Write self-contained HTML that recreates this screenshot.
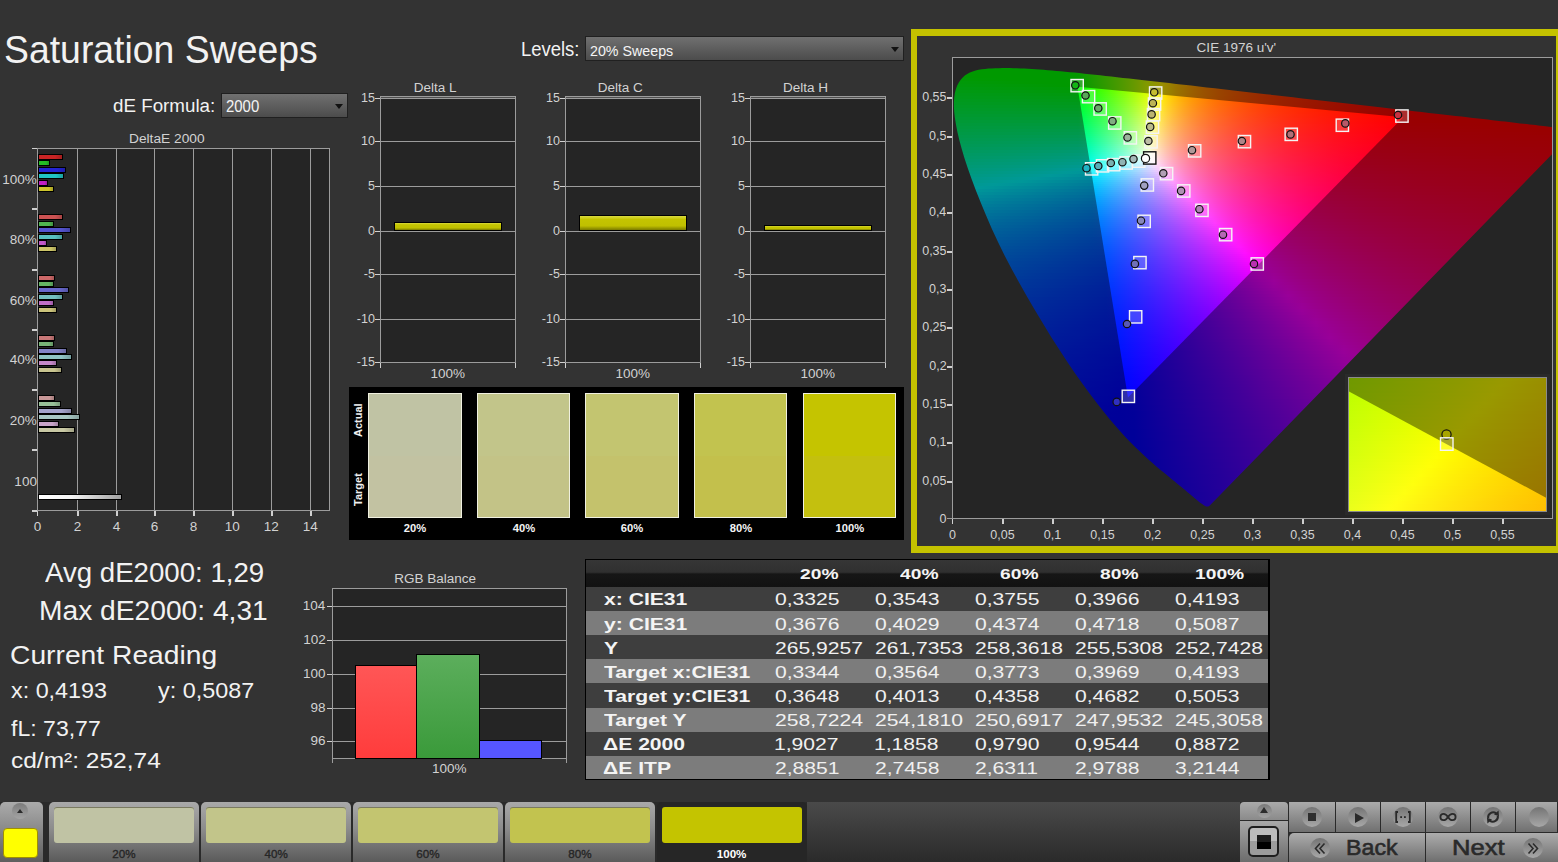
<!DOCTYPE html><html><head><meta charset="utf-8"><style>
*{margin:0;padding:0;box-sizing:border-box}
html,body{width:1558px;height:862px;overflow:hidden;background:#333333;font-family:"Liberation Sans",sans-serif;color:#e8e8e8}
.a{position:absolute}
.t{position:absolute;white-space:nowrap;line-height:1}
</style></head><body><div class="t" style="left:3.92px;top:29.78px;font-size:39.24px;color:#f2f2f2;transform:scaleX(0.9525);transform-origin:0 0;">Saturation Sweeps</div><div class="t" style="left:521.22px;top:39.51px;font-size:19.48px;color:#f2f2f2;transform:scaleX(0.9480);transform-origin:0 0;">Levels:</div><div class="a" style="left:585px;top:36px;width:319px;height:25px;background:#202020;"></div><div class="a" style="left:586px;top:37px;width:317px;height:23px;background:linear-gradient(#707070,#4c4c4c);"></div><div class="t" style="left:590.29px;top:43.73px;font-size:14.97px;color:#f4f4f4;transform:scaleX(0.9526);transform-origin:0 0;">20% Sweeps</div><div class="a" style="left:890.5px;top:47px;width:0;height:0;border-left:4.2px solid transparent;border-right:4.2px solid transparent;border-top:5.5px solid #111"></div><div class="t" style="left:113.25px;top:97.07px;font-size:18.46px;color:#f2f2f2;transform:scaleX(1.0182);transform-origin:0 0;">dE Formula:</div><div class="a" style="left:221px;top:93px;width:127px;height:25px;background:#202020;"></div><div class="a" style="left:222px;top:94px;width:125px;height:23px;background:linear-gradient(#707070,#4c4c4c);"></div><div class="t" style="left:226.05px;top:99.19px;font-size:15.84px;color:#f4f4f4;transform:scaleX(0.9438);transform-origin:0 0;">2000</div><div class="a" style="left:334.5px;top:103.8px;width:0;height:0;border-left:4.2px solid transparent;border-right:4.2px solid transparent;border-top:5.5px solid #111"></div><div class="t" style="left:129.20px;top:131.93px;font-size:13.08px;color:#d2d2d2;transform:scaleX(1.0495);transform-origin:0 0;">DeltaE 2000</div><div class="a" style="left:37px;top:148px;width:293px;height:362px;background:#252525;"></div><div class="a" style="left:77px;top:148px;width:1px;height:362px;background:#9c9c9c;"></div><div class="a" style="left:116px;top:148px;width:1px;height:362px;background:#9c9c9c;"></div><div class="a" style="left:154px;top:148px;width:1px;height:362px;background:#9c9c9c;"></div><div class="a" style="left:193px;top:148px;width:1px;height:362px;background:#9c9c9c;"></div><div class="a" style="left:232px;top:148px;width:1px;height:362px;background:#9c9c9c;"></div><div class="a" style="left:271px;top:148px;width:1px;height:362px;background:#9c9c9c;"></div><div class="a" style="left:310px;top:148px;width:1px;height:362px;background:#9c9c9c;"></div><div class="a" style="left:37px;top:148px;width:293px;height:1px;background:#9c9c9c;"></div><div class="a" style="left:329px;top:148px;width:1px;height:362px;background:#9c9c9c;"></div><div class="a" style="left:37px;top:148px;width:1px;height:368px;background:#9c9c9c;"></div><div class="a" style="left:37px;top:510px;width:293px;height:1px;background:#9c9c9c;"></div><div class="a" style="left:32px;top:148px;width:5px;height:1px;background:#d0d0d0;"></div><div class="a" style="left:32px;top:208px;width:5px;height:2px;background:#d0d0d0;"></div><div class="a" style="left:32px;top:269px;width:5px;height:2px;background:#d0d0d0;"></div><div class="a" style="left:32px;top:329px;width:5px;height:2px;background:#d0d0d0;"></div><div class="a" style="left:32px;top:389px;width:5px;height:2px;background:#d0d0d0;"></div><div class="a" style="left:32px;top:449px;width:5px;height:2px;background:#d0d0d0;"></div><div class="a" style="left:32px;top:510px;width:5px;height:2px;background:#d0d0d0;"></div><div class="a" style="left:37px;top:511px;width:1px;height:5px;background:#d0d0d0;"></div><div class="t" style="left:33.72px;top:520.06px;font-size:13.52px;color:#d2d2d2;">0</div><div class="a" style="left:77px;top:511px;width:2px;height:5px;background:#d0d0d0;"></div><div class="t" style="left:73.75px;top:520.06px;font-size:13.52px;color:#d2d2d2;">2</div><div class="a" style="left:116px;top:511px;width:2px;height:5px;background:#d0d0d0;"></div><div class="t" style="left:112.78px;top:520.06px;font-size:13.52px;color:#d2d2d2;">4</div><div class="a" style="left:154px;top:511px;width:2px;height:5px;background:#d0d0d0;"></div><div class="t" style="left:150.68px;top:520.06px;font-size:13.52px;color:#d2d2d2;">6</div><div class="a" style="left:193px;top:511px;width:2px;height:5px;background:#d0d0d0;"></div><div class="t" style="left:189.72px;top:520.06px;font-size:13.52px;color:#d2d2d2;">8</div><div class="a" style="left:232px;top:511px;width:2px;height:5px;background:#d0d0d0;"></div><div class="t" style="left:224.73px;top:520.06px;font-size:13.52px;color:#d2d2d2;">10</div><div class="a" style="left:271px;top:511px;width:2px;height:5px;background:#d0d0d0;"></div><div class="t" style="left:263.83px;top:520.06px;font-size:13.52px;color:#d2d2d2;">12</div><div class="a" style="left:310px;top:511px;width:2px;height:5px;background:#d0d0d0;"></div><div class="t" style="left:302.66px;top:520.06px;font-size:13.52px;color:#d2d2d2;">14</div><div class="t" style="left:2.27px;top:172.56px;font-size:13.52px;color:#d2d2d2;">100%</div><div class="t" style="left:9.84px;top:232.56px;font-size:13.52px;color:#d2d2d2;">80%</div><div class="t" style="left:9.84px;top:293.56px;font-size:13.52px;color:#d2d2d2;">60%</div><div class="t" style="left:9.84px;top:352.56px;font-size:13.52px;color:#d2d2d2;">40%</div><div class="t" style="left:9.84px;top:413.56px;font-size:13.52px;color:#d2d2d2;">20%</div><div class="t" style="left:14.37px;top:474.56px;font-size:13.52px;color:#d2d2d2;">100</div><div class="a" style="left:38px;top:154px;width:24.6px;height:6px;border:1px solid #000;background:linear-gradient(90deg,#c82424,#c82424 70%,#00000030),#c82424"></div><div class="a" style="left:38px;top:160px;width:11.5px;height:6px;border:1px solid #000;background:linear-gradient(90deg,#24bc24,#24bc24 70%,#00000030),#24bc24"></div><div class="a" style="left:38px;top:167px;width:28.4px;height:6px;border:1px solid #000;background:linear-gradient(90deg,#2424d4,#2424d4 70%,#00000030),#2424d4"></div><div class="a" style="left:38px;top:173px;width:25.6px;height:6px;border:1px solid #000;background:linear-gradient(90deg,#20c4c4,#20c4c4 70%,#00000030),#20c4c4"></div><div class="a" style="left:38px;top:180px;width:10.3px;height:6px;border:1px solid #000;background:linear-gradient(90deg,#c020c4,#c020c4 70%,#00000030),#c020c4"></div><div class="a" style="left:38px;top:186px;width:16.3px;height:6px;border:1px solid #000;background:linear-gradient(90deg,#ccc42c,#ccc42c 70%,#00000030),#ccc42c"></div><div class="a" style="left:38px;top:214px;width:25.3px;height:6px;border:1px solid #000;background:linear-gradient(90deg,#cc5252,#cc5252 70%,#00000030),#cc5252"></div><div class="a" style="left:38px;top:221px;width:16.3px;height:6px;border:1px solid #000;background:linear-gradient(90deg,#50b450,#50b450 70%,#00000030),#50b450"></div><div class="a" style="left:38px;top:227px;width:32.6px;height:6px;border:1px solid #000;background:linear-gradient(90deg,#5454d0,#5454d0 70%,#00000030),#5454d0"></div><div class="a" style="left:38px;top:234px;width:25.3px;height:6px;border:1px solid #000;background:linear-gradient(90deg,#58c0c0,#58c0c0 70%,#00000030),#58c0c0"></div><div class="a" style="left:38px;top:240px;width:9.0px;height:6px;border:1px solid #000;background:linear-gradient(90deg,#c058c8,#c058c8 70%,#00000030),#c058c8"></div><div class="a" style="left:38px;top:246px;width:18.6px;height:6px;border:1px solid #000;background:linear-gradient(90deg,#ccc468,#ccc468 70%,#00000030),#ccc468"></div><div class="a" style="left:38px;top:275px;width:16.6px;height:6px;border:1px solid #000;background:linear-gradient(90deg,#cc6868,#cc6868 70%,#00000030),#cc6868"></div><div class="a" style="left:38px;top:281px;width:15.5px;height:6px;border:1px solid #000;background:linear-gradient(90deg,#64b464,#64b464 70%,#00000030),#64b464"></div><div class="a" style="left:38px;top:287px;width:30.6px;height:6px;border:1px solid #000;background:linear-gradient(90deg,#6868cc,#6868cc 70%,#00000030),#6868cc"></div><div class="a" style="left:38px;top:294px;width:25.3px;height:6px;border:1px solid #000;background:linear-gradient(90deg,#74c0c0,#74c0c0 70%,#00000030),#74c0c0"></div><div class="a" style="left:38px;top:300px;width:15.5px;height:6px;border:1px solid #000;background:linear-gradient(90deg,#c070c8,#c070c8 70%,#00000030),#c070c8"></div><div class="a" style="left:38px;top:307px;width:18.6px;height:6px;border:1px solid #000;background:linear-gradient(90deg,#ccc47c,#ccc47c 70%,#00000030),#ccc47c"></div><div class="a" style="left:38px;top:335px;width:16.6px;height:6px;border:1px solid #000;background:linear-gradient(90deg,#c87878,#c87878 70%,#00000030),#c87878"></div><div class="a" style="left:38px;top:341px;width:15.5px;height:6px;border:1px solid #000;background:linear-gradient(90deg,#78b478,#78b478 70%,#00000030),#78b478"></div><div class="a" style="left:38px;top:348px;width:29.4px;height:6px;border:1px solid #000;background:linear-gradient(90deg,#8484c8,#8484c8 70%,#00000030),#8484c8"></div><div class="a" style="left:38px;top:354px;width:33.6px;height:6px;border:1px solid #000;background:linear-gradient(90deg,#90c4c4,#90c4c4 70%,#00000030),#90c4c4"></div><div class="a" style="left:38px;top:360px;width:18.6px;height:6px;border:1px solid #000;background:linear-gradient(90deg,#c488c8,#c488c8 70%,#00000030),#c488c8"></div><div class="a" style="left:38px;top:367px;width:23.5px;height:6px;border:1px solid #000;background:linear-gradient(90deg,#c8c490,#c8c490 70%,#00000030),#c8c490"></div><div class="a" style="left:38px;top:395px;width:16.6px;height:6px;border:1px solid #000;background:linear-gradient(90deg,#c89898,#c89898 70%,#00000030),#c89898"></div><div class="a" style="left:38px;top:401px;width:23.0px;height:6px;border:1px solid #000;background:linear-gradient(90deg,#98c098,#98c098 70%,#00000030),#98c098"></div><div class="a" style="left:38px;top:408px;width:34.4px;height:6px;border:1px solid #000;background:linear-gradient(90deg,#a4a4cc,#a4a4cc 70%,#00000030),#a4a4cc"></div><div class="a" style="left:38px;top:414px;width:42.4px;height:6px;border:1px solid #000;background:linear-gradient(90deg,#a8c8c4,#a8c8c4 70%,#00000030),#a8c8c4"></div><div class="a" style="left:38px;top:421px;width:21.3px;height:6px;border:1px solid #000;background:linear-gradient(90deg,#c8a4c8,#c8a4c8 70%,#00000030),#c8a4c8"></div><div class="a" style="left:38px;top:427px;width:37.4px;height:6px;border:1px solid #000;background:linear-gradient(90deg,#c8c8a4,#c8c8a4 70%,#00000030),#c8c8a4"></div><div class="a" style="left:38px;top:494px;width:84px;height:6px;border:1px solid #000;background:linear-gradient(90deg,#fff,#f4f4f4 40%,#a0a0a0)"></div><div class="t" style="left:413.77px;top:80.86px;font-size:13.52px;color:#d2d2d2;">Delta L</div><div class="a" style="left:380px;top:96px;width:135px;height:266px;background:#252525;"></div><div class="a" style="left:380px;top:96px;width:136px;height:1px;background:#9c9c9c;"></div><div class="a" style="left:381px;top:97px;width:134px;height:1px;background:#505050;"></div><div class="a" style="left:380px;top:98px;width:136px;height:1px;background:#9c9c9c;"></div><div class="a" style="left:375px;top:98px;width:5px;height:1px;background:#d0d0d0;"></div><div class="t" style="left:361.02px;top:91.72px;font-size:12.50px;color:#d2d2d2;">15</div><div class="a" style="left:380px;top:141px;width:136px;height:1px;background:#9c9c9c;"></div><div class="a" style="left:375px;top:141px;width:5px;height:1px;background:#d0d0d0;"></div><div class="t" style="left:360.96px;top:134.72px;font-size:12.50px;color:#d2d2d2;">10</div><div class="a" style="left:380px;top:186px;width:136px;height:1px;background:#9c9c9c;"></div><div class="a" style="left:375px;top:186px;width:5px;height:1px;background:#d0d0d0;"></div><div class="t" style="left:367.96px;top:179.72px;font-size:12.50px;color:#d2d2d2;">5</div><div class="a" style="left:380px;top:231px;width:136px;height:1px;background:#9c9c9c;"></div><div class="a" style="left:375px;top:231px;width:5px;height:1px;background:#d0d0d0;"></div><div class="t" style="left:367.90px;top:224.72px;font-size:12.50px;color:#d2d2d2;">0</div><div class="a" style="left:380px;top:274px;width:136px;height:1px;background:#9c9c9c;"></div><div class="a" style="left:375px;top:274px;width:5px;height:1px;background:#d0d0d0;"></div><div class="t" style="left:363.77px;top:267.72px;font-size:12.50px;color:#d2d2d2;">-5</div><div class="a" style="left:380px;top:319px;width:136px;height:1px;background:#9c9c9c;"></div><div class="a" style="left:375px;top:319px;width:5px;height:1px;background:#d0d0d0;"></div><div class="t" style="left:356.77px;top:312.72px;font-size:12.50px;color:#d2d2d2;">-10</div><div class="a" style="left:380px;top:362px;width:136px;height:1px;background:#9c9c9c;"></div><div class="a" style="left:375px;top:362px;width:5px;height:1px;background:#d0d0d0;"></div><div class="t" style="left:356.84px;top:355.72px;font-size:12.50px;color:#d2d2d2;">-15</div><div class="a" style="left:380px;top:96px;width:1px;height:266px;background:#9c9c9c;"></div><div class="a" style="left:515px;top:96px;width:1px;height:266px;background:#9c9c9c;"></div><div class="a" style="left:380px;top:363px;width:1px;height:5px;background:#d0d0d0;"></div><div class="a" style="left:515px;top:363px;width:1px;height:5px;background:#d0d0d0;"></div><div class="t" style="left:430.43px;top:366.56px;font-size:13.52px;color:#d2d2d2;">100%</div><div class="a" style="left:394px;top:222px;width:108px;height:9px;border:1px solid #000;background:linear-gradient(#dada40,#c4c400 25%,#c0c000 70%,#7a7a00)"></div><div class="t" style="left:597.69px;top:80.86px;font-size:13.52px;color:#d2d2d2;">Delta C</div><div class="a" style="left:565px;top:96px;width:135px;height:266px;background:#252525;"></div><div class="a" style="left:565px;top:96px;width:136px;height:1px;background:#9c9c9c;"></div><div class="a" style="left:566px;top:97px;width:134px;height:1px;background:#505050;"></div><div class="a" style="left:565px;top:98px;width:136px;height:1px;background:#9c9c9c;"></div><div class="a" style="left:560px;top:98px;width:5px;height:1px;background:#d0d0d0;"></div><div class="t" style="left:546.02px;top:91.72px;font-size:12.50px;color:#d2d2d2;">15</div><div class="a" style="left:565px;top:141px;width:136px;height:1px;background:#9c9c9c;"></div><div class="a" style="left:560px;top:141px;width:5px;height:1px;background:#d0d0d0;"></div><div class="t" style="left:545.96px;top:134.72px;font-size:12.50px;color:#d2d2d2;">10</div><div class="a" style="left:565px;top:186px;width:136px;height:1px;background:#9c9c9c;"></div><div class="a" style="left:560px;top:186px;width:5px;height:1px;background:#d0d0d0;"></div><div class="t" style="left:552.96px;top:179.72px;font-size:12.50px;color:#d2d2d2;">5</div><div class="a" style="left:565px;top:231px;width:136px;height:1px;background:#9c9c9c;"></div><div class="a" style="left:560px;top:231px;width:5px;height:1px;background:#d0d0d0;"></div><div class="t" style="left:552.90px;top:224.72px;font-size:12.50px;color:#d2d2d2;">0</div><div class="a" style="left:565px;top:274px;width:136px;height:1px;background:#9c9c9c;"></div><div class="a" style="left:560px;top:274px;width:5px;height:1px;background:#d0d0d0;"></div><div class="t" style="left:548.77px;top:267.72px;font-size:12.50px;color:#d2d2d2;">-5</div><div class="a" style="left:565px;top:319px;width:136px;height:1px;background:#9c9c9c;"></div><div class="a" style="left:560px;top:319px;width:5px;height:1px;background:#d0d0d0;"></div><div class="t" style="left:541.77px;top:312.72px;font-size:12.50px;color:#d2d2d2;">-10</div><div class="a" style="left:565px;top:362px;width:136px;height:1px;background:#9c9c9c;"></div><div class="a" style="left:560px;top:362px;width:5px;height:1px;background:#d0d0d0;"></div><div class="t" style="left:541.84px;top:355.72px;font-size:12.50px;color:#d2d2d2;">-15</div><div class="a" style="left:565px;top:96px;width:1px;height:266px;background:#9c9c9c;"></div><div class="a" style="left:700px;top:96px;width:1px;height:266px;background:#9c9c9c;"></div><div class="a" style="left:565px;top:363px;width:1px;height:5px;background:#d0d0d0;"></div><div class="a" style="left:700px;top:363px;width:1px;height:5px;background:#d0d0d0;"></div><div class="t" style="left:615.43px;top:366.56px;font-size:13.52px;color:#d2d2d2;">100%</div><div class="a" style="left:579px;top:215px;width:108px;height:16px;border:1px solid #000;background:linear-gradient(#dada40,#c4c400 25%,#c0c000 70%,#7a7a00)"></div><div class="t" style="left:782.99px;top:80.86px;font-size:13.52px;color:#d2d2d2;">Delta H</div><div class="a" style="left:750px;top:96px;width:135px;height:266px;background:#252525;"></div><div class="a" style="left:750px;top:96px;width:136px;height:1px;background:#9c9c9c;"></div><div class="a" style="left:751px;top:97px;width:134px;height:1px;background:#505050;"></div><div class="a" style="left:750px;top:98px;width:136px;height:1px;background:#9c9c9c;"></div><div class="a" style="left:745px;top:98px;width:5px;height:1px;background:#d0d0d0;"></div><div class="t" style="left:731.02px;top:91.72px;font-size:12.50px;color:#d2d2d2;">15</div><div class="a" style="left:750px;top:141px;width:136px;height:1px;background:#9c9c9c;"></div><div class="a" style="left:745px;top:141px;width:5px;height:1px;background:#d0d0d0;"></div><div class="t" style="left:730.96px;top:134.72px;font-size:12.50px;color:#d2d2d2;">10</div><div class="a" style="left:750px;top:186px;width:136px;height:1px;background:#9c9c9c;"></div><div class="a" style="left:745px;top:186px;width:5px;height:1px;background:#d0d0d0;"></div><div class="t" style="left:737.96px;top:179.72px;font-size:12.50px;color:#d2d2d2;">5</div><div class="a" style="left:750px;top:231px;width:136px;height:1px;background:#9c9c9c;"></div><div class="a" style="left:745px;top:231px;width:5px;height:1px;background:#d0d0d0;"></div><div class="t" style="left:737.90px;top:224.72px;font-size:12.50px;color:#d2d2d2;">0</div><div class="a" style="left:750px;top:274px;width:136px;height:1px;background:#9c9c9c;"></div><div class="a" style="left:745px;top:274px;width:5px;height:1px;background:#d0d0d0;"></div><div class="t" style="left:733.77px;top:267.72px;font-size:12.50px;color:#d2d2d2;">-5</div><div class="a" style="left:750px;top:319px;width:136px;height:1px;background:#9c9c9c;"></div><div class="a" style="left:745px;top:319px;width:5px;height:1px;background:#d0d0d0;"></div><div class="t" style="left:726.77px;top:312.72px;font-size:12.50px;color:#d2d2d2;">-10</div><div class="a" style="left:750px;top:362px;width:136px;height:1px;background:#9c9c9c;"></div><div class="a" style="left:745px;top:362px;width:5px;height:1px;background:#d0d0d0;"></div><div class="t" style="left:726.84px;top:355.72px;font-size:12.50px;color:#d2d2d2;">-15</div><div class="a" style="left:750px;top:96px;width:1px;height:266px;background:#9c9c9c;"></div><div class="a" style="left:885px;top:96px;width:1px;height:266px;background:#9c9c9c;"></div><div class="a" style="left:750px;top:363px;width:1px;height:5px;background:#d0d0d0;"></div><div class="a" style="left:885px;top:363px;width:1px;height:5px;background:#d0d0d0;"></div><div class="t" style="left:800.43px;top:366.56px;font-size:13.52px;color:#d2d2d2;">100%</div><div class="a" style="left:764px;top:225px;width:108px;height:6px;border:1px solid #000;background:linear-gradient(#dada40,#c4c400 25%,#c0c000 70%,#7a7a00)"></div><div class="a" style="left:349px;top:387px;width:555px;height:153px;background:#000;"></div><div class="a" style="left:368px;top:393px;width:94px;height:125px;border:1px solid #f0f0e0;background:linear-gradient(#c0c3a4 50%,#c2c2a2 50%)"></div><div class="t" style="left:403.75px;top:522.53px;font-size:11.19px;color:#f4f4f4;font-weight:bold;">20%</div><div class="a" style="left:477px;top:393px;width:93px;height:125px;border:1px solid #f0f0e0;background:linear-gradient(#c2c58a 50%,#c3c387 50%)"></div><div class="t" style="left:512.86px;top:522.53px;font-size:11.19px;color:#f4f4f4;font-weight:bold;">40%</div><div class="a" style="left:585px;top:393px;width:94px;height:125px;border:1px solid #f0f0e0;background:linear-gradient(#c3c570 50%,#c4c26c 50%)"></div><div class="t" style="left:620.75px;top:522.53px;font-size:11.19px;color:#f4f4f4;font-weight:bold;">60%</div><div class="a" style="left:694px;top:393px;width:93px;height:125px;border:1px solid #f0f0e0;background:linear-gradient(#c2c34f 50%,#c3c04c 50%)"></div><div class="t" style="left:729.78px;top:522.53px;font-size:11.19px;color:#f4f4f4;font-weight:bold;">80%</div><div class="a" style="left:803px;top:393px;width:93px;height:125px;border:1px solid #f0f0e0;background:linear-gradient(#c5c400 50%,#c4c00e 50%)"></div><div class="t" style="left:835.48px;top:522.53px;font-size:11.19px;color:#f4f4f4;font-weight:bold;">100%</div><div class="t" style="left:352.5px;top:437px;font-size:11px;font-weight:bold;color:#f0f0f0;transform:rotate(-90deg);transform-origin:0 0">Actual</div><div class="t" style="left:352.5px;top:506px;font-size:11px;font-weight:bold;color:#f0f0f0;transform:rotate(-90deg);transform-origin:0 0">Target</div><div class="t" style="left:394.21px;top:572.06px;font-size:13.52px;color:#d2d2d2;">RGB Balance</div><div class="a" style="left:332px;top:588px;width:234px;height:170px;background:#252525;"></div><div class="a" style="left:332px;top:588px;width:235px;height:1px;background:#9c9c9c;"></div><div class="a" style="left:566px;top:588px;width:1px;height:175px;background:#9c9c9c;"></div><div class="a" style="left:332px;top:588px;width:1px;height:175px;background:#9c9c9c;"></div><div class="a" style="left:332px;top:606px;width:234px;height:1px;background:#9c9c9c;"></div><div class="a" style="left:327px;top:606px;width:5px;height:1px;background:#d0d0d0;"></div><div class="t" style="left:302.83px;top:599.16px;font-size:13.52px;color:#d2d2d2;">104</div><div class="a" style="left:332px;top:640px;width:234px;height:1px;background:#9c9c9c;"></div><div class="a" style="left:327px;top:640px;width:5px;height:1px;background:#d0d0d0;"></div><div class="t" style="left:303.17px;top:633.16px;font-size:13.52px;color:#d2d2d2;">102</div><div class="a" style="left:332px;top:674px;width:234px;height:1px;background:#9c9c9c;"></div><div class="a" style="left:327px;top:674px;width:5px;height:1px;background:#d0d0d0;"></div><div class="t" style="left:302.97px;top:667.16px;font-size:13.52px;color:#d2d2d2;">100</div><div class="a" style="left:332px;top:708px;width:234px;height:1px;background:#9c9c9c;"></div><div class="a" style="left:327px;top:708px;width:5px;height:1px;background:#d0d0d0;"></div><div class="t" style="left:310.54px;top:701.16px;font-size:13.52px;color:#d2d2d2;">98</div><div class="a" style="left:332px;top:741px;width:234px;height:1px;background:#9c9c9c;"></div><div class="a" style="left:327px;top:741px;width:5px;height:1px;background:#d0d0d0;"></div><div class="t" style="left:310.54px;top:734.16px;font-size:13.52px;color:#d2d2d2;">96</div><div class="a" style="left:332px;top:758px;width:235px;height:1px;background:#9c9c9c;"></div><div class="a" style="left:355px;top:665px;width:62px;height:94px;border:1px solid #000;background:linear-gradient(#ff5656,#ff3c3c)"></div><div class="a" style="left:416px;top:654px;width:64px;height:105px;border:1px solid #000;background:linear-gradient(#5cae5c,#3a9a3a)"></div><div class="a" style="left:479px;top:740px;width:63px;height:19px;border:1px solid #000;background:#5656ff"></div><div class="t" style="left:432.03px;top:762.06px;font-size:13.52px;color:#d2d2d2;">100%</div><div class="t" style="left:45.00px;top:559.96px;font-size:26.74px;color:#f2f2f2;transform:scaleX(1.0338);transform-origin:0 0;">Avg dE2000: 1,29</div><div class="t" style="left:39.44px;top:597.76px;font-size:26.74px;color:#f2f2f2;transform:scaleX(1.0544);transform-origin:0 0;">Max dE2000: 4,31</div><div class="t" style="left:10.29px;top:643.10px;font-size:25.87px;color:#f2f2f2;transform:scaleX(1.0921);transform-origin:0 0;">Current Reading</div><div class="t" style="left:11.47px;top:679.54px;font-size:21.80px;color:#f2f2f2;transform:scaleX(1.0708);transform-origin:0 0;">x: 0,4193</div><div class="t" style="left:157.88px;top:679.54px;font-size:21.80px;color:#f2f2f2;transform:scaleX(1.0732);transform-origin:0 0;">y: 0,5087</div><div class="t" style="left:11.35px;top:716.81px;font-size:22.67px;color:#f2f2f2;transform:scaleX(1.0181);transform-origin:0 0;">fL: 73,77</div><div class="t" style="left:10.72px;top:748.81px;font-size:22.67px;color:#f2f2f2;transform:scaleX(1.0811);transform-origin:0 0;">cd/m²: 252,74</div><div class="a" style="left:585px;top:559px;width:685px;height:221px;background:#000;"></div><div class="a" style="left:586px;top:560px;width:682px;height:27px;background:linear-gradient(#363636,#303030 45%,#161616 52%,#121212);"></div><div class="t" style="left:800.18px;top:566.55px;font-size:14.83px;color:#f4f4f4;font-weight:bold;transform:scaleX(1.2970);transform-origin:0 0;">20%</div><div class="t" style="left:900.37px;top:566.55px;font-size:14.83px;color:#f4f4f4;font-weight:bold;transform:scaleX(1.2970);transform-origin:0 0;">40%</div><div class="t" style="left:1000.18px;top:566.55px;font-size:14.83px;color:#f4f4f4;font-weight:bold;transform:scaleX(1.2970);transform-origin:0 0;">60%</div><div class="t" style="left:1100.22px;top:566.55px;font-size:14.83px;color:#f4f4f4;font-weight:bold;transform:scaleX(1.2970);transform-origin:0 0;">80%</div><div class="t" style="left:1194.55px;top:566.55px;font-size:14.83px;color:#f4f4f4;font-weight:bold;transform:scaleX(1.2970);transform-origin:0 0;">100%</div><div class="a" style="left:586px;top:587.0px;width:682px;height:24.2px;background:#3e3e3e;"></div><div class="t" style="left:603.79px;top:592.47px;font-size:16.57px;color:#f4f4f4;font-weight:bold;transform:scaleX(1.2750);transform-origin:0 0;">x: CIE31</div><div class="t" style="left:774.75px;top:592.47px;font-size:16.57px;color:#f0f0f0;transform:scaleX(1.2750);transform-origin:0 0;">0,3325</div><div class="t" style="left:874.75px;top:592.47px;font-size:16.57px;color:#f0f0f0;transform:scaleX(1.2750);transform-origin:0 0;">0,3543</div><div class="t" style="left:974.75px;top:592.47px;font-size:16.57px;color:#f0f0f0;transform:scaleX(1.2750);transform-origin:0 0;">0,3755</div><div class="t" style="left:1074.75px;top:592.47px;font-size:16.57px;color:#f0f0f0;transform:scaleX(1.2750);transform-origin:0 0;">0,3966</div><div class="t" style="left:1174.75px;top:592.47px;font-size:16.57px;color:#f0f0f0;transform:scaleX(1.2750);transform-origin:0 0;">0,4193</div><div class="a" style="left:586px;top:611.1px;width:682px;height:24.2px;background:#7c7c7c;"></div><div class="t" style="left:603.79px;top:616.57px;font-size:16.57px;color:#f4f4f4;font-weight:bold;transform:scaleX(1.2750);transform-origin:0 0;">y: CIE31</div><div class="t" style="left:774.75px;top:616.57px;font-size:16.57px;color:#f0f0f0;transform:scaleX(1.2750);transform-origin:0 0;">0,3676</div><div class="t" style="left:874.75px;top:616.57px;font-size:16.57px;color:#f0f0f0;transform:scaleX(1.2750);transform-origin:0 0;">0,4029</div><div class="t" style="left:974.75px;top:616.57px;font-size:16.57px;color:#f0f0f0;transform:scaleX(1.2750);transform-origin:0 0;">0,4374</div><div class="t" style="left:1074.75px;top:616.57px;font-size:16.57px;color:#f0f0f0;transform:scaleX(1.2750);transform-origin:0 0;">0,4718</div><div class="t" style="left:1174.75px;top:616.57px;font-size:16.57px;color:#f0f0f0;transform:scaleX(1.2750);transform-origin:0 0;">0,5087</div><div class="a" style="left:586px;top:635.2px;width:682px;height:24.2px;background:#3e3e3e;"></div><div class="t" style="left:603.58px;top:640.67px;font-size:16.57px;color:#f4f4f4;font-weight:bold;transform:scaleX(1.2750);transform-origin:0 0;">Y</div><div class="t" style="left:774.54px;top:640.67px;font-size:16.57px;color:#f0f0f0;transform:scaleX(1.2750);transform-origin:0 0;">265,9257</div><div class="t" style="left:874.54px;top:640.67px;font-size:16.57px;color:#f0f0f0;transform:scaleX(1.2750);transform-origin:0 0;">261,7353</div><div class="t" style="left:974.54px;top:640.67px;font-size:16.57px;color:#f0f0f0;transform:scaleX(1.2750);transform-origin:0 0;">258,3618</div><div class="t" style="left:1074.54px;top:640.67px;font-size:16.57px;color:#f0f0f0;transform:scaleX(1.2750);transform-origin:0 0;">255,5308</div><div class="t" style="left:1174.54px;top:640.67px;font-size:16.57px;color:#f0f0f0;transform:scaleX(1.2750);transform-origin:0 0;">252,7428</div><div class="a" style="left:586px;top:659.3px;width:682px;height:24.2px;background:#7c7c7c;"></div><div class="t" style="left:603.79px;top:664.77px;font-size:16.57px;color:#f4f4f4;font-weight:bold;transform:scaleX(1.2750);transform-origin:0 0;">Target x:CIE31</div><div class="t" style="left:774.75px;top:664.77px;font-size:16.57px;color:#f0f0f0;transform:scaleX(1.2750);transform-origin:0 0;">0,3344</div><div class="t" style="left:874.75px;top:664.77px;font-size:16.57px;color:#f0f0f0;transform:scaleX(1.2750);transform-origin:0 0;">0,3564</div><div class="t" style="left:974.75px;top:664.77px;font-size:16.57px;color:#f0f0f0;transform:scaleX(1.2750);transform-origin:0 0;">0,3773</div><div class="t" style="left:1074.75px;top:664.77px;font-size:16.57px;color:#f0f0f0;transform:scaleX(1.2750);transform-origin:0 0;">0,3969</div><div class="t" style="left:1174.75px;top:664.77px;font-size:16.57px;color:#f0f0f0;transform:scaleX(1.2750);transform-origin:0 0;">0,4193</div><div class="a" style="left:586px;top:683.4px;width:682px;height:24.2px;background:#3e3e3e;"></div><div class="t" style="left:603.79px;top:688.87px;font-size:16.57px;color:#f4f4f4;font-weight:bold;transform:scaleX(1.2750);transform-origin:0 0;">Target y:CIE31</div><div class="t" style="left:774.75px;top:688.87px;font-size:16.57px;color:#f0f0f0;transform:scaleX(1.2750);transform-origin:0 0;">0,3648</div><div class="t" style="left:874.75px;top:688.87px;font-size:16.57px;color:#f0f0f0;transform:scaleX(1.2750);transform-origin:0 0;">0,4013</div><div class="t" style="left:974.75px;top:688.87px;font-size:16.57px;color:#f0f0f0;transform:scaleX(1.2750);transform-origin:0 0;">0,4358</div><div class="t" style="left:1074.75px;top:688.87px;font-size:16.57px;color:#f0f0f0;transform:scaleX(1.2750);transform-origin:0 0;">0,4682</div><div class="t" style="left:1174.75px;top:688.87px;font-size:16.57px;color:#f0f0f0;transform:scaleX(1.2750);transform-origin:0 0;">0,5053</div><div class="a" style="left:586px;top:707.5px;width:682px;height:24.2px;background:#7c7c7c;"></div><div class="t" style="left:603.79px;top:712.97px;font-size:16.57px;color:#f4f4f4;font-weight:bold;transform:scaleX(1.2750);transform-origin:0 0;">Target Y</div><div class="t" style="left:774.54px;top:712.97px;font-size:16.57px;color:#f0f0f0;transform:scaleX(1.2750);transform-origin:0 0;">258,7224</div><div class="t" style="left:874.54px;top:712.97px;font-size:16.57px;color:#f0f0f0;transform:scaleX(1.2750);transform-origin:0 0;">254,1810</div><div class="t" style="left:974.54px;top:712.97px;font-size:16.57px;color:#f0f0f0;transform:scaleX(1.2750);transform-origin:0 0;">250,6917</div><div class="t" style="left:1074.54px;top:712.97px;font-size:16.57px;color:#f0f0f0;transform:scaleX(1.2750);transform-origin:0 0;">247,9532</div><div class="t" style="left:1174.54px;top:712.97px;font-size:16.57px;color:#f0f0f0;transform:scaleX(1.2750);transform-origin:0 0;">245,3058</div><div class="a" style="left:586px;top:731.6px;width:682px;height:24.2px;background:#3e3e3e;"></div><div class="t" style="left:603.15px;top:737.07px;font-size:16.57px;color:#f4f4f4;font-weight:bold;transform:scaleX(1.2750);transform-origin:0 0;">ΔE 2000</div><div class="t" style="left:774.02px;top:737.07px;font-size:16.57px;color:#f0f0f0;transform:scaleX(1.2750);transform-origin:0 0;">1,9027</div><div class="t" style="left:874.02px;top:737.07px;font-size:16.57px;color:#f0f0f0;transform:scaleX(1.2750);transform-origin:0 0;">1,1858</div><div class="t" style="left:974.75px;top:737.07px;font-size:16.57px;color:#f0f0f0;transform:scaleX(1.2750);transform-origin:0 0;">0,9790</div><div class="t" style="left:1074.75px;top:737.07px;font-size:16.57px;color:#f0f0f0;transform:scaleX(1.2750);transform-origin:0 0;">0,9544</div><div class="t" style="left:1174.75px;top:737.07px;font-size:16.57px;color:#f0f0f0;transform:scaleX(1.2750);transform-origin:0 0;">0,8872</div><div class="a" style="left:586px;top:755.7px;width:682px;height:23.2px;background:#7c7c7c;"></div><div class="t" style="left:603.15px;top:761.17px;font-size:16.57px;color:#f4f4f4;font-weight:bold;transform:scaleX(1.2750);transform-origin:0 0;">ΔE ITP</div><div class="t" style="left:774.54px;top:761.17px;font-size:16.57px;color:#f0f0f0;transform:scaleX(1.2750);transform-origin:0 0;">2,8851</div><div class="t" style="left:874.54px;top:761.17px;font-size:16.57px;color:#f0f0f0;transform:scaleX(1.2750);transform-origin:0 0;">2,7458</div><div class="t" style="left:974.54px;top:761.17px;font-size:16.57px;color:#f0f0f0;transform:scaleX(1.2750);transform-origin:0 0;">2,6311</div><div class="t" style="left:1074.54px;top:761.17px;font-size:16.57px;color:#f0f0f0;transform:scaleX(1.2750);transform-origin:0 0;">2,9788</div><div class="t" style="left:1174.75px;top:761.17px;font-size:16.57px;color:#f0f0f0;transform:scaleX(1.2750);transform-origin:0 0;">3,2144</div><div class="a" style="left:0px;top:802px;width:1558px;height:60px;background:#2a2a2a;"></div><div class="a" style="left:0;top:802px;width:43px;height:60px;border-radius:5px 5px 0 0;background:linear-gradient(#ababab,#8a8a8a 45%,#5e5e5e)"></div><div class="a" style="left:12px;top:803px;width:16px;height:16px;border-radius:50%;background:linear-gradient(#7c7c7c,#a4a4a4)"></div><div class="a" style="left:16.5px;top:808.5px;width:0;height:0;border-left:3.7px solid transparent;border-right:3.7px solid transparent;border-bottom:4.8px solid #2a2a2a"></div><div class="a" style="left:3px;top:828px;width:35px;height:30px;border-radius:4px;background:#ffff00;border:1px solid #a09000"></div><div class="a" style="left:49px;top:802px;width:150px;height:60px;border-radius:5px 5px 0 0;background:linear-gradient(#a9a9a9,#8c8c8c 45%,#5a5a5a)"></div><div class="a" style="left:54px;top:807px;width:140px;height:36px;border-radius:3px;background:#c0c3a4;box-shadow:inset 0 1px 0 #7a7a60"></div><div class="t" style="left:112.28px;top:847.66px;font-size:11.63px;color:#262626;-webkit-text-stroke:0.35px #262626;">20%</div><div class="a" style="left:201px;top:802px;width:150px;height:60px;border-radius:5px 5px 0 0;background:linear-gradient(#a9a9a9,#8c8c8c 45%,#5a5a5a)"></div><div class="a" style="left:206px;top:807px;width:140px;height:36px;border-radius:3px;background:#c2c58a;box-shadow:inset 0 1px 0 #7a7a60"></div><div class="t" style="left:264.46px;top:847.66px;font-size:11.63px;color:#262626;-webkit-text-stroke:0.35px #262626;">40%</div><div class="a" style="left:353px;top:802px;width:150px;height:60px;border-radius:5px 5px 0 0;background:linear-gradient(#a9a9a9,#8c8c8c 45%,#5a5a5a)"></div><div class="a" style="left:358px;top:807px;width:140px;height:36px;border-radius:3px;background:#c3c570;box-shadow:inset 0 1px 0 #7a7a60"></div><div class="t" style="left:416.28px;top:847.66px;font-size:11.63px;color:#262626;-webkit-text-stroke:0.35px #262626;">60%</div><div class="a" style="left:505px;top:802px;width:150px;height:60px;border-radius:5px 5px 0 0;background:linear-gradient(#a9a9a9,#8c8c8c 45%,#5a5a5a)"></div><div class="a" style="left:510px;top:807px;width:140px;height:36px;border-radius:3px;background:#c2c34f;box-shadow:inset 0 1px 0 #7a7a60"></div><div class="t" style="left:568.31px;top:847.66px;font-size:11.63px;color:#262626;-webkit-text-stroke:0.35px #262626;">80%</div><div class="a" style="left:657px;top:802px;width:150px;height:60px;border-radius:5px 5px 0 0;background:#262626"></div><div class="a" style="left:662px;top:807px;width:140px;height:36px;border-radius:3px;background:#c4c400"></div><div class="t" style="left:716.71px;top:847.66px;font-size:11.63px;color:#ffffff;font-weight:bold;">100%</div><div class="a" style="left:807px;top:802px;width:433px;height:60px;background:linear-gradient(#4a4a4a,#2a2a2a)"></div><div class="a" style="left:1240px;top:802px;width:48px;height:18px;border-radius:4px 4px 0 0;background:linear-gradient(#aaaaaa,#8a8a8a)"></div><div class="a" style="left:1257px;top:804px;width:15px;height:14px;border-radius:50%;background:linear-gradient(#7a7a7a,#a2a2a2)"></div><div class="a" style="left:1260px;top:807px;width:0;height:0;border-left:4.5px solid transparent;border-right:4.5px solid transparent;border-bottom:6px solid #2c2c2c"></div><div class="a" style="left:1240px;top:821px;width:48px;height:41px;background:linear-gradient(#a8a8a8,#6c6c6c)"></div><div class="a" style="left:1248px;top:826px;width:31px;height:31px;border-radius:5px;border:2px solid #1e1e1e;background:linear-gradient(#bcbcbc 50%,#9c9c9c 50%)"></div><div class="a" style="left:1257px;top:835px;width:14px;height:14px;background:linear-gradient(#1c1c1c 50%,#000 50%)"></div><div class="a" style="left:1289px;top:802px;width:46px;height:30px;background:linear-gradient(#ababab,#707070)"></div><div class="a" style="left:1302px;top:807px;width:20px;height:20px;border-radius:50%;background:linear-gradient(#747474,#a8a8a8)"></div><div class="a" style="left:1336px;top:802px;width:44px;height:30px;background:linear-gradient(#ababab,#707070)"></div><div class="a" style="left:1348px;top:807px;width:20px;height:20px;border-radius:50%;background:linear-gradient(#747474,#a8a8a8)"></div><div class="a" style="left:1381px;top:802px;width:44px;height:30px;background:linear-gradient(#ababab,#707070)"></div><div class="a" style="left:1393px;top:807px;width:20px;height:20px;border-radius:50%;background:linear-gradient(#747474,#a8a8a8)"></div><div class="a" style="left:1426px;top:802px;width:44px;height:30px;background:linear-gradient(#ababab,#707070)"></div><div class="a" style="left:1438px;top:807px;width:20px;height:20px;border-radius:50%;background:linear-gradient(#747474,#a8a8a8)"></div><div class="a" style="left:1471px;top:802px;width:44px;height:30px;background:linear-gradient(#ababab,#707070)"></div><div class="a" style="left:1483px;top:807px;width:20px;height:20px;border-radius:50%;background:linear-gradient(#747474,#a8a8a8)"></div><div class="a" style="left:1516px;top:802px;width:41px;height:30px;background:linear-gradient(#ababab,#707070)"></div><div class="a" style="left:1529px;top:807px;width:20px;height:20px;border-radius:50%;background:linear-gradient(#747474,#a8a8a8)"></div><div class="a" style="left:1308px;top:813px;width:8px;height:8px;background:#2e2e2e"></div><div class="a" style="left:1355px;top:813px;width:0;height:0;border-top:5px solid transparent;border-bottom:5px solid transparent;border-left:9px solid #2a2a2a"></div><svg class="a" style="left:1393px;top:807px" width="20" height="20" viewBox="0 0 20 20"><path d="M5 5H3.2V15H5M15 5H16.8V15H15" stroke="#2a2a2a" stroke-width="1.8" fill="none"/><rect x="7.2" y="9.2" width="1.8" height="1.8" fill="#2a2a2a"/><rect x="11" y="9.2" width="1.8" height="1.8" fill="#2a2a2a"/></svg><svg class="a" style="left:1438px;top:807px" width="20" height="20" viewBox="0 0 20 20"><path d="M10 10C8.5 7.5 7 6.8 5.5 6.8C3.6 6.8 2.4 8.2 2.4 10C2.4 11.8 3.6 13.2 5.5 13.2C7 13.2 8.5 12.5 10 10C11.5 7.5 13 6.8 14.5 6.8C16.4 6.8 17.6 8.2 17.6 10C17.6 11.8 16.4 13.2 14.5 13.2C13 13.2 11.5 12.5 10 10Z" stroke="#2a2a2a" stroke-width="1.8" fill="none"/></svg><svg class="a" style="left:1484px;top:808px" width="18" height="18" viewBox="0 0 18 18"><path d="M4.2 10.2A5 5 0 0 1 12.2 5.4" stroke="#2a2a2a" stroke-width="2" fill="none"/><path d="M13.8 7.8A5 5 0 0 1 5.8 12.6" stroke="#2a2a2a" stroke-width="2" fill="none"/><path d="M14.6 2.6L15 8.2L10 6.6Z" fill="#2a2a2a"/><path d="M3.4 15.4L3 9.8L8 11.4Z" fill="#2a2a2a"/></svg><div class="a" style="left:1289px;top:833px;width:136px;height:29px;border-radius:5px 0 0 0;background:linear-gradient(#adadad,#6e6e6e)"></div><div class="a" style="left:1426px;top:833px;width:132px;height:29px;background:linear-gradient(#adadad,#6e6e6e)"></div><div class="a" style="left:1310px;top:838px;width:20px;height:20px;border-radius:50%;background:linear-gradient(#747474,#a8a8a8)"></div><div class="a" style="left:1523px;top:838px;width:20px;height:20px;border-radius:50%;background:linear-gradient(#747474,#a8a8a8)"></div><svg class="a" style="left:1310px;top:838px" width="20" height="20" viewBox="0 0 20 20"><path d="M10 5.5L5.5 10.5L10 15.5M14.5 5.5L10 10.5L14.5 15.5" stroke="#2a2a2a" stroke-width="1.6" fill="none"/></svg><svg class="a" style="left:1523px;top:838px" width="20" height="20" viewBox="0 0 20 20"><path d="M5.5 5.5L10 10.5L5.5 15.5M10 5.5L14.5 10.5L10 15.5" stroke="#2a2a2a" stroke-width="1.6" fill="none"/></svg><div class="t" style="left:1345.74px;top:836.80px;font-size:22.09px;color:#2a2a2a;transform:scaleX(1.0509);transform-origin:0 0;-webkit-text-stroke:0.6px #2a2a2a;">Back</div><div class="t" style="left:1452.15px;top:837.05px;font-size:22.38px;color:#2a2a2a;transform:scaleX(1.1430);transform-origin:0 0;-webkit-text-stroke:0.6px #2a2a2a;">Next</div><div class="a" style="left:911px;top:29px;width:651px;height:524px;border:6px solid #c4c200;border-top-width:7px;border-bottom-width:7px"></div><div class="t" style="left:1196.62px;top:41.06px;font-size:13.52px;color:#d2d2d2;">CIE 1976 u&#x27;v&#x27;</div><div class="a" style="left:952px;top:57px;width:601px;height:462px;background:#252525;"></div><div class="a" style="left:952px;top:57px;width:601px;height:462px;overflow:hidden;clip-path:polygon(257.3px 449.0px,257.3px 449.0px,257.2px 449.0px,257.2px 449.0px,257.1px 449.0px,257.1px 449.1px,257.0px 449.1px,257.0px 449.2px,256.9px 449.3px,256.8px 449.3px,256.8px 449.3px,256.7px 449.2px,256.6px 449.3px,256.5px 449.3px,256.4px 449.4px,256.3px 449.5px,256.2px 449.5px,256.1px 449.5px,256.0px 449.5px,255.8px 449.5px,255.7px 449.5px,255.5px 449.5px,255.4px 449.5px,255.2px 449.5px,255.0px 449.5px,254.9px 449.5px,254.7px 449.6px,254.5px 449.6px,254.2px 449.5px,253.9px 449.4px,253.6px 449.3px,253.2px 449.1px,252.7px 448.8px,252.2px 448.4px,251.5px 448.0px,250.9px 447.6px,250.1px 447.1px,249.3px 446.5px,248.5px 445.9px,247.6px 445.2px,246.6px 444.4px,245.5px 443.5px,244.3px 442.5px,243.0px 441.4px,241.6px 440.3px,240.1px 439.1px,238.6px 437.7px,236.9px 436.3px,235.2px 434.9px,233.4px 433.3px,231.4px 431.7px,229.4px 430.0px,227.1px 428.2px,224.7px 426.2px,222.1px 424.1px,219.4px 421.9px,216.6px 419.6px,213.6px 417.1px,210.5px 414.6px,207.3px 411.9px,203.8px 408.9px,200.2px 405.8px,196.4px 402.4px,192.4px 398.8px,188.2px 394.8px,183.9px 390.7px,179.4px 386.3px,174.7px 381.4px,169.5px 375.8px,163.8px 369.3px,157.7px 362.2px,151.3px 354.3px,144.6px 345.8px,137.6px 336.6px,130.3px 326.6px,122.8px 316.0px,115.2px 304.8px,107.4px 292.8px,99.3px 280.2px,91.3px 267.0px,83.3px 253.8px,75.4px 240.2px,67.5px 226.3px,59.8px 212.3px,52.6px 198.6px,46.0px 185.0px,39.7px 171.4px,34.0px 158.2px,28.7px 145.6px,23.9px 133.6px,19.6px 122.0px,15.7px 111.1px,12.4px 100.9px,9.6px 91.6px,7.3px 83.0px,5.4px 75.0px,4.0px 67.7px,2.9px 61.1px,2.2px 55.1px,1.9px 49.6px,1.9px 44.6px,2.3px 40.0px,2.9px 35.8px,3.9px 32.1px,5.1px 28.7px,6.7px 25.7px,8.5px 23.0px,10.5px 20.7px,12.8px 18.6px,15.2px 16.9px,17.9px 15.6px,20.7px 14.4px,23.6px 13.5px,26.7px 12.8px,29.9px 12.3px,33.2px 11.9px,36.5px 11.6px,39.9px 11.4px,43.4px 11.2px,47.0px 11.2px,50.6px 11.1px,54.1px 11.1px,57.6px 11.1px,61.2px 11.2px,64.8px 11.3px,68.5px 11.4px,72.2px 11.6px,75.9px 11.8px,79.7px 12.0px,83.6px 12.2px,87.6px 12.5px,91.6px 12.8px,95.8px 13.2px,100.0px 13.5px,104.3px 13.9px,108.7px 14.3px,113.2px 14.7px,117.8px 15.2px,122.5px 15.6px,127.4px 16.1px,132.4px 16.7px,137.5px 17.2px,142.7px 17.7px,148.1px 18.3px,153.6px 18.9px,159.3px 19.6px,165.0px 20.2px,171.0px 20.9px,177.1px 21.5px,183.4px 22.2px,189.8px 23.0px,196.4px 23.7px,203.1px 24.5px,210.0px 25.3px,217.1px 26.1px,224.3px 26.9px,231.7px 27.7px,239.2px 28.6px,246.9px 29.5px,254.8px 30.4px,262.8px 31.3px,271.0px 32.3px,279.4px 33.2px,287.9px 34.2px,296.5px 35.2px,305.2px 36.2px,314.1px 37.2px,323.0px 38.2px,332.0px 39.3px,341.1px 40.3px,350.3px 41.4px,359.5px 42.4px,368.6px 43.5px,377.5px 44.5px,386.4px 45.5px,395.2px 46.5px,404.0px 47.5px,412.7px 48.5px,421.5px 49.5px,430.1px 50.5px,438.4px 51.5px,446.6px 52.4px,454.5px 53.3px,462.2px 54.2px,469.7px 55.0px,476.9px 55.9px,484.0px 56.7px,490.7px 57.5px,497.3px 58.2px,503.5px 58.9px,509.5px 59.6px,515.3px 60.3px,520.8px 60.9px,526.0px 61.5px,531.0px 62.1px,535.8px 62.6px,540.4px 63.2px,544.8px 63.7px,549.0px 64.2px,553.1px 64.6px,557.0px 65.1px,560.8px 65.5px,564.5px 65.9px,568.0px 66.4px,571.4px 66.7px,574.6px 67.1px,577.7px 67.5px,580.7px 67.8px,583.5px 68.1px,586.2px 68.4px,588.7px 68.7px,591.1px 69.0px,593.4px 69.2px,595.4px 69.5px,597.1px 69.7px,598.9px 69.9px,601.0px 70.1px,603.4px 70.4px,606.1px 70.7px,608.8px 71.0px,611.4px 71.3px,613.9px 71.6px,616.3px 71.9px,618.6px 72.2px,620.4px 72.4px,621.7px 72.5px,622.7px 72.6px,623.4px 72.7px,623.9px 72.8px)"><div style="height:3px;background:linear-gradient(90deg,#009900 0px,#009900 14px,#009900 28px,#009900 42px,#009900 56px,#009900 70px,#009900 84px,#009900 98px,#009900 112px,#089900 126px,#1e9900 140px,#349900 154px,#4c9900 168px,#659900 182px,#809900 196px,#999400 210px,#997b00 224px,#996800 238px,#995900 252px,#994d00 266px,#994200 280px,#993a00 294px,#993200 308px,#992c00 322px,#992600 336px,#992100 350px,#991d00 364px,#991900 378px,#991500 392px,#991200 406px,#990f00 420px,#990c00 434px,#990a00 448px,#990700 462px,#990500 476px,#990300 490px,#990100 504px,#990000 518px,#990000 532px,#990000 546px,#990000 560px,#990000 574px,#990000 588px,#990000 601px)"></div><div style="height:3px;background:linear-gradient(90deg,#009900 0px,#009900 14px,#009900 28px,#009900 42px,#009900 56px,#009900 70px,#009900 84px,#009900 98px,#009900 112px,#089900 126px,#1d9900 140px,#349900 154px,#4c9900 168px,#659900 182px,#819900 196px,#999400 210px,#997b00 224px,#996800 238px,#995800 252px,#994c00 266px,#994200 280px,#993900 294px,#993200 308px,#992b00 322px,#992600 336px,#992100 350px,#991c00 364px,#991800 378px,#991500 392px,#991100 406px,#990e00 420px,#990c00 434px,#990900 448px,#990700 462px,#990400 476px,#990200 490px,#990000 504px,#990000 518px,#990000 532px,#990000 546px,#990000 560px,#990000 574px,#990000 588px,#990000 601px)"></div><div style="height:3px;background:linear-gradient(90deg,#009900 0px,#009900 14px,#009900 28px,#009900 42px,#009900 56px,#009900 70px,#009900 84px,#009900 98px,#009900 112px,#079900 126px,#1d9900 140px,#349900 154px,#4c9900 168px,#659900 182px,#819900 196px,#999300 210px,#997a00 224px,#996700 238px,#995800 252px,#994b00 266px,#994100 280px,#993800 294px,#993100 308px,#992b00 322px,#992500 336px,#992000 350px,#991c00 364px,#991800 378px,#991400 392px,#991100 406px,#990e00 420px,#990b00 434px,#990900 448px,#990600 462px,#990400 476px,#990200 490px,#990000 504px,#990000 518px,#990000 532px,#990000 546px,#990000 560px,#990000 574px,#990000 588px,#990000 601px)"></div><div style="height:3px;background:linear-gradient(90deg,#009900 0px,#009900 14px,#009900 28px,#009900 42px,#009900 56px,#009900 70px,#009900 84px,#009900 98px,#009900 112px,#069900 126px,#1c9900 140px,#339900 154px,#4c9900 168px,#669900 182px,#829900 196px,#999200 210px,#997900 224px,#996600 238px,#995700 252px,#994b00 266px,#994000 280px,#993800 294px,#993100 308px,#992a00 322px,#992500 336px,#992000 350px,#991b00 364px,#991700 378px,#991400 392px,#991000 406px,#990e00 420px,#990b00 434px,#990800 448px,#990600 462px,#990400 476px,#990200 490px,#990000 504px,#990000 518px,#990000 532px,#990000 546px,#990000 560px,#990000 574px,#990000 588px,#990000 601px)"></div><div style="height:3px;background:linear-gradient(90deg,#009900 0px,#009900 14px,#009900 28px,#009900 42px,#009900 56px,#009900 70px,#009900 84px,#009900 98px,#009900 112px,#059900 126px,#1c9900 140px,#339900 154px,#4b9900 168px,#669900 182px,#829900 196px,#999200 210px,#997900 224px,#996600 238px,#995600 252px,#994a00 266px,#994000 280px,#993700 294px,#993000 308px,#992a00 322px,#992400 336px,#991f00 350px,#991b00 364px,#991700 378px,#991300 392px,#991000 406px,#990d00 420px,#990a00 434px,#990800 448px,#990500 462px,#990300 476px,#990100 490px,#990000 504px,#990000 518px,#990000 532px,#990000 546px,#990000 560px,#990000 574px,#990000 588px,#990000 601px)"></div><div style="height:3px;background:linear-gradient(90deg,#009900 0px,#009900 14px,#009900 28px,#009900 42px,#009900 56px,#009900 70px,#009900 84px,#009900 98px,#009900 112px,#059900 126px,#1b9900 140px,#339900 154px,#4b9900 168px,#669900 182px,#829900 196px,#999100 210px,#997800 224px,#996500 238px,#995600 252px,#994900 266px,#993f00 280px,#993700 294px,#992f00 308px,#992900 322px,#992300 336px,#991f00 350px,#991a00 364px,#991600 378px,#991300 392px,#991000 406px,#990d00 420px,#990a00 434px,#990700 448px,#990500 462px,#990300 476px,#990100 490px,#990000 504px,#990000 518px,#990000 532px,#990000 546px,#990000 560px,#990000 574px,#990000 588px,#990000 601px)"></div><div style="height:3px;background:linear-gradient(90deg,#009902 0px,#009900 14px,#009900 28px,#009900 42px,#009900 56px,#009900 70px,#009900 84px,#009900 98px,#009900 112px,#049900 126px,#1b9900 140px,#329900 154px,#4b9900 168px,#669900 182px,#839900 196px,#999100 210px,#997700 224px,#996400 238px,#995500 252px,#994900 266px,#993f00 280px,#993600 294px,#992f00 308px,#992800 322px,#992300 336px,#991e00 350px,#991a00 364px,#991600 378px,#991200 392px,#990f00 406px,#990c00 420px,#990900 434px,#990700 448px,#990500 462px,#990200 476px,#990000 490px,#990000 504px,#990000 518px,#990000 532px,#990000 546px,#990000 560px,#990000 574px,#990000 588px,#990000 601px)"></div><div style="height:3px;background:linear-gradient(90deg,#009905 0px,#009904 14px,#009902 28px,#009901 42px,#009900 56px,#009900 70px,#009900 84px,#009900 98px,#009900 112px,#039900 126px,#1a9900 140px,#329900 154px,#4b9900 168px,#669900 182px,#839900 196px,#999000 210px,#997700 224px,#996300 238px,#995400 252px,#994800 266px,#993e00 280px,#993500 294px,#992e00 308px,#992800 322px,#992200 336px,#991e00 350px,#991900 364px,#991500 378px,#991200 392px,#990f00 406px,#990c00 420px,#990900 434px,#990600 448px,#990400 462px,#990200 476px,#990000 490px,#990000 504px,#990000 518px,#990000 532px,#990000 546px,#990000 560px,#990000 574px,#990000 588px,#990000 601px)"></div><div style="height:3px;background:linear-gradient(90deg,#009909 0px,#009908 14px,#009906 28px,#009905 42px,#009903 56px,#009901 70px,#009900 84px,#009900 98px,#009900 112px,#029900 126px,#1a9900 140px,#329900 154px,#4b9900 168px,#669900 182px,#849900 196px,#998f00 210px,#997600 224px,#996300 238px,#995400 252px,#994700 266px,#993d00 280px,#993500 294px,#992e00 308px,#992700 322px,#992200 336px,#991d00 350px,#991900 364px,#991500 378px,#991100 392px,#990e00 406px,#990b00 420px,#990900 434px,#990600 448px,#990400 462px,#990200 476px,#990000 490px,#990000 504px,#990000 518px,#990000 532px,#990000 546px,#990000 560px,#990000 574px,#990000 588px,#990000 601px)"></div><div style="height:3px;background:linear-gradient(90deg,#00990c 0px,#00990b 14px,#00990a 28px,#009909 42px,#009907 56px,#009906 70px,#009904 84px,#009902 98px,#009900 112px,#019900 126px,#199900 140px,#319900 154px,#4b9900 168px,#669900 182px,#849900 196px,#998e00 210px,#997500 224px,#996200 238px,#995300 252px,#994700 266px,#993d00 280px,#993400 294px,#992d00 308px,#992700 322px,#992100 336px,#991c00 350px,#991800 364px,#991400 378px,#991100 392px,#990e00 406px,#990b00 420px,#990800 434px,#990600 448px,#990300 462px,#990100 476px,#990000 490px,#990000 504px,#990000 518px,#990000 532px,#990000 546px,#990000 560px,#990000 574px,#990000 588px,#990000 601px)"></div><div style="height:3px;background:linear-gradient(90deg,#009910 0px,#00990f 14px,#00990e 28px,#00990c 42px,#00990b 56px,#00990a 70px,#009908 84px,#009907 98px,#009905 112px,#009903 126px,#189901 140px,#319900 154px,#4b9900 168px,#669900 182px,#849900 196px,#998e00 210px,#997400 224px,#996100 238px,#995200 252px,#994600 266px,#993c00 280px,#993400 294px,#992c00 308px,#992600 322px,#992100 336px,#991c00 350px,#991800 364px,#991400 378px,#991000 392px,#990d00 406px,#990a00 420px,#990800 434px,#990500 448px,#990300 462px,#990100 476px,#990000 490px,#990000 504px,#990000 518px,#990000 532px,#990000 546px,#990000 560px,#990000 574px,#990000 588px,#990000 601px)"></div><div style="height:3px;background:linear-gradient(90deg,#009913 0px,#009912 14px,#009911 28px,#009910 42px,#00990f 56px,#00990e 70px,#00990c 84px,#00990b 98px,#009909 112px,#009908 126px,#189906 140px,#309904 154px,#4b9902 168px,#669900 182px,#859900 196px,#998d00 210px,#997400 224px,#996100 238px,#995100 252px,#994500 266px,#993b00 280px,#993300 294px,#992c00 308px,#992600 322px,#992000 336px,#991b00 350px,#991700 364px,#991300 378px,#991000 392px,#990d00 406px,#990a00 420px,#990700 434px,#990500 448px,#990200 462px,#990000 476px,#990000 490px,#990000 504px,#990000 518px,#990000 532px,#990000 546px,#990000 560px,#990000 574px,#990000 588px,#990000 601px)"></div><div style="height:3px;background:linear-gradient(90deg,#009916 0px,#009916 14px,#009915 28px,#009914 42px,#009913 56px,#009912 70px,#009911 84px,#00990f 98px,#00990e 112px,#00990d 126px,#17990b 140px,#309909 154px,#4a9907 168px,#679905 182px,#859903 196px,#998c00 210px,#997300 224px,#996000 238px,#995100 252px,#994500 266px,#993b00 280px,#993200 294px,#992b00 308px,#992500 322px,#992000 336px,#991b00 350px,#991700 364px,#991300 378px,#990f00 392px,#990c00 406px,#990900 420px,#990700 434px,#990400 448px,#990200 462px,#990000 476px,#990000 490px,#990000 504px,#990000 518px,#990000 532px,#990000 546px,#990000 560px,#990000 574px,#990000 588px,#990000 601px)"></div><div style="height:3px;background:linear-gradient(90deg,#00991a 0px,#009919 14px,#009918 28px,#009918 42px,#009917 56px,#009916 70px,#009915 84px,#009914 98px,#009913 112px,#009911 126px,#179910 140px,#30990e 154px,#4a990d 168px,#67990b 182px,#869909 196px,#998c06 210px,#997203 224px,#995f00 238px,#995000 252px,#994400 266px,#993a00 280px,#993200 294px,#992a00 308px,#992400 322px,#991f00 336px,#991a00 350px,#991600 364px,#991200 378px,#990f00 392px,#990c00 406px,#990900 420px,#990600 434px,#990400 448px,#990100 462px,#990000 476px,#990000 490px,#990000 504px,#990000 518px,#990000 532px,#990000 546px,#990000 560px,#990000 574px,#990000 588px,#990000 601px)"></div><div style="height:3px;background:linear-gradient(90deg,#00991d 0px,#00991d 14px,#00991c 28px,#00991b 42px,#00991b 56px,#00991a 70px,#009919 84px,#009918 98px,#009917 112px,#009916 126px,#169915 140px,#2f9913 154px,#4a9912 168px,#679910 182px,#86990f 196px,#998b0c 210px,#997108 224px,#995e05 238px,#994f03 252px,#994301 266px,#993900 280px,#993100 294px,#992a00 308px,#992400 322px,#991e00 336px,#991a00 350px,#991500 364px,#991200 378px,#990e00 392px,#990b00 406px,#990800 420px,#990600 434px,#990300 448px,#990100 462px,#990000 476px,#990000 490px,#990000 504px,#990000 518px,#990000 532px,#990000 546px,#990000 560px,#990000 574px,#990000 588px,#990000 601px)"></div><div style="height:3px;background:linear-gradient(90deg,#009921 0px,#009920 14px,#009920 28px,#00991f 42px,#00991f 56px,#00991e 70px,#00991d 84px,#00991c 98px,#00991c 112px,#00991b 126px,#15991a 140px,#2f9919 154px,#4a9918 168px,#679916 182px,#879915 196px,#998a11 210px,#99710d 224px,#995e09 238px,#994f07 252px,#994305 266px,#993903 280px,#993001 294px,#992900 308px,#992300 322px,#991e00 336px,#991900 350px,#991500 364px,#991100 378px,#990e00 392px,#990b00 406px,#990800 420px,#990500 434px,#990300 448px,#990000 462px,#990000 476px,#990000 490px,#990000 504px,#990000 518px,#990000 532px,#990000 546px,#990000 560px,#990000 574px,#990000 588px,#990000 601px)"></div><div style="height:3px;background:linear-gradient(90deg,#009924 0px,#009924 14px,#009924 28px,#009923 42px,#009923 56px,#009922 70px,#009922 84px,#009921 98px,#009920 112px,#009920 126px,#15991f 140px,#2e991e 154px,#4a991d 168px,#67991c 182px,#87991b 196px,#998917 210px,#997012 224px,#995d0e 238px,#994e0b 252px,#994208 266px,#993806 280px,#993004 294px,#992903 308px,#992301 322px,#991d00 336px,#991900 350px,#991400 364px,#991100 378px,#990d00 392px,#990a00 406px,#990700 420px,#990500 434px,#990200 448px,#990000 462px,#990000 476px,#990000 490px,#990000 504px,#990000 518px,#990000 532px,#990000 546px,#990000 560px,#990000 574px,#990000 588px,#990000 601px)"></div><div style="height:3px;background:linear-gradient(90deg,#009928 0px,#009928 14px,#009927 28px,#009927 42px,#009927 56px,#009926 70px,#009926 84px,#009925 98px,#009925 112px,#009924 126px,#149924 140px,#2e9923 154px,#4a9923 168px,#679922 182px,#889921 196px,#99891d 210px,#996f17 224px,#995c12 238px,#994d0e 252px,#99410c 266px,#993709 280px,#992f07 294px,#992805 308px,#992204 322px,#991d03 336px,#991801 350px,#991400 364px,#991000 378px,#990d00 392px,#990a00 406px,#990700 420px,#990400 434px,#990200 448px,#990000 462px,#990000 476px,#990000 490px,#990000 504px,#990000 518px,#990000 532px,#990000 546px,#990000 560px,#990000 574px,#990000 588px,#990000 601px)"></div><div style="height:3px;background:linear-gradient(90deg,#00992b 0px,#00992b 14px,#00992b 28px,#00992b 42px,#00992b 56px,#00992a 70px,#00992a 84px,#00992a 98px,#00992a 112px,#009929 126px,#139929 140px,#2e9929 154px,#499928 168px,#679928 182px,#889927 196px,#998822 210px,#996e1b 224px,#995b16 238px,#994c12 252px,#99400f 266px,#99370c 280px,#992e0a 294px,#992708 308px,#992106 322px,#991c05 336px,#991704 350px,#991303 364px,#991002 378px,#990c01 392px,#990900 406px,#990600 420px,#990400 434px,#990100 448px,#990000 462px,#990000 476px,#990000 490px,#990000 504px,#990000 518px,#990000 532px,#990000 546px,#990000 560px,#990000 574px,#990000 588px,#990000 601px)"></div><div style="height:3px;background:linear-gradient(90deg,#00992f 0px,#00992f 14px,#00992f 28px,#00992f 42px,#00992f 56px,#00992f 70px,#00992f 84px,#00992e 98px,#00992e 112px,#00992e 126px,#13992e 140px,#2d992e 154px,#49992e 168px,#68992e 182px,#89992d 196px,#998728 210px,#996e20 224px,#995a1a 238px,#994c16 252px,#994012 266px,#99360f 280px,#992e0d 294px,#99270b 308px,#992109 322px,#991b07 336px,#991706 350px,#991305 364px,#990f04 378px,#990c03 392px,#990902 406px,#990601 420px,#990300 434px,#990100 448px,#990000 462px,#990000 476px,#990000 490px,#990000 504px,#990000 518px,#990000 532px,#990000 546px,#990000 560px,#990000 574px,#990000 588px,#990000 601px)"></div><div style="height:3px;background:linear-gradient(90deg,#009933 0px,#009933 14px,#009933 28px,#009933 42px,#009933 56px,#009933 70px,#009933 84px,#009933 98px,#009933 112px,#009933 126px,#129933 140px,#2d9933 154px,#499934 168px,#689934 182px,#899934 196px,#99862e 210px,#996d25 224px,#995a1f 238px,#994b1a 252px,#993f16 266px,#993512 280px,#992d10 294px,#99260d 308px,#99200b 322px,#991b0a 336px,#991608 350px,#991207 364px,#990f06 378px,#990b05 392px,#990804 406px,#990503 420px,#990302 434px,#990001 448px,#990000 462px,#990000 476px,#990000 490px,#990000 504px,#990000 518px,#990000 532px,#990000 546px,#990000 560px,#990000 574px,#990000 588px,#990000 601px)"></div><div style="height:3px;background:linear-gradient(90deg,#009936 0px,#009936 14px,#009937 28px,#009937 42px,#009937 56px,#009937 70px,#009937 84px,#009938 98px,#009938 112px,#009938 126px,#119939 140px,#2c9939 154px,#499939 168px,#68993a 182px,#8a993a 196px,#998633 210px,#996c2a 224px,#995923 238px,#994a1e 252px,#993e19 266px,#993416 280px,#992c13 294px,#992510 308px,#991f0e 322px,#991a0c 336px,#99160a 350px,#991209 364px,#990e08 378px,#990b06 392px,#990805 406px,#990504 420px,#990203 434px,#990003 448px,#990002 462px,#990001 476px,#990000 490px,#990000 504px,#990000 518px,#990000 532px,#990000 546px,#990000 560px,#990000 574px,#990000 588px,#990000 601px)"></div><div style="height:3px;background:linear-gradient(90deg,#00993a 0px,#00993a 14px,#00993b 28px,#00993b 42px,#00993b 56px,#00993c 70px,#00993c 84px,#00993c 98px,#00993d 112px,#00993d 126px,#10993e 140px,#2c993f 154px,#49993f 168px,#689940 182px,#8a9941 196px,#998539 210px,#996b2f 224px,#995827 238px,#994921 252px,#993d1d 266px,#993419 280px,#992c15 294px,#992513 308px,#991f10 322px,#991a0e 336px,#99150d 350px,#99110b 364px,#990d09 378px,#990a08 392px,#990707 406px,#990406 420px,#990205 434px,#990004 448px,#990003 462px,#990003 476px,#990002 490px,#990001 504px,#990001 518px,#990000 532px,#990000 546px,#990000 560px,#990000 574px,#990000 588px,#990000 601px)"></div><div style="height:3px;background:linear-gradient(90deg,#00993e 0px,#00993e 14px,#00993f 28px,#00993f 42px,#009940 56px,#009940 70px,#009941 84px,#009941 98px,#009942 112px,#009943 126px,#109944 140px,#2b9944 154px,#489945 168px,#689947 182px,#8b9948 196px,#99843f 210px,#996a34 224px,#99572c 238px,#994825 252px,#993d20 266px,#99331c 280px,#992b18 294px,#992415 308px,#991e13 322px,#991911 336px,#99150f 350px,#99110d 364px,#990d0b 378px,#990a0a 392px,#990709 406px,#990408 420px,#990107 434px,#990006 448px,#990005 462px,#990004 476px,#990003 490px,#990003 504px,#990002 518px,#990001 532px,#990001 546px,#990000 560px,#990000 574px,#990000 588px,#990000 601px)"></div><div style="height:3px;background:linear-gradient(90deg,#009941 0px,#009942 14px,#009943 28px,#009943 42px,#009944 56px,#009945 70px,#009945 84px,#009946 98px,#009947 112px,#009948 126px,#0f9949 140px,#2b994a 154px,#48994c 168px,#68994d 182px,#8b994f 196px,#998345 210px,#996939 224px,#995630 238px,#994829 252px,#993c23 266px,#99321f 280px,#992a1b 294px,#992318 308px,#991e15 322px,#991813 336px,#991411 350px,#99100f 364px,#990c0d 378px,#99090c 392px,#99060b 406px,#990309 420px,#990108 434px,#990007 448px,#990006 462px,#990005 476px,#990005 490px,#990004 504px,#990003 518px,#990003 532px,#990002 546px,#990001 560px,#990001 574px,#990000 588px,#990000 601px)"></div><div style="height:3px;background:linear-gradient(90deg,#009945 0px,#009946 14px,#009947 28px,#009947 42px,#009948 56px,#009949 70px,#00994a 84px,#00994b 98px,#00994c 112px,#00994d 126px,#0e994f 140px,#2a9950 154px,#489952 168px,#689954 182px,#8c9956 196px,#99824b 210px,#99693e 224px,#995634 238px,#99472d 252px,#993b27 266px,#993222 280px,#992a1e 294px,#99231b 308px,#991d18 322px,#991815 336px,#991313 350px,#990f11 364px,#990c0f 378px,#99090e 392px,#99060c 406px,#99030b 420px,#99000a 434px,#990009 448px,#990008 462px,#990007 476px,#990006 490px,#990005 504px,#990005 518px,#990004 532px,#990003 546px,#990003 560px,#990002 574px,#990001 588px,#990001 601px)"></div><div style="height:3px;background:linear-gradient(90deg,#009949 0px,#00994a 14px,#00994b 28px,#00994c 42px,#00994d 56px,#00994e 70px,#00994f 84px,#009950 98px,#009951 112px,#009953 126px,#0d9954 140px,#2a9956 154px,#489958 168px,#69995a 182px,#8d995d 196px,#998251 210px,#996843 224px,#995539 238px,#994631 252px,#993a2a 266px,#993125 280px,#992921 294px,#99221d 308px,#991c1a 322px,#991717 336px,#991315 350px,#990f13 364px,#990b11 378px,#99080f 392px,#99050e 406px,#99020d 420px,#99000b 434px,#99000a 448px,#990009 462px,#990008 476px,#990007 490px,#990007 504px,#990006 518px,#990005 532px,#990004 546px,#990004 560px,#990003 574px,#990003 588px,#990002 601px)"></div><div style="height:3px;background:linear-gradient(90deg,#00994d 0px,#00994e 14px,#00994f 28px,#009950 42px,#009951 56px,#009952 70px,#009954 84px,#009955 98px,#009957 112px,#009958 126px,#0c995a 140px,#29995c 154px,#48995f 168px,#699961 182px,#8d9964 196px,#998157 210px,#996748 224px,#99543d 238px,#994534 252px,#993a2e 266px,#993028 280px,#992824 294px,#992120 308px,#991c1d 322px,#99171a 336px,#991217 350px,#990e15 364px,#990b13 378px,#990711 392px,#990510 406px,#99020e 420px,#99000d 434px,#99000c 448px,#99000b 462px,#99000a 476px,#990009 490px,#990008 504px,#990007 518px,#990006 532px,#990006 546px,#990005 560px,#990004 574px,#990004 588px,#990003 601px)"></div><div style="height:3px;background:linear-gradient(90deg,#009951 0px,#009952 14px,#009953 28px,#009954 42px,#009956 56px,#009957 70px,#009959 84px,#00995a 98px,#00995c 112px,#00995e 126px,#0c9960 140px,#299963 154px,#479965 168px,#699968 182px,#8e996b 196px,#99805d 210px,#99664d 224px,#995341 238px,#994438 252px,#993931 266px,#992f2b 280px,#992726 294px,#992122 308px,#991b1f 322px,#99161c 336px,#991219 350px,#990e17 364px,#990a15 378px,#990713 392px,#990411 406px,#990110 420px,#99000f 434px,#99000d 448px,#99000c 462px,#99000b 476px,#99000a 490px,#990009 504px,#990008 518px,#990007 532px,#990007 546px,#990006 560px,#990005 574px,#990005 588px,#990004 601px)"></div><div style="height:3px;background:linear-gradient(90deg,#009955 0px,#009956 14px,#009957 28px,#009959 42px,#00995a 56px,#00995c 70px,#00995e 84px,#009960 98px,#009962 112px,#009964 126px,#0b9966 140px,#289969 154px,#47996c 168px,#69996f 182px,#8f9973 196px,#997f63 210px,#996552 224px,#995246 238px,#99443c 252px,#993835 266px,#992f2e 280px,#992729 294px,#992025 308px,#991a21 322px,#99151e 336px,#99111b 350px,#990d19 364px,#990a17 378px,#990615 392px,#990313 406px,#990112 420px,#990010 434px,#99000f 448px,#99000e 462px,#99000c 476px,#99000b 490px,#99000a 504px,#99000a 518px,#990009 532px,#990008 546px,#990007 560px,#990006 574px,#990006 588px,#990005 601px)"></div><div style="height:3px;background:linear-gradient(90deg,#009959 0px,#00995a 14px,#00995c 28px,#00995d 42px,#00995f 56px,#009961 70px,#009963 84px,#009965 98px,#009967 112px,#00996a 126px,#0a996c 140px,#27996f 154px,#479973 168px,#699977 182px,#8f997b 196px,#997e69 210px,#996457 224px,#99514a 238px,#994340 252px,#993738 266px,#992e32 280px,#99262c 294px,#991f28 308px,#991a24 322px,#991520 336px,#99101e 350px,#990c1b 364px,#990919 378px,#990617 392px,#990315 406px,#990013 420px,#990012 434px,#990010 448px,#99000f 462px,#99000e 476px,#99000d 490px,#99000c 504px,#99000b 518px,#99000a 532px,#990009 546px,#990008 560px,#990008 574px,#990007 588px,#990006 601px)"></div><div style="height:3px;background:linear-gradient(90deg,#00995d 0px,#00995e 14px,#009960 28px,#009962 42px,#009964 56px,#009966 70px,#009968 84px,#00996a 98px,#00996d 112px,#009970 126px,#099973 140px,#279976 154px,#47997a 168px,#6a997e 182px,#909983 196px,#997d6f 210px,#99635c 224px,#99504f 238px,#994244 252px,#99363c 266px,#992d35 280px,#99252f 294px,#991f2a 308px,#991926 322px,#991423 336px,#991020 350px,#990c1d 364px,#99081b 378px,#990518 392px,#990217 406px,#990015 420px,#990013 434px,#990012 448px,#990010 462px,#99000f 476px,#99000e 490px,#99000d 504px,#99000c 518px,#99000b 532px,#99000a 546px,#990009 560px,#990009 574px,#990008 588px,#990007 601px)"></div><div style="height:3px;background:linear-gradient(90deg,#009961 0px,#009963 14px,#009965 28px,#009966 42px,#009968 56px,#00996b 70px,#00996d 84px,#009970 98px,#009973 112px,#009976 126px,#089979 140px,#26997d 154px,#479981 168px,#6a9986 182px,#91998b 196px,#997c76 210px,#996262 224px,#995053 238px,#994148 252px,#99363f 266px,#992c38 280px,#992432 294px,#991e2d 308px,#991829 322px,#991325 336px,#990f22 350px,#990b1f 364px,#99081d 378px,#99051a 392px,#990218 406px,#990016 420px,#990015 434px,#990013 448px,#990012 462px,#990011 476px,#99000f 490px,#99000e 504px,#99000d 518px,#99000c 532px,#99000b 546px,#99000b 560px,#99000a 574px,#990009 588px,#990008 601px)"></div><div style="height:3px;background:linear-gradient(90deg,#009965 0px,#009967 14px,#009969 28px,#00996b 42px,#00996d 56px,#009970 70px,#009972 84px,#009975 98px,#009978 112px,#00997c 126px,#079980 140px,#269984 154px,#469988 168px,#6a998e 182px,#919993 196px,#997b7c 210px,#996167 224px,#994f58 238px,#99404c 252px,#993543 266px,#992b3b 280px,#992435 294px,#991d30 308px,#99182b 322px,#991327 336px,#990e24 350px,#990b21 364px,#99071e 378px,#99041c 392px,#99011a 406px,#990018 420px,#990016 434px,#990015 448px,#990013 462px,#990012 476px,#990011 490px,#990010 504px,#99000e 518px,#99000d 532px,#99000d 546px,#99000c 560px,#99000b 574px,#99000a 588px,#990009 601px)"></div><div style="height:3px;background:linear-gradient(90deg,#009969 0px,#00996b 14px,#00996e 28px,#009970 42px,#009972 56px,#009975 70px,#009978 84px,#00997b 98px,#00997e 112px,#009982 126px,#069986 140px,#25998b 154px,#469990 168px,#6a9996 182px,#8f9699 196px,#997a83 210px,#99616c 224px,#994e5c 238px,#993f50 252px,#993446 266px,#992b3e 280px,#992338 294px,#991c32 308px,#99172e 322px,#99122a 336px,#990e26 350px,#990a23 364px,#990720 378px,#99041e 392px,#99011c 406px,#99001a 420px,#990018 434px,#990016 448px,#990015 462px,#990013 476px,#990012 490px,#990011 504px,#990010 518px,#99000f 532px,#99000e 546px,#99000d 560px,#99000c 574px,#99000b 588px,#99000a 601px)"></div><div style="height:3px;background:linear-gradient(90deg,#00996e 0px,#009970 14px,#009972 28px,#009975 42px,#009977 56px,#00997a 70px,#00997d 84px,#009981 98px,#009984 112px,#009988 126px,#05998d 140px,#249992 154px,#469997 168px,#679499 182px,#898e99 196px,#997989 210px,#996072 224px,#994d61 238px,#993e54 252px,#99334a 266px,#992a41 280px,#99223b 294px,#991c35 308px,#991630 322px,#99112c 336px,#990d28 350px,#990925 364px,#990622 378px,#990320 392px,#99001d 406px,#99001b 420px,#990019 434px,#990018 448px,#990016 462px,#990015 476px,#990013 490px,#990012 504px,#990011 518px,#990010 532px,#99000f 546px,#99000e 560px,#99000d 574px,#99000c 588px,#99000b 601px)"></div><div style="height:3px;background:linear-gradient(90deg,#009972 0px,#009974 14px,#009977 28px,#009979 42px,#00997c 56px,#00997f 70px,#009983 84px,#009986 98px,#00998a 112px,#00998f 126px,#049994 140px,#249999 154px,#439399 168px,#628d99 182px,#828799 196px,#997890 210px,#995f77 224px,#994c65 238px,#993e58 252px,#99324d 266px,#992945 280px,#99213e 294px,#991b38 308px,#991633 322px,#99112e 336px,#990d2a 350px,#990927 364px,#990524 378px,#990221 392px,#99001f 406px,#99001d 420px,#99001b 434px,#990019 448px,#990018 462px,#990016 476px,#990015 490px,#990013 504px,#990012 518px,#990011 532px,#990010 546px,#99000f 560px,#99000e 574px,#99000d 588px,#99000c 601px)"></div><div style="height:3px;background:linear-gradient(90deg,#009976 0px,#009979 14px,#00997c 28px,#00997e 42px,#009981 56px,#009985 70px,#009988 84px,#00998c 98px,#009991 112px,#009996 126px,#039799 140px,#219299 154px,#3f8c99 168px,#5e8699 182px,#7c8099 196px,#997796 210px,#995e7d 224px,#994b6a 238px,#993d5c 252px,#993151 266px,#992848 280px,#992141 294px,#991a3a 308px,#991535 322px,#991031 336px,#990c2d 350px,#990829 364px,#990526 378px,#990223 392px,#990021 406px,#99001f 420px,#99001c 434px,#99001b 448px,#990019 462px,#990017 476px,#990016 490px,#990015 504px,#990013 518px,#990012 532px,#990011 546px,#990010 560px,#99000f 574px,#99000e 588px,#99000d 601px)"></div><div style="height:3px;background:linear-gradient(90deg,#00997b 0px,#00997d 14px,#009980 28px,#009983 42px,#009987 56px,#00998a 70px,#00998e 84px,#009992 98px,#009997 112px,#009699 126px,#019199 140px,#1f8b99 154px,#3c8599 168px,#598099 182px,#777a99 196px,#957399 210px,#995d82 224px,#994a6f 238px,#993c60 252px,#993154 266px,#99274b 280px,#992043 294px,#991a3d 308px,#991438 322px,#990f33 336px,#990b2f 350px,#99082b 364px,#990428 378px,#990125 392px,#990022 406px,#990020 420px,#99001e 434px,#99001c 448px,#99001a 462px,#990019 476px,#990017 490px,#990016 504px,#990015 518px,#990013 532px,#990012 546px,#990011 560px,#990010 574px,#99000f 588px,#99000e 601px)"></div><div style="height:3px;background:linear-gradient(90deg,#00997f 0px,#009982 14px,#009985 28px,#009988 42px,#00998c 56px,#009990 70px,#009994 84px,#009999 98px,#009599 112px,#009099 126px,#008a99 140px,#1d8599 154px,#397f99 168px,#557a99 182px,#727499 196px,#8f6e99 210px,#995c88 224px,#994973 238px,#993b64 252px,#993058 266px,#99274e 280px,#991f46 294px,#991940 308px,#99133a 322px,#990f35 336px,#990b31 350px,#99072d 364px,#99042a 378px,#990027 392px,#990024 406px,#990022 420px,#990020 434px,#99001e 448px,#99001c 462px,#99001a 476px,#990019 490px,#990017 504px,#990016 518px,#990015 532px,#990013 546px,#990012 560px,#990011 574px,#990010 588px,#99000f 601px)"></div><div style="height:3px;background:linear-gradient(90deg,#009984 0px,#009987 14px,#00998a 28px,#00998e 42px,#009991 56px,#009995 70px,#009899 84px,#009399 98px,#008f99 112px,#008a99 126px,#008499 140px,#1b7f99 154px,#367a99 168px,#527499 182px,#6d6e99 196px,#896899 210px,#995b8d 224px,#994878 238px,#993a68 252px,#992f5c 266px,#992652 280px,#991e49 294px,#991842 308px,#99133d 322px,#990e37 336px,#990a33 350px,#99062f 364px,#99032c 378px,#990029 392px,#990026 406px,#990023 420px,#990021 434px,#99001f 448px,#99001d 462px,#99001b 476px,#99001a 490px,#990018 504px,#990017 518px,#990016 532px,#990015 546px,#990013 560px,#990012 574px,#990011 588px,#990010 601px)"></div><div style="height:3px;background:linear-gradient(90deg,#009988 0px,#00998c 14px,#00998f 28px,#009993 42px,#009997 56px,#009799 70px,#009299 84px,#008e99 98px,#008999 112px,#008499 126px,#007f99 140px,#1a7a99 154px,#347499 168px,#4e6f99 182px,#696999 196px,#846399 210px,#995a93 224px,#99477d 238px,#99396c 252px,#992e5f 266px,#992555 280px,#991e4c 294px,#991745 308px,#99123f 322px,#990d3a 336px,#990935 350px,#990631 364px,#99022e 378px,#99002a 392px,#990028 406px,#990025 420px,#990023 434px,#990021 448px,#99001f 462px,#99001d 476px,#99001b 490px,#99001a 504px,#990018 518px,#990017 532px,#990016 546px,#990014 560px,#990013 574px,#990012 588px,#990011 601px)"></div><div style="height:3px;background:linear-gradient(90deg,#00998d 0px,#009991 14px,#009994 28px,#009998 42px,#009699 56px,#009199 70px,#008d99 84px,#008899 98px,#008499 112px,#007f99 126px,#007a99 140px,#187599 154px,#316f99 168px,#4b6a99 182px,#656499 196px,#7f5f99 210px,#995999 224px,#994682 238px,#993871 252px,#992d63 266px,#992458 280px,#991d4f 294px,#991748 308px,#991142 322px,#990d3c 336px,#990937 350px,#990533 364px,#990230 378px,#99002c 392px,#990029 406px,#990027 420px,#990024 434px,#990022 448px,#990020 462px,#99001e 476px,#99001c 490px,#99001b 504px,#990019 518px,#990018 532px,#990017 546px,#990016 560px,#990014 574px,#990013 588px,#990013 601px)"></div><div style="height:3px;background:linear-gradient(90deg,#009992 0px,#009995 14px,#009999 28px,#009599 42px,#009099 56px,#008c99 70px,#008899 84px,#008399 98px,#007f99 112px,#007a99 126px,#007599 140px,#167099 154px,#2f6b99 168px,#486599 182px,#616099 196px,#7a5a99 210px,#945499 224px,#994587 238px,#993775 252px,#992c67 266px,#99235c 280px,#991c52 294px,#99164b 308px,#991144 322px,#990c3e 336px,#99083a 350px,#990435 364px,#990131 378px,#99002e 392px,#99002b 406px,#990028 420px,#990026 434px,#990024 448px,#990021 462px,#990020 476px,#99001e 490px,#99001c 504px,#99001b 518px,#990019 532px,#990018 546px,#990017 560px,#990016 574px,#990014 588px,#990014 601px)"></div><div style="height:3px;background:linear-gradient(90deg,#009997 0px,#009899 14px,#009499 28px,#009099 42px,#008b99 56px,#008799 70px,#008399 84px,#007e99 98px,#007a99 112px,#007599 126px,#007099 140px,#156b99 154px,#2d6699 168px,#456199 182px,#5d5c99 196px,#755699 210px,#8e5099 224px,#99448c 238px,#993679 252px,#992b6b 266px,#99225f 280px,#991b55 294px,#99154d 308px,#991047 322px,#990b41 336px,#99073c 350px,#990437 364px,#990033 378px,#990030 392px,#99002d 406px,#99002a 420px,#990027 434px,#990025 448px,#990023 462px,#990021 476px,#99001f 490px,#99001d 504px,#99001c 518px,#99001a 532px,#990019 546px,#990018 560px,#990017 574px,#990015 588px,#990015 601px)"></div><div style="height:3px;background:linear-gradient(90deg,#009699 0px,#009399 14px,#008f99 28px,#008b99 42px,#008799 56px,#008399 70px,#007e99 84px,#007a99 98px,#007599 112px,#007199 126px,#006c99 140px,#146799 154px,#2b6299 168px,#425d99 182px,#5a5899 196px,#715299 210px,#894d99 224px,#994391 238px,#99357d 252px,#992a6e 266px,#992262 280px,#991a58 294px,#991450 308px,#990f49 322px,#990b43 336px,#99073e 350px,#990339 364px,#990035 378px,#990032 392px,#99002e 406px,#99002c 420px,#990029 434px,#990027 448px,#990024 462px,#990022 476px,#990020 490px,#99001f 504px,#99001d 518px,#99001c 532px,#99001a 546px,#990019 560px,#990018 574px,#990017 588px,#990016 601px)"></div><div style="height:3px;background:linear-gradient(90deg,#009299 0px,#008e99 14px,#008a99 28px,#008699 42px,#008299 56px,#007e99 70px,#007a99 84px,#007699 98px,#007199 112px,#006d99 126px,#006899 140px,#126399 154px,#295e99 168px,#405999 182px,#565499 196px,#6d4f99 210px,#854999 224px,#994296 238px,#993482 252px,#992972 266px,#992166 280px,#991a5b 294px,#991453 308px,#990e4c 322px,#990a46 336px,#990640 350px,#99023b 364px,#990037 378px,#990034 392px,#990030 406px,#99002d 420px,#99002a 434px,#990028 448px,#990026 462px,#990024 476px,#990022 490px,#990020 504px,#99001e 518px,#99001d 532px,#99001b 546px,#99001a 560px,#990019 574px,#990018 588px,#990017 601px)"></div><div style="height:3px;background:linear-gradient(90deg,#008d99 0px,#008a99 14px,#008699 28px,#008299 42px,#007e99 56px,#007a99 70px,#007699 84px,#007299 98px,#006d99 112px,#006999 126px,#006499 140px,#115f99 154px,#275b99 168px,#3d5699 182px,#535099 196px,#6a4b99 210px,#804699 224px,#974099 238px,#993386 252px,#992876 266px,#992069 280px,#99195f 294px,#991356 308px,#990e4e 322px,#990948 336px,#990542 350px,#99023d 364px,#990039 378px,#990035 392px,#990032 406px,#99002f 420px,#99002c 434px,#99002a 448px,#990027 462px,#990025 476px,#990023 490px,#990021 504px,#990020 518px,#99001e 532px,#99001c 546px,#99001b 560px,#99001a 574px,#990019 588px,#990018 601px)"></div><div style="height:3px;background:linear-gradient(90deg,#008999 0px,#008699 14px,#008299 28px,#007e99 42px,#007a99 56px,#007699 70px,#007299 84px,#006e99 98px,#006999 112px,#006599 126px,#006099 140px,#105c99 154px,#255799 168px,#3b5299 182px,#504d99 196px,#664899 210px,#7c4399 224px,#923d99 238px,#99328a 252px,#99287a 266px,#991f6c 280px,#991862 294px,#991259 308px,#990d51 322px,#99084a 336px,#990545 350px,#990140 364px,#99003b 378px,#990037 392px,#990034 406px,#990031 420px,#99002e 434px,#99002b 448px,#990029 462px,#990026 476px,#990024 490px,#990022 504px,#990021 518px,#99001f 532px,#99001e 546px,#99001c 560px,#99001b 574px,#99001a 588px,#990019 601px)"></div><div style="height:3px;background:linear-gradient(90deg,#008599 0px,#008299 14px,#007e99 28px,#007a99 42px,#007699 56px,#007299 70px,#006e99 84px,#006a99 98px,#006699 112px,#006199 126px,#005d99 140px,#0f5899 154px,#245499 168px,#394f99 182px,#4e4a99 196px,#634599 210px,#784099 224px,#8e3a99 238px,#99318f 252px,#99277e 266px,#991e70 280px,#991765 294px,#99115b 308px,#990c53 322px,#99084d 336px,#990447 350px,#990042 364px,#99003d 378px,#990039 392px,#990035 406px,#990032 420px,#99002f 434px,#99002d 448px,#99002a 462px,#990028 476px,#990026 490px,#990024 504px,#990022 518px,#990020 532px,#99001f 546px,#99001d 560px,#99001c 574px,#99001b 588px,#99001a 601px)"></div><div style="height:3px;background:linear-gradient(90deg,#008199 0px,#007e99 14px,#007a99 28px,#007699 42px,#007399 56px,#006f99 70px,#006b99 84px,#006799 98px,#006299 112px,#005e99 126px,#005a99 140px,#0e5599 154px,#225099 168px,#374c99 182px,#4b4799 196px,#604299 210px,#743d99 224px,#8a3799 238px,#993093 252px,#992681 266px,#991d73 280px,#991668 294px,#99105e 308px,#990b56 322px,#99074f 336px,#990349 350px,#990044 364px,#99003f 378px,#99003b 392px,#990037 406px,#990034 420px,#990031 434px,#99002e 448px,#99002b 462px,#990029 476px,#990027 490px,#990025 504px,#990023 518px,#990021 532px,#990020 546px,#99001e 560px,#99001d 574px,#99001c 588px,#99001b 601px)"></div><div style="height:3px;background:linear-gradient(90deg,#007e99 0px,#007a99 14px,#007799 28px,#007399 42px,#006f99 56px,#006b99 70px,#006799 84px,#006399 98px,#005f99 112px,#005b99 126px,#005699 140px,#0d5299 154px,#214d99 168px,#354999 182px,#494499 196px,#5d3f99 210px,#713a99 224px,#853599 238px,#992f98 252px,#992585 266px,#991c77 280px,#99156b 294px,#991061 308px,#990b59 322px,#990651 336px,#99024b 350px,#990046 364px,#990041 378px,#99003d 392px,#990039 406px,#990035 420px,#990032 434px,#990030 448px,#99002d 462px,#99002b 476px,#990028 490px,#990026 504px,#990024 518px,#990023 532px,#990021 546px,#990020 560px,#99001e 574px,#99001d 588px,#99001c 601px)"></div><div style="height:3px;background:linear-gradient(90deg,#007a99 0px,#007799 14px,#007399 28px,#006f99 42px,#006c99 56px,#006899 70px,#006499 84px,#006099 98px,#005c99 112px,#005899 126px,#005399 140px,#0c4f99 154px,#1f4b99 168px,#334699 182px,#464199 196px,#5a3c99 210px,#6e3799 224px,#823299 238px,#962d99 252px,#992489 266px,#991b7a 280px,#99146e 294px,#990f64 308px,#990a5b 322px,#990554 336px,#99024d 350px,#990048 364px,#990043 378px,#99003f 392px,#99003b 406px,#990037 420px,#990034 434px,#990031 448px,#99002e 462px,#99002c 476px,#99002a 490px,#990028 504px,#990026 518px,#990024 532px,#990022 546px,#990021 560px,#99001f 574px,#99001e 588px,#99001d 601px)"></div><div style="height:3px;background:linear-gradient(90deg,#007799 0px,#007399 14px,#007099 28px,#006c99 42px,#006899 56px,#006599 70px,#006199 84px,#005d99 98px,#005999 112px,#005599 126px,#005199 140px,#0b4c99 154px,#1e4899 168px,#314399 182px,#443f99 196px,#573a99 210px,#6a3599 224px,#7e3099 238px,#922b99 252px,#99238d 266px,#991a7e 280px,#991471 294px,#990e67 308px,#99095e 322px,#990556 336px,#990150 350px,#99004a 364px,#990045 378px,#990040 392px,#99003c 406px,#990039 420px,#990036 434px,#990033 448px,#990030 462px,#99002d 476px,#99002b 490px,#990029 504px,#990027 518px,#990025 532px,#990023 546px,#990022 560px,#990020 574px,#99001f 588px,#99001e 601px)"></div><div style="height:3px;background:linear-gradient(90deg,#007499 0px,#007099 14px,#006d99 28px,#006999 42px,#006599 56px,#006299 70px,#005e99 84px,#005a99 98px,#005699 112px,#005299 126px,#004e99 140px,#0a4999 154px,#1d4599 168px,#2f4199 182px,#423c99 196px,#543799 210px,#673399 224px,#7a2e99 238px,#8e2999 252px,#992291 266px,#991981 280px,#991374 294px,#990d6a 308px,#990861 322px,#990459 336px,#990052 350px,#99004c 364px,#990047 378px,#990042 392px,#99003e 406px,#99003a 420px,#990037 434px,#990034 448px,#990031 462px,#99002f 476px,#99002c 490px,#99002a 504px,#990028 518px,#990026 532px,#990024 546px,#990023 560px,#990021 574px,#990020 588px,#99001f 601px)"></div><div style="height:3px;background:linear-gradient(90deg,#007099 0px,#006d99 14px,#006a99 28px,#006699 42px,#006299 56px,#005f99 70px,#005b99 84px,#005799 98px,#005399 112px,#004f99 126px,#004b99 140px,#094799 154px,#1b4399 168px,#2e3e99 182px,#403a99 196px,#523599 210px,#643099 224px,#772c99 238px,#8a2799 252px,#992195 266px,#991985 280px,#991278 294px,#990c6c 308px,#990763 322px,#99035b 336px,#990054 350px,#99004e 364px,#990049 378px,#990044 392px,#990040 406px,#99003c 420px,#990039 434px,#990036 448px,#990033 462px,#990030 476px,#99002e 490px,#99002b 504px,#990029 518px,#990027 532px,#990026 546px,#990024 560px,#990022 574px,#990021 588px,#990020 601px)"></div><div style="height:3px;background:linear-gradient(90deg,#006d99 0px,#006a99 14px,#006799 28px,#006399 42px,#006099 56px,#005c99 70px,#005899 84px,#005499 98px,#005199 112px,#004d99 126px,#004999 140px,#084499 154px,#1a4099 168px,#2c3c99 182px,#3e3799 196px,#503399 210px,#622e99 224px,#742a99 238px,#862599 252px,#992099 266px,#991888 280px,#99117b 294px,#990b6f 308px,#990766 322px,#99025e 336px,#990057 350px,#990050 364px,#99004b 378px,#990046 392px,#990042 406px,#99003e 420px,#99003a 434px,#990037 448px,#990034 462px,#990031 476px,#99002f 490px,#99002d 504px,#99002b 518px,#990029 532px,#990027 546px,#990025 560px,#990023 574px,#990022 588px,#990021 601px)"></div><div style="height:3px;background:linear-gradient(90deg,#006a99 0px,#006799 14px,#006499 28px,#006099 42px,#005d99 56px,#005999 70px,#005699 84px,#005299 98px,#004e99 112px,#004a99 126px,#004699 140px,#074299 154px,#193e99 168px,#2b3a99 182px,#3c3599 196px,#4d3199 210px,#5f2c99 224px,#712899 238px,#832399 252px,#951e99 266px,#99178c 280px,#99107e 294px,#990b72 308px,#990668 322px,#990160 336px,#990059 350px,#990052 364px,#99004d 378px,#990048 392px,#990043 406px,#99003f 420px,#99003c 434px,#990039 448px,#990036 462px,#990033 476px,#990030 490px,#99002e 504px,#99002c 518px,#99002a 532px,#990028 546px,#990026 560px,#990024 574px,#990023 588px,#990022 601px)"></div><div style="height:3px;background:linear-gradient(90deg,#006899 0px,#006499 14px,#006199 28px,#005e99 42px,#005a99 56px,#005799 70px,#005399 84px,#004f99 98px,#004c99 112px,#004899 126px,#004499 140px,#074099 154px,#183c99 168px,#293799 182px,#3a3399 196px,#4b2f99 210px,#5c2a99 224px,#6e2699 238px,#7f2199 252px,#911c99 266px,#991690 280px,#990f81 294px,#990a75 308px,#99056b 322px,#990163 336px,#99005b 350px,#990055 364px,#99004f 378px,#99004a 392px,#990045 406px,#990041 420px,#99003d 434px,#99003a 448px,#990037 462px,#990034 476px,#990032 490px,#99002f 504px,#99002d 518px,#99002b 532px,#990029 546px,#990027 560px,#990026 574px,#990024 588px,#990023 601px)"></div><div style="height:3px;background:linear-gradient(90deg,#006599 0px,#006299 14px,#005e99 28px,#005b99 42px,#005899 56px,#005499 70px,#005199 84px,#004d99 98px,#004999 112px,#004599 126px,#004299 140px,#063e99 154px,#173a99 168px,#283599 182px,#383199 196px,#492d99 210px,#5a2899 224px,#6b2499 238px,#7c1f99 252px,#8d1a99 266px,#991593 280px,#990e84 294px,#990978 308px,#99046e 322px,#990065 336px,#99005d 350px,#990057 364px,#990051 378px,#99004c 392px,#990047 406px,#990043 420px,#99003f 434px,#99003c 448px,#990038 462px,#990036 476px,#990033 490px,#990031 504px,#99002e 518px,#99002c 532px,#99002a 546px,#990028 560px,#990027 574px,#990025 588px,#990024 601px)"></div><div style="height:3px;background:linear-gradient(90deg,#006299 0px,#005f99 14px,#005c99 28px,#005999 42px,#005599 56px,#005299 70px,#004e99 84px,#004b99 98px,#004799 112px,#004399 126px,#003f99 140px,#053b99 154px,#163799 168px,#263399 182px,#372f99 196px,#472b99 210px,#582799 224px,#682299 238px,#791e99 252px,#8a1999 266px,#991497 280px,#990d88 294px,#99087b 308px,#990371 322px,#990067 336px,#990060 350px,#990059 364px,#990053 378px,#99004e 392px,#990049 406px,#990045 420px,#990041 434px,#99003d 448px,#99003a 462px,#990037 476px,#990034 490px,#990032 504px,#99002f 518px,#99002d 532px,#99002b 546px,#990029 560px,#990028 574px,#990026 588px,#990025 601px)"></div><div style="height:3px;background:linear-gradient(90deg,#006099 0px,#005d99 14px,#005999 28px,#005699 42px,#005399 56px,#004f99 70px,#004c99 84px,#004899 98px,#004599 112px,#004199 126px,#003d99 140px,#043999 154px,#153599 168px,#253199 182px,#352d99 196px,#452999 210px,#552599 224px,#662099 238px,#761c99 252px,#871799 266px,#971399 280px,#990c8b 294px,#99077e 308px,#990273 322px,#99006a 336px,#990062 350px,#99005b 364px,#990055 378px,#99004f 392px,#99004b 406px,#990046 420px,#990042 434px,#99003f 448px,#99003b 462px,#990038 476px,#990036 490px,#990033 504px,#990031 518px,#99002f 532px,#99002c 546px,#99002b 560px,#990029 574px,#990027 588px,#990026 601px)"></div><div style="height:3px;background:linear-gradient(90deg,#005e99 0px,#005a99 14px,#005799 28px,#005499 42px,#005199 56px,#004d99 70px,#004a99 84px,#004699 98px,#004399 112px,#003f99 126px,#003b99 140px,#043799 154px,#143499 168px,#243099 182px,#342c99 196px,#432799 210px,#532399 224px,#631f99 238px,#731a99 252px,#831699 266px,#941199 280px,#990b8e 294px,#990681 308px,#990176 322px,#99006c 336px,#990064 350px,#99005d 364px,#990057 378px,#990051 392px,#99004c 406px,#990048 420px,#990044 434px,#990040 448px,#99003d 462px,#99003a 476px,#990037 490px,#990034 504px,#990032 518px,#990030 532px,#99002e 546px,#99002c 560px,#99002a 574px,#990028 588px,#990027 601px)"></div><div style="height:3px;background:linear-gradient(90deg,#005b99 0px,#005899 14px,#005599 28px,#005299 42px,#004e99 56px,#004b99 70px,#004899 84px,#004499 98px,#004199 112px,#003d99 126px,#003999 140px,#033699 154px,#133299 168px,#232e99 182px,#322a99 196px,#422699 210px,#512299 224px,#611d99 238px,#701999 252px,#801499 266px,#901099 280px,#990a92 294px,#990584 308px,#990079 322px,#99006f 336px,#990067 350px,#99005f 364px,#990059 378px,#990053 392px,#99004e 406px,#99004a 420px,#990045 434px,#990042 448px,#99003e 462px,#99003b 476px,#990038 490px,#990036 504px,#990033 518px,#990031 532px,#99002f 546px,#99002d 560px,#99002b 574px,#990029 588px,#990028 601px)"></div><div style="height:3px;background:linear-gradient(90deg,#005999 0px,#005699 14px,#005399 28px,#004f99 42px,#004c99 56px,#004999 70px,#004699 84px,#004299 98px,#003f99 112px,#003b99 126px,#003799 140px,#023499 154px,#123099 168px,#222c99 182px,#312899 196px,#402499 210px,#4f2099 224px,#5e1c99 238px,#6e1799 252px,#7d1399 266px,#8d0e99 280px,#990995 294px,#990487 308px,#99007b 322px,#990072 336px,#990069 350px,#990062 364px,#99005b 378px,#990055 392px,#990050 406px,#99004b 420px,#990047 434px,#990043 448px,#990040 462px,#99003d 476px,#99003a 490px,#990037 504px,#990034 518px,#990032 532px,#990030 546px,#99002e 560px,#99002c 574px,#99002a 588px,#990029 601px)"></div><div style="height:3px;background:linear-gradient(90deg,#005799 0px,#005499 14px,#005199 28px,#004d99 42px,#004a99 56px,#004799 70px,#004499 84px,#004099 98px,#003d99 112px,#003999 126px,#003699 140px,#023299 154px,#112e99 168px,#202a99 182px,#2f2799 196px,#3e2399 210px,#4d1f99 224px,#5c1a99 238px,#6b1699 252px,#7b1299 266px,#8a0d99 280px,#990898 294px,#99038a 308px,#99007e 322px,#990074 336px,#99006b 350px,#990064 364px,#99005d 378px,#990057 392px,#990052 406px,#99004d 420px,#990049 434px,#990045 448px,#990041 462px,#99003e 476px,#99003b 490px,#990038 504px,#990036 518px,#990033 532px,#990031 546px,#99002f 560px,#99002d 574px,#99002b 588px,#99002a 601px)"></div><div style="height:3px;background:linear-gradient(90deg,#005599 0px,#005299 14px,#004f99 28px,#004b99 42px,#004899 56px,#004599 70px,#004299 84px,#003e99 98px,#003b99 112px,#003799 126px,#003499 140px,#013099 154px,#112d99 168px,#1f2999 182px,#2e2599 196px,#3d2199 210px,#4b1d99 224px,#5a1999 238px,#691599 252px,#781099 266px,#870c99 280px,#960799 294px,#99028d 308px,#990081 322px,#990077 336px,#99006e 350px,#990066 364px,#99005f 378px,#990059 392px,#990054 406px,#99004f 420px,#99004a 434px,#990046 448px,#990043 462px,#99003f 476px,#99003c 490px,#99003a 504px,#990037 518px,#990034 532px,#990032 546px,#990030 560px,#99002e 574px,#99002c 588px,#99002b 601px)"></div><div style="height:3px;background:linear-gradient(90deg,#005399 0px,#005099 14px,#004d99 28px,#004999 42px,#004699 56px,#004399 70px,#004099 84px,#003d99 98px,#003999 112px,#003699 126px,#003299 140px,#012f99 154px,#102b99 168px,#1e2799 182px,#2d2499 196px,#3b2099 210px,#491c99 224px,#581899 238px,#671499 252px,#750f99 266px,#840b99 280px,#930699 294px,#990190 308px,#990084 322px,#990079 336px,#990070 350px,#990068 364px,#990061 378px,#99005b 392px,#990055 406px,#990050 420px,#99004c 434px,#990048 448px,#990044 462px,#990041 476px,#99003e 490px,#99003b 504px,#990038 518px,#990036 532px,#990033 546px,#990031 560px,#99002f 574px,#99002d 588px,#99002c 601px)"></div><div style="height:3px;background:linear-gradient(90deg,#005199 0px,#004e99 14px,#004b99 28px,#004899 42px,#004499 56px,#004199 70px,#003e99 84px,#003b99 98px,#003799 112px,#003499 126px,#003199 140px,#002d99 154px,#0f2999 168px,#1d2699 182px,#2b2299 196px,#3a1e99 210px,#481a99 224px,#561699 238px,#641299 252px,#730e99 266px,#810a99 280px,#900599 294px,#990093 308px,#990087 322px,#99007c 336px,#990072 350px,#99006a 364px,#990063 378px,#99005d 392px,#990057 406px,#990052 420px,#99004e 434px,#990049 448px,#990046 462px,#990042 476px,#99003f 490px,#99003c 504px,#990039 518px,#990037 532px,#990035 546px,#990032 560px,#990030 574px,#99002e 588px,#99002d 601px)"></div><div style="height:3px;background:linear-gradient(90deg,#004f99 0px,#004c99 14px,#004999 28px,#004699 42px,#004399 56px,#004099 70px,#003c99 84px,#003999 98px,#003699 112px,#003299 126px,#002f99 140px,#002c99 154px,#0e2899 168px,#1c2499 182px,#2a2199 196px,#381d99 210px,#461999 224px,#541599 238px,#621199 252px,#700d99 266px,#7f0999 280px,#8d0499 294px,#990096 308px,#990089 322px,#99007e 336px,#990075 350px,#99006d 364px,#990065 378px,#99005f 392px,#990059 406px,#990054 420px,#99004f 434px,#99004b 448px,#990047 462px,#990044 476px,#990040 490px,#99003d 504px,#99003b 518px,#990038 532px,#990036 546px,#990033 560px,#990031 574px,#99002f 588px,#99002e 601px)"></div><div style="height:3px;background:linear-gradient(90deg,#004d99 0px,#004a99 14px,#004799 28px,#004499 42px,#004199 56px,#003e99 70px,#003b99 84px,#003799 98px,#003499 112px,#003199 126px,#002d99 140px,#002a99 154px,#0e2799 168px,#1b2399 182px,#291f99 196px,#371c99 210px,#441899 224px,#521499 238px,#601099 252px,#6e0c99 266px,#7c0899 280px,#8a0399 294px,#980099 308px,#99008c 322px,#990081 336px,#990077 350px,#99006f 364px,#990067 378px,#990061 392px,#99005b 406px,#990056 420px,#990051 434px,#99004d 448px,#990049 462px,#990045 476px,#990042 490px,#99003f 504px,#99003c 518px,#990039 532px,#990037 546px,#990035 560px,#990032 574px,#990030 588px,#99002f 601px)"></div><div style="height:3px;background:linear-gradient(90deg,#004b99 0px,#004899 14px,#004599 28px,#004299 42px,#003f99 56px,#003c99 70px,#003999 84px,#003699 98px,#003399 112px,#002f99 126px,#002c99 140px,#002999 154px,#0d2599 168px,#1b2299 182px,#281e99 196px,#351a99 210px,#431799 224px,#501399 238px,#5e0f99 252px,#6c0b99 266px,#790699 280px,#870299 294px,#950099 308px,#99008f 322px,#990084 336px,#99007a 350px,#990071 364px,#990069 378px,#990063 392px,#99005d 406px,#990057 420px,#990053 434px,#99004e 448px,#99004a 462px,#990046 476px,#990043 490px,#990040 504px,#99003d 518px,#99003b 532px,#990038 546px,#990036 560px,#990034 574px,#990032 588px,#990030 601px)"></div><div style="height:3px;background:linear-gradient(90deg,#004999 0px,#004699 14px,#004399 28px,#004199 42px,#003e99 56px,#003b99 70px,#003799 84px,#003499 98px,#003199 112px,#002e99 126px,#002b99 140px,#002799 154px,#0c2499 168px,#1a2099 182px,#271d99 196px,#341999 210px,#411599 224px,#4f1299 238px,#5c0e99 252px,#690a99 266px,#770599 280px,#850199 294px,#920099 308px,#990092 322px,#990086 336px,#99007c 350px,#990073 364px,#99006b 378px,#990065 392px,#99005f 406px,#990059 420px,#990054 434px,#990050 448px,#99004c 462px,#990048 476px,#990044 490px,#990041 504px,#99003e 518px,#99003c 532px,#990039 546px,#990037 560px,#990035 574px,#990033 588px,#990031 601px)"></div><div style="height:3px;background:linear-gradient(90deg,#004799 0px,#004599 14px,#004299 28px,#003f99 42px,#003c99 56px,#003999 70px,#003699 84px,#003399 98px,#003099 112px,#002c99 126px,#002999 140px,#002699 154px,#0c2299 168px,#191f99 182px,#261c99 196px,#331899 210px,#401499 224px,#4d1099 238px,#5a0d99 252px,#670999 266px,#750499 280px,#820099 294px,#900099 308px,#990095 322px,#990089 336px,#99007e 350px,#990075 364px,#99006e 378px,#990067 392px,#990060 406px,#99005b 420px,#990056 434px,#990051 448px,#99004d 462px,#990049 476px,#990046 490px,#990043 504px,#990040 518px,#99003d 532px,#99003a 546px,#990038 560px,#990036 574px,#990034 588px,#990032 601px)"></div><div style="height:3px;background:linear-gradient(90deg,#004699 0px,#004399 14px,#004099 28px,#003d99 42px,#003a99 56px,#003799 70px,#003499 84px,#003199 98px,#002e99 112px,#002b99 126px,#002899 140px,#002599 154px,#0b2199 168px,#181e99 182px,#251a99 196px,#321799 210px,#3e1399 224px,#4b0f99 238px,#580c99 252px,#650899 266px,#720399 280px,#800099 294px,#8d0099 308px,#990098 322px,#99008b 336px,#990081 350px,#990078 364px,#990070 378px,#990069 392px,#990062 406px,#99005d 420px,#990057 434px,#990053 448px,#99004f 462px,#99004b 476px,#990047 490px,#990044 504px,#990041 518px,#99003e 532px,#99003c 546px,#990039 560px,#990037 574px,#990035 588px,#990033 601px)"></div><div style="height:3px;background:linear-gradient(90deg,#004499 0px,#004199 14px,#003f99 28px,#003c99 42px,#003999 56px,#003699 70px,#003399 84px,#003099 98px,#002d99 112px,#002a99 126px,#002799 140px,#002399 154px,#0a2099 168px,#171d99 182px,#241999 196px,#311699 210px,#3d1299 224px,#4a0e99 238px,#560b99 252px,#630799 266px,#700399 280px,#7d0099 294px,#8a0099 308px,#970099 322px,#99008e 336px,#990083 350px,#99007a 364px,#990072 378px,#99006b 392px,#990064 406px,#99005e 420px,#990059 434px,#990054 448px,#990050 462px,#99004c 476px,#990049 490px,#990045 504px,#990042 518px,#99003f 532px,#99003d 546px,#99003a 560px,#990038 574px,#990036 588px,#990034 601px)"></div><div style="height:3px;background:linear-gradient(90deg,#004399 0px,#004099 14px,#003d99 28px,#003a99 42px,#003799 56px,#003599 70px,#003299 84px,#002f99 98px,#002c99 112px,#002899 126px,#002599 140px,#002299 154px,#0a1f99 168px,#161b99 182px,#231899 196px,#2f1599 210px,#3c1199 224px,#480d99 238px,#550a99 252px,#610699 266px,#6e0299 280px,#7b0099 294px,#880099 308px,#950099 322px,#990091 336px,#990086 350px,#99007c 364px,#990074 378px,#99006d 392px,#990066 406px,#990060 420px,#99005b 434px,#990056 448px,#990052 462px,#99004e 476px,#99004a 490px,#990047 504px,#990043 518px,#990041 532px,#99003e 546px,#99003b 560px,#990039 574px,#990037 588px,#990035 601px)"></div><div style="height:3px;background:linear-gradient(90deg,#004199 0px,#003e99 14px,#003c99 28px,#003999 42px,#003699 56px,#003399 70px,#003099 84px,#002d99 98px,#002a99 112px,#002799 126px,#002499 140px,#002199 154px,#091e99 168px,#161a99 182px,#221799 196px,#2e1399 210px,#3a1099 224px,#470c99 238px,#530999 252px,#5f0599 266px,#6c0199 280px,#780099 294px,#850099 308px,#920099 322px,#990093 336px,#990088 350px,#99007e 364px,#990076 378px,#99006f 392px,#990068 406px,#990062 420px,#99005c 434px,#990058 448px,#990053 462px,#99004f 476px,#99004b 490px,#990048 504px,#990045 518px,#990042 532px,#99003f 546px,#99003c 560px,#99003a 574px,#990038 588px,#990036 601px)"></div><div style="height:3px;background:linear-gradient(90deg,#004099 0px,#003d99 14px,#003a99 28px,#003799 42px,#003599 56px,#003299 70px,#002f99 84px,#002c99 98px,#002999 112px,#002699 126px,#002399 140px,#002099 154px,#091c99 168px,#151999 182px,#211699 196px,#2d1299 210px,#390f99 224px,#450b99 238px,#510899 252px,#5e0499 266px,#6a0099 280px,#760099 294px,#830099 308px,#8f0099 322px,#990096 336px,#99008b 350px,#990081 364px,#990078 378px,#990070 392px,#99006a 406px,#990064 420px,#99005e 434px,#990059 448px,#990055 462px,#990051 476px,#99004d 490px,#990049 504px,#990046 518px,#990043 532px,#990040 546px,#99003e 560px,#99003b 574px,#990039 588px,#990037 601px)"></div><div style="height:3px;background:linear-gradient(90deg,#003e99 0px,#003b99 14px,#003999 28px,#003699 42px,#003399 56px,#003099 70px,#002e99 84px,#002b99 98px,#002899 112px,#002599 126px,#002299 140px,#001f99 154px,#081b99 168px,#141899 182px,#201599 196px,#2c1199 210px,#380e99 224px,#440a99 238px,#500799 252px,#5c0399 266px,#680099 280px,#740099 294px,#800099 308px,#8d0099 322px,#990099 336px,#99008d 350px,#990083 364px,#99007a 378px,#990072 392px,#99006c 406px,#990065 420px,#990060 434px,#99005b 448px,#990056 462px,#990052 476px,#99004e 490px,#99004b 504px,#990047 518px,#990044 532px,#990041 546px,#99003f 560px,#99003c 574px,#99003a 588px,#990038 601px)"></div><div style="height:3px;background:linear-gradient(90deg,#003d99 0px,#003a99 14px,#003799 28px,#003599 42px,#003299 56px,#002f99 70px,#002c99 84px,#002999 98px,#002799 112px,#002499 126px,#002199 140px,#001d99 154px,#081a99 168px,#141799 182px,#1f1499 196px,#2b1099 210px,#370d99 224px,#430a99 238px,#4e0699 252px,#5a0299 266px,#660099 280px,#720099 294px,#7e0099 308px,#8a0099 322px,#970099 336px,#990090 350px,#990085 364px,#99007c 378px,#990075 392px,#99006d 406px,#990067 420px,#990061 434px,#99005c 448px,#990058 462px,#990053 476px,#99004f 490px,#99004c 504px,#990049 518px,#990045 532px,#990043 546px,#990040 560px,#99003d 574px,#99003b 588px,#990039 601px)"></div><div style="height:3px;background:linear-gradient(90deg,#003b99 0px,#003999 14px,#003699 28px,#003399 42px,#003199 56px,#002e99 70px,#002b99 84px,#002899 98px,#002599 112px,#002299 126px,#001f99 140px,#001c99 154px,#071999 168px,#131699 182px,#1f1399 196px,#2a1099 210px,#360c99 224px,#410999 238px,#4d0599 252px,#580199 266px,#640099 280px,#700099 294px,#7c0099 308px,#880099 322px,#940099 336px,#990092 350px,#990088 364px,#99007f 378px,#990077 392px,#99006f 406px,#990069 420px,#990063 434px,#99005e 448px,#990059 462px,#990055 476px,#990051 490px,#99004d 504px,#99004a 518px,#990047 532px,#990044 546px,#990041 560px,#99003e 574px,#99003c 588px,#99003a 601px)"></div><div style="height:3px;background:linear-gradient(90deg,#003a99 0px,#003799 14px,#003599 28px,#003299 42px,#002f99 56px,#002d99 70px,#002a99 84px,#002799 98px,#002499 112px,#002199 126px,#001e99 140px,#001b99 154px,#061899 168px,#121599 182px,#1e1299 196px,#290f99 210px,#350b99 224px,#400899 238px,#4b0499 252px,#570099 266px,#620099 280px,#6e0099 294px,#7a0099 308px,#860099 322px,#910099 336px,#990095 350px,#99008a 364px,#990081 378px,#990079 392px,#990071 406px,#99006b 420px,#990065 434px,#990060 448px,#99005b 462px,#990056 476px,#990052 490px,#99004f 504px,#99004b 518px,#990048 532px,#990045 546px,#990042 560px,#990040 574px,#99003d 588px,#99003b 601px)"></div><div style="height:3px;background:linear-gradient(90deg,#003999 0px,#003699 14px,#003499 28px,#003199 42px,#002e99 56px,#002c99 70px,#002999 84px,#002699 98px,#002399 112px,#002099 126px,#001d99 140px,#001a99 154px,#061799 168px,#121499 182px,#1d1199 196px,#280e99 210px,#330a99 224px,#3f0799 238px,#4a0399 252px,#550099 266px,#610099 280px,#6c0099 294px,#780099 308px,#830099 322px,#8f0099 336px,#990097 350px,#99008c 364px,#990083 378px,#99007b 392px,#990073 406px,#99006d 420px,#990067 434px,#990061 448px,#99005c 462px,#990058 476px,#990054 490px,#990050 504px,#99004c 518px,#990049 532px,#990046 546px,#990043 560px,#990041 574px,#99003e 588px,#99003c 601px)"></div><div style="height:3px;background:linear-gradient(90deg,#003799 0px,#003599 14px,#003299 28px,#003099 42px,#002d99 56px,#002a99 70px,#002899 84px,#002599 98px,#002299 112px,#001f99 126px,#001c99 140px,#001999 154px,#051699 168px,#111399 182px,#1c1099 196px,#270d99 210px,#320a99 224px,#3d0699 238px,#490399 252px,#540099 266px,#5f0099 280px,#6a0099 294px,#760099 308px,#810099 322px,#8d0099 336px,#980099 350px,#99008f 364px,#990085 378px,#99007d 392px,#990075 406px,#99006e 420px,#990068 434px,#990063 448px,#99005e 462px,#990059 476px,#990055 490px,#990051 504px,#99004e 518px,#99004a 532px,#990047 546px,#990044 560px,#990042 574px,#99003f 588px,#99003d 601px)"></div><div style="height:3px;background:linear-gradient(90deg,#003699 0px,#003499 14px,#003199 28px,#002f99 42px,#002c99 56px,#002999 70px,#002799 84px,#002499 98px,#002199 112px,#001e99 126px,#001b99 140px,#001899 154px,#051599 168px,#101299 182px,#1b0f99 196px,#260c99 210px,#310999 224px,#3c0599 238px,#470299 252px,#520099 266px,#5d0099 280px,#680099 294px,#740099 308px,#7f0099 322px,#8a0099 336px,#960099 350px,#990091 364px,#990087 378px,#99007f 392px,#990077 406px,#990070 420px,#99006a 434px,#990064 448px,#99005f 462px,#99005b 476px,#990056 490px,#990053 504px,#99004f 518px,#99004c 532px,#990049 546px,#990046 560px,#990043 574px,#990040 588px,#99003e 601px)"></div><div style="height:3px;background:linear-gradient(90deg,#003599 0px,#003299 14px,#003099 28px,#002d99 42px,#002b99 56px,#002899 70px,#002599 84px,#002399 98px,#002099 112px,#001d99 126px,#001a99 140px,#001799 154px,#051499 168px,#101199 182px,#1b0e99 196px,#260b99 210px,#300899 224px,#3b0599 238px,#460199 252px,#510099 266px,#5c0099 280px,#670099 294px,#720099 308px,#7d0099 322px,#880099 336px,#930099 350px,#990093 364px,#990089 378px,#990081 392px,#990079 406px,#990072 420px,#99006c 434px,#990066 448px,#990061 462px,#99005c 476px,#990058 490px,#990054 504px,#990050 518px,#99004d 532px,#99004a 546px,#990047 560px,#990044 574px,#990041 588px,#99003f 601px)"></div><div style="height:3px;background:linear-gradient(90deg,#003499 0px,#003199 14px,#002f99 28px,#002c99 42px,#002a99 56px,#002799 70px,#002499 84px,#002299 98px,#001f99 112px,#001c99 126px,#001999 140px,#001699 154px,#041399 168px,#0f1199 182px,#1a0d99 196px,#250a99 210px,#2f0799 224px,#3a0499 238px,#450099 252px,#4f0099 266px,#5a0099 280px,#650099 294px,#700099 308px,#7b0099 322px,#860099 336px,#910099 350px,#990096 364px,#99008c 378px,#990083 392px,#99007b 406px,#990074 420px,#99006d 434px,#990068 448px,#990062 462px,#99005e 476px,#990059 490px,#990055 504px,#990052 518px,#99004e 532px,#99004b 546px,#990048 560px,#990045 574px,#990043 588px,#990040 601px)"></div><div style="height:3px;background:linear-gradient(90deg,#003399 0px,#003099 14px,#002e99 28px,#002b99 42px,#002999 56px,#002699 70px,#002399 84px,#002199 98px,#001e99 112px,#001b99 126px,#001899 140px,#001699 154px,#041399 168px,#0f1099 182px,#190d99 196px,#240a99 210px,#2e0699 224px,#390399 238px,#430099 252px,#4e0099 266px,#590099 280px,#630099 294px,#6e0099 308px,#790099 322px,#840099 336px,#8f0099 350px,#990098 364px,#99008e 378px,#990085 392px,#99007d 406px,#990076 420px,#99006f 434px,#990069 448px,#990064 462px,#99005f 476px,#99005b 490px,#990057 504px,#990053 518px,#99004f 532px,#99004c 546px,#990049 560px,#990046 574px,#990044 588px,#990041 601px)"></div><div style="height:3px;background:linear-gradient(90deg,#003199 0px,#002f99 14px,#002d99 28px,#002a99 42px,#002899 56px,#002599 70px,#002299 84px,#002099 98px,#001d99 112px,#001a99 126px,#001799 140px,#001599 154px,#031299 168px,#0e0f99 182px,#190c99 196px,#230999 210px,#2e0699 224px,#380299 238px,#420099 252px,#4d0099 266px,#570099 280px,#620099 294px,#6c0099 308px,#770099 322px,#820099 336px,#8d0099 350px,#970099 364px,#990090 378px,#990087 392px,#99007f 406px,#990077 420px,#990071 434px,#99006b 448px,#990066 462px,#990061 476px,#99005c 490px,#990058 504px,#990054 518px,#990051 532px,#99004d 546px,#99004a 560px,#990047 574px,#990045 588px,#990042 601px)"></div><div style="height:3px;background:linear-gradient(90deg,#003099 0px,#002e99 14px,#002b99 28px,#002999 42px,#002699 56px,#002499 70px,#002199 84px,#001f99 98px,#001c99 112px,#001999 126px,#001799 140px,#001499 154px,#031199 168px,#0e0e99 182px,#180b99 196px,#220899 210px,#2d0599 224px,#370199 238px,#410099 252px,#4b0099 266px,#560099 280px,#600099 294px,#6b0099 308px,#750099 322px,#800099 336px,#8a0099 350px,#950099 364px,#990092 378px,#990089 392px,#990081 406px,#990079 420px,#990073 434px,#99006d 448px,#990067 462px,#990062 476px,#99005d 490px,#990059 504px,#990055 518px,#990052 532px,#99004e 546px,#99004b 560px,#990048 574px,#990046 588px,#990043 601px)"></div><div style="height:3px;background:linear-gradient(90deg,#002f99 0px,#002d99 14px,#002a99 28px,#002899 42px,#002599 56px,#002399 70px,#002099 84px,#001e99 98px,#001b99 112px,#001899 126px,#001699 140px,#001399 154px,#021099 168px,#0d0d99 182px,#170a99 196px,#220799 210px,#2c0499 224px,#360199 238px,#400099 252px,#4a0099 266px,#540099 280px,#5f0099 294px,#690099 308px,#730099 322px,#7e0099 336px,#880099 350px,#930099 364px,#990095 378px,#99008b 392px,#990083 406px,#99007b 420px,#990074 434px,#99006e 448px,#990069 462px,#990064 476px,#99005f 490px,#99005b 504px,#990057 518px,#990053 532px,#990050 546px,#99004d 560px,#99004a 574px,#990047 588px,#990044 601px)"></div><div style="height:3px;background:linear-gradient(90deg,#002e99 0px,#002c99 14px,#002999 28px,#002799 42px,#002599 56px,#002299 70px,#001f99 84px,#001d99 98px,#001a99 112px,#001899 126px,#001599 140px,#001299 154px,#020f99 168px,#0d0c99 182px,#170999 196px,#210699 210px,#2b0399 224px,#350099 238px,#3f0099 252px,#490099 266px,#530099 280px,#5d0099 294px,#670099 308px,#720099 322px,#7c0099 336px,#860099 350px,#910099 364px,#990097 378px,#99008d 392px,#990085 406px,#99007d 420px,#990076 434px,#990070 448px,#99006a 462px,#990065 476px,#990060 490px,#99005c 504px,#990058 518px,#990054 532px,#990051 546px,#99004e 560px,#99004b 574px,#990048 588px,#990045 601px)"></div><div style="height:3px;background:linear-gradient(90deg,#002d99 0px,#002b99 14px,#002899 28px,#002699 42px,#002499 56px,#002199 70px,#001f99 84px,#001c99 98px,#001999 112px,#001799 126px,#001499 140px,#001199 154px,#020f99 168px,#0c0c99 182px,#160999 196px,#200699 210px,#2a0399 224px,#340099 238px,#3e0099 252px,#480099 266px,#520099 280px,#5c0099 294px,#660099 308px,#700099 322px,#7a0099 336px,#840099 350px,#8f0099 364px,#990099 378px,#99008f 392px,#990087 406px,#99007f 420px,#990078 434px,#990071 448px,#99006c 462px,#990067 476px,#990062 490px,#99005d 504px,#990059 518px,#990056 532px,#990052 546px,#99004f 560px,#99004c 574px,#990049 588px,#990047 601px)"></div><div style="height:3px;background:linear-gradient(90deg,#002c99 0px,#002a99 14px,#002799 28px,#002599 42px,#002399 56px,#002099 70px,#001e99 84px,#001b99 98px,#001999 112px,#001699 126px,#001399 140px,#001199 154px,#010e99 168px,#0c0b99 182px,#160899 196px,#1f0599 210px,#290299 224px,#330099 238px,#3d0099 252px,#470099 266px,#500099 280px,#5a0099 294px,#640099 308px,#6e0099 322px,#780099 336px,#820099 350px,#8c0099 364px,#970099 378px,#990091 392px,#990088 406px,#990081 420px,#99007a 434px,#990073 448px,#99006d 462px,#990068 476px,#990063 490px,#99005f 504px,#99005b 518px,#990057 532px,#990053 546px,#990050 560px,#99004d 574px,#99004a 588px,#990048 601px)"></div><div style="height:3px;background:linear-gradient(90deg,#002b99 0px,#002999 14px,#002699 28px,#002499 42px,#002299 56px,#001f99 70px,#001d99 84px,#001a99 98px,#001899 112px,#001599 126px,#001299 140px,#001099 154px,#010d99 168px,#0b0a99 182px,#150799 196px,#1f0499 210px,#280199 224px,#320099 238px,#3c0099 252px,#450099 266px,#4f0099 280px,#590099 294px,#630099 308px,#6d0099 322px,#760099 336px,#800099 350px,#8a0099 364px,#950099 378px,#990093 392px,#99008a 406px,#990082 420px,#99007b 434px,#990075 448px,#99006f 462px,#99006a 476px,#990065 490px,#990060 504px,#99005c 518px,#990058 532px,#990055 546px,#990051 560px,#99004e 574px,#99004b 588px,#990049 601px)"></div><div style="height:3px;background:linear-gradient(90deg,#002a99 0px,#002899 14px,#002699 28px,#002399 42px,#002199 56px,#001e99 70px,#001c99 84px,#001999 98px,#001799 112px,#001499 126px,#001299 140px,#000f99 154px,#000c99 168px,#0b0999 182px,#140799 196px,#1e0499 210px,#280199 224px,#310099 238px,#3b0099 252px,#440099 266px,#4e0099 280px,#570099 294px,#610099 308px,#6b0099 322px,#750099 336px,#7f0099 350px,#880099 364px,#920099 378px,#990096 392px,#99008c 406px,#990084 420px,#99007d 434px,#990076 448px,#990070 462px,#99006b 476px,#990066 490px,#990061 504px,#99005d 518px,#990059 532px,#990056 546px,#990052 560px,#99004f 574px,#99004c 588px,#99004a 601px)"></div><div style="height:3px;background:linear-gradient(90deg,#002999 0px,#002799 14px,#002599 28px,#002299 42px,#002099 56px,#001d99 70px,#001b99 84px,#001999 98px,#001699 112px,#001399 126px,#001199 140px,#000e99 154px,#000c99 168px,#0a0999 182px,#140699 196px,#1d0399 210px,#270099 224px,#300099 238px,#3a0099 252px,#430099 266px,#4d0099 280px,#560099 294px,#600099 308px,#690099 322px,#730099 336px,#7d0099 350px,#870099 364px,#900099 378px,#990098 392px,#99008e 406px,#990086 420px,#99007f 434px,#990078 448px,#990072 462px,#99006d 476px,#990067 490px,#990063 504px,#99005f 518px,#99005b 532px,#990057 546px,#990054 560px,#990050 574px,#99004d 588px,#99004b 601px)"></div><div style="height:3px;background:linear-gradient(90deg,#002899 0px,#002699 14px,#002499 28px,#002199 42px,#001f99 56px,#001d99 70px,#001a99 84px,#001899 98px,#001599 112px,#001399 126px,#001099 140px,#000e99 154px,#000b99 168px,#0a0899 182px,#130599 196px,#1d0299 210px,#260099 224px,#2f0099 238px,#390099 252px,#420099 266px,#4b0099 280px,#550099 294px,#5e0099 308px,#680099 322px,#710099 336px,#7b0099 350px,#850099 364px,#8e0099 378px,#980099 392px,#990090 406px,#990088 420px,#990081 434px,#99007a 448px,#990074 462px,#99006e 476px,#990069 490px,#990064 504px,#990060 518px,#99005c 532px,#990058 546px,#990055 560px,#990051 574px,#99004e 588px,#99004c 601px)"></div><div style="height:3px;background:linear-gradient(90deg,#002799 0px,#002599 14px,#002399 28px,#002199 42px,#001e99 56px,#001c99 70px,#001999 84px,#001799 98px,#001499 112px,#001299 126px,#000f99 140px,#000d99 154px,#000a99 168px,#090799 182px,#130599 196px,#1c0299 210px,#250099 224px,#2f0099 238px,#380099 252px,#410099 266px,#4a0099 280px,#540099 294px,#5d0099 308px,#660099 322px,#700099 336px,#790099 350px,#830099 364px,#8c0099 378px,#960099 392px,#990092 406px,#99008a 420px,#990082 434px,#99007b 448px,#990075 462px,#990070 476px,#99006a 490px,#990066 504px,#990061 518px,#99005d 532px,#990059 546px,#990056 560px,#990053 574px,#990050 588px,#99004d 601px)"></div><div style="height:3px;background:linear-gradient(90deg,#002699 0px,#002499 14px,#002299 28px,#002099 42px,#001d99 56px,#001b99 70px,#001999 84px,#001699 98px,#001499 112px,#001199 126px,#000f99 140px,#000c99 154px,#000999 168px,#090799 182px,#120499 196px,#1b0199 210px,#250099 224px,#2e0099 238px,#370099 252px,#400099 266px,#490099 280px,#520099 294px,#5c0099 308px,#650099 322px,#6e0099 336px,#780099 350px,#810099 364px,#8b0099 378px,#940099 392px,#990094 406px,#99008c 420px,#990084 434px,#99007d 448px,#990077 462px,#990071 476px,#99006c 490px,#990067 504px,#990063 518px,#99005e 532px,#99005b 546px,#990057 560px,#990054 574px,#990051 588px,#99004e 601px)"></div><div style="height:3px;background:linear-gradient(90deg,#002699 0px,#002399 14px,#002199 28px,#001f99 42px,#001d99 56px,#001a99 70px,#001899 84px,#001599 98px,#001399 112px,#001199 126px,#000e99 140px,#000b99 154px,#000999 168px,#080699 182px,#120399 196px,#1b0099 210px,#240099 224px,#2d0099 238px,#360099 252px,#3f0099 266px,#480099 280px,#510099 294px,#5a0099 308px,#630099 322px,#6d0099 336px,#760099 350px,#7f0099 364px,#890099 378px,#920099 392px,#990096 406px,#99008e 420px,#990086 434px,#99007f 448px,#990078 462px,#990073 476px,#99006d 490px,#990068 504px,#990064 518px,#990060 532px,#99005c 546px,#990058 560px,#990055 574px,#990052 588px,#99004f 601px)"></div><div style="height:3px;background:linear-gradient(90deg,#002599 0px,#002399 14px,#002099 28px,#001e99 42px,#001c99 56px,#001999 70px,#001799 84px,#001599 98px,#001299 112px,#001099 126px,#000d99 140px,#000b99 154px,#000899 168px,#080599 182px,#110399 196px,#1a0099 210px,#230099 224px,#2c0099 238px,#350099 252px,#3e0099 266px,#470099 280px,#500099 294px,#590099 308px,#620099 322px,#6b0099 336px,#740099 350px,#7e0099 364px,#870099 378px,#900099 392px,#990098 406px,#990090 420px,#990088 434px,#990081 448px,#99007a 462px,#990074 476px,#99006f 490px,#99006a 504px,#990065 518px,#990061 532px,#99005d 546px,#990059 560px,#990056 574px,#990053 588px,#990050 601px)"></div><div style="height:3px;background:linear-gradient(90deg,#002499 0px,#002299 14px,#001f99 28px,#001d99 42px,#001b99 56px,#001999 70px,#001699 84px,#001499 98px,#001299 112px,#000f99 126px,#000d99 140px,#000a99 154px,#000799 168px,#080599 182px,#110299 196px,#1a0099 210px,#230099 224px,#2b0099 238px,#340099 252px,#3d0099 266px,#460099 280px,#4f0099 294px,#580099 308px,#610099 322px,#6a0099 336px,#730099 350px,#7c0099 364px,#850099 378px,#8e0099 392px,#980099 406px,#990092 420px,#990089 434px,#990082 448px,#99007c 462px,#990076 476px,#990070 490px,#99006b 504px,#990067 518px,#990062 532px,#99005e 546px,#99005b 560px,#990057 574px,#990054 588px,#990051 601px)"></div><div style="height:3px;background:linear-gradient(90deg,#002399 0px,#002199 14px,#001f99 28px,#001c99 42px,#001a99 56px,#001899 70px,#001699 84px,#001399 98px,#001199 112px,#000e99 126px,#000c99 140px,#000999 154px,#000799 168px,#070499 182px,#100199 196px,#190099 210px,#220099 224px,#2b0099 238px,#330099 252px,#3c0099 266px,#450099 280px,#4e0099 294px,#560099 308px,#5f0099 322px,#680099 336px,#710099 350px,#7a0099 364px,#830099 378px,#8c0099 392px,#960099 406px,#990093 420px,#99008b 434px,#990084 448px,#99007d 462px,#990077 476px,#990072 490px,#99006d 504px,#990068 518px,#990064 532px,#99005f 546px,#99005c 560px,#990058 574px,#990055 588px,#990052 601px)"></div><div style="height:3px;background:linear-gradient(90deg,#002299 0px,#002099 14px,#001e99 28px,#001c99 42px,#001999 56px,#001799 70px,#001599 84px,#001399 98px,#001099 112px,#000e99 126px,#000b99 140px,#000999 154px,#000699 168px,#070499 182px,#100199 196px,#190099 210px,#210099 224px,#2a0099 238px,#330099 252px,#3b0099 266px,#440099 280px,#4d0099 294px,#550099 308px,#5e0099 322px,#670099 336px,#700099 350px,#790099 364px,#820099 378px,#8b0099 392px,#940099 406px,#990095 420px,#99008d 434px,#990086 448px,#99007f 462px,#990079 476px,#990073 490px,#99006e 504px,#990069 518px,#990065 532px,#990061 546px,#99005d 560px,#990059 574px,#990056 588px,#990053 601px)"></div><div style="height:3px;background:linear-gradient(90deg,#002199 0px,#001f99 14px,#001d99 28px,#001b99 42px,#001999 56px,#001699 70px,#001499 84px,#001299 98px,#001099 112px,#000d99 126px,#000b99 140px,#000899 154px,#000699 168px,#060399 182px,#0f0099 196px,#180099 210px,#210099 224px,#290099 238px,#320099 252px,#3a0099 266px,#430099 280px,#4b0099 294px,#540099 308px,#5d0099 322px,#650099 336px,#6e0099 350px,#770099 364px,#800099 378px,#890099 392px,#920099 406px,#990097 420px,#99008f 434px,#990087 448px,#990080 462px,#99007a 476px,#990075 490px,#99006f 504px,#99006b 518px,#990066 532px,#990062 546px,#99005e 560px,#99005b 574px,#990057 588px,#990054 601px)"></div><div style="height:3px;background:linear-gradient(90deg,#002199 0px,#001f99 14px,#001c99 28px,#001a99 42px,#001899 56px,#001699 70px,#001399 84px,#001199 98px,#000f99 112px,#000c99 126px,#000a99 140px,#000899 154px,#000599 168px,#060299 182px,#0f0099 196px,#180099 210px,#200099 224px,#290099 238px,#310099 252px,#390099 266px,#420099 280px,#4a0099 294px,#530099 308px,#5c0099 322px,#640099 336px,#6d0099 350px,#750099 364px,#7e0099 378px,#870099 392px,#900099 406px,#990099 420px,#990091 434px,#990089 448px,#990082 462px,#99007c 476px,#990076 490px,#990071 504px,#99006c 518px,#990067 532px,#990063 546px,#99005f 560px,#99005c 574px,#990058 588px,#990055 601px)"></div><div style="height:3px;background:linear-gradient(90deg,#002099 0px,#001e99 14px,#001c99 28px,#001999 42px,#001799 56px,#001599 70px,#001399 84px,#001199 98px,#000e99 112px,#000c99 126px,#000999 140px,#000799 154px,#000499 168px,#060299 182px,#0e0099 196px,#170099 210px,#1f0099 224px,#280099 238px,#300099 252px,#390099 266px,#410099 280px,#490099 294px,#520099 308px,#5a0099 322px,#630099 336px,#6b0099 350px,#740099 364px,#7d0099 378px,#850099 392px,#8e0099 406px,#970099 420px,#990093 434px,#99008b 448px,#990084 462px,#99007d 476px,#990078 490px,#990072 504px,#99006d 518px,#990069 532px,#990064 546px,#990061 560px,#99005d 574px,#990059 588px,#990056 601px)"></div><div style="height:3px;background:linear-gradient(90deg,#001f99 0px,#001d99 14px,#001b99 28px,#001999 42px,#001799 56px,#001499 70px,#001299 84px,#001099 98px,#000e99 112px,#000b99 126px,#000999 140px,#000699 154px,#000499 168px,#050199 182px,#0e0099 196px,#160099 210px,#1f0099 224px,#270099 238px,#2f0099 252px,#380099 266px,#400099 280px,#480099 294px,#510099 308px,#590099 322px,#620099 336px,#6a0099 350px,#720099 364px,#7b0099 378px,#840099 392px,#8c0099 406px,#950099 420px,#990094 434px,#99008c 448px,#990085 462px,#99007f 476px,#990079 490px,#990074 504px,#99006f 518px,#99006a 532px,#990066 546px,#990062 560px,#99005e 574px,#99005b 588px,#990058 601px)"></div><div style="height:3px;background:linear-gradient(90deg,#001e99 0px,#001c99 14px,#001a99 28px,#001899 42px,#001699 56px,#001499 70px,#001199 84px,#000f99 98px,#000d99 112px,#000b99 126px,#000899 140px,#000699 154px,#000399 168px,#050199 182px,#0e0099 196px,#160099 210px,#1e0099 224px,#260099 238px,#2f0099 252px,#370099 266px,#3f0099 280px,#470099 294px,#500099 308px,#580099 322px,#600099 336px,#690099 350px,#710099 364px,#7a0099 378px,#820099 392px,#8b0099 406px,#930099 420px,#990096 434px,#99008e 448px,#990087 462px,#990080 476px,#99007a 490px,#990075 504px,#990070 518px,#99006b 532px,#990067 546px,#990063 560px,#99005f 574px,#99005c 588px,#990059 601px)"></div><div style="height:3px;background:linear-gradient(90deg,#001e99 0px,#001c99 14px,#001999 28px,#001799 42px,#001599 56px,#001399 70px,#001199 84px,#000f99 98px,#000c99 112px,#000a99 126px,#000899 140px,#000599 154px,#000399 168px,#050099 182px,#0d0099 196px,#150099 210px,#1e0099 224px,#260099 238px,#2e0099 252px,#360099 266px,#3e0099 280px,#460099 294px,#4f0099 308px,#570099 322px,#5f0099 336px,#670099 350px,#700099 364px,#780099 378px,#800099 392px,#890099 406px,#910099 420px,#990098 434px,#990090 448px,#990089 462px,#990082 476px,#99007c 490px,#990076 504px,#990071 518px,#99006d 532px,#990068 546px,#990064 560px,#990060 574px,#99005d 588px,#99005a 601px)"></div><div style="height:3px;background:linear-gradient(90deg,#001d99 0px,#001b99 14px,#001999 28px,#001799 42px,#001599 56px,#001299 70px,#001099 84px,#000e99 98px,#000c99 112px,#000999 126px,#000799 140px,#000599 154px,#000299 168px,#040099 182px,#0d0099 196px,#150099 210px,#1d0099 224px,#250099 238px,#2d0099 252px,#350099 266px,#3d0099 280px,#450099 294px,#4e0099 308px,#560099 322px,#5e0099 336px,#660099 350px,#6e0099 364px,#770099 378px,#7f0099 392px,#870099 406px,#900099 420px,#980099 434px,#990092 448px,#99008a 462px,#990084 476px,#99007d 490px,#990078 504px,#990073 518px,#99006e 532px,#990069 546px,#990065 560px,#990061 574px,#99005e 588px,#99005b 601px)"></div><div style="height:3px;background:linear-gradient(90deg,#001c99 0px,#001a99 14px,#001899 28px,#001699 42px,#001499 56px,#001299 70px,#001099 84px,#000d99 98px,#000b99 112px,#000999 126px,#000699 140px,#000499 154px,#000299 168px,#040099 182px,#0c0099 196px,#150099 210px,#1d0099 224px,#250099 238px,#2d0099 252px,#350099 266px,#3d0099 280px,#440099 294px,#4d0099 308px,#550099 322px,#5d0099 336px,#650099 350px,#6d0099 364px,#750099 378px,#7d0099 392px,#860099 406px,#8e0099 420px,#960099 434px,#990093 448px,#99008c 462px,#990085 476px,#99007f 490px,#990079 504px,#990074 518px,#99006f 532px,#99006b 546px,#990066 560px,#990063 574px,#99005f 588px,#99005c 601px)"></div><div style="height:3px;background:linear-gradient(90deg,#001c99 0px,#001a99 14px,#001799 28px,#001599 42px,#001399 56px,#001199 70px,#000f99 84px,#000d99 98px,#000b99 112px,#000899 126px,#000699 140px,#000499 154px,#000199 168px,#040099 182px,#0c0099 196px,#140099 210px,#1c0099 224px,#240099 238px,#2c0099 252px,#340099 266px,#3c0099 280px,#440099 294px,#4c0099 308px,#530099 322px,#5b0099 336px,#630099 350px,#6c0099 364px,#740099 378px,#7c0099 392px,#840099 406px,#8c0099 420px,#950099 434px,#990095 448px,#99008e 462px,#990087 476px,#990080 490px,#99007b 504px,#990075 518px,#990070 532px,#99006c 546px,#990068 560px,#990064 574px,#990060 588px,#99005d 601px)"></div><div style="height:3px;background:linear-gradient(90deg,#001b99 0px,#001999 14px,#001799 28px,#001599 42px,#001399 56px,#001199 70px,#000e99 84px,#000c99 98px,#000a99 112px,#000899 126px,#000599 140px,#000399 154px,#000099 168px,#030099 182px,#0c0099 196px,#140099 210px,#1b0099 224px,#230099 238px,#2b0099 252px,#330099 266px,#3b0099 280px,#430099 294px,#4b0099 308px,#520099 322px,#5a0099 336px,#620099 350px,#6a0099 364px,#720099 378px,#7a0099 392px,#820099 406px,#8b0099 420px,#930099 434px,#990097 448px,#99008f 462px,#990088 476px,#990082 490px,#99007c 504px,#990077 518px,#990072 532px,#99006d 546px,#990069 560px,#990065 574px,#990061 588px,#99005e 601px)"></div><div style="height:3px;background:linear-gradient(90deg,#001a99 0px,#001899 14px,#001699 28px,#001499 42px,#001299 56px,#001099 70px,#000e99 84px,#000c99 98px,#000999 112px,#000799 126px,#000599 140px,#000299 154px,#000099 168px,#030099 182px,#0b0099 196px,#130099 210px,#1b0099 224px,#230099 238px,#2b0099 252px,#320099 266px,#3a0099 280px,#420099 294px,#4a0099 308px,#510099 322px,#590099 336px,#610099 350px,#690099 364px,#710099 378px,#790099 392px,#810099 406px,#890099 420px,#910099 434px,#990099 448px,#990091 462px,#99008a 476px,#990083 490px,#99007e 504px,#990078 518px,#990073 532px,#99006e 546px,#99006a 560px,#990066 574px,#990062 588px,#99005f 601px)"></div><div style="height:3px;background:linear-gradient(90deg,#001a99 0px,#001899 14px,#001699 28px,#001399 42px,#001199 56px,#000f99 70px,#000d99 84px,#000b99 98px,#000999 112px,#000799 126px,#000499 140px,#000299 154px,#000099 168px,#030099 182px,#0b0099 196px,#130099 210px,#1a0099 224px,#220099 238px,#2a0099 252px,#320099 266px,#390099 280px,#410099 294px,#490099 308px,#500099 322px,#580099 336px,#600099 350px,#680099 364px,#700099 378px,#770099 392px,#7f0099 406px,#870099 420px,#8f0099 434px,#980099 448px,#990093 462px,#99008b 476px,#990085 490px,#99007f 504px,#990079 518px,#990074 532px,#990070 546px,#99006b 560px,#990067 574px,#990063 588px,#990060 601px)"></div><div style="height:3px;background:linear-gradient(90deg,#001999 0px,#001799 14px,#001599 28px,#001399 42px,#001199 56px,#000f99 70px,#000d99 84px,#000a99 98px,#000899 112px,#000699 126px,#000499 140px,#000199 154px,#000099 168px,#020099 182px,#0a0099 196px,#120099 210px,#1a0099 224px,#220099 238px,#290099 252px,#310099 266px,#380099 280px,#400099 294px,#480099 308px,#4f0099 322px,#570099 336px,#5f0099 350px,#660099 364px,#6e0099 378px,#760099 392px,#7e0099 406px,#860099 420px,#8e0099 434px,#960099 448px,#990094 462px,#99008d 476px,#990086 490px,#990080 504px,#99007b 518px,#990076 532px,#990071 546px,#99006d 560px,#990068 574px,#990065 588px,#990061 601px)"></div><div style="height:3px;background:linear-gradient(90deg,#001899 0px,#001699 14px,#001499 28px,#001299 42px,#001099 56px,#000e99 70px,#000c99 84px,#000a99 98px,#000899 112px,#000699 126px,#000399 140px,#000199 154px,#000099 168px,#020099 182px,#0a0099 196px,#120099 210px,#190099 224px,#210099 238px,#290099 252px,#300099 266px,#380099 280px,#3f0099 294px,#470099 308px,#4e0099 322px,#560099 336px,#5e0099 350px,#650099 364px,#6d0099 378px,#750099 392px,#7d0099 406px,#840099 420px,#8c0099 434px,#940099 448px,#990096 462px,#99008f 476px,#990088 490px,#990082 504px,#99007c 518px,#990077 532px,#990072 546px,#99006e 560px,#99006a 574px,#990066 588px,#990062 601px)"></div><div style="height:3px;background:linear-gradient(90deg,#001899 0px,#001699 14px,#001499 28px,#001299 42px,#001099 56px,#000e99 70px,#000c99 84px,#000999 98px,#000799 112px,#000599 126px,#000399 140px,#000099 154px,#000099 168px,#020099 182px,#0a0099 196px,#110099 210px,#190099 224px,#200099 238px,#280099 252px,#2f0099 266px,#370099 280px,#3e0099 294px,#460099 308px,#4d0099 322px,#550099 336px,#5d0099 350px,#640099 364px,#6c0099 378px,#730099 392px,#7b0099 406px,#830099 420px,#8b0099 434px,#920099 448px,#990098 462px,#990090 476px,#990089 490px,#990083 504px,#99007e 518px,#990078 532px,#990074 546px,#99006f 560px,#99006b 574px,#990067 588px,#990063 601px)"></div><div style="height:3px;background:linear-gradient(90deg,#001799 0px,#001599 14px,#001399 28px,#001199 42px,#000f99 56px,#000d99 70px,#000b99 84px,#000999 98px,#000799 112px,#000499 126px,#000299 140px,#000099 154px,#000099 168px,#010099 182px,#090099 196px,#110099 210px,#190099 224px,#200099 238px,#270099 252px,#2f0099 266px,#360099 280px,#3e0099 294px,#450099 308px,#4c0099 322px,#540099 336px,#5b0099 350px,#630099 364px,#6b0099 378px,#720099 392px,#7a0099 406px,#810099 420px,#890099 434px,#910099 448px,#990099 462px,#990092 476px,#99008b 490px,#990085 504px,#99007f 518px,#99007a 532px,#990075 546px,#990070 560px,#99006c 574px,#990068 588px,#990065 601px)"></div><div style="height:3px;background:linear-gradient(90deg,#001699 0px,#001499 14px,#001399 28px,#001199 42px,#000f99 56px,#000d99 70px,#000a99 84px,#000899 98px,#000699 112px,#000499 126px,#000299 140px,#000099 154px,#000099 168px,#010099 182px,#090099 196px,#110099 210px,#180099 224px,#1f0099 238px,#270099 252px,#2e0099 266px,#350099 280px,#3d0099 294px,#440099 308px,#4c0099 322px,#530099 336px,#5a0099 350px,#620099 364px,#690099 378px,#710099 392px,#780099 406px,#800099 420px,#880099 434px,#8f0099 448px,#970099 462px,#990093 476px,#99008d 490px,#990086 504px,#990080 518px,#99007b 532px,#990076 546px,#990071 560px,#99006d 574px,#990069 588px,#990066 601px)"></div><div style="height:3px;background:linear-gradient(90deg,#001699 0px,#001499 14px,#001299 28px,#001099 42px,#000e99 56px,#000c99 70px,#000a99 84px,#000899 98px,#000699 112px,#000399 126px,#000199 140px,#000099 154px,#000099 168px,#010099 182px,#090099 196px,#100099 210px,#180099 224px,#1f0099 238px,#260099 252px,#2d0099 266px,#350099 280px,#3c0099 294px,#430099 308px,#4b0099 322px,#520099 336px,#590099 350px,#610099 364px,#680099 378px,#700099 392px,#770099 406px,#7f0099 420px,#860099 434px,#8e0099 448px,#950099 462px,#990095 476px,#99008e 490px,#990088 504px,#990082 518px,#99007c 532px,#990077 546px,#990073 560px,#99006e 574px,#99006a 588px,#990067 601px)"></div><div style="height:3px;background:linear-gradient(90deg,#001599 0px,#001399 14px,#001199 28px,#000f99 42px,#000d99 56px,#000b99 70px,#000999 84px,#000799 98px,#000599 112px,#000399 126px,#000199 140px,#000099 154px,#000099 168px,#000099 182px,#080099 196px,#100099 210px,#170099 224px,#1e0099 238px,#260099 252px,#2d0099 266px,#340099 280px,#3b0099 294px,#420099 308px,#4a0099 322px,#510099 336px,#580099 350px,#600099 364px,#670099 378px,#6e0099 392px,#760099 406px,#7d0099 420px,#850099 434px,#8c0099 448px,#940099 462px,#990097 476px,#990090 490px,#990089 504px,#990083 518px,#99007e 532px,#990079 546px,#990074 560px,#990070 574px,#99006b 588px,#990068 601px)"></div><div style="height:3px;background:linear-gradient(90deg,#001599 0px,#001399 14px,#001199 28px,#000f99 42px,#000d99 56px,#000b99 70px,#000999 84px,#000799 98px,#000599 112px,#000299 126px,#000099 140px,#000099 154px,#000099 168px,#000099 182px,#080099 196px,#0f0099 210px,#170099 224px,#1e0099 238px,#250099 252px,#2c0099 266px,#330099 280px,#3b0099 294px,#420099 308px,#490099 322px,#500099 336px,#570099 350px,#5f0099 364px,#660099 378px,#6d0099 392px,#740099 406px,#7c0099 420px,#830099 434px,#8b0099 448px,#920099 462px,#990098 476px,#990091 490px,#99008b 504px,#990085 518px,#99007f 532px,#99007a 546px,#990075 560px,#990071 574px,#99006d 588px,#990069 601px)"></div><div style="height:3px;background:linear-gradient(90deg,#001499 0px,#001299 14px,#001099 28px,#000e99 42px,#000c99 56px,#000a99 70px,#000899 84px,#000699 98px,#000499 112px,#000299 126px,#000099 140px,#000099 154px,#000099 168px,#000099 182px,#080099 196px,#0f0099 210px,#160099 224px,#1d0099 238px,#250099 252px,#2c0099 266px,#330099 280px,#3a0099 294px,#410099 308px,#480099 322px,#4f0099 336px,#560099 350px,#5d0099 364px,#650099 378px,#6c0099 392px,#730099 406px,#7a0099 420px,#820099 434px,#890099 448px,#910099 462px,#980099 476px,#990093 490px,#99008c 504px,#990086 518px,#990080 532px,#99007b 546px,#990076 560px,#990072 574px,#99006e 588px,#99006a 601px)"></div><div style="height:3px;background:linear-gradient(90deg,#001399 0px,#001299 14px,#001099 28px,#000e99 42px,#000c99 56px,#000a99 70px,#000899 84px,#000699 98px,#000499 112px,#000199 126px,#000099 140px,#000099 154px,#000099 168px,#000099 182px,#070099 196px,#0f0099 210px,#160099 224px,#1d0099 238px,#240099 252px,#2b0099 266px,#320099 280px,#390099 294px,#400099 308px,#470099 322px,#4e0099 336px,#550099 350px,#5c0099 364px,#640099 378px,#6b0099 392px,#720099 406px,#790099 420px,#800099 434px,#880099 448px,#8f0099 462px,#960099 476px,#990094 490px,#99008e 504px,#990087 518px,#990082 532px,#99007c 546px,#990078 560px,#990073 574px,#99006f 588px,#99006b 601px)"></div><div style="height:3px;background:linear-gradient(90deg,#001399 0px,#001199 14px,#000f99 28px,#000d99 42px,#000b99 56px,#000999 70px,#000799 84px,#000599 98px,#000399 112px,#000199 126px,#000099 140px,#000099 154px,#000099 168px,#000099 182px,#070099 196px,#0e0099 210px,#150099 224px,#1c0099 238px,#230099 252px,#2a0099 266px,#310099 280px,#380099 294px,#3f0099 308px,#460099 322px,#4d0099 336px,#540099 350px,#5b0099 364px,#620099 378px,#6a0099 392px,#710099 406px,#780099 420px,#7f0099 434px,#860099 448px,#8e0099 462px,#950099 476px,#990096 490px,#99008f 504px,#990089 518px,#990083 532px,#99007e 546px,#990079 560px,#990074 574px,#990070 588px,#99006c 601px)"></div><div style="height:3px;background:linear-gradient(90deg,#001299 0px,#001199 14px,#000f99 28px,#000d99 42px,#000b99 56px,#000999 70px,#000799 84px,#000599 98px,#000399 112px,#000099 126px,#000099 140px,#000099 154px,#000099 168px,#000099 182px,#070099 196px,#0e0099 210px,#150099 224px,#1c0099 238px,#230099 252px,#2a0099 266px,#310099 280px,#380099 294px,#3f0099 308px,#450099 322px,#4c0099 336px,#530099 350px,#5a0099 364px,#610099 378px,#680099 392px,#700099 406px,#770099 420px,#7e0099 434px,#850099 448px,#8c0099 462px,#930099 476px,#990097 490px,#990090 504px,#99008a 518px,#990084 532px,#99007f 546px,#99007a 560px,#990075 574px,#990071 588px,#99006d 601px)"></div><div style="height:3px;background:linear-gradient(90deg,#001299 0px,#001099 14px,#000e99 28px,#000c99 42px,#000a99 56px,#000899 70px,#000699 84px,#000499 98px,#000299 112px,#000099 126px,#000099 140px,#000099 154px,#000099 168px,#000099 182px,#060099 196px,#0e0099 210px,#150099 224px,#1b0099 238px,#220099 252px,#290099 266px,#300099 280px,#370099 294px,#3e0099 308px,#450099 322px,#4c0099 336px,#520099 350px,#590099 364px,#600099 378px,#670099 392px,#6e0099 406px,#750099 420px,#7c0099 434px,#840099 448px,#8b0099 462px,#920099 476px,#990099 490px,#990092 504px,#99008c 518px,#990086 532px,#990080 546px,#99007b 560px,#990077 574px,#990072 588px,#99006f 601px)"></div><div style="height:3px;background:linear-gradient(90deg,#001199 0px,#000f99 14px,#000e99 28px,#000c99 42px,#000a99 56px,#000899 70px,#000699 84px,#000499 98px,#000299 112px,#000099 126px,#000099 140px,#000099 154px,#000099 168px,#000099 182px,#060099 196px,#0d0099 210px,#140099 224px,#1b0099 238px,#220099 252px,#290099 266px,#2f0099 280px,#360099 294px,#3d0099 308px,#440099 322px,#4b0099 336px,#520099 350px,#580099 364px,#5f0099 378px,#660099 392px,#6d0099 406px,#740099 420px,#7b0099 434px,#820099 448px,#890099 462px,#900099 476px,#980099 490px,#990093 504px,#99008d 518px,#990087 532px,#990082 546px,#99007d 560px,#990078 574px,#990073 588px,#990070 601px)"></div><div style="height:3px;background:linear-gradient(90deg,#001199 0px,#000f99 14px,#000d99 28px,#000b99 42px,#000999 56px,#000799 70px,#000599 84px,#000399 98px,#000199 112px,#000099 126px,#000099 140px,#000099 154px,#000099 168px,#000099 182px,#060099 196px,#0d0099 210px,#140099 224px,#1b0099 238px,#210099 252px,#280099 266px,#2f0099 280px,#360099 294px,#3c0099 308px,#430099 322px,#4a0099 336px,#510099 350px,#570099 364px,#5e0099 378px,#650099 392px,#6c0099 406px,#730099 420px,#7a0099 434px,#810099 448px,#880099 462px,#8f0099 476px,#960099 490px,#990095 504px,#99008e 518px,#990088 532px,#990083 546px,#99007e 560px,#990079 574px,#990075 588px,#990071 601px)"></div><div style="height:3px;background:linear-gradient(90deg,#001099 0px,#000e99 14px,#000d99 28px,#000b99 42px,#000999 56px,#000799 70px,#000599 84px,#000399 98px,#000199 112px,#000099 126px,#000099 140px,#000099 154px,#000099 168px,#000099 182px,#060099 196px,#0d0099 210px,#130099 224px,#1a0099 238px,#210099 252px,#280099 266px,#2e0099 280px,#350099 294px,#3c0099 308px,#420099 322px,#490099 336px,#500099 350px,#570099 364px,#5d0099 378px,#640099 392px,#6b0099 406px,#720099 420px,#790099 434px,#800099 448px,#870099 462px,#8e0099 476px,#950099 490px,#990096 504px,#990090 518px,#99008a 532px,#990084 546px,#99007f 560px,#99007a 574px,#990076 588px,#990072 601px)"></div><div style="height:3px;background:linear-gradient(90deg,#001099 0px,#000e99 14px,#000c99 28px,#000a99 42px,#000899 56px,#000699 70px,#000599 84px,#000399 98px,#000099 112px,#000099 126px,#000099 140px,#000099 154px,#000099 168px,#000099 182px,#050099 196px,#0c0099 210px,#130099 224px,#1a0099 238px,#200099 252px,#270099 266px,#2e0099 280px,#340099 294px,#3b0099 308px,#420099 322px,#480099 336px,#4f0099 350px,#560099 364px,#5c0099 378px,#630099 392px,#6a0099 406px,#710099 420px,#770099 434px,#7e0099 448px,#850099 462px,#8c0099 476px,#930099 490px,#990098 504px,#990091 518px,#99008b 532px,#990086 546px,#990080 560px,#99007b 574px,#990077 588px,#990073 601px)"></div><div style="height:3px;background:linear-gradient(90deg,#000f99 0px,#000d99 14px,#000c99 28px,#000a99 42px,#000899 56px,#000699 70px,#000499 84px,#000299 98px,#000099 112px,#000099 126px,#000099 140px,#000099 154px,#000099 168px,#000099 182px,#050099 196px,#0c0099 210px,#130099 224px,#190099 238px,#200099 252px,#260099 266px,#2d0099 280px,#340099 294px,#3a0099 308px,#410099 322px,#470099 336px,#4e0099 350px,#550099 364px,#5b0099 378px,#620099 392px,#690099 406px,#6f0099 420px,#760099 434px,#7d0099 448px,#840099 462px,#8b0099 476px,#920099 490px,#990099 504px,#990093 518px,#99008d 532px,#990087 546px,#990082 560px,#99007d 574px,#990078 588px,#990074 601px)"></div><div style="height:3px;background:linear-gradient(90deg,#000f99 0px,#000d99 14px,#000b99 28px,#000999 42px,#000799 56px,#000699 70px,#000499 84px,#000299 98px,#000099 112px,#000099 126px,#000099 140px,#000099 154px,#000099 168px,#000099 182px,#050099 196px,#0c0099 210px,#120099 224px,#190099 238px,#1f0099 252px,#260099 266px,#2d0099 280px,#330099 294px,#3a0099 308px,#400099 322px,#470099 336px,#4d0099 350px,#540099 364px,#5a0099 378px,#610099 392px,#680099 406px,#6e0099 420px,#750099 434px,#7c0099 448px,#830099 462px,#890099 476px,#900099 490px,#970099 504px,#990094 518px,#99008e 532px,#990088 546px,#990083 560px,#99007e 574px,#990079 588px,#990075 601px)"></div><div style="height:3px;background:linear-gradient(90deg,#000e99 0px,#000d99 14px,#000b99 28px,#000999 42px,#000799 56px,#000599 70px,#000399 84px,#000199 98px,#000099 112px,#000099 126px,#000099 140px,#000099 154px,#000099 168px,#000099 182px,#040099 196px,#0b0099 210px,#120099 224px,#180099 238px,#1f0099 252px,#250099 266px,#2c0099 280px,#320099 294px,#390099 308px,#3f0099 322px,#460099 336px,#4c0099 350px,#530099 364px,#590099 378px,#600099 392px,#670099 406px,#6d0099 420px,#740099 434px,#7b0099 448px,#810099 462px,#880099 476px,#8f0099 490px,#960099 504px,#990096 518px,#99008f 532px,#99008a 546px,#990084 560px,#99007f 574px,#99007a 588px,#990076 601px)"></div><div style="height:3px;background:linear-gradient(90deg,#000e99 0px,#000c99 14px,#000a99 28px,#000899 42px,#000799 56px,#000599 70px,#000399 84px,#000199 98px,#000099 112px,#000099 126px,#000099 140px,#000099 154px,#000099 168px,#000099 182px,#040099 196px,#0b0099 210px,#120099 224px,#180099 238px,#1f0099 252px,#250099 266px,#2b0099 280px,#320099 294px,#380099 308px,#3f0099 322px,#450099 336px,#4c0099 350px,#520099 364px,#590099 378px,#5f0099 392px,#660099 406px,#6c0099 420px,#730099 434px,#790099 448px,#800099 462px,#870099 476px,#8d0099 490px,#940099 504px,#990097 518px,#990091 532px,#99008b 546px,#990085 560px,#990080 574px,#99007c 588px,#990077 601px)"></div><div style="height:3px;background:linear-gradient(90deg,#000d99 0px,#000c99 14px,#000a99 28px,#000899 42px,#000699 56px,#000499 70px,#000299 84px,#000099 98px,#000099 112px,#000099 126px,#000099 140px,#000099 154px,#000099 168px,#000099 182px,#040099 196px,#0b0099 210px,#110099 224px,#180099 238px,#1e0099 252px,#240099 266px,#2b0099 280px,#310099 294px,#380099 308px,#3e0099 322px,#440099 336px,#4b0099 350px,#510099 364px,#580099 378px,#5e0099 392px,#650099 406px,#6b0099 420px,#720099 434px,#780099 448px,#7f0099 462px,#850099 476px,#8c0099 490px,#930099 504px,#990099 518px,#990092 532px,#99008c 546px,#990087 560px,#990082 574px,#99007d 588px,#990079 601px)"></div><div style="height:3px;background:linear-gradient(90deg,#000d99 0px,#000b99 14px,#000999 28px,#000899 42px,#000699 56px,#000499 70px,#000299 84px,#000099 98px,#000099 112px,#000099 126px,#000099 140px,#000099 154px,#000099 168px,#000099 182px,#040099 196px,#0a0099 210px,#110099 224px,#170099 238px,#1e0099 252px,#240099 266px,#2a0099 280px,#310099 294px,#370099 308px,#3d0099 322px,#440099 336px,#4a0099 350px,#500099 364px,#570099 378px,#5d0099 392px,#640099 406px,#6a0099 420px,#710099 434px,#770099 448px,#7e0099 462px,#840099 476px,#8b0099 490px,#910099 504px,#980099 518px,#990093 532px,#99008d 546px,#990088 560px,#990083 574px,#99007e 588px,#99007a 601px)"></div><div style="height:3px;background:linear-gradient(90deg,#000c99 0px,#000b99 14px,#000999 28px,#000799 42px,#000599 56px,#000399 70px,#000199 84px,#000099 98px,#000099 112px,#000099 126px,#000099 140px,#000099 154px,#000099 168px,#000099 182px,#030099 196px,#0a0099 210px,#100099 224px,#170099 238px,#1d0099 252px,#230099 266px,#2a0099 280px,#300099 294px,#360099 308px,#3d0099 322px,#430099 336px,#490099 350px,#500099 364px,#560099 378px,#5c0099 392px,#630099 406px,#690099 420px,#6f0099 434px,#760099 448px,#7c0099 462px,#830099 476px,#890099 490px,#900099 504px,#970099 518px,#990095 532px,#99008f 546px,#990089 560px,#990084 574px,#99007f 588px,#99007b 601px)"></div><div style="height:3px;background:linear-gradient(90deg,#000c99 0px,#000a99 14px,#000899 28px,#000799 42px,#000599 56px,#000399 70px,#000199 84px,#000099 98px,#000099 112px,#000099 126px,#000099 140px,#000099 154px,#000099 168px,#000099 182px,#030099 196px,#0a0099 210px,#100099 224px,#160099 238px,#1d0099 252px,#230099 266px,#290099 280px,#2f0099 294px,#360099 308px,#3c0099 322px,#420099 336px,#480099 350px,#4f0099 364px,#550099 378px,#5b0099 392px,#620099 406px,#680099 420px,#6e0099 434px,#750099 448px,#7b0099 462px,#820099 476px,#880099 490px,#8f0099 504px,#950099 518px,#990096 532px,#990090 546px,#99008a 560px,#990085 574px,#990080 588px,#99007c 601px)"></div><div style="height:3px;background:linear-gradient(90deg,#000c99 0px,#000a99 14px,#000899 28px,#000699 42px,#000499 56px,#000399 70px,#000199 84px,#000099 98px,#000099 112px,#000099 126px,#000099 140px,#000099 154px,#000099 168px,#000099 182px,#030099 196px,#090099 210px,#100099 224px,#160099 238px,#1c0099 252px,#230099 266px,#290099 280px,#2f0099 294px,#350099 308px,#3b0099 322px,#410099 336px,#480099 350px,#4e0099 364px,#540099 378px,#5a0099 392px,#610099 406px,#670099 420px,#6d0099 434px,#740099 448px,#7a0099 462px,#800099 476px,#870099 490px,#8d0099 504px,#940099 518px,#990098 532px,#990091 546px,#99008c 560px,#990086 574px,#990081 588px,#99007d 601px)"></div><div style="height:3px;background:linear-gradient(90deg,#000b99 0px,#000999 14px,#000899 28px,#000699 42px,#000499 56px,#000299 70px,#000099 84px,#000099 98px,#000099 112px,#000099 126px,#000099 140px,#000099 154px,#000099 168px,#000099 182px,#030099 196px,#090099 210px,#0f0099 224px,#160099 238px,#1c0099 252px,#220099 266px,#280099 280px,#2e0099 294px,#340099 308px,#3b0099 322px,#410099 336px,#470099 350px,#4d0099 364px,#530099 378px,#5a0099 392px,#600099 406px,#660099 420px,#6c0099 434px,#730099 448px,#790099 462px,#7f0099 476px,#860099 490px,#8c0099 504px,#920099 518px,#990099 532px,#990093 546px,#99008d 560px,#990088 574px,#990083 588px,#99007e 601px)"></div><div style="height:3px;background:linear-gradient(90deg,#000b99 0px,#000999 14px,#000799 28px,#000599 42px,#000499 56px,#000299 70px,#000099 84px,#000099 98px,#000099 112px,#000099 126px,#000099 140px,#000099 154px,#000099 168px,#000099 182px,#020099 196px,#090099 210px,#0f0099 224px,#150099 238px,#1b0099 252px,#220099 266px,#280099 280px,#2e0099 294px,#340099 308px,#3a0099 322px,#400099 336px,#460099 350px,#4c0099 364px,#520099 378px,#590099 392px,#5f0099 406px,#650099 420px,#6b0099 434px,#720099 448px,#780099 462px,#7e0099 476px,#840099 490px,#8b0099 504px,#910099 518px,#980099 532px,#990094 546px,#99008e 560px,#990089 574px,#990084 588px,#99007f 601px)"></div><div style="height:3px;background:linear-gradient(90deg,#000a99 0px,#000899 14px,#000799 28px,#000599 42px,#000399 56px,#000199 70px,#000099 84px,#000099 98px,#000099 112px,#000099 126px,#000099 140px,#000099 154px,#000099 168px,#000099 182px,#020099 196px,#090099 210px,#0f0099 224px,#150099 238px,#1b0099 252px,#210099 266px,#270099 280px,#2d0099 294px,#330099 308px,#390099 322px,#3f0099 336px,#460099 350px,#4c0099 364px,#520099 378px,#580099 392px,#5e0099 406px,#640099 420px,#6a0099 434px,#700099 448px,#770099 462px,#7d0099 476px,#830099 490px,#8a0099 504px,#900099 518px,#960099 532px,#990095 546px,#990090 560px,#99008a 574px,#990085 588px,#990081 601px)"></div><div style="height:3px;background:linear-gradient(90deg,#000a99 0px,#000899 14px,#000699 28px,#000599 42px,#000399 56px,#000199 70px,#000099 84px,#000099 98px,#000099 112px,#000099 126px,#000099 140px,#000099 154px,#000099 168px,#000099 182px,#020099 196px,#080099 210px,#0e0099 224px,#150099 238px,#1b0099 252px,#210099 266px,#270099 280px,#2d0099 294px,#330099 308px,#390099 322px,#3f0099 336px,#450099 350px,#4b0099 364px,#510099 378px,#570099 392px,#5d0099 406px,#630099 420px,#690099 434px,#6f0099 448px,#760099 462px,#7c0099 476px,#820099 490px,#880099 504px,#8f0099 518px,#950099 532px,#990097 546px,#990091 560px,#99008b 574px,#990086 588px,#990082 601px)"></div><div style="height:3px;background:linear-gradient(90deg,#000999 0px,#000899 14px,#000699 28px,#000499 42px,#000299 56px,#000099 70px,#000099 84px,#000099 98px,#000099 112px,#000099 126px,#000099 140px,#000099 154px,#000099 168px,#000099 182px,#020099 196px,#080099 210px,#0e0099 224px,#140099 238px,#1a0099 252px,#200099 266px,#260099 280px,#2c0099 294px,#320099 308px,#380099 322px,#3e0099 336px,#440099 350px,#4a0099 364px,#500099 378px,#560099 392px,#5c0099 406px,#620099 420px,#680099 434px,#6e0099 448px,#750099 462px,#7b0099 476px,#810099 490px,#870099 504px,#8d0099 518px,#940099 532px,#990098 546px,#990092 560px,#99008d 574px,#990087 588px,#990083 601px)"></div><div style="height:3px;background:linear-gradient(90deg,#000999 0px,#000799 14px,#000699 28px,#000499 42px,#000299 56px,#000099 70px,#000099 84px,#000099 98px,#000099 112px,#000099 126px,#000099 140px,#000099 154px,#000099 168px,#000099 182px,#010099 196px,#080099 210px,#0e0099 224px,#140099 238px,#1a0099 252px,#200099 266px,#260099 280px,#2c0099 294px,#320099 308px,#380099 322px,#3d0099 336px,#430099 350px,#490099 364px,#4f0099 378px,#550099 392px,#5b0099 406px,#610099 420px,#670099 434px,#6d0099 448px,#730099 462px,#7a0099 476px,#800099 490px,#860099 504px,#8c0099 518px,#920099 532px,#980099 546px,#990093 560px,#99008e 574px,#990089 588px,#990084 601px)"></div><div style="height:3px;background:linear-gradient(90deg,#000999 0px,#000799 14px,#000599 28px,#000399 42px,#000299 56px,#000099 70px,#000099 84px,#000099 98px,#000099 112px,#000099 126px,#000099 140px,#000099 154px,#000099 168px,#000099 182px,#010099 196px,#070099 210px,#0e0099 224px,#140099 238px,#1a0099 252px,#1f0099 266px,#250099 280px,#2b0099 294px,#310099 308px,#370099 322px,#3d0099 336px,#430099 350px,#490099 364px,#4f0099 378px,#540099 392px,#5a0099 406px,#600099 420px,#660099 434px,#6c0099 448px,#720099 462px,#780099 476px,#7f0099 490px,#850099 504px,#8b0099 518px,#910099 532px,#970099 546px,#990095 560px,#99008f 574px,#99008a 588px,#990085 601px)"></div><div style="height:3px;background:linear-gradient(90deg,#000899 0px,#000699 14px,#000599 28px,#000399 42px,#000199 56px,#000099 70px,#000099 84px,#000099 98px,#000099 112px,#000099 126px,#000099 140px,#000099 154px,#000099 168px,#000099 182px,#010099 196px,#070099 210px,#0d0099 224px,#130099 238px,#190099 252px,#1f0099 266px,#250099 280px,#2b0099 294px,#310099 308px,#360099 322px,#3c0099 336px,#420099 350px,#480099 364px,#4e0099 378px,#540099 392px,#5a0099 406px,#600099 420px,#650099 434px,#6b0099 448px,#710099 462px,#770099 476px,#7d0099 490px,#830099 504px,#8a0099 518px,#900099 532px,#960099 546px,#990096 560px,#990090 574px,#99008b 588px,#990086 601px)"></div><div style="height:3px;background:linear-gradient(90deg,#000899 0px,#000699 14px,#000499 28px,#000399 42px,#000199 56px,#000099 70px,#000099 84px,#000099 98px,#000099 112px,#000099 126px,#000099 140px,#000099 154px,#000099 168px,#000099 182px,#010099 196px,#070099 210px,#0d0099 224px,#130099 238px,#190099 252px,#1f0099 266px,#240099 280px,#2a0099 294px,#300099 308px,#360099 322px,#3c0099 336px,#410099 350px,#470099 364px,#4d0099 378px,#530099 392px,#590099 406px,#5f0099 420px,#650099 434px,#6a0099 448px,#700099 462px,#760099 476px,#7c0099 490px,#820099 504px,#880099 518px,#8e0099 532px,#950099 546px,#990097 560px,#990092 574px,#99008c 588px,#990088 601px)"></div><div style="height:3px;background:linear-gradient(90deg,#000799 0px,#000699 14px,#000499 28px,#000299 42px,#000099 56px,#000099 70px,#000099 84px,#000099 98px,#000099 112px,#000099 126px,#000099 140px,#000099 154px,#000099 168px,#000099 182px,#000099 196px,#070099 210px,#0d0099 224px,#130099 238px,#180099 252px,#1e0099 266px,#240099 280px,#2a0099 294px,#2f0099 308px,#350099 322px,#3b0099 336px,#410099 350px,#470099 364px,#4c0099 378px,#520099 392px,#580099 406px,#5e0099 420px,#640099 434px,#690099 448px,#6f0099 462px,#750099 476px,#7b0099 490px,#810099 504px,#870099 518px,#8d0099 532px,#930099 546px,#990099 560px,#990093 574px,#99008d 588px,#990089 601px)"></div></div><div class="a" style="left:1077px;top:86px;width:328px;height:313px;overflow:hidden;clip-path:polygon(0.50px 0.75px,326.20px 31.17px,50.94px 311.49px)"><div style="height:2px;background:linear-gradient(90deg,#00ff01 0px,#10ff00 6px,#21ff00 12px,#32ff00 18px,#43ff00 24px,#55ff00 30px,#67ff00 36px,#79ff00 42px,#8dff00 48px,#a0ff00 54px,#b5ff00 60px,#caff00 66px,#e0ff00 72px,#f7ff00 78px,#fff000 84px,#ffdc00 90px,#ffcb00 96px,#ffbb00 102px,#ffad00 108px,#ffa100 114px,#ff9500 120px,#ff8b00 126px,#ff8200 132px,#ff7900 138px,#ff7100 144px,#ff6a00 150px,#ff6300 156px,#ff5d00 162px,#ff5700 168px,#ff5200 174px,#ff4d00 180px,#ff4800 186px,#ff4400 192px,#ff3f00 198px,#ff3b00 204px,#ff3800 210px,#ff3400 216px,#ff3100 222px,#ff2d00 228px,#ff2a00 234px,#ff2700 240px,#ff2500 246px,#ff2200 252px,#ff1f00 258px,#ff1d00 264px,#ff1a00 270px,#ff1800 276px,#ff1600 282px,#ff1400 288px,#ff1200 294px,#ff1000 300px,#ff0e00 306px,#ff0c00 312px,#ff0a00 318px,#ff0900 324px,#ff0700 330px)"></div><div style="height:2px;background:linear-gradient(90deg,#00ff06 0px,#0fff05 6px,#20ff04 12px,#31ff02 18px,#43ff00 24px,#54ff00 30px,#66ff00 36px,#79ff00 42px,#8dff00 48px,#a0ff00 54px,#b5ff00 60px,#caff00 66px,#e0ff00 72px,#f7ff00 78px,#fff000 84px,#ffdc00 90px,#ffca00 96px,#ffba00 102px,#ffac00 108px,#ffa000 114px,#ff9500 120px,#ff8a00 126px,#ff8100 132px,#ff7900 138px,#ff7100 144px,#ff6900 150px,#ff6300 156px,#ff5c00 162px,#ff5700 168px,#ff5100 174px,#ff4c00 180px,#ff4700 186px,#ff4300 192px,#ff3f00 198px,#ff3b00 204px,#ff3700 210px,#ff3300 216px,#ff3000 222px,#ff2d00 228px,#ff2a00 234px,#ff2700 240px,#ff2400 246px,#ff2100 252px,#ff1f00 258px,#ff1c00 264px,#ff1a00 270px,#ff1800 276px,#ff1500 282px,#ff1300 288px,#ff1100 294px,#ff0f00 300px,#ff0e00 306px,#ff0c00 312px,#ff0a00 318px,#ff0800 324px,#ff0700 330px)"></div><div style="height:2px;background:linear-gradient(90deg,#00ff0c 0px,#0eff0b 6px,#1fff09 12px,#31ff08 18px,#42ff06 24px,#54ff05 30px,#66ff03 36px,#79ff01 42px,#8cff00 48px,#a1ff00 54px,#b5ff00 60px,#cbff00 66px,#e1ff00 72px,#f8ff00 78px,#ffef00 84px,#ffdb00 90px,#ffc900 96px,#ffba00 102px,#ffac00 108px,#ff9f00 114px,#ff9400 120px,#ff8a00 126px,#ff8000 132px,#ff7800 138px,#ff7000 144px,#ff6900 150px,#ff6200 156px,#ff5c00 162px,#ff5600 168px,#ff5100 174px,#ff4b00 180px,#ff4700 186px,#ff4200 192px,#ff3e00 198px,#ff3a00 204px,#ff3600 210px,#ff3300 216px,#ff2f00 222px,#ff2c00 228px,#ff2900 234px,#ff2600 240px,#ff2300 246px,#ff2100 252px,#ff1e00 258px,#ff1c00 264px,#ff1900 270px,#ff1700 276px,#ff1500 282px,#ff1300 288px,#ff1100 294px,#ff0f00 300px,#ff0d00 306px,#ff0b00 312px,#ff0900 318px,#ff0800 324px,#ff0600 330px)"></div><div style="height:2px;background:linear-gradient(90deg,#00ff11 0px,#0dff10 6px,#1fff0f 12px,#30ff0d 18px,#41ff0c 24px,#53ff0b 30px,#66ff09 36px,#79ff08 42px,#8cff06 48px,#a1ff04 54px,#b5ff03 60px,#cbff01 66px,#e2ff00 72px,#f9ff00 78px,#ffee00 84px,#ffda00 90px,#ffc800 96px,#ffb900 102px,#ffab00 108px,#ff9e00 114px,#ff9300 120px,#ff8900 126px,#ff7f00 132px,#ff7700 138px,#ff6f00 144px,#ff6800 150px,#ff6100 156px,#ff5b00 162px,#ff5500 168px,#ff5000 174px,#ff4b00 180px,#ff4600 186px,#ff4200 192px,#ff3d00 198px,#ff3900 204px,#ff3600 210px,#ff3200 216px,#ff2f00 222px,#ff2c00 228px,#ff2800 234px,#ff2600 240px,#ff2300 246px,#ff2000 252px,#ff1e00 258px,#ff1b00 264px,#ff1900 270px,#ff1700 276px,#ff1400 282px,#ff1200 288px,#ff1000 294px,#ff0e00 300px,#ff0c00 306px,#ff0b00 312px,#ff0900 318px,#ff0700 324px,#ff0500 330px)"></div><div style="height:2px;background:linear-gradient(90deg,#00ff16 0px,#0dff15 6px,#1eff14 12px,#2fff13 18px,#41ff12 24px,#53ff10 30px,#66ff0f 36px,#79ff0e 42px,#8cff0c 48px,#a1ff0b 54px,#b6ff09 60px,#cbff08 66px,#e2ff06 72px,#faff04 78px,#ffed02 84px,#ffd900 90px,#ffc800 96px,#ffb800 102px,#ffaa00 108px,#ff9d00 114px,#ff9200 120px,#ff8800 126px,#ff7f00 132px,#ff7600 138px,#ff6e00 144px,#ff6700 150px,#ff6000 156px,#ff5a00 162px,#ff5500 168px,#ff4f00 174px,#ff4a00 180px,#ff4500 186px,#ff4100 192px,#ff3d00 198px,#ff3900 204px,#ff3500 210px,#ff3100 216px,#ff2e00 222px,#ff2b00 228px,#ff2800 234px,#ff2500 240px,#ff2200 246px,#ff2000 252px,#ff1d00 258px,#ff1b00 264px,#ff1800 270px,#ff1600 276px,#ff1400 282px,#ff1200 288px,#ff1000 294px,#ff0e00 300px,#ff0c00 306px,#ff0a00 312px,#ff0800 318px,#ff0700 324px,#ff0500 330px)"></div><div style="height:2px;background:linear-gradient(90deg,#00ff1c 0px,#0cff1b 6px,#1dff1a 12px,#2fff18 18px,#40ff17 24px,#53ff16 30px,#65ff15 36px,#78ff14 42px,#8cff12 48px,#a1ff11 54px,#b6ff10 60px,#ccff0e 66px,#e3ff0d 72px,#faff0b 78px,#ffed09 84px,#ffd806 90px,#ffc704 96px,#ffb702 102px,#ffa901 108px,#ff9d00 114px,#ff9100 120px,#ff8700 126px,#ff7e00 132px,#ff7500 138px,#ff6e00 144px,#ff6600 150px,#ff6000 156px,#ff5a00 162px,#ff5400 168px,#ff4e00 174px,#ff4900 180px,#ff4500 186px,#ff4000 192px,#ff3c00 198px,#ff3800 204px,#ff3400 210px,#ff3100 216px,#ff2d00 222px,#ff2a00 228px,#ff2700 234px,#ff2400 240px,#ff2200 246px,#ff1f00 252px,#ff1c00 258px,#ff1a00 264px,#ff1800 270px,#ff1500 276px,#ff1300 282px,#ff1100 288px,#ff0f00 294px,#ff0d00 300px,#ff0b00 306px,#ff0a00 312px,#ff0800 318px,#ff0600 324px,#ff0400 330px)"></div><div style="height:2px;background:linear-gradient(90deg,#00ff21 0px,#0bff20 6px,#1cff1f 12px,#2eff1e 18px,#40ff1d 24px,#52ff1c 30px,#65ff1b 36px,#78ff1a 42px,#8cff19 48px,#a1ff17 54px,#b6ff16 60px,#ccff15 66px,#e3ff13 72px,#fbff12 78px,#ffec0f 84px,#ffd80c 90px,#ffc60a 96px,#ffb608 102px,#ffa806 108px,#ff9c04 114px,#ff9103 120px,#ff8601 126px,#ff7d00 132px,#ff7500 138px,#ff6d00 144px,#ff6600 150px,#ff5f00 156px,#ff5900 162px,#ff5300 168px,#ff4e00 174px,#ff4900 180px,#ff4400 186px,#ff4000 192px,#ff3b00 198px,#ff3700 204px,#ff3400 210px,#ff3000 216px,#ff2d00 222px,#ff2a00 228px,#ff2700 234px,#ff2400 240px,#ff2100 246px,#ff1e00 252px,#ff1c00 258px,#ff1900 264px,#ff1700 270px,#ff1500 276px,#ff1300 282px,#ff1100 288px,#ff0f00 294px,#ff0d00 300px,#ff0b00 306px,#ff0900 312px,#ff0700 318px,#ff0600 324px,#ff0400 330px)"></div><div style="height:2px;background:linear-gradient(90deg,#00ff26 0px,#0aff25 6px,#1cff24 12px,#2dff24 18px,#3fff23 24px,#52ff22 30px,#65ff21 36px,#78ff20 42px,#8cff1f 48px,#a1ff1e 54px,#b6ff1c 60px,#cdff1b 66px,#e4ff1a 72px,#fcff19 78px,#ffeb16 84px,#ffd712 90px,#ffc510 96px,#ffb50d 102px,#ffa70b 108px,#ff9b09 114px,#ff9008 120px,#ff8606 126px,#ff7c04 132px,#ff7403 138px,#ff6c02 144px,#ff6501 150px,#ff5e00 156px,#ff5800 162px,#ff5200 168px,#ff4d00 174px,#ff4800 180px,#ff4300 186px,#ff3f00 192px,#ff3b00 198px,#ff3700 204px,#ff3300 210px,#ff3000 216px,#ff2c00 222px,#ff2900 228px,#ff2600 234px,#ff2300 240px,#ff2000 246px,#ff1e00 252px,#ff1b00 258px,#ff1900 264px,#ff1700 270px,#ff1400 276px,#ff1200 282px,#ff1000 288px,#ff0e00 294px,#ff0c00 300px,#ff0a00 306px,#ff0900 312px,#ff0700 318px,#ff0500 324px,#ff0300 330px)"></div><div style="height:2px;background:linear-gradient(90deg,#00ff2b 0px,#09ff2b 6px,#1bff2a 12px,#2dff29 18px,#3fff28 24px,#51ff28 30px,#64ff27 36px,#78ff26 42px,#8cff25 48px,#a1ff24 54px,#b7ff23 60px,#cdff22 66px,#e4ff21 72px,#fcff20 78px,#ffea1c 84px,#ffd618 90px,#ffc415 96px,#ffb513 102px,#ffa710 108px,#ff9a0e 114px,#ff8f0c 120px,#ff850a 126px,#ff7b09 132px,#ff7307 138px,#ff6b06 144px,#ff6405 150px,#ff5d03 156px,#ff5702 162px,#ff5201 168px,#ff4c00 174px,#ff4700 180px,#ff4300 186px,#ff3e00 192px,#ff3a00 198px,#ff3600 204px,#ff3200 210px,#ff2f00 216px,#ff2c00 222px,#ff2800 228px,#ff2500 234px,#ff2300 240px,#ff2000 246px,#ff1d00 252px,#ff1b00 258px,#ff1800 264px,#ff1600 270px,#ff1400 276px,#ff1200 282px,#ff1000 288px,#ff0e00 294px,#ff0c00 300px,#ff0a00 306px,#ff0800 312px,#ff0600 318px,#ff0500 324px,#ff0300 330px)"></div><div style="height:2px;background:linear-gradient(90deg,#00ff31 0px,#08ff30 6px,#1aff2f 12px,#2cff2f 18px,#3eff2e 24px,#51ff2d 30px,#64ff2d 36px,#78ff2c 42px,#8cff2b 48px,#a1ff2a 54px,#b7ff29 60px,#cdff28 66px,#e5ff28 72px,#fdff27 78px,#ffe922 84px,#ffd51e 90px,#ffc31b 96px,#ffb418 102px,#ffa615 108px,#ff9913 114px,#ff8e11 120px,#ff840f 126px,#ff7b0d 132px,#ff720b 138px,#ff6a0a 144px,#ff6308 150px,#ff5d07 156px,#ff5706 162px,#ff5105 168px,#ff4c04 174px,#ff4703 180px,#ff4202 186px,#ff3e01 192px,#ff3900 198px,#ff3500 204px,#ff3200 210px,#ff2e00 216px,#ff2b00 222px,#ff2800 228px,#ff2500 234px,#ff2200 240px,#ff1f00 246px,#ff1d00 252px,#ff1a00 258px,#ff1800 264px,#ff1500 270px,#ff1300 276px,#ff1100 282px,#ff0f00 288px,#ff0d00 294px,#ff0b00 300px,#ff0900 306px,#ff0800 312px,#ff0600 318px,#ff0400 324px,#ff0200 330px)"></div><div style="height:2px;background:linear-gradient(90deg,#00ff36 0px,#07ff35 6px,#19ff35 12px,#2bff34 18px,#3eff34 24px,#50ff33 30px,#64ff33 36px,#77ff32 42px,#8cff31 48px,#a1ff31 54px,#b7ff30 60px,#ceff2f 66px,#e5ff2e 72px,#feff2d 78px,#ffe929 84px,#ffd424 90px,#ffc221 96px,#ffb31d 102px,#ffa51a 108px,#ff9818 114px,#ff8d15 120px,#ff8313 126px,#ff7a11 132px,#ff710f 138px,#ff6a0e 144px,#ff630c 150px,#ff5c0b 156px,#ff5609 162px,#ff5008 168px,#ff4b07 174px,#ff4606 180px,#ff4105 186px,#ff3d04 192px,#ff3903 198px,#ff3502 204px,#ff3101 210px,#ff2e00 216px,#ff2a00 222px,#ff2700 228px,#ff2400 234px,#ff2100 240px,#ff1f00 246px,#ff1c00 252px,#ff1a00 258px,#ff1700 264px,#ff1500 270px,#ff1300 276px,#ff1100 282px,#ff0f00 288px,#ff0d00 294px,#ff0b00 300px,#ff0900 306px,#ff0700 312px,#ff0500 318px,#ff0400 324px,#ff0200 330px)"></div><div style="height:2px;background:linear-gradient(90deg,#00ff3b 0px,#06ff3b 6px,#18ff3b 12px,#2bff3a 18px,#3dff3a 24px,#50ff39 30px,#63ff39 36px,#77ff38 42px,#8cff38 48px,#a1ff37 54px,#b7ff36 60px,#ceff36 66px,#e6ff35 72px,#ffff34 78px,#ffe82f 84px,#ffd32a 90px,#ffc226 96px,#ffb222 102px,#ffa41f 108px,#ff981c 114px,#ff8c1a 120px,#ff8217 126px,#ff7915 132px,#ff7113 138px,#ff6911 144px,#ff6210 150px,#ff5b0e 156px,#ff550d 162px,#ff4f0b 168px,#ff4a0a 174px,#ff4509 180px,#ff4008 186px,#ff3c07 192px,#ff3806 198px,#ff3405 204px,#ff3004 210px,#ff2d03 216px,#ff2a02 222px,#ff2701 228px,#ff2401 234px,#ff2100 240px,#ff1e00 246px,#ff1b00 252px,#ff1900 258px,#ff1700 264px,#ff1400 270px,#ff1200 276px,#ff1000 282px,#ff0e00 288px,#ff0c00 294px,#ff0a00 300px,#ff0800 306px,#ff0600 312px,#ff0500 318px,#ff0300 324px,#ff0100 330px)"></div><div style="height:2px;background:linear-gradient(90deg,#00ff41 0px,#05ff40 6px,#18ff40 12px,#2aff40 18px,#3cff3f 24px,#4fff3f 30px,#63ff3f 36px,#77ff3e 42px,#8cff3e 48px,#a1ff3d 54px,#b7ff3d 60px,#cfff3d 66px,#e7ff3c 72px,#fffe3b 78px,#ffe735 84px,#ffd230 90px,#ffc12c 96px,#ffb128 102px,#ffa324 108px,#ff9721 114px,#ff8c1e 120px,#ff811c 126px,#ff7819 132px,#ff7017 138px,#ff6815 144px,#ff6113 150px,#ff5a12 156px,#ff5410 162px,#ff4f0f 168px,#ff490d 174px,#ff440c 180px,#ff400b 186px,#ff3b0a 192px,#ff3709 198px,#ff3308 204px,#ff3007 210px,#ff2c06 216px,#ff2905 222px,#ff2604 228px,#ff2303 234px,#ff2002 240px,#ff1d02 246px,#ff1b01 252px,#ff1800 258px,#ff1600 264px,#ff1400 270px,#ff1200 276px,#ff0f00 282px,#ff0d00 288px,#ff0b00 294px,#ff0a00 300px,#ff0800 306px,#ff0600 312px,#ff0400 318px,#ff0200 324px,#ff0100 330px)"></div><div style="height:2px;background:linear-gradient(90deg,#00ff46 0px,#04ff46 6px,#17ff46 12px,#29ff46 18px,#3cff45 24px,#4fff45 30px,#63ff45 36px,#77ff45 42px,#8cff44 48px,#a1ff44 54px,#b8ff44 60px,#cfff43 66px,#e7ff43 72px,#fffe42 78px,#ffe63c 84px,#ffd236 90px,#ffc031 96px,#ffb02d 102px,#ffa229 108px,#ff9626 114px,#ff8b23 120px,#ff8120 126px,#ff771d 132px,#ff6f1b 138px,#ff6719 144px,#ff6017 150px,#ff5a15 156px,#ff5413 162px,#ff4e12 168px,#ff4910 174px,#ff440f 180px,#ff3f0e 186px,#ff3b0c 192px,#ff370b 198px,#ff330a 204px,#ff2f09 210px,#ff2c08 216px,#ff2807 222px,#ff2506 228px,#ff2206 234px,#ff2005 240px,#ff1d04 246px,#ff1a03 252px,#ff1803 258px,#ff1502 264px,#ff1301 270px,#ff1101 276px,#ff0f00 282px,#ff0d00 288px,#ff0b00 294px,#ff0900 300px,#ff0700 306px,#ff0500 312px,#ff0400 318px,#ff0200 324px,#ff0000 330px)"></div><div style="height:2px;background:linear-gradient(90deg,#00ff4c 0px,#03ff4c 6px,#16ff4b 12px,#29ff4b 18px,#3bff4b 24px,#4fff4b 30px,#62ff4b 36px,#77ff4b 42px,#8cff4b 48px,#a1ff4b 54px,#b8ff4a 60px,#cfff4a 66px,#e8ff4a 72px,#fffd49 78px,#ffe542 84px,#ffd13c 90px,#ffbf37 96px,#ffaf32 102px,#ffa12e 108px,#ff952a 114px,#ff8a27 120px,#ff8024 126px,#ff7721 132px,#ff6e1f 138px,#ff661d 144px,#ff5f1a 150px,#ff5918 156px,#ff5317 162px,#ff4d15 168px,#ff4813 174px,#ff4312 180px,#ff3e11 186px,#ff3a0f 192px,#ff360e 198px,#ff320d 204px,#ff2f0c 210px,#ff2b0b 216px,#ff280a 222px,#ff2509 228px,#ff2208 234px,#ff1f07 240px,#ff1c06 246px,#ff1a06 252px,#ff1705 258px,#ff1504 264px,#ff1303 270px,#ff1003 276px,#ff0e02 282px,#ff0c02 288px,#ff0a01 294px,#ff0800 300px,#ff0700 306px,#ff0500 312px,#ff0300 318px,#ff0100 324px,#ff0000 330px)"></div><div style="height:2px;background:linear-gradient(90deg,#00ff51 0px,#02ff51 6px,#15ff51 12px,#28ff51 18px,#3bff51 24px,#4eff51 30px,#62ff51 36px,#76ff51 42px,#8cff51 48px,#a1ff51 54px,#b8ff51 60px,#d0ff51 66px,#e8ff51 72px,#fffc50 78px,#ffe449 84px,#ffd042 90px,#ffbe3c 96px,#ffae37 102px,#ffa133 108px,#ff942f 114px,#ff892b 120px,#ff7f28 126px,#ff7625 132px,#ff6d23 138px,#ff6620 144px,#ff5f1e 150px,#ff581c 156px,#ff521a 162px,#ff4c18 168px,#ff4717 174px,#ff4215 180px,#ff3e13 186px,#ff3912 192px,#ff3511 198px,#ff3110 204px,#ff2e0e 210px,#ff2a0d 216px,#ff270c 222px,#ff240b 228px,#ff210a 234px,#ff1e0a 240px,#ff1c09 246px,#ff1908 252px,#ff1707 258px,#ff1406 264px,#ff1206 270px,#ff1005 276px,#ff0e04 282px,#ff0c04 288px,#ff0a03 294px,#ff0802 300px,#ff0602 306px,#ff0401 312px,#ff0301 318px,#ff0100 324px,#ff0000 330px)"></div><div style="height:2px;background:linear-gradient(90deg,#00ff57 0px,#01ff57 6px,#14ff57 12px,#27ff57 18px,#3aff57 24px,#4eff57 30px,#62ff57 36px,#76ff58 42px,#8bff58 48px,#a2ff58 54px,#b8ff58 60px,#d0ff58 66px,#e9ff58 72px,#fffb57 78px,#ffe34f 84px,#ffcf48 90px,#ffbd42 96px,#ffae3d 102px,#ffa038 108px,#ff9334 114px,#ff8830 120px,#ff7e2c 126px,#ff7529 132px,#ff6d27 138px,#ff6524 144px,#ff5e22 150px,#ff571f 156px,#ff511d 162px,#ff4c1b 168px,#ff461a 174px,#ff4218 180px,#ff3d16 186px,#ff3915 192px,#ff3514 198px,#ff3112 204px,#ff2d11 210px,#ff2a10 216px,#ff270f 222px,#ff230e 228px,#ff210d 234px,#ff1e0c 240px,#ff1b0b 246px,#ff190a 252px,#ff1609 258px,#ff1408 264px,#ff1108 270px,#ff0f07 276px,#ff0d06 282px,#ff0b06 288px,#ff0905 294px,#ff0704 300px,#ff0604 306px,#ff0403 312px,#ff0203 318px,#ff0002 324px,#ff0001 330px)"></div><div style="height:2px;background:linear-gradient(90deg,#00ff5c 0px,#00ff5d 6px,#13ff5d 12px,#26ff5d 18px,#39ff5d 24px,#4dff5e 30px,#61ff5e 36px,#76ff5e 42px,#8bff5e 48px,#a2ff5f 54px,#b9ff5f 60px,#d1ff5f 66px,#eaff60 72px,#fffa5e 78px,#ffe355 84px,#ffce4e 90px,#ffbc48 96px,#ffad42 102px,#ff9f3d 108px,#ff9238 114px,#ff8734 120px,#ff7d31 126px,#ff742d 132px,#ff6c2a 138px,#ff6428 144px,#ff5d25 150px,#ff5623 156px,#ff5021 162px,#ff4b1f 168px,#ff461d 174px,#ff411b 180px,#ff3c19 186px,#ff3818 192px,#ff3416 198px,#ff3015 204px,#ff2d14 210px,#ff2912 216px,#ff2611 222px,#ff2310 228px,#ff200f 234px,#ff1d0e 240px,#ff1a0d 246px,#ff180c 252px,#ff150b 258px,#ff130b 264px,#ff110a 270px,#ff0f09 276px,#ff0d08 282px,#ff0b08 288px,#ff0907 294px,#ff0706 300px,#ff0506 306px,#ff0305 312px,#ff0104 318px,#ff0004 324px,#ff0003 330px)"></div><div style="height:2px;background:linear-gradient(90deg,#00ff62 0px,#00ff62 6px,#12ff63 12px,#26ff63 18px,#39ff63 24px,#4dff64 30px,#61ff64 36px,#76ff65 42px,#8bff65 48px,#a2ff65 54px,#b9ff66 60px,#d1ff66 66px,#eaff67 72px,#fff965 78px,#ffe25c 84px,#ffcd54 90px,#ffbb4d 96px,#ffac47 102px,#ff9e42 108px,#ff913d 114px,#ff8639 120px,#ff7c35 126px,#ff7331 132px,#ff6b2e 138px,#ff632b 144px,#ff5c29 150px,#ff5626 156px,#ff5024 162px,#ff4a22 168px,#ff4520 174px,#ff401e 180px,#ff3c1c 186px,#ff371b 192px,#ff3319 198px,#ff2f18 204px,#ff2c16 210px,#ff2815 216px,#ff2514 222px,#ff2212 228px,#ff1f11 234px,#ff1c10 240px,#ff1a0f 246px,#ff170e 252px,#ff150d 258px,#ff130d 264px,#ff100c 270px,#ff0e0b 276px,#ff0c0a 282px,#ff0a09 288px,#ff0809 294px,#ff0608 300px,#ff0407 306px,#ff0307 312px,#ff0106 318px,#ff0006 324px,#ff0005 330px)"></div><div style="height:2px;background:linear-gradient(90deg,#00ff68 0px,#00ff68 6px,#12ff69 12px,#25ff69 18px,#38ff6a 24px,#4cff6a 30px,#60ff6b 36px,#75ff6b 42px,#8bff6c 48px,#a2ff6c 54px,#b9ff6d 60px,#d2ff6e 66px,#ebff6e 72px,#fff96c 78px,#ffe162 84px,#ffcc5a 90px,#ffba53 96px,#ffab4c 102px,#ff9d47 108px,#ff9142 114px,#ff853d 120px,#ff7b39 126px,#ff7236 132px,#ff6a32 138px,#ff622f 144px,#ff5b2c 150px,#ff552a 156px,#ff4f27 162px,#ff4925 168px,#ff4423 174px,#ff3f21 180px,#ff3b1f 186px,#ff371d 192px,#ff331c 198px,#ff2f1a 204px,#ff2b19 210px,#ff2817 216px,#ff2516 222px,#ff2215 228px,#ff1f14 234px,#ff1c13 240px,#ff1912 246px,#ff1711 252px,#ff1410 258px,#ff120f 264px,#ff100e 270px,#ff0e0d 276px,#ff0c0c 282px,#ff0a0b 288px,#ff080b 294px,#ff060a 300px,#ff0409 306px,#ff0209 312px,#ff0008 318px,#ff0007 324px,#ff0007 330px)"></div><div style="height:2px;background:linear-gradient(90deg,#00ff6e 0px,#00ff6e 6px,#11ff6f 12px,#24ff6f 18px,#38ff70 24px,#4cff71 30px,#60ff71 36px,#75ff72 42px,#8bff73 48px,#a2ff73 54px,#baff74 60px,#d2ff75 66px,#ecff76 72px,#fff873 78px,#ffe069 84px,#ffcb60 90px,#ffba59 96px,#ffaa52 102px,#ff9c4c 108px,#ff9047 114px,#ff8542 120px,#ff7b3d 126px,#ff713a 132px,#ff6936 138px,#ff6233 144px,#ff5b30 150px,#ff542d 156px,#ff4e2a 162px,#ff4928 168px,#ff4326 174px,#ff3f24 180px,#ff3a22 186px,#ff3620 192px,#ff321e 198px,#ff2e1d 204px,#ff2a1b 210px,#ff271a 216px,#ff2418 222px,#ff2117 228px,#ff1e16 234px,#ff1b15 240px,#ff1914 246px,#ff1613 252px,#ff1412 258px,#ff1111 264px,#ff0f10 270px,#ff0d0f 276px,#ff0b0e 282px,#ff090d 288px,#ff070c 294px,#ff050c 300px,#ff030b 306px,#ff010a 312px,#ff000a 318px,#ff0009 324px,#ff0008 330px)"></div><div style="height:2px;background:linear-gradient(90deg,#00ff73 0px,#00ff74 6px,#10ff75 12px,#23ff76 18px,#37ff76 24px,#4bff77 30px,#60ff78 36px,#75ff79 42px,#8bff7a 48px,#a2ff7a 54px,#baff7b 60px,#d3ff7c 66px,#ecff7d 72px,#fff77a 78px,#ffdf70 84px,#ffca66 90px,#ffb95e 96px,#ffa957 102px,#ff9b51 108px,#ff8f4b 114px,#ff8446 120px,#ff7a42 126px,#ff713e 132px,#ff683a 138px,#ff6136 144px,#ff5a33 150px,#ff5330 156px,#ff4d2e 162px,#ff482b 168px,#ff4329 174px,#ff3e27 180px,#ff3925 186px,#ff3523 192px,#ff3121 198px,#ff2d1f 204px,#ff2a1e 210px,#ff261c 216px,#ff231b 222px,#ff201a 228px,#ff1d18 234px,#ff1b17 240px,#ff1816 246px,#ff1515 252px,#ff1314 258px,#ff1113 264px,#ff0f12 270px,#ff0c11 276px,#ff0a10 282px,#ff080f 288px,#ff060e 294px,#ff050e 300px,#ff030d 306px,#ff010c 312px,#ff000b 318px,#ff000b 324px,#ff000a 330px)"></div><div style="height:2px;background:linear-gradient(90deg,#00ff79 0px,#00ff7a 6px,#0fff7b 12px,#22ff7c 18px,#36ff7d 24px,#4aff7e 30px,#5fff7f 36px,#75ff7f 42px,#8bff81 48px,#a2ff82 54px,#baff83 60px,#d3ff84 66px,#edff85 72px,#fff682 78px,#ffde76 84px,#ffca6c 90px,#ffb864 96px,#ffa85c 102px,#ff9a56 108px,#ff8e50 114px,#ff834b 120px,#ff7946 126px,#ff7042 132px,#ff673e 138px,#ff603a 144px,#ff5937 150px,#ff5234 156px,#ff4d31 162px,#ff472e 168px,#ff422c 174px,#ff3d2a 180px,#ff3928 186px,#ff3426 192px,#ff3024 198px,#ff2d22 204px,#ff2920 210px,#ff261f 216px,#ff231d 222px,#ff201c 228px,#ff1d1b 234px,#ff1a19 240px,#ff1718 246px,#ff1517 252px,#ff1216 258px,#ff1015 264px,#ff0e14 270px,#ff0c13 276px,#ff0a12 282px,#ff0811 288px,#ff0610 294px,#ff040f 300px,#ff020f 306px,#ff000e 312px,#ff000d 318px,#ff000c 324px,#ff000c 330px)"></div><div style="height:2px;background:linear-gradient(90deg,#00ff7f 0px,#00ff80 6px,#0eff81 12px,#22ff82 18px,#36ff83 24px,#4aff84 30px,#5fff85 36px,#75ff86 42px,#8bff88 48px,#a2ff89 54px,#baff8a 60px,#d4ff8c 66px,#eeff8d 72px,#fff589 78px,#ffdd7d 84px,#ffc973 90px,#ffb76a 96px,#ffa762 102px,#ff995b 108px,#ff8d55 114px,#ff824f 120px,#ff784a 126px,#ff6f46 132px,#ff6742 138px,#ff5f3e 144px,#ff583a 150px,#ff5237 156px,#ff4c34 162px,#ff4632 168px,#ff412f 174px,#ff3c2d 180px,#ff382a 186px,#ff3428 192px,#ff3026 198px,#ff2c25 204px,#ff2823 210px,#ff2521 216px,#ff2220 222px,#ff1f1e 228px,#ff1c1d 234px,#ff191c 240px,#ff171a 246px,#ff1419 252px,#ff1218 258px,#ff1017 264px,#ff0d16 270px,#ff0b15 276px,#ff0914 282px,#ff0713 288px,#ff0512 294px,#ff0311 300px,#ff0210 306px,#ff0010 312px,#ff000f 318px,#ff000e 324px,#ff000d 330px)"></div><div style="height:2px;background:linear-gradient(90deg,#00ff85 0px,#00ff86 6px,#0dff87 12px,#21ff89 18px,#35ff8a 24px,#49ff8b 30px,#5eff8c 36px,#74ff8d 42px,#8bff8f 48px,#a2ff90 54px,#bbff92 60px,#d4ff93 66px,#efff95 72px,#fff490 78px,#ffdc84 84px,#ffc879 90px,#ffb66f 96px,#ffa667 102px,#ff9860 108px,#ff8c5a 114px,#ff8154 120px,#ff774f 126px,#ff6e4a 132px,#ff6646 138px,#ff5e42 144px,#ff573e 150px,#ff513b 156px,#ff4b38 162px,#ff4535 168px,#ff4032 174px,#ff3c30 180px,#ff372d 186px,#ff332b 192px,#ff2f29 198px,#ff2b27 204px,#ff2825 210px,#ff2424 216px,#ff2122 222px,#ff1e21 228px,#ff1b1f 234px,#ff191e 240px,#ff161c 246px,#ff141b 252px,#ff111a 258px,#ff0f19 264px,#ff0d18 270px,#ff0b17 276px,#ff0916 282px,#ff0715 288px,#ff0514 294px,#ff0313 300px,#ff0112 306px,#ff0011 312px,#ff0010 318px,#ff0010 324px,#ff000f 330px)"></div><div style="height:2px;background:linear-gradient(90deg,#00ff8b 0px,#00ff8d 6px,#0cff8e 12px,#20ff8f 18px,#34ff90 24px,#49ff92 30px,#5eff93 36px,#74ff94 42px,#8bff96 48px,#a2ff98 54px,#bbff99 60px,#d4ff9b 66px,#efff9d 72px,#fff398 78px,#ffdb8a 84px,#ffc77f 90px,#ffb575 96px,#ffa56d 102px,#ff9765 108px,#ff8b5e 114px,#ff8058 120px,#ff7653 126px,#ff6d4e 132px,#ff6549 138px,#ff5d45 144px,#ff5642 150px,#ff503e 156px,#ff4a3b 162px,#ff4538 168px,#ff4035 174px,#ff3b33 180px,#ff3630 186px,#ff322e 192px,#ff2e2c 198px,#ff2b2a 204px,#ff2728 210px,#ff2426 216px,#ff2125 222px,#ff1e23 228px,#ff1b21 234px,#ff1820 240px,#ff151f 246px,#ff131d 252px,#ff111c 258px,#ff0e1b 264px,#ff0c1a 270px,#ff0a19 276px,#ff0818 282px,#ff0617 288px,#ff0416 294px,#ff0215 300px,#ff0014 306px,#ff0013 312px,#ff0012 318px,#ff0011 324px,#ff0011 330px)"></div><div style="height:2px;background:linear-gradient(90deg,#00ff92 0px,#00ff93 6px,#0bff94 12px,#1fff96 18px,#33ff97 24px,#48ff98 30px,#5eff9a 36px,#74ff9c 42px,#8bff9d 48px,#a2ff9f 54px,#bbffa1 60px,#d5ffa3 66px,#f0ffa5 72px,#fff29f 78px,#ffda91 84px,#ffc685 90px,#ffb47b 96px,#ffa472 102px,#ff966a 108px,#ff8a63 114px,#ff7f5d 120px,#ff7557 126px,#ff6c52 132px,#ff644d 138px,#ff5c49 144px,#ff5645 150px,#ff4f42 156px,#ff493e 162px,#ff443b 168px,#ff3f38 174px,#ff3a36 180px,#ff3633 186px,#ff3131 192px,#ff2e2f 198px,#ff2a2c 204px,#ff262a 210px,#ff2329 216px,#ff2027 222px,#ff1d25 228px,#ff1a24 234px,#ff1722 240px,#ff1521 246px,#ff121f 252px,#ff101e 258px,#ff0e1d 264px,#ff0c1c 270px,#ff091b 276px,#ff071a 282px,#ff0518 288px,#ff0417 294px,#ff0217 300px,#ff0016 306px,#ff0015 312px,#ff0014 318px,#ff0013 324px,#ff0012 330px)"></div><div style="height:2px;background:linear-gradient(90deg,#00ff98 0px,#00ff99 6px,#0aff9b 12px,#1eff9c 18px,#33ff9e 24px,#48ff9f 30px,#5dffa1 36px,#73ffa3 42px,#8bffa5 48px,#a3ffa7 54px,#bbffa9 60px,#d6ffab 66px,#f1ffad 72px,#fff2a6 78px,#ffd998 84px,#ffc58c 90px,#ffb381 96px,#ffa378 102px,#ff956f 108px,#ff8968 114px,#ff7e61 120px,#ff745b 126px,#ff6b56 132px,#ff6351 138px,#ff5c4d 144px,#ff5549 150px,#ff4e45 156px,#ff4942 162px,#ff433e 168px,#ff3e3b 174px,#ff3939 180px,#ff3536 186px,#ff3133 192px,#ff2d31 198px,#ff292f 204px,#ff262d 210px,#ff222b 216px,#ff1f29 222px,#ff1c28 228px,#ff1926 234px,#ff1724 240px,#ff1423 246px,#ff1222 252px,#ff0f20 258px,#ff0d1f 264px,#ff0b1e 270px,#ff091d 276px,#ff071b 282px,#ff051a 288px,#ff0319 294px,#ff0118 300px,#ff0017 306px,#ff0016 312px,#ff0016 318px,#ff0015 324px,#ff0014 330px)"></div><div style="height:2px;background:linear-gradient(90deg,#00ff9e 0px,#00ffa0 6px,#09ffa1 12px,#1dffa3 18px,#32ffa5 24px,#47ffa6 30px,#5dffa8 36px,#73ffaa 42px,#8affac 48px,#a3ffaf 54px,#bcffb1 60px,#d6ffb3 66px,#f1ffb6 72px,#fff1ae 78px,#ffd89f 84px,#ffc492 90px,#ffb287 96px,#ffa27d 102px,#ff9474 108px,#ff886d 114px,#ff7d66 120px,#ff7360 126px,#ff6a5a 132px,#ff6255 138px,#ff5b51 144px,#ff544c 150px,#ff4e48 156px,#ff4845 162px,#ff4241 168px,#ff3d3e 174px,#ff393b 180px,#ff3439 186px,#ff3036 192px,#ff2c34 198px,#ff2832 204px,#ff2530 210px,#ff222e 216px,#ff1f2c 222px,#ff1c2a 228px,#ff1928 234px,#ff1627 240px,#ff1425 246px,#ff1124 252px,#ff0f22 258px,#ff0d21 264px,#ff0a20 270px,#ff081e 276px,#ff061d 282px,#ff041c 288px,#ff021b 294px,#ff001a 300px,#ff0019 306px,#ff0018 312px,#ff0017 318px,#ff0016 324px,#ff0016 330px)"></div><div style="height:2px;background:linear-gradient(90deg,#00ffa4 0px,#00ffa6 6px,#08ffa8 12px,#1cffaa 18px,#31ffac 24px,#46ffae 30px,#5cffb0 36px,#73ffb2 42px,#8affb4 48px,#a3ffb6 54px,#bcffb9 60px,#d7ffbb 66px,#f2ffbe 72px,#fff0b5 78px,#ffd7a6 84px,#ffc398 90px,#ffb18d 96px,#ffa183 102px,#ff937a 108px,#ff8772 114px,#ff7c6b 120px,#ff7264 126px,#ff695e 132px,#ff6159 138px,#ff5a54 144px,#ff5350 150px,#ff4d4c 156px,#ff4748 162px,#ff4145 168px,#ff3c41 174px,#ff383e 180px,#ff333c 186px,#ff2f39 192px,#ff2b37 198px,#ff2834 204px,#ff2432 210px,#ff2130 216px,#ff1e2e 222px,#ff1b2c 228px,#ff182b 234px,#ff1529 240px,#ff1327 246px,#ff1026 252px,#ff0e24 258px,#ff0c23 264px,#ff0a22 270px,#ff0820 276px,#ff061f 282px,#ff041e 288px,#ff021d 294px,#ff001c 300px,#ff001b 306px,#ff001a 312px,#ff0019 318px,#ff0018 324px,#ff0017 330px)"></div><div style="height:2px;background:linear-gradient(90deg,#00ffab 0px,#00ffad 6px,#06ffaf 12px,#1bffb1 18px,#30ffb3 24px,#46ffb5 30px,#5cffb7 36px,#73ffb9 42px,#8affbc 48px,#a3ffbe 54px,#bcffc1 60px,#d7ffc4 66px,#f3ffc7 72px,#ffefbd 78px,#ffd6ad 84px,#ffc29f 90px,#ffb093 96px,#ffa088 102px,#ff927f 108px,#ff8677 114px,#ff7b6f 120px,#ff7169 126px,#ff6963 132px,#ff605d 138px,#ff5958 144px,#ff5254 150px,#ff4c4f 156px,#ff464b 162px,#ff4148 168px,#ff3c45 174px,#ff3741 180px,#ff333f 186px,#ff2e3c 192px,#ff2b39 198px,#ff2737 204px,#ff2435 210px,#ff2033 216px,#ff1d30 222px,#ff1a2f 228px,#ff172d 234px,#ff152b 240px,#ff1229 246px,#ff1028 252px,#ff0e26 258px,#ff0b25 264px,#ff0924 270px,#ff0722 276px,#ff0521 282px,#ff0320 288px,#ff011f 294px,#ff001e 300px,#ff001d 306px,#ff001c 312px,#ff001b 318px,#ff001a 324px,#ff0019 330px)"></div><div style="height:2px;background:linear-gradient(90deg,#00ffb1 0px,#00ffb3 6px,#05ffb5 12px,#1bffb7 18px,#30ffba 24px,#45ffbc 30px,#5bffbe 36px,#72ffc1 42px,#8affc4 48px,#a3ffc6 54px,#bdffc9 60px,#d8ffcc 66px,#f4ffd0 72px,#ffeec5 78px,#ffd6b4 84px,#ffc1a5 90px,#ffaf99 96px,#ff9f8e 102px,#ff9284 108px,#ff857b 114px,#ff7a74 120px,#ff716d 126px,#ff6867 132px,#ff5f61 138px,#ff585c 144px,#ff5157 150px,#ff4b53 156px,#ff454f 162px,#ff404b 168px,#ff3b48 174px,#ff3644 180px,#ff3241 186px,#ff2e3f 192px,#ff2a3c 198px,#ff263a 204px,#ff2337 210px,#ff2035 216px,#ff1d33 222px,#ff1a31 228px,#ff172f 234px,#ff142d 240px,#ff122c 246px,#ff0f2a 252px,#ff0d28 258px,#ff0b27 264px,#ff0826 270px,#ff0624 276px,#ff0423 282px,#ff0222 288px,#ff0021 294px,#ff001f 300px,#ff001e 306px,#ff001d 312px,#ff001c 318px,#ff001b 324px,#ff001a 330px)"></div><div style="height:2px;background:linear-gradient(90deg,#00ffb8 0px,#00ffba 6px,#04ffbc 12px,#1affbf 18px,#2fffc1 24px,#45ffc3 30px,#5bffc6 36px,#72ffc9 42px,#8affcc 48px,#a3ffcf 54px,#bdffd2 60px,#d8ffd5 66px,#f5ffd9 72px,#ffedcc 78px,#ffd5bb 84px,#ffc0ac 90px,#ffae9f 96px,#ff9e93 102px,#ff9189 108px,#ff8480 114px,#ff7978 120px,#ff7071 126px,#ff676b 132px,#ff5f65 138px,#ff5760 144px,#ff505b 150px,#ff4a56 156px,#ff4452 162px,#ff3f4e 168px,#ff3a4b 174px,#ff3547 180px,#ff3144 186px,#ff2d41 192px,#ff293f 198px,#ff263c 204px,#ff223a 210px,#ff1f37 216px,#ff1c35 222px,#ff1933 228px,#ff1631 234px,#ff142f 240px,#ff112e 246px,#ff0f2c 252px,#ff0c2b 258px,#ff0a29 264px,#ff0828 270px,#ff0626 276px,#ff0425 282px,#ff0224 288px,#ff0022 294px,#ff0021 300px,#ff0020 306px,#ff001f 312px,#ff001e 318px,#ff001d 324px,#ff001c 330px)"></div><div style="height:2px;background:linear-gradient(90deg,#00ffbf 0px,#00ffc1 6px,#03ffc3 12px,#19ffc6 18px,#2effc8 24px,#44ffcb 30px,#5bffce 36px,#72ffd1 42px,#8affd4 48px,#a3ffd7 54px,#bdffda 60px,#d9ffde 66px,#f6ffe2 72px,#ffecd4 78px,#ffd4c2 84px,#ffbfb2 90px,#ffada5 96px,#ff9d99 102px,#ff908e 108px,#ff8385 114px,#ff787d 120px,#ff6f76 126px,#ff666f 132px,#ff5e69 138px,#ff5663 144px,#ff505e 150px,#ff495a 156px,#ff4455 162px,#ff3e52 168px,#ff394e 174px,#ff354a 180px,#ff3047 186px,#ff2c44 192px,#ff2841 198px,#ff253f 204px,#ff213c 210px,#ff1e3a 216px,#ff1b38 222px,#ff1836 228px,#ff1534 234px,#ff1332 240px,#ff1030 246px,#ff0e2e 252px,#ff0c2d 258px,#ff092b 264px,#ff072a 270px,#ff0528 276px,#ff0327 282px,#ff0125 288px,#ff0024 294px,#ff0023 300px,#ff0022 306px,#ff0021 312px,#ff0020 318px,#ff001f 324px,#ff001e 330px)"></div><div style="height:2px;background:linear-gradient(90deg,#00ffc5 0px,#00ffc8 6px,#02ffca 12px,#18ffcd 18px,#2dffd0 24px,#43ffd2 30px,#5affd5 36px,#72ffd9 42px,#8affdc 48px,#a3ffdf 54px,#beffe3 60px,#d9ffe7 66px,#f6ffeb 72px,#ffebdc 78px,#ffd2c9 84px,#ffbeb9 90px,#ffacab 96px,#ff9c9e 102px,#ff8f94 108px,#ff828a 114px,#ff7782 120px,#ff6e7a 126px,#ff6573 132px,#ff5d6d 138px,#ff5567 144px,#ff4f62 150px,#ff485d 156px,#ff4359 162px,#ff3d55 168px,#ff3851 174px,#ff344d 180px,#ff304a 186px,#ff2b47 192px,#ff2844 198px,#ff2441 204px,#ff213f 210px,#ff1d3c 216px,#ff1a3a 222px,#ff1838 228px,#ff1536 234px,#ff1234 240px,#ff1032 246px,#ff0d30 252px,#ff0b2f 258px,#ff092d 264px,#ff072c 270px,#ff052a 276px,#ff0229 282px,#ff0027 288px,#ff0026 294px,#ff0025 300px,#ff0024 306px,#ff0022 312px,#ff0021 318px,#ff0020 324px,#ff001f 330px)"></div><div style="height:2px;background:linear-gradient(90deg,#00ffcc 0px,#00ffcf 6px,#00ffd1 12px,#17ffd4 18px,#2dffd7 24px,#43ffda 30px,#5affdd 36px,#71ffe1 42px,#8affe4 48px,#a3ffe8 54px,#beffec 60px,#dafff0 66px,#f7fff4 72px,#ffeae4 78px,#ffd1d0 84px,#ffbdbf 90px,#ffabb1 96px,#ff9ba4 102px,#ff8d99 108px,#ff818f 114px,#ff7686 120px,#ff6d7f 126px,#ff6477 132px,#ff5c71 138px,#ff556b 144px,#ff4e66 150px,#ff4861 156px,#ff425c 162px,#ff3d58 168px,#ff3854 174px,#ff3350 180px,#ff2f4d 186px,#ff2b4a 192px,#ff2747 198px,#ff2344 204px,#ff2041 210px,#ff1d3f 216px,#ff1a3d 222px,#ff173a 228px,#ff1438 234px,#ff1236 240px,#ff0f34 246px,#ff0d32 252px,#ff0a31 258px,#ff082f 264px,#ff062d 270px,#ff042c 276px,#ff022b 282px,#ff0029 288px,#ff0028 294px,#ff0027 300px,#ff0025 306px,#ff0024 312px,#ff0023 318px,#ff0022 324px,#ff0021 330px)"></div><div style="height:2px;background:linear-gradient(90deg,#00ffd3 0px,#00ffd6 6px,#00ffd9 12px,#16ffdc 18px,#2cffdf 24px,#42ffe2 30px,#59ffe5 36px,#71ffe9 42px,#8affed 48px,#a3fff0 54px,#befff5 60px,#dbfff9 66px,#f8fffe 72px,#ffe9ec 78px,#ffd0d7 84px,#ffbcc6 90px,#ffaab7 96px,#ff9aaa 102px,#ff8c9e 108px,#ff8094 114px,#ff758b 120px,#ff6c83 126px,#ff637c 132px,#ff5b75 138px,#ff546f 144px,#ff4d69 150px,#ff4764 156px,#ff4160 162px,#ff3c5b 168px,#ff3757 174px,#ff3253 180px,#ff2e50 186px,#ff2a4d 192px,#ff264a 198px,#ff2347 204px,#ff1f44 210px,#ff1c41 216px,#ff193f 222px,#ff163d 228px,#ff133a 234px,#ff1138 240px,#ff0e36 246px,#ff0c35 252px,#ff0a33 258px,#ff0731 264px,#ff052f 270px,#ff032e 276px,#ff012c 282px,#ff002b 288px,#ff002a 294px,#ff0028 300px,#ff0027 306px,#ff0026 312px,#ff0025 318px,#ff0024 324px,#ff0022 330px)"></div><div style="height:2px;background:linear-gradient(90deg,#00ffda 0px,#00ffdd 6px,#00ffe0 12px,#15ffe3 18px,#2bffe6 24px,#41ffea 30px,#59ffed 36px,#71fff1 42px,#8afff5 48px,#a4fff9 54px,#bffffe 60px,#d8fcff 66px,#f1f7ff 72px,#ffe8f4 78px,#ffcfdf 84px,#ffbbcd 90px,#ffa9bd 96px,#ff99b0 102px,#ff8ba4 108px,#ff7f99 114px,#ff7490 120px,#ff6b87 126px,#ff6280 132px,#ff5a79 138px,#ff5373 144px,#ff4c6d 150px,#ff4668 156px,#ff4063 162px,#ff3b5e 168px,#ff365a 174px,#ff3156 180px,#ff2d53 186px,#ff294f 192px,#ff254c 198px,#ff2249 204px,#ff1f46 210px,#ff1b44 216px,#ff1841 222px,#ff153f 228px,#ff133d 234px,#ff103b 240px,#ff0e39 246px,#ff0b37 252px,#ff0935 258px,#ff0733 264px,#ff0531 270px,#ff0330 276px,#ff002e 282px,#ff002d 288px,#ff002b 294px,#ff002a 300px,#ff0029 306px,#ff0028 312px,#ff0026 318px,#ff0025 324px,#ff0024 330px)"></div><div style="height:2px;background:linear-gradient(90deg,#00ffe1 0px,#00ffe4 6px,#00ffe7 12px,#14ffeb 18px,#2affee 24px,#41fff2 30px,#58fff6 36px,#70fffa 42px,#89fffe 48px,#a2fcff 54px,#b9f7ff 60px,#d1f3ff 66px,#e9eeff 72px,#ffe7fc 78px,#ffcee6 84px,#ffbad3 90px,#ffa8c3 96px,#ff98b5 102px,#ff8aa9 108px,#ff7e9e 114px,#ff7395 120px,#ff6a8c 126px,#ff6184 132px,#ff597d 138px,#ff5277 144px,#ff4b71 150px,#ff456b 156px,#ff3f66 162px,#ff3a62 168px,#ff355d 174px,#ff3159 180px,#ff2c56 186px,#ff2852 192px,#ff254f 198px,#ff214c 204px,#ff1e49 210px,#ff1b46 216px,#ff1844 222px,#ff1541 228px,#ff123f 234px,#ff0f3d 240px,#ff0d3b 246px,#ff0b39 252px,#ff0837 258px,#ff0635 264px,#ff0433 270px,#ff0232 276px,#ff0030 282px,#ff002f 288px,#ff002d 294px,#ff002c 300px,#ff002b 306px,#ff0029 312px,#ff0028 318px,#ff0027 324px,#ff0026 330px)"></div><div style="height:2px;background:linear-gradient(90deg,#00ffe8 0px,#00ffeb 6px,#00ffef 12px,#13fff2 18px,#29fff6 24px,#40fffa 30px,#58fffe 36px,#6ffcff 42px,#85f8ff 48px,#9cf3ff 54px,#b3efff 60px,#cbeaff 66px,#e2e6ff 72px,#fae1ff 78px,#ffcdee 84px,#ffb8da 90px,#ffa7ca 96px,#ff97bb 102px,#ff89af 108px,#ff7da3 114px,#ff7299 120px,#ff6990 126px,#ff6088 132px,#ff5881 138px,#ff517b 144px,#ff4a74 150px,#ff446f 156px,#ff3e6a 162px,#ff3965 168px,#ff3461 174px,#ff305c 180px,#ff2c59 186px,#ff2855 192px,#ff2452 198px,#ff204f 204px,#ff1d4c 210px,#ff1a49 216px,#ff1746 222px,#ff1444 228px,#ff1141 234px,#ff0f3f 240px,#ff0c3d 246px,#ff0a3b 252px,#ff0839 258px,#ff0637 264px,#ff0335 270px,#ff0134 276px,#ff0032 282px,#ff0031 288px,#ff002f 294px,#ff002e 300px,#ff002c 306px,#ff002b 312px,#ff002a 318px,#ff0028 324px,#ff0027 330px)"></div><div style="height:2px;background:linear-gradient(90deg,#00ffef 0px,#00fff3 6px,#00fff6 12px,#12fffa 18px,#28fffe 24px,#3ffcff 30px,#55f8ff 36px,#6bf4ff 42px,#81efff 48px,#97ebff 54px,#aee7ff 60px,#c4e2ff 66px,#dbdeff 72px,#f2d9ff 78px,#ffccf5 84px,#ffb7e1 90px,#ffa5d0 96px,#ff96c1 102px,#ff88b4 108px,#ff7ca8 114px,#ff719e 120px,#ff6895 126px,#ff5f8d 132px,#ff5785 138px,#ff507e 144px,#ff4978 150px,#ff4372 156px,#ff3e6d 162px,#ff3868 168px,#ff3464 174px,#ff2f5f 180px,#ff2b5c 186px,#ff2758 192px,#ff2354 198px,#ff2051 204px,#ff1c4e 210px,#ff194b 216px,#ff1649 222px,#ff1346 228px,#ff1144 234px,#ff0e41 240px,#ff0c3f 246px,#ff093d 252px,#ff073b 258px,#ff0539 264px,#ff0337 270px,#ff0136 276px,#ff0034 282px,#ff0032 288px,#ff0031 294px,#ff002f 300px,#ff002e 306px,#ff002d 312px,#ff002b 318px,#ff002a 324px,#ff0029 330px)"></div><div style="height:2px;background:linear-gradient(90deg,#00fff7 0px,#00fffa 6px,#00fffe 12px,#10fcff 18px,#26f8ff 24px,#3cf4ff 30px,#51f0ff 36px,#67ecff 42px,#7de8ff 48px,#92e3ff 54px,#a8dfff 60px,#bedbff 66px,#d4d6ff 72px,#ebd2ff 78px,#ffcbfc 84px,#ffb6e8 90px,#ffa4d6 96px,#ff95c7 102px,#ff87b9 108px,#ff7bae 114px,#ff70a3 120px,#ff679a 126px,#ff5e91 132px,#ff5689 138px,#ff4f82 144px,#ff487c 150px,#ff4276 156px,#ff3d71 162px,#ff386c 168px,#ff3367 174px,#ff2e63 180px,#ff2a5e 186px,#ff265b 192px,#ff2257 198px,#ff1f54 204px,#ff1c51 210px,#ff184e 216px,#ff154b 222px,#ff1348 228px,#ff1046 234px,#ff0d44 240px,#ff0b41 246px,#ff093f 252px,#ff063d 258px,#ff043b 264px,#ff0239 270px,#ff0038 276px,#ff0036 282px,#ff0034 288px,#ff0033 294px,#ff0031 300px,#ff0030 306px,#ff002e 312px,#ff002d 318px,#ff002c 324px,#ff002b 330px)"></div><div style="height:2px;background:linear-gradient(90deg,#00fffe 0px,#00fcff 6px,#00f8ff 12px,#0ff4ff 18px,#24f1ff 24px,#39edff 30px,#4ee9ff 36px,#63e4ff 42px,#79e0ff 48px,#8edcff 54px,#a3d8ff 60px,#b9d4ff 66px,#cecfff 72px,#e4cbff 78px,#fac6ff 84px,#ffb5ef 90px,#ffa3dd 96px,#ff94cd 102px,#ff86bf 108px,#ff7ab3 114px,#ff6fa8 120px,#ff669e 126px,#ff5d95 132px,#ff558d 138px,#ff4e86 144px,#ff4780 150px,#ff417a 156px,#ff3c74 162px,#ff376f 168px,#ff326a 174px,#ff2d66 180px,#ff2961 186px,#ff255e 192px,#ff225a 198px,#ff1e57 204px,#ff1b53 210px,#ff1850 216px,#ff154d 222px,#ff124b 228px,#ff0f48 234px,#ff0d46 240px,#ff0a43 246px,#ff0841 252px,#ff063f 258px,#ff033d 264px,#ff013b 270px,#ff0039 276px,#ff0038 282px,#ff0036 288px,#ff0034 294px,#ff0033 300px,#ff0031 306px,#ff0030 312px,#ff002f 318px,#ff002d 324px,#ff002c 330px)"></div><div style="height:2px;background:linear-gradient(90deg,#00f9ff 0px,#00f5ff 6px,#00f1ff 12px,#0dedff 18px,#22e9ff 24px,#37e5ff 30px,#4ce1ff 36px,#60ddff 42px,#75d9ff 48px,#89d5ff 54px,#9ed1ff 60px,#b3cdff 66px,#c8c8ff 72px,#ddc4ff 78px,#f3bfff 84px,#ffb4f6 90px,#ffa2e3 96px,#ff93d3 102px,#ff85c4 108px,#ff79b8 114px,#ff6ead 120px,#ff65a3 126px,#ff5c9a 132px,#ff5492 138px,#ff4d8a 144px,#ff4783 150px,#ff417d 156px,#ff3b77 162px,#ff3672 168px,#ff316d 174px,#ff2d69 180px,#ff2864 186px,#ff2460 192px,#ff215d 198px,#ff1d59 204px,#ff1a56 210px,#ff1753 216px,#ff1450 222px,#ff114d 228px,#ff0f4a 234px,#ff0c48 240px,#ff0a46 246px,#ff0743 252px,#ff0541 258px,#ff033f 264px,#ff013d 270px,#ff003b 276px,#ff003a 282px,#ff0038 288px,#ff0036 294px,#ff0035 300px,#ff0033 306px,#ff0032 312px,#ff0030 318px,#ff002f 324px,#ff002e 330px)"></div><div style="height:2px;background:linear-gradient(90deg,#00f1ff 0px,#00eeff 6px,#00eaff 12px,#0ce6ff 18px,#20e2ff 24px,#35dfff 30px,#49dbff 36px,#5dd7ff 42px,#71d3ff 48px,#85ceff 54px,#99caff 60px,#aec6ff 66px,#c2c2ff 72px,#d7bdff 78px,#ecb9ff 84px,#ffb3fd 90px,#ffa1e9 96px,#ff92d9 102px,#ff84ca 108px,#ff78bd 114px,#ff6db2 120px,#ff64a7 126px,#ff5b9e 132px,#ff5396 138px,#ff4c8e 144px,#ff4687 150px,#ff4081 156px,#ff3a7b 162px,#ff3575 168px,#ff3070 174px,#ff2c6c 180px,#ff2867 186px,#ff2463 192px,#ff205f 198px,#ff1d5c 204px,#ff1958 210px,#ff1655 216px,#ff1352 222px,#ff114f 228px,#ff0e4d 234px,#ff0b4a 240px,#ff0948 246px,#ff0746 252px,#ff0443 258px,#ff0241 264px,#ff003f 270px,#ff003d 276px,#ff003c 282px,#ff003a 288px,#ff0038 294px,#ff0037 300px,#ff0035 306px,#ff0033 312px,#ff0032 318px,#ff0031 324px,#ff002f 330px)"></div><div style="height:2px;background:linear-gradient(90deg,#00ebff 0px,#00e7ff 6px,#00e3ff 12px,#0ae0ff 18px,#1fdcff 24px,#33d8ff 30px,#46d4ff 36px,#5ad0ff 42px,#6dccff 48px,#81c8ff 54px,#95c4ff 60px,#a9c0ff 66px,#bdbcff 72px,#d1b7ff 78px,#e6b3ff 84px,#faaeff 90px,#ffa0f0 96px,#ff90df 102px,#ff83d0 108px,#ff77c2 114px,#ff6cb7 120px,#ff63ac 126px,#ff5aa2 132px,#ff529a 138px,#ff4b92 144px,#ff458b 150px,#ff3f84 156px,#ff397e 162px,#ff3479 168px,#ff2f74 174px,#ff2b6f 180px,#ff276a 186px,#ff2366 192px,#ff1f62 198px,#ff1c5f 204px,#ff195b 210px,#ff1658 216px,#ff1355 222px,#ff1052 228px,#ff0d4f 234px,#ff0b4c 240px,#ff084a 246px,#ff0648 252px,#ff0445 258px,#ff0143 264px,#ff0041 270px,#ff003f 276px,#ff003d 282px,#ff003c 288px,#ff003a 294px,#ff0038 300px,#ff0037 306px,#ff0035 312px,#ff0034 318px,#ff0032 324px,#ff0031 330px)"></div><div style="height:2px;background:linear-gradient(90deg,#00e4ff 0px,#00e1ff 6px,#00ddff 12px,#09d9ff 18px,#1dd6ff 24px,#30d2ff 30px,#44ceff 36px,#57caff 42px,#6ac6ff 48px,#7dc2ff 54px,#91beff 60px,#a4baff 66px,#b8b6ff 72px,#ccb1ff 78px,#dfadff 84px,#f4a9ff 90px,#ff9ff7 96px,#ff8fe5 102px,#ff82d5 108px,#ff76c8 114px,#ff6bbb 120px,#ff62b1 126px,#ff59a7 132px,#ff519e 138px,#ff4a96 144px,#ff448f 150px,#ff3e88 156px,#ff3882 162px,#ff337c 168px,#ff2e77 174px,#ff2a72 180px,#ff266d 186px,#ff2269 192px,#ff1e65 198px,#ff1b61 204px,#ff185e 210px,#ff155a 216px,#ff1257 222px,#ff0f54 228px,#ff0c51 234px,#ff0a4f 240px,#ff084c 246px,#ff054a 252px,#ff0347 258px,#ff0145 264px,#ff0043 270px,#ff0041 276px,#ff003f 282px,#ff003d 288px,#ff003c 294px,#ff003a 300px,#ff0038 306px,#ff0037 312px,#ff0035 318px,#ff0034 324px,#ff0033 330px)"></div><div style="height:2px;background:linear-gradient(90deg,#00deff 0px,#00dbff 6px,#00d7ff 12px,#08d3ff 18px,#1bd0ff 24px,#2eccff 30px,#41c8ff 36px,#54c4ff 42px,#67c0ff 48px,#7abcff 54px,#8db8ff 60px,#a0b4ff 66px,#b3b0ff 72px,#c6acff 78px,#daa8ff 84px,#eda3ff 90px,#ff9efd 96px,#ff8eeb 102px,#ff81db 108px,#ff75cd 114px,#ff6ac0 120px,#ff61b5 126px,#ff58ab 132px,#ff50a2 138px,#ff499a 144px,#ff4392 150px,#ff3d8c 156px,#ff3785 162px,#ff327f 168px,#ff2e7a 174px,#ff2975 180px,#ff2570 186px,#ff216c 192px,#ff1e68 198px,#ff1a64 204px,#ff1760 210px,#ff145d 216px,#ff115a 222px,#ff0e57 228px,#ff0c54 234px,#ff0951 240px,#ff074e 246px,#ff044c 252px,#ff024a 258px,#ff0047 264px,#ff0045 270px,#ff0043 276px,#ff0041 282px,#ff003f 288px,#ff003e 294px,#ff003c 300px,#ff003a 306px,#ff0039 312px,#ff0037 318px,#ff0036 324px,#ff0034 330px)"></div><div style="height:2px;background:linear-gradient(90deg,#00d8ff 0px,#00d5ff 6px,#00d1ff 12px,#07cdff 18px,#1acaff 24px,#2cc6ff 30px,#3fc2ff 36px,#51beff 42px,#64bbff 48px,#76b7ff 54px,#89b3ff 60px,#9bafff 66px,#aeabff 72px,#c1a6ff 78px,#d4a2ff 84px,#e79eff 90px,#fa9aff 96px,#ff8df1 102px,#ff80e1 108px,#ff74d2 114px,#ff69c5 120px,#ff60ba 126px,#ff57b0 132px,#ff4fa6 138px,#ff489e 144px,#ff4296 150px,#ff3c8f 156px,#ff3789 162px,#ff3183 168px,#ff2d7d 174px,#ff2878 180px,#ff2473 186px,#ff206f 192px,#ff1d6b 198px,#ff1967 204px,#ff1663 210px,#ff135f 216px,#ff105c 222px,#ff0e59 228px,#ff0b56 234px,#ff0953 240px,#ff0651 246px,#ff044e 252px,#ff014c 258px,#ff0049 264px,#ff0047 270px,#ff0045 276px,#ff0043 282px,#ff0041 288px,#ff003f 294px,#ff003e 300px,#ff003c 306px,#ff003a 312px,#ff0039 318px,#ff0037 324px,#ff0036 330px)"></div><div style="height:2px;background:linear-gradient(90deg,#00d3ff 0px,#00cfff 6px,#00cbff 12px,#05c8ff 18px,#18c4ff 24px,#2bc1ff 30px,#3dbdff 36px,#4fb9ff 42px,#61b5ff 48px,#73b1ff 54px,#85adff 60px,#97a9ff 66px,#a9a5ff 72px,#bca1ff 78px,#cf9dff 84px,#e199ff 90px,#f495ff 96px,#ff8cf7 102px,#ff7ee6 108px,#ff73d8 114px,#ff68ca 120px,#ff5fbf 126px,#ff56b4 132px,#ff4eab 138px,#ff47a2 144px,#ff419a 150px,#ff3b93 156px,#ff368c 162px,#ff3186 168px,#ff2c80 174px,#ff287b 180px,#ff2376 186px,#ff2072 192px,#ff1c6d 198px,#ff1969 204px,#ff1665 210px,#ff1262 216px,#ff105f 222px,#ff0d5b 228px,#ff0a58 234px,#ff0855 240px,#ff0553 246px,#ff0350 252px,#ff014e 258px,#ff004b 264px,#ff0049 270px,#ff0047 276px,#ff0045 282px,#ff0043 288px,#ff0041 294px,#ff003f 300px,#ff003e 306px,#ff003c 312px,#ff003a 318px,#ff0039 324px,#ff0037 330px)"></div><div style="height:2px;background:linear-gradient(90deg,#00cdff 0px,#00caff 6px,#00c6ff 12px,#04c3ff 18px,#17bfff 24px,#29bbff 30px,#3bb8ff 36px,#4cb4ff 42px,#5eb0ff 48px,#70acff 54px,#81a8ff 60px,#93a4ff 66px,#a5a0ff 72px,#b79cff 78px,#c998ff 84px,#dc94ff 90px,#ee90ff 96px,#ff8bfd 102px,#ff7dec 108px,#ff71dd 114px,#ff67cf 120px,#ff5ec3 126px,#ff55b9 132px,#ff4daf 138px,#ff46a6 144px,#ff409e 150px,#ff3a97 156px,#ff3590 162px,#ff3089 168px,#ff2b84 174px,#ff277e 180px,#ff2379 186px,#ff1f74 192px,#ff1b70 198px,#ff186c 204px,#ff1568 210px,#ff1264 216px,#ff0f61 222px,#ff0c5e 228px,#ff0a5b 234px,#ff0758 240px,#ff0555 246px,#ff0252 252px,#ff0050 258px,#ff004d 264px,#ff004b 270px,#ff0049 276px,#ff0047 282px,#ff0045 288px,#ff0043 294px,#ff0041 300px,#ff003f 306px,#ff003e 312px,#ff003c 318px,#ff003b 324px,#ff0039 330px)"></div><div style="height:2px;background:linear-gradient(90deg,#00c8ff 0px,#00c4ff 6px,#00c1ff 12px,#03bdff 18px,#15baff 24px,#27b6ff 30px,#39b3ff 36px,#4aafff 42px,#5babff 48px,#6da7ff 54px,#7ea3ff 60px,#8fa0ff 66px,#a19cff 72px,#b398ff 78px,#c494ff 84px,#d690ff 90px,#e88bff 96px,#fb87ff 102px,#ff7cf2 108px,#ff70e2 114px,#ff66d5 120px,#ff5cc8 126px,#ff54bd 132px,#ff4cb3 138px,#ff45aa 144px,#ff3fa2 150px,#ff399a 156px,#ff3493 162px,#ff2f8d 168px,#ff2a87 174px,#ff2681 180px,#ff227c 186px,#ff1e77 192px,#ff1a73 198px,#ff176f 204px,#ff146b 210px,#ff1167 216px,#ff0e63 222px,#ff0b60 228px,#ff095d 234px,#ff065a 240px,#ff0457 246px,#ff0254 252px,#ff0052 258px,#ff0050 264px,#ff004d 270px,#ff004b 276px,#ff0049 282px,#ff0047 288px,#ff0045 294px,#ff0043 300px,#ff0041 306px,#ff003f 312px,#ff003e 318px,#ff003c 324px,#ff003b 330px)"></div><div style="height:2px;background:linear-gradient(90deg,#00c3ff 0px,#00bfff 6px,#00bcff 12px,#02b8ff 18px,#14b5ff 24px,#25b1ff 30px,#37aeff 36px,#48aaff 42px,#59a6ff 48px,#6aa3ff 54px,#7b9fff 60px,#8c9bff 66px,#9d97ff 72px,#ae93ff 78px,#c08fff 84px,#d18bff 90px,#e387ff 96px,#f583ff 102px,#ff7bf8 108px,#ff6fe8 114px,#ff65da 120px,#ff5bcd 126px,#ff53c2 132px,#ff4bb7 138px,#ff44ae 144px,#ff3ea6 150px,#ff389e 156px,#ff3397 162px,#ff2e90 168px,#ff298a 174px,#ff2584 180px,#ff217f 186px,#ff1d7a 192px,#ff1a76 198px,#ff1671 204px,#ff136d 210px,#ff106a 216px,#ff0d66 222px,#ff0b63 228px,#ff085f 234px,#ff065c 240px,#ff0359 246px,#ff0157 252px,#ff0054 258px,#ff0052 264px,#ff004f 270px,#ff004d 276px,#ff004b 282px,#ff0049 288px,#ff0047 294px,#ff0045 300px,#ff0043 306px,#ff0041 312px,#ff003f 318px,#ff003e 324px,#ff003c 330px)"></div><div style="height:2px;background:linear-gradient(90deg,#00beff 0px,#00baff 6px,#00b7ff 12px,#01b4ff 18px,#13b0ff 24px,#24adff 30px,#35a9ff 36px,#45a5ff 42px,#56a2ff 48px,#679eff 54px,#779aff 60px,#8897ff 66px,#9993ff 72px,#aa8fff 78px,#bb8bff 84px,#cc87ff 90px,#de83ff 96px,#ef7fff 102px,#ff7afe 108px,#ff6eed 114px,#ff64df 120px,#ff5ad2 126px,#ff52c6 132px,#ff4abc 138px,#ff43b2 144px,#ff3daa 150px,#ff37a2 156px,#ff329a 162px,#ff2d94 168px,#ff288d 174px,#ff2488 180px,#ff2082 186px,#ff1c7d 192px,#ff1978 198px,#ff1674 204px,#ff1270 210px,#ff0f6c 216px,#ff0d68 222px,#ff0a65 228px,#ff0762 234px,#ff055f 240px,#ff025c 246px,#ff0059 252px,#ff0056 258px,#ff0054 264px,#ff0051 270px,#ff004f 276px,#ff004d 282px,#ff004b 288px,#ff0049 294px,#ff0047 300px,#ff0045 306px,#ff0043 312px,#ff0041 318px,#ff0040 324px,#ff003e 330px)"></div><div style="height:2px;background:linear-gradient(90deg,#00b9ff 0px,#00b6ff 6px,#00b2ff 12px,#00afff 18px,#12acff 24px,#22a8ff 30px,#33a5ff 36px,#43a1ff 42px,#549dff 48px,#649aff 54px,#7496ff 60px,#8592ff 66px,#958eff 72px,#a68bff 78px,#b787ff 84px,#c783ff 90px,#d87fff 96px,#e97bff 102px,#fb77ff 108px,#ff6df3 114px,#ff63e4 120px,#ff59d7 126px,#ff51cb 132px,#ff49c0 138px,#ff42b6 144px,#ff3cad 150px,#ff36a5 156px,#ff319e 162px,#ff2c97 168px,#ff2791 174px,#ff238b 180px,#ff1f85 186px,#ff1c80 192px,#ff187b 198px,#ff1577 204px,#ff1273 210px,#ff0f6f 216px,#ff0c6b 222px,#ff0967 228px,#ff0764 234px,#ff0461 240px,#ff025e 246px,#ff005b 252px,#ff0058 258px,#ff0056 264px,#ff0053 270px,#ff0051 276px,#ff004f 282px,#ff004c 288px,#ff004a 294px,#ff0048 300px,#ff0046 306px,#ff0045 312px,#ff0043 318px,#ff0041 324px,#ff0040 330px)"></div><div style="height:2px;background:linear-gradient(90deg,#00b5ff 0px,#00b1ff 6px,#00aeff 12px,#00abff 18px,#10a7ff 24px,#21a4ff 30px,#31a0ff 36px,#419dff 42px,#5199ff 48px,#6195ff 54px,#7192ff 60px,#828eff 66px,#928aff 72px,#a287ff 78px,#b283ff 84px,#c37fff 90px,#d47bff 96px,#e477ff 102px,#f573ff 108px,#ff6cf8 114px,#ff61e9 120px,#ff58db 126px,#ff50cf 132px,#ff48c4 138px,#ff41ba 144px,#ff3bb1 150px,#ff35a9 156px,#ff30a1 162px,#ff2b9a 168px,#ff2794 174px,#ff228e 180px,#ff1e88 186px,#ff1b83 192px,#ff177e 198px,#ff147a 204px,#ff1175 210px,#ff0e71 216px,#ff0b6d 222px,#ff086a 228px,#ff0666 234px,#ff0363 240px,#ff0160 246px,#ff005d 252px,#ff005a 258px,#ff0058 264px,#ff0055 270px,#ff0053 276px,#ff0050 282px,#ff004e 288px,#ff004c 294px,#ff004a 300px,#ff0048 306px,#ff0046 312px,#ff0045 318px,#ff0043 324px,#ff0041 330px)"></div><div style="height:2px;background:linear-gradient(90deg,#00b0ff 0px,#00adff 6px,#00aaff 12px,#00a6ff 18px,#0fa3ff 24px,#1f9fff 30px,#2f9cff 36px,#3f99ff 42px,#4f95ff 48px,#5f91ff 54px,#6f8eff 60px,#7e8aff 66px,#8e86ff 72px,#9e83ff 78px,#ae7fff 84px,#bf7bff 90px,#cf77ff 96px,#df73ff 102px,#f06fff 108px,#ff6bfe 114px,#ff60ee 120px,#ff57e0 126px,#ff4fd4 132px,#ff47c9 138px,#ff40bf 144px,#ff3ab5 150px,#ff34ad 156px,#ff2fa5 162px,#ff2a9e 168px,#ff2697 174px,#ff2191 180px,#ff1e8b 186px,#ff1a86 192px,#ff1681 198px,#ff137c 204px,#ff1078 210px,#ff0d74 216px,#ff0a70 222px,#ff086c 228px,#ff0569 234px,#ff0365 240px,#ff0062 246px,#ff005f 252px,#ff005c 258px,#ff005a 264px,#ff0057 270px,#ff0055 276px,#ff0052 282px,#ff0050 288px,#ff004e 294px,#ff004c 300px,#ff004a 306px,#ff0048 312px,#ff0046 318px,#ff0044 324px,#ff0043 330px)"></div><div style="height:2px;background:linear-gradient(90deg,#00acff 0px,#00a9ff 6px,#00a5ff 12px,#00a2ff 18px,#0e9fff 24px,#1e9bff 30px,#2e98ff 36px,#3d95ff 42px,#4d91ff 48px,#5c8dff 54px,#6c8aff 60px,#7b86ff 66px,#8b83ff 72px,#9b7fff 78px,#aa7bff 84px,#ba77ff 90px,#ca74ff 96px,#da70ff 102px,#ea6cff 108px,#fb68ff 114px,#ff5ff3 120px,#ff56e5 126px,#ff4ed9 132px,#ff46cd 138px,#ff3fc3 144px,#ff39b9 150px,#ff33b1 156px,#ff2ea9 162px,#ff29a1 168px,#ff259a 174px,#ff2194 180px,#ff1d8e 186px,#ff1989 192px,#ff1684 198px,#ff127f 204px,#ff0f7b 210px,#ff0c76 216px,#ff0972 222px,#ff076f 228px,#ff046b 234px,#ff0268 240px,#ff0064 246px,#ff0061 252px,#ff005f 258px,#ff005c 264px,#ff0059 270px,#ff0057 276px,#ff0054 282px,#ff0052 288px,#ff0050 294px,#ff004e 300px,#ff004c 306px,#ff004a 312px,#ff0048 318px,#ff0046 324px,#ff0044 330px)"></div><div style="height:2px;background:linear-gradient(90deg,#00a8ff 0px,#00a5ff 6px,#00a1ff 12px,#009eff 18px,#0d9bff 24px,#1d97ff 30px,#2c94ff 36px,#3b91ff 42px,#4b8dff 48px,#5a8aff 54px,#6986ff 60px,#7883ff 66px,#887fff 72px,#977bff 78px,#a778ff 84px,#b674ff 90px,#c670ff 96px,#d66cff 102px,#e568ff 108px,#f564ff 114px,#ff5ef9 120px,#ff55ea 126px,#ff4ddd 132px,#ff45d1 138px,#ff3ec7 144px,#ff38bd 150px,#ff32b4 156px,#ff2dac 162px,#ff28a5 168px,#ff249e 174px,#ff2097 180px,#ff1c91 186px,#ff188c 192px,#ff1587 198px,#ff1182 204px,#ff0e7d 210px,#ff0b79 216px,#ff0975 222px,#ff0671 228px,#ff036d 234px,#ff016a 240px,#ff0067 246px,#ff0064 252px,#ff0061 258px,#ff005e 264px,#ff005b 270px,#ff0059 276px,#ff0056 282px,#ff0054 288px,#ff0052 294px,#ff0050 300px,#ff004d 306px,#ff004c 312px,#ff004a 318px,#ff0048 324px,#ff0046 330px)"></div><div style="height:2px;background:linear-gradient(90deg,#00a4ff 0px,#00a1ff 6px,#009dff 12px,#009aff 18px,#0c97ff 24px,#1b94ff 30px,#2b90ff 36px,#3a8dff 42px,#498aff 48px,#5886ff 54px,#6783ff 60px,#767fff 66px,#857bff 72px,#9478ff 78px,#a374ff 84px,#b270ff 90px,#c26dff 96px,#d169ff 102px,#e165ff 108px,#f061ff 114px,#ff5dfe 120px,#ff54ef 126px,#ff4be2 132px,#ff44d6 138px,#ff3dcb 144px,#ff37c1 150px,#ff31b8 156px,#ff2cb0 162px,#ff27a8 168px,#ff23a1 174px,#ff1f9b 180px,#ff1b94 186px,#ff178f 192px,#ff1489 198px,#ff1185 204px,#ff0e80 210px,#ff0b7b 216px,#ff0877 222px,#ff0573 228px,#ff0370 234px,#ff006c 240px,#ff0069 246px,#ff0066 252px,#ff0063 258px,#ff0060 264px,#ff005d 270px,#ff005b 276px,#ff0058 282px,#ff0056 288px,#ff0054 294px,#ff0051 300px,#ff004f 306px,#ff004d 312px,#ff004b 318px,#ff0049 324px,#ff0048 330px)"></div><div style="height:2px;background:linear-gradient(90deg,#00a0ff 0px,#009dff 6px,#009aff 12px,#0096ff 18px,#0b93ff 24px,#1a90ff 30px,#298dff 36px,#3889ff 42px,#4786ff 48px,#5583ff 54px,#647fff 60px,#737cff 66px,#8278ff 72px,#9174ff 78px,#9f71ff 84px,#ae6dff 90px,#be69ff 96px,#cd66ff 102px,#dc62ff 108px,#eb5eff 114px,#fb5aff 120px,#ff53f4 126px,#ff4ae6 132px,#ff43da 138px,#ff3ccf 144px,#ff36c5 150px,#ff30bc 156px,#ff2bb3 162px,#ff26ac 168px,#ff22a4 174px,#ff1e9e 180px,#ff1a98 186px,#ff1692 192px,#ff138c 198px,#ff1087 204px,#ff0d83 210px,#ff0a7e 216px,#ff077a 222px,#ff0476 228px,#ff0272 234px,#ff006f 240px,#ff006b 246px,#ff0068 252px,#ff0065 258px,#ff0062 264px,#ff005f 270px,#ff005d 276px,#ff005a 282px,#ff0058 288px,#ff0055 294px,#ff0053 300px,#ff0051 306px,#ff004f 312px,#ff004d 318px,#ff004b 324px,#ff0049 330px)"></div><div style="height:2px;background:linear-gradient(90deg,#009cff 0px,#0099ff 6px,#0096ff 12px,#0093ff 18px,#0a90ff 24px,#198cff 30px,#2889ff 36px,#3686ff 42px,#4582ff 48px,#537fff 54px,#627cff 60px,#7078ff 66px,#7f75ff 72px,#8d71ff 78px,#9c6eff 84px,#ab6aff 90px,#ba66ff 96px,#c963ff 102px,#d85fff 108px,#e75bff 114px,#f657ff 120px,#ff51f9 126px,#ff49eb 132px,#ff42df 138px,#ff3bd3 144px,#ff35c9 150px,#ff2fc0 156px,#ff2ab7 162px,#ff26af 168px,#ff21a8 174px,#ff1da1 180px,#ff199b 186px,#ff1695 192px,#ff128f 198px,#ff0f8a 204px,#ff0c85 210px,#ff0981 216px,#ff067c 222px,#ff0478 228px,#ff0174 234px,#ff0071 240px,#ff006d 246px,#ff006a 252px,#ff0067 258px,#ff0064 264px,#ff0061 270px,#ff005f 276px,#ff005c 282px,#ff005a 288px,#ff0057 294px,#ff0055 300px,#ff0053 306px,#ff0051 312px,#ff004f 318px,#ff004d 324px,#ff004b 330px)"></div><div style="height:2px;background:linear-gradient(90deg,#0099ff 0px,#0096ff 6px,#0092ff 12px,#008fff 18px,#098cff 24px,#1889ff 30px,#2686ff 36px,#3582ff 42px,#437fff 48px,#517cff 54px,#5f78ff 60px,#6e75ff 66px,#7c72ff 72px,#8a6eff 78px,#996aff 84px,#a767ff 90px,#b663ff 96px,#c460ff 102px,#d35cff 108px,#e258ff 114px,#f154ff 120px,#ff50fe 126px,#ff48f0 132px,#ff41e3 138px,#ff3ad8 144px,#ff34cd 150px,#ff2ec4 156px,#ff29bb 162px,#ff25b3 168px,#ff20ab 174px,#ff1ca4 180px,#ff189e 186px,#ff1598 192px,#ff1192 198px,#ff0e8d 204px,#ff0b88 210px,#ff0883 216px,#ff057f 222px,#ff037b 228px,#ff0077 234px,#ff0073 240px,#ff0070 246px,#ff006c 252px,#ff0069 258px,#ff0066 264px,#ff0063 270px,#ff0061 276px,#ff005e 282px,#ff005b 288px,#ff0059 294px,#ff0057 300px,#ff0055 306px,#ff0052 312px,#ff0050 318px,#ff004e 324px,#ff004d 330px)"></div><div style="height:2px;background:linear-gradient(90deg,#0095ff 0px,#0092ff 6px,#008fff 12px,#008cff 18px,#0889ff 24px,#1786ff 30px,#2582ff 36px,#337fff 42px,#417cff 48px,#4f79ff 54px,#5d75ff 60px,#6b72ff 66px,#796eff 72px,#876bff 78px,#9667ff 84px,#a464ff 90px,#b260ff 96px,#c15dff 102px,#cf59ff 108px,#de55ff 114px,#ec52ff 120px,#fb4eff 126px,#ff47f5 132px,#ff40e8 138px,#ff39dc 144px,#ff33d1 150px,#ff2dc7 156px,#ff28be 162px,#ff24b6 168px,#ff1fae 174px,#ff1ba7 180px,#ff17a1 186px,#ff149b 192px,#ff1095 198px,#ff0d90 204px,#ff0a8b 210px,#ff0786 216px,#ff0581 222px,#ff027d 228px,#ff0079 234px,#ff0075 240px,#ff0072 246px,#ff006f 252px,#ff006b 258px,#ff0068 264px,#ff0065 270px,#ff0063 276px,#ff0060 282px,#ff005d 288px,#ff005b 294px,#ff0059 300px,#ff0056 306px,#ff0054 312px,#ff0052 318px,#ff0050 324px,#ff004e 330px)"></div><div style="height:2px;background:linear-gradient(90deg,#0092ff 0px,#008fff 6px,#008cff 12px,#0089ff 18px,#0786ff 24px,#1682ff 30px,#247fff 36px,#327cff 42px,#3f79ff 48px,#4d75ff 54px,#5b72ff 60px,#696fff 66px,#776bff 72px,#8568ff 78px,#9365ff 84px,#a161ff 90px,#af5eff 96px,#bd5aff 102px,#cb56ff 108px,#d953ff 114px,#e84fff 120px,#f64bff 126px,#ff46f9 132px,#ff3fec 138px,#ff38e0 144px,#ff32d5 150px,#ff2ccb 156px,#ff27c2 162px,#ff23ba 168px,#ff1eb2 174px,#ff1aab 180px,#ff16a4 186px,#ff139e 192px,#ff1098 198px,#ff0c92 204px,#ff098d 210px,#ff0788 216px,#ff0484 222px,#ff0180 228px,#ff007c 234px,#ff0078 240px,#ff0074 246px,#ff0071 252px,#ff006d 258px,#ff006a 264px,#ff0067 270px,#ff0065 276px,#ff0062 282px,#ff005f 288px,#ff005d 294px,#ff005a 300px,#ff0058 306px,#ff0056 312px,#ff0054 318px,#ff0052 324px,#ff0050 330px)"></div><div style="height:2px;background:linear-gradient(90deg,#008eff 0px,#008cff 6px,#0088ff 12px,#0085ff 18px,#0682ff 24px,#147fff 30px,#227cff 36px,#3079ff 42px,#3e76ff 48px,#4b72ff 54px,#596fff 60px,#676cff 66px,#7469ff 72px,#8265ff 78px,#9062ff 84px,#9d5eff 90px,#ab5bff 96px,#b957ff 102px,#c754ff 108px,#d550ff 114px,#e34cff 120px,#f149ff 126px,#ff45fe 132px,#ff3df1 138px,#ff37e4 144px,#ff31d9 150px,#ff2bcf 156px,#ff26c6 162px,#ff22bd 168px,#ff1db5 174px,#ff19ae 180px,#ff16a7 186px,#ff12a1 192px,#ff0f9b 198px,#ff0c95 204px,#ff0990 210px,#ff068b 216px,#ff0386 222px,#ff0082 228px,#ff007e 234px,#ff007a 240px,#ff0076 246px,#ff0073 252px,#ff0070 258px,#ff006c 264px,#ff0069 270px,#ff0067 276px,#ff0064 282px,#ff0061 288px,#ff005f 294px,#ff005c 300px,#ff005a 306px,#ff0058 312px,#ff0055 318px,#ff0053 324px,#ff0051 330px)"></div><div style="height:2px;background:linear-gradient(90deg,#008bff 0px,#0088ff 6px,#0085ff 12px,#0082ff 18px,#057fff 24px,#137cff 30px,#2179ff 36px,#2f76ff 42px,#3c73ff 48px,#4970ff 54px,#576cff 60px,#6469ff 66px,#7266ff 72px,#7f62ff 78px,#8d5fff 84px,#9a5cff 90px,#a858ff 96px,#b555ff 102px,#c351ff 108px,#d14eff 114px,#df4aff 120px,#ed46ff 126px,#fb43ff 132px,#ff3cf5 138px,#ff36e9 144px,#ff30dd 150px,#ff2ad3 156px,#ff25c9 162px,#ff21c1 168px,#ff1cb9 174px,#ff18b1 180px,#ff15aa 186px,#ff11a4 192px,#ff0e9e 198px,#ff0b98 204px,#ff0893 210px,#ff058e 216px,#ff0289 222px,#ff0085 228px,#ff0080 234px,#ff007c 240px,#ff0079 246px,#ff0075 252px,#ff0072 258px,#ff006f 264px,#ff006b 270px,#ff0068 276px,#ff0066 282px,#ff0063 288px,#ff0060 294px,#ff005e 300px,#ff005c 306px,#ff0059 312px,#ff0057 318px,#ff0055 324px,#ff0053 330px)"></div><div style="height:2px;background:linear-gradient(90deg,#0088ff 0px,#0085ff 6px,#0082ff 12px,#007fff 18px,#047cff 24px,#1279ff 30px,#2076ff 36px,#2d73ff 42px,#3b70ff 48px,#486dff 54px,#556aff 60px,#6266ff 66px,#6f63ff 72px,#7d60ff 78px,#8a5cff 84px,#9759ff 90px,#a556ff 96px,#b252ff 102px,#c04fff 108px,#cd4bff 114px,#db47ff 120px,#e944ff 126px,#f640ff 132px,#ff3bfa 138px,#ff35ed 144px,#ff2fe1 150px,#ff29d7 156px,#ff24cd 162px,#ff20c4 168px,#ff1bbc 174px,#ff17b4 180px,#ff14ad 186px,#ff10a7 192px,#ff0da1 198px,#ff0a9b 204px,#ff0795 210px,#ff0490 216px,#ff018c 222px,#ff0087 228px,#ff0083 234px,#ff007f 240px,#ff007b 246px,#ff0077 252px,#ff0074 258px,#ff0071 264px,#ff006d 270px,#ff006a 276px,#ff0068 282px,#ff0065 288px,#ff0062 294px,#ff0060 300px,#ff005d 306px,#ff005b 312px,#ff0059 318px,#ff0057 324px,#ff0055 330px)"></div><div style="height:2px;background:linear-gradient(90deg,#0085ff 0px,#0082ff 6px,#007fff 12px,#007cff 18px,#0479ff 24px,#1176ff 30px,#1f73ff 36px,#2c70ff 42px,#396dff 48px,#466aff 54px,#5367ff 60px,#6064ff 66px,#6d60ff 72px,#7a5dff 78px,#875aff 84px,#9456ff 90px,#a153ff 96px,#af50ff 102px,#bc4cff 108px,#c949ff 114px,#d745ff 120px,#e442ff 126px,#f23eff 132px,#ff3afe 138px,#ff34f1 144px,#ff2ee6 150px,#ff28db 156px,#ff23d1 162px,#ff1fc8 168px,#ff1abf 174px,#ff16b8 180px,#ff13b0 186px,#ff0faa 192px,#ff0ca3 198px,#ff099e 204px,#ff0698 210px,#ff0393 216px,#ff008e 222px,#ff008a 228px,#ff0085 234px,#ff0081 240px,#ff007d 246px,#ff007a 252px,#ff0076 258px,#ff0073 264px,#ff0070 270px,#ff006c 276px,#ff006a 282px,#ff0067 288px,#ff0064 294px,#ff0062 300px,#ff005f 306px,#ff005d 312px,#ff005b 318px,#ff0058 324px,#ff0056 330px)"></div><div style="height:2px;background:linear-gradient(90deg,#0082ff 0px,#007fff 6px,#007cff 12px,#007aff 18px,#0377ff 24px,#1074ff 30px,#1e71ff 36px,#2b6dff 42px,#376aff 48px,#4467ff 54px,#5164ff 60px,#5e61ff 66px,#6b5eff 72px,#785bff 78px,#8457ff 84px,#9154ff 90px,#9e51ff 96px,#ab4dff 102px,#b94aff 108px,#c646ff 114px,#d343ff 120px,#e03fff 126px,#ee3cff 132px,#fb38ff 138px,#ff33f6 144px,#ff2dea 150px,#ff27df 156px,#ff22d5 162px,#ff1ecb 168px,#ff1ac3 174px,#ff16bb 180px,#ff12b4 186px,#ff0ead 192px,#ff0ba6 198px,#ff08a0 204px,#ff059b 210px,#ff0296 216px,#ff0091 222px,#ff008c 228px,#ff0088 234px,#ff0083 240px,#ff007f 246px,#ff007c 252px,#ff0078 258px,#ff0075 264px,#ff0072 270px,#ff006e 276px,#ff006c 282px,#ff0069 288px,#ff0066 294px,#ff0063 300px,#ff0061 306px,#ff005f 312px,#ff005c 318px,#ff005a 324px,#ff0058 330px)"></div><div style="height:2px;background:linear-gradient(90deg,#007fff 0px,#007dff 6px,#007aff 12px,#0077ff 18px,#0274ff 24px,#1071ff 30px,#1d6eff 36px,#296bff 42px,#3668ff 48px,#4365ff 54px,#4f62ff 60px,#5c5eff 66px,#695bff 72px,#7558ff 78px,#8255ff 84px,#8f52ff 90px,#9b4eff 96px,#a84bff 102px,#b548ff 108px,#c244ff 114px,#cf41ff 120px,#dc3dff 126px,#e93aff 132px,#f736ff 138px,#ff31fa 144px,#ff2cee 150px,#ff26e3 156px,#ff21d8 162px,#ff1dcf 168px,#ff19c6 174px,#ff15be 180px,#ff11b7 186px,#ff0db0 192px,#ff0aa9 198px,#ff07a3 204px,#ff049e 210px,#ff0198 216px,#ff0093 222px,#ff008f 228px,#ff008a 234px,#ff0086 240px,#ff0082 246px,#ff007e 252px,#ff007a 258px,#ff0077 264px,#ff0074 270px,#ff0070 276px,#ff006d 282px,#ff006b 288px,#ff0068 294px,#ff0065 300px,#ff0063 306px,#ff0060 312px,#ff005e 318px,#ff005c 324px,#ff005a 330px)"></div><div style="height:2px;background:linear-gradient(90deg,#007dff 0px,#007aff 6px,#0077ff 12px,#0074ff 18px,#0171ff 24px,#0f6eff 30px,#1b6bff 36px,#2868ff 42px,#3565ff 48px,#4162ff 54px,#4e5fff 60px,#5a5cff 66px,#6659ff 72px,#7356ff 78px,#7f52ff 84px,#8c4fff 90px,#994cff 96px,#a549ff 102px,#b245ff 108px,#bf42ff 114px,#cc3fff 120px,#d83bff 126px,#e538ff 132px,#f234ff 138px,#ff30fe 144px,#ff2af2 150px,#ff25e7 156px,#ff20dc 162px,#ff1cd3 168px,#ff18ca 174px,#ff14c2 180px,#ff10ba 186px,#ff0db3 192px,#ff09ac 198px,#ff06a6 204px,#ff03a0 210px,#ff009b 216px,#ff0096 222px,#ff0091 228px,#ff008c 234px,#ff0088 240px,#ff0084 246px,#ff0080 252px,#ff007d 258px,#ff0079 264px,#ff0076 270px,#ff0072 276px,#ff006f 282px,#ff006d 288px,#ff006a 294px,#ff0067 300px,#ff0065 306px,#ff0062 312px,#ff0060 318px,#ff005d 324px,#ff005b 330px)"></div><div style="height:2px;background:linear-gradient(90deg,#007aff 0px,#0077ff 6px,#0074ff 12px,#0071ff 18px,#006fff 24px,#0e6cff 30px,#1a69ff 36px,#2766ff 42px,#3363ff 48px,#4060ff 54px,#4c5dff 60px,#585aff 66px,#6456ff 72px,#7153ff 78px,#7d50ff 84px,#894dff 90px,#964aff 96px,#a246ff 102px,#af43ff 108px,#bb40ff 114px,#c83cff 120px,#d539ff 126px,#e136ff 132px,#ee32ff 138px,#fb2eff 144px,#ff29f6 150px,#ff24eb 156px,#ff1fe0 162px,#ff1bd6 168px,#ff17cd 174px,#ff13c5 180px,#ff0fbd 186px,#ff0cb6 192px,#ff08af 198px,#ff05a9 204px,#ff02a3 210px,#ff009e 216px,#ff0098 222px,#ff0093 228px,#ff008f 234px,#ff008a 240px,#ff0086 246px,#ff0082 252px,#ff007f 258px,#ff007b 264px,#ff0078 270px,#ff0074 276px,#ff0071 282px,#ff006e 288px,#ff006c 294px,#ff0069 300px,#ff0066 306px,#ff0064 312px,#ff0061 318px,#ff005f 324px,#ff005d 330px)"></div><div style="height:2px;background:linear-gradient(90deg,#0077ff 0px,#0075ff 6px,#0072ff 12px,#006fff 18px,#006cff 24px,#0d69ff 30px,#1966ff 36px,#2663ff 42px,#3260ff 48px,#3e5dff 54px,#4a5aff 60px,#5657ff 66px,#6254ff 72px,#6f51ff 78px,#7b4eff 84px,#874bff 90px,#9348ff 96px,#9f44ff 102px,#ac41ff 108px,#b83eff 114px,#c53aff 120px,#d137ff 126px,#de34ff 132px,#ea30ff 138px,#f72dff 144px,#ff28fa 150px,#ff23ef 156px,#ff1ee4 162px,#ff1ada 168px,#ff16d1 174px,#ff12c8 180px,#ff0ec0 186px,#ff0bb9 192px,#ff07b2 198px,#ff04ac 204px,#ff01a6 210px,#ff00a0 216px,#ff009b 222px,#ff0096 228px,#ff0091 234px,#ff008d 240px,#ff0089 246px,#ff0085 252px,#ff0081 258px,#ff007d 264px,#ff007a 270px,#ff0077 276px,#ff0073 282px,#ff0070 288px,#ff006e 294px,#ff006b 300px,#ff0068 306px,#ff0066 312px,#ff0063 318px,#ff0061 324px,#ff005f 330px)"></div><div style="height:2px;background:linear-gradient(90deg,#0075ff 0px,#0072ff 6px,#006fff 12px,#006cff 18px,#006aff 24px,#0c67ff 30px,#1864ff 36px,#2561ff 42px,#315eff 48px,#3d5bff 54px,#4958ff 60px,#5455ff 66px,#6052ff 72px,#6c4fff 78px,#784cff 84px,#8449ff 90px,#9045ff 96px,#9d42ff 102px,#a93fff 108px,#b53cff 114px,#c138ff 120px,#cd35ff 126px,#da32ff 132px,#e62eff 138px,#f32bff 144px,#ff27ff 150px,#ff22f3 156px,#ff1de8 162px,#ff19dd 168px,#ff15d4 174px,#ff11cc 180px,#ff0dc4 186px,#ff0abc 192px,#ff06b5 198px,#ff03af 204px,#ff00a9 210px,#ff00a3 216px,#ff009e 222px,#ff0099 228px,#ff0094 234px,#ff008f 240px,#ff008b 246px,#ff0087 252px,#ff0083 258px,#ff007f 264px,#ff007c 270px,#ff0079 276px,#ff0075 282px,#ff0072 288px,#ff006f 294px,#ff006d 300px,#ff006a 306px,#ff0067 312px,#ff0065 318px,#ff0063 324px,#ff0060 330px)"></div><div style="height:2px;background:linear-gradient(90deg,#0072ff 0px,#006fff 6px,#006dff 12px,#006aff 18px,#0067ff 24px,#0b64ff 30px,#1761ff 36px,#235fff 42px,#2f5cff 48px,#3b59ff 54px,#4756ff 60px,#5353ff 66px,#5f50ff 72px,#6a4dff 78px,#764aff 84px,#8247ff 90px,#8e43ff 96px,#9a40ff 102px,#a63dff 108px,#b23aff 114px,#be37ff 120px,#ca33ff 126px,#d630ff 132px,#e32cff 138px,#ef29ff 144px,#fb26ff 150px,#ff21f7 156px,#ff1ceb 162px,#ff18e1 168px,#ff14d8 174px,#ff10cf 180px,#ff0cc7 186px,#ff09bf 192px,#ff06b8 198px,#ff02b2 204px,#ff00ab 210px,#ff00a6 216px,#ff00a0 222px,#ff009b 228px,#ff0096 234px,#ff0092 240px,#ff008d 246px,#ff0089 252px,#ff0085 258px,#ff0081 264px,#ff007e 270px,#ff007b 276px,#ff0077 282px,#ff0074 288px,#ff0071 294px,#ff006e 300px,#ff006c 306px,#ff0069 312px,#ff0067 318px,#ff0064 324px,#ff0062 330px)"></div><div style="height:2px;background:linear-gradient(90deg,#0070ff 0px,#006dff 6px,#006aff 12px,#0068ff 18px,#0065ff 24px,#0a62ff 30px,#165fff 36px,#225cff 42px,#2e59ff 48px,#3a57ff 54px,#4554ff 60px,#5151ff 66px,#5d4eff 72px,#684bff 78px,#7448ff 84px,#8045ff 90px,#8b41ff 96px,#973eff 102px,#a33bff 108px,#af38ff 114px,#bb35ff 120px,#c731ff 126px,#d32eff 132px,#df2bff 138px,#eb27ff 144px,#f724ff 150px,#ff20fb 156px,#ff1bef 162px,#ff17e5 168px,#ff13db 174px,#ff0fd2 180px,#ff0bca 186px,#ff08c2 192px,#ff05bb 198px,#ff01b4 204px,#ff00ae 210px,#ff00a8 216px,#ff00a3 222px,#ff009e 228px,#ff0099 234px,#ff0094 240px,#ff0090 246px,#ff008b 252px,#ff0087 258px,#ff0084 264px,#ff0080 270px,#ff007d 276px,#ff0079 282px,#ff0076 288px,#ff0073 294px,#ff0070 300px,#ff006e 306px,#ff006b 312px,#ff0068 318px,#ff0066 324px,#ff0064 330px)"></div><div style="height:2px;background:linear-gradient(90deg,#006dff 0px,#006bff 6px,#0068ff 12px,#0065ff 18px,#0063ff 24px,#0a60ff 30px,#165dff 36px,#215aff 42px,#2d57ff 48px,#3854ff 54px,#4452ff 60px,#4f4fff 66px,#5b4cff 72px,#6649ff 78px,#7246ff 84px,#7d43ff 90px,#893fff 96px,#953cff 102px,#a039ff 108px,#ac36ff 114px,#b833ff 120px,#c330ff 126px,#cf2cff 132px,#db29ff 138px,#e726ff 144px,#f322ff 150px,#ff1fff 156px,#ff1af3 162px,#ff16e8 168px,#ff11df 174px,#ff0ed6 180px,#ff0acd 186px,#ff07c5 192px,#ff04be 198px,#ff00b7 204px,#ff00b1 210px,#ff00ab 216px,#ff00a5 222px,#ff00a0 228px,#ff009b 234px,#ff0096 240px,#ff0092 246px,#ff008e 252px,#ff008a 258px,#ff0086 264px,#ff0082 270px,#ff007f 276px,#ff007b 282px,#ff0078 288px,#ff0075 294px,#ff0072 300px,#ff006f 306px,#ff006d 312px,#ff006a 318px,#ff0068 324px,#ff0065 330px)"></div><div style="height:2px;background:linear-gradient(90deg,#006bff 0px,#0068ff 6px,#0066ff 12px,#0063ff 18px,#0060ff 24px,#095eff 30px,#155bff 36px,#2058ff 42px,#2c55ff 48px,#3752ff 54px,#424fff 60px,#4e4dff 66px,#594aff 72px,#6447ff 78px,#7044ff 84px,#7b41ff 90px,#873eff 96px,#923aff 102px,#9e37ff 108px,#a934ff 114px,#b531ff 120px,#c02eff 126px,#cc2bff 132px,#d827ff 138px,#e424ff 144px,#ef21ff 150px,#fb1dff 156px,#ff19f7 162px,#ff15ec 168px,#ff10e2 174px,#ff0dd9 180px,#ff09d0 186px,#ff06c9 192px,#ff03c1 198px,#ff00ba 204px,#ff00b4 210px,#ff00ae 216px,#ff00a8 222px,#ff00a3 228px,#ff009e 234px,#ff0099 240px,#ff0094 246px,#ff0090 252px,#ff008c 258px,#ff0088 264px,#ff0084 270px,#ff0081 276px,#ff007d 282px,#ff007a 288px,#ff0077 294px,#ff0074 300px,#ff0071 306px,#ff006e 312px,#ff006c 318px,#ff0069 324px,#ff0067 330px)"></div><div style="height:2px;background:linear-gradient(90deg,#0069ff 0px,#0066ff 6px,#0064ff 12px,#0061ff 18px,#005eff 24px,#085bff 30px,#1459ff 36px,#1f56ff 42px,#2b53ff 48px,#3650ff 54px,#414dff 60px,#4c4bff 66px,#5748ff 72px,#6345ff 78px,#6e42ff 84px,#793fff 90px,#843cff 96px,#9039ff 102px,#9b36ff 108px,#a632ff 114px,#b22fff 120px,#bd2cff 126px,#c929ff 132px,#d426ff 138px,#e022ff 144px,#ec1fff 150px,#f71cff 156px,#ff18fb 162px,#ff13f0 168px,#ff0fe6 174px,#ff0cdc 180px,#ff08d4 186px,#ff05cc 192px,#ff02c4 198px,#ff00bd 204px,#ff00b7 210px,#ff00b0 216px,#ff00ab 222px,#ff00a5 228px,#ff00a0 234px,#ff009b 240px,#ff0096 246px,#ff0092 252px,#ff008e 258px,#ff008a 264px,#ff0086 270px,#ff0083 276px,#ff007f 282px,#ff007c 288px,#ff0079 294px,#ff0076 300px,#ff0073 306px,#ff0070 312px,#ff006e 318px,#ff006b 324px,#ff0069 330px)"></div><div style="height:2px;background:linear-gradient(90deg,#0067ff 0px,#0064ff 6px,#0061ff 12px,#005fff 18px,#005cff 24px,#0759ff 30px,#1357ff 36px,#1e54ff 42px,#2951ff 48px,#354eff 54px,#404bff 60px,#4b49ff 66px,#5646ff 72px,#6143ff 78px,#6c40ff 84px,#773dff 90px,#823aff 96px,#8d37ff 102px,#9834ff 108px,#a431ff 114px,#af2eff 120px,#ba2aff 126px,#c627ff 132px,#d124ff 138px,#dc21ff 144px,#e81dff 150px,#f41aff 156px,#ff17ff 162px,#ff12f4 168px,#ff0ee9 174px,#ff0be0 180px,#ff07d7 186px,#ff04cf 192px,#ff00c7 198px,#ff00c0 204px,#ff00b9 210px,#ff00b3 216px,#ff00ad 222px,#ff00a8 228px,#ff00a2 234px,#ff009e 240px,#ff0099 246px,#ff0094 252px,#ff0090 258px,#ff008c 264px,#ff0088 270px,#ff0085 276px,#ff0081 282px,#ff007e 288px,#ff007b 294px,#ff0078 300px,#ff0075 306px,#ff0072 312px,#ff006f 318px,#ff006d 324px,#ff006a 330px)"></div><div style="height:2px;background:linear-gradient(90deg,#0064ff 0px,#0062ff 6px,#005fff 12px,#005dff 18px,#005aff 24px,#0757ff 30px,#1255ff 36px,#1d52ff 42px,#284fff 48px,#334cff 54px,#3e4aff 60px,#4947ff 66px,#5444ff 72px,#5f41ff 78px,#6a3eff 84px,#753bff 90px,#8038ff 96px,#8b35ff 102px,#9632ff 108px,#a12fff 114px,#ac2cff 120px,#b729ff 126px,#c326ff 132px,#ce23ff 138px,#d91fff 144px,#e41cff 150px,#f019ff 156px,#fb15ff 162px,#ff11f7 168px,#ff0ded 174px,#ff0ae3 180px,#ff06da 186px,#ff03d2 192px,#ff00ca 198px,#ff00c3 204px,#ff00bc 210px,#ff00b6 216px,#ff00b0 222px,#ff00aa 228px,#ff00a5 234px,#ff00a0 240px,#ff009b 246px,#ff0097 252px,#ff0092 258px,#ff008e 264px,#ff008a 270px,#ff0087 276px,#ff0083 282px,#ff0080 288px,#ff007d 294px,#ff007a 300px,#ff0077 306px,#ff0074 312px,#ff0071 318px,#ff006e 324px,#ff006c 330px)"></div><div style="height:2px;background:linear-gradient(90deg,#0062ff 0px,#0060ff 6px,#005dff 12px,#005bff 18px,#0058ff 24px,#0655ff 30px,#1153ff 36px,#1c50ff 42px,#274dff 48px,#324aff 54px,#3d48ff 60px,#4845ff 66px,#5342ff 72px,#5d3fff 78px,#683cff 84px,#7339ff 90px,#7e36ff 96px,#8933ff 102px,#9430ff 108px,#9e2dff 114px,#a92aff 120px,#b427ff 126px,#c024ff 132px,#cb21ff 138px,#d61eff 144px,#e11bff 150px,#ec17ff 156px,#f814ff 162px,#ff10fb 168px,#ff0cf0 174px,#ff09e7 180px,#ff05de 186px,#ff02d5 192px,#ff00cd 198px,#ff00c6 204px,#ff00bf 210px,#ff00b9 216px,#ff00b3 222px,#ff00ad 228px,#ff00a7 234px,#ff00a2 240px,#ff009d 246px,#ff0099 252px,#ff0095 258px,#ff0090 264px,#ff008d 270px,#ff0089 276px,#ff0085 282px,#ff0082 288px,#ff007f 294px,#ff007b 300px,#ff0078 306px,#ff0076 312px,#ff0073 318px,#ff0070 324px,#ff006e 330px)"></div><div style="height:2px;background:linear-gradient(90deg,#0060ff 0px,#005eff 6px,#005bff 12px,#0059ff 18px,#0056ff 24px,#0553ff 30px,#1051ff 36px,#1b4eff 42px,#264bff 48px,#3149ff 54px,#3c46ff 60px,#4643ff 66px,#5140ff 72px,#5c3dff 78px,#663bff 84px,#7138ff 90px,#7c35ff 96px,#8632ff 102px,#912fff 108px,#9c2cff 114px,#a729ff 120px,#b226ff 126px,#bd23ff 132px,#c820ff 138px,#d31cff 144px,#de19ff 150px,#e916ff 156px,#f413ff 162px,#ff0fff 168px,#ff0bf4 174px,#ff07ea 180px,#ff04e1 186px,#ff01d8 192px,#ff00d0 198px,#ff00c9 204px,#ff00c2 210px,#ff00bb 216px,#ff00b5 222px,#ff00af 228px,#ff00aa 234px,#ff00a5 240px,#ff00a0 246px,#ff009b 252px,#ff0097 258px,#ff0093 264px,#ff008f 270px,#ff008b 276px,#ff0087 282px,#ff0084 288px,#ff0080 294px,#ff007d 300px,#ff007a 306px,#ff0077 312px,#ff0075 318px,#ff0072 324px,#ff006f 330px)"></div><div style="height:2px;background:linear-gradient(90deg,#005eff 0px,#005cff 6px,#0059ff 12px,#0057ff 18px,#0054ff 24px,#0451ff 30px,#104fff 36px,#1b4cff 42px,#2549ff 48px,#3047ff 54px,#3a44ff 60px,#4541ff 66px,#503fff 72px,#5a3cff 78px,#6539ff 84px,#6f36ff 90px,#7a33ff 96px,#8430ff 102px,#8f2dff 108px,#9a2aff 114px,#a427ff 120px,#af24ff 126px,#ba21ff 132px,#c51eff 138px,#cf1bff 144px,#da18ff 150px,#e514ff 156px,#f011ff 162px,#fb0eff 168px,#ff0af8 174px,#ff06ee 180px,#ff03e4 186px,#ff00db 192px,#ff00d3 198px,#ff00cc 204px,#ff00c5 210px,#ff00be 216px,#ff00b8 222px,#ff00b2 228px,#ff00ac 234px,#ff00a7 240px,#ff00a2 246px,#ff009d 252px,#ff0099 258px,#ff0095 264px,#ff0091 270px,#ff008d 276px,#ff0089 282px,#ff0086 288px,#ff0082 294px,#ff007f 300px,#ff007c 306px,#ff0079 312px,#ff0076 318px,#ff0074 324px,#ff0071 330px)"></div><div style="height:2px;background:linear-gradient(90deg,#005cff 0px,#005aff 6px,#0057ff 12px,#0055ff 18px,#0052ff 24px,#0450ff 30px,#0f4dff 36px,#1a4aff 42px,#2448ff 48px,#2f45ff 54px,#3942ff 60px,#4440ff 66px,#4e3dff 72px,#583aff 78px,#6337ff 84px,#6d34ff 90px,#7832ff 96px,#822fff 102px,#8d2cff 108px,#9729ff 114px,#a226ff 120px,#ac23ff 126px,#b720ff 132px,#c21dff 138px,#cc1aff 144px,#d716ff 150px,#e213ff 156px,#ed10ff 162px,#f80dff 168px,#ff09fb 174px,#ff05f1 180px,#ff02e8 186px,#ff00df 192px,#ff00d6 198px,#ff00cf 204px,#ff00c8 210px,#ff00c1 216px,#ff00ba 222px,#ff00b5 228px,#ff00af 234px,#ff00aa 240px,#ff00a5 246px,#ff00a0 252px,#ff009b 258px,#ff0097 264px,#ff0093 270px,#ff008f 276px,#ff008b 282px,#ff0088 288px,#ff0084 294px,#ff0081 300px,#ff007e 306px,#ff007b 312px,#ff0078 318px,#ff0075 324px,#ff0073 330px)"></div><div style="height:2px;background:linear-gradient(90deg,#005aff 0px,#0058ff 6px,#0055ff 12px,#0053ff 18px,#0050ff 24px,#034eff 30px,#0e4bff 36px,#1949ff 42px,#2346ff 48px,#2e43ff 54px,#3841ff 60px,#423eff 66px,#4d3bff 72px,#5738ff 78px,#6136ff 84px,#6b33ff 90px,#7630ff 96px,#802dff 102px,#8a2aff 108px,#9527ff 114px,#9f24ff 120px,#aa21ff 126px,#b41eff 132px,#bf1bff 138px,#c918ff 144px,#d415ff 150px,#df12ff 156px,#e90fff 162px,#f40bff 168px,#ff08ff 174px,#ff04f5 180px,#ff01eb 186px,#ff00e2 192px,#ff00da 198px,#ff00d2 204px,#ff00ca 210px,#ff00c4 216px,#ff00bd 222px,#ff00b7 228px,#ff00b1 234px,#ff00ac 240px,#ff00a7 246px,#ff00a2 252px,#ff009d 258px,#ff0099 264px,#ff0095 270px,#ff0091 276px,#ff008d 282px,#ff008a 288px,#ff0086 294px,#ff0083 300px,#ff0080 306px,#ff007d 312px,#ff007a 318px,#ff0077 324px,#ff0074 330px)"></div><div style="height:2px;background:linear-gradient(90deg,#0059ff 0px,#0056ff 6px,#0054ff 12px,#0051ff 18px,#004fff 24px,#024cff 30px,#0d49ff 36px,#1847ff 42px,#2244ff 48px,#2d42ff 54px,#373fff 60px,#413cff 66px,#4b3aff 72px,#5537ff 78px,#6034ff 84px,#6a31ff 90px,#742eff 96px,#7e2cff 102px,#8829ff 108px,#9326ff 114px,#9d23ff 120px,#a720ff 126px,#b21dff 132px,#bc1aff 138px,#c617ff 144px,#d114ff 150px,#dc11ff 156px,#e60dff 162px,#f10aff 168px,#fb07ff 174px,#ff03f8 180px,#ff00ee 186px,#ff00e5 192px,#ff00dd 198px,#ff00d5 204px,#ff00cd 210px,#ff00c6 216px,#ff00c0 222px,#ff00ba 228px,#ff00b4 234px,#ff00ae 240px,#ff00a9 246px,#ff00a4 252px,#ff00a0 258px,#ff009b 264px,#ff0097 270px,#ff0093 276px,#ff008f 282px,#ff008c 288px,#ff0088 294px,#ff0085 300px,#ff0082 306px,#ff007e 312px,#ff007c 318px,#ff0079 324px,#ff0076 330px)"></div><div style="height:2px;background:linear-gradient(90deg,#0057ff 0px,#0054ff 6px,#0052ff 12px,#004fff 18px,#004dff 24px,#024aff 30px,#0d48ff 36px,#1745ff 42px,#2143ff 48px,#2c40ff 54px,#363dff 60px,#403bff 66px,#4a38ff 72px,#5435ff 78px,#5e33ff 84px,#6830ff 90px,#722dff 96px,#7c2aff 102px,#8627ff 108px,#9024ff 114px,#9b22ff 120px,#a51fff 126px,#af1cff 132px,#b919ff 138px,#c416ff 144px,#ce12ff 150px,#d80fff 156px,#e30cff 162px,#ed09ff 168px,#f805ff 174px,#ff02fc 180px,#ff00f2 186px,#ff00e8 192px,#ff00e0 198px,#ff00d8 204px,#ff00d0 210px,#ff00c9 216px,#ff00c3 222px,#ff00bc 228px,#ff00b6 234px,#ff00b1 240px,#ff00ac 246px,#ff00a7 252px,#ff00a2 258px,#ff009d 264px,#ff0099 270px,#ff0095 276px,#ff0091 282px,#ff008e 288px,#ff008a 294px,#ff0087 300px,#ff0083 306px,#ff0080 312px,#ff007d 318px,#ff007a 324px,#ff0078 330px)"></div><div style="height:2px;background:linear-gradient(90deg,#0055ff 0px,#0052ff 6px,#0050ff 12px,#004eff 18px,#004bff 24px,#0149ff 30px,#0c46ff 36px,#1643ff 42px,#2141ff 48px,#2b3eff 54px,#353cff 60px,#3f39ff 66px,#4836ff 72px,#5234ff 78px,#5c31ff 84px,#662eff 90px,#702cff 96px,#7a29ff 102px,#8426ff 108px,#8e23ff 114px,#9820ff 120px,#a21dff 126px,#ad1aff 132px,#b717ff 138px,#c114ff 144px,#cb11ff 150px,#d50eff 156px,#e00bff 162px,#ea08ff 168px,#f504ff 174px,#ff01ff 180px,#ff00f5 186px,#ff00ec 192px,#ff00e3 198px,#ff00db 204px,#ff00d3 210px,#ff00cc 216px,#ff00c5 222px,#ff00bf 228px,#ff00b9 234px,#ff00b3 240px,#ff00ae 246px,#ff00a9 252px,#ff00a4 258px,#ff00a0 264px,#ff009b 270px,#ff0097 276px,#ff0093 282px,#ff0090 288px,#ff008c 294px,#ff0088 300px,#ff0085 306px,#ff0082 312px,#ff007f 318px,#ff007c 324px,#ff0079 330px)"></div><div style="height:2px;background:linear-gradient(90deg,#0053ff 0px,#0051ff 6px,#004eff 12px,#004cff 18px,#0049ff 24px,#0147ff 30px,#0b44ff 36px,#1642ff 42px,#203fff 48px,#2a3dff 54px,#333aff 60px,#3d38ff 66px,#4735ff 72px,#5132ff 78px,#5b30ff 84px,#652dff 90px,#6e2aff 96px,#7827ff 102px,#8225ff 108px,#8c22ff 114px,#961fff 120px,#a01cff 126px,#aa19ff 132px,#b416ff 138px,#be13ff 144px,#c810ff 150px,#d20dff 156px,#dd0aff 162px,#e706ff 168px,#f103ff 174px,#fb00ff 180px,#ff00f8 186px,#ff00ef 192px,#ff00e6 198px,#ff00de 204px,#ff00d6 210px,#ff00cf 216px,#ff00c8 222px,#ff00c2 228px,#ff00bb 234px,#ff00b6 240px,#ff00b0 246px,#ff00ab 252px,#ff00a6 258px,#ff00a2 264px,#ff009d 270px,#ff0099 276px,#ff0095 282px,#ff0091 288px,#ff008e 294px,#ff008a 300px,#ff0087 306px,#ff0084 312px,#ff0081 318px,#ff007e 324px,#ff007b 330px)"></div><div style="height:2px;background:linear-gradient(90deg,#0051ff 0px,#004fff 6px,#004dff 12px,#004aff 18px,#0048ff 24px,#0045ff 30px,#0b43ff 36px,#1540ff 42px,#1f3eff 48px,#293bff 54px,#3239ff 60px,#3c36ff 66px,#4633ff 72px,#5031ff 78px,#592eff 84px,#632bff 90px,#6d29ff 96px,#7726ff 102px,#8023ff 108px,#8a20ff 114px,#941eff 120px,#9e1bff 126px,#a818ff 132px,#b215ff 138px,#bc12ff 144px,#c60fff 150px,#d00cff 156px,#da09ff 162px,#e405ff 168px,#ee02ff 174px,#f800ff 180px,#ff00fc 186px,#ff00f2 192px,#ff00e9 198px,#ff00e1 204px,#ff00d9 210px,#ff00d2 216px,#ff00cb 222px,#ff00c4 228px,#ff00be 234px,#ff00b8 240px,#ff00b3 246px,#ff00ae 252px,#ff00a9 258px,#ff00a4 264px,#ff00a0 270px,#ff009b 276px,#ff0097 282px,#ff0093 288px,#ff0090 294px,#ff008c 300px,#ff0089 306px,#ff0086 312px,#ff0083 318px,#ff0080 324px,#ff007d 330px)"></div><div style="height:2px;background:linear-gradient(90deg,#0050ff 0px,#004dff 6px,#004bff 12px,#0049ff 18px,#0046ff 24px,#0044ff 30px,#0a41ff 36px,#143fff 42px,#1e3cff 48px,#283aff 54px,#3137ff 60px,#3b35ff 66px,#4532ff 72px,#4e2fff 78px,#582dff 84px,#612aff 90px,#6b27ff 96px,#7525ff 102px,#7e22ff 108px,#881fff 114px,#921cff 120px,#9c19ff 126px,#a517ff 132px,#af14ff 138px,#b911ff 144px,#c30eff 150px,#cd0bff 156px,#d707ff 162px,#e104ff 168px,#eb01ff 174px,#f500ff 180px,#ff00ff 186px,#ff00f5 192px,#ff00ec 198px,#ff00e4 204px,#ff00dc 210px,#ff00d4 216px,#ff00cd 222px,#ff00c7 228px,#ff00c1 234px,#ff00bb 240px,#ff00b5 246px,#ff00b0 252px,#ff00ab 258px,#ff00a6 264px,#ff00a2 270px,#ff009d 276px,#ff0099 282px,#ff0095 288px,#ff0092 294px,#ff008e 300px,#ff008b 306px,#ff0087 312px,#ff0084 318px,#ff0081 324px,#ff007e 330px)"></div><div style="height:2px;background:linear-gradient(90deg,#004eff 0px,#004cff 6px,#0049ff 12px,#0047ff 18px,#0045ff 24px,#0042ff 30px,#0940ff 36px,#133dff 42px,#1d3bff 48px,#2738ff 54px,#3036ff 60px,#3a33ff 66px,#4331ff 72px,#4d2eff 78px,#562bff 84px,#6029ff 90px,#6926ff 96px,#7323ff 102px,#7d21ff 108px,#861eff 114px,#901bff 120px,#9918ff 126px,#a315ff 132px,#ad12ff 138px,#b60fff 144px,#c00cff 150px,#ca09ff 156px,#d406ff 162px,#de03ff 168px,#e800ff 174px,#f200ff 180px,#fc00ff 186px,#ff00f9 192px,#ff00ef 198px,#ff00e7 204px,#ff00df 210px,#ff00d7 216px,#ff00d0 222px,#ff00c9 228px,#ff00c3 234px,#ff00bd 240px,#ff00b8 246px,#ff00b2 252px,#ff00ad 258px,#ff00a8 264px,#ff00a4 270px,#ff00a0 276px,#ff009b 282px,#ff0097 288px,#ff0094 294px,#ff0090 300px,#ff008d 306px,#ff0089 312px,#ff0086 318px,#ff0083 324px,#ff0080 330px)"></div><div style="height:2px;background:linear-gradient(90deg,#004cff 0px,#004aff 6px,#0048ff 12px,#0045ff 18px,#0043ff 24px,#0041ff 30px,#093eff 36px,#133cff 42px,#1c39ff 48px,#2637ff 54px,#2f34ff 60px,#3932ff 66px,#422fff 72px,#4c2dff 78px,#552aff 84px,#5e27ff 90px,#6825ff 96px,#7122ff 102px,#7b1fff 108px,#841dff 114px,#8e1aff 120px,#9717ff 126px,#a114ff 132px,#aa11ff 138px,#b40eff 144px,#be0bff 150px,#c708ff 156px,#d105ff 162px,#db02ff 168px,#e500ff 174px,#ee00ff 180px,#f800ff 186px,#ff00fc 192px,#ff00f2 198px,#ff00ea 204px,#ff00e2 210px,#ff00da 216px,#ff00d3 222px,#ff00cc 228px,#ff00c6 234px,#ff00c0 240px,#ff00ba 246px,#ff00b5 252px,#ff00af 258px,#ff00ab 264px,#ff00a6 270px,#ff00a2 276px,#ff009d 282px,#ff0099 288px,#ff0096 294px,#ff0092 300px,#ff008e 306px,#ff008b 312px,#ff0088 318px,#ff0085 324px,#ff0082 330px)"></div><div style="height:2px;background:linear-gradient(90deg,#004bff 0px,#0049ff 6px,#0046ff 12px,#0044ff 18px,#0041ff 24px,#003fff 30px,#083dff 36px,#123aff 42px,#1b38ff 48px,#2535ff 54px,#2e33ff 60px,#3830ff 66px,#412eff 72px,#4a2bff 78px,#5429ff 84px,#5d26ff 90px,#6623ff 96px,#7021ff 102px,#791eff 108px,#821bff 114px,#8c19ff 120px,#9516ff 126px,#9f13ff 132px,#a810ff 138px,#b10dff 144px,#bb0aff 150px,#c507ff 156px,#ce04ff 162px,#d801ff 168px,#e200ff 174px,#eb00ff 180px,#f500ff 186px,#ff00ff 192px,#ff00f6 198px,#ff00ed 204px,#ff00e5 210px,#ff00dd 216px,#ff00d5 222px,#ff00cf 228px,#ff00c8 234px,#ff00c2 240px,#ff00bc 246px,#ff00b7 252px,#ff00b2 258px,#ff00ad 264px,#ff00a8 270px,#ff00a4 276px,#ff009f 282px,#ff009b 288px,#ff0098 294px,#ff0094 300px,#ff0090 306px,#ff008d 312px,#ff008a 318px,#ff0086 324px,#ff0083 330px)"></div><div style="height:2px;background:linear-gradient(90deg,#0049ff 0px,#0047ff 6px,#0045ff 12px,#0042ff 18px,#0040ff 24px,#003eff 30px,#073bff 36px,#1139ff 42px,#1b36ff 48px,#2434ff 54px,#2d31ff 60px,#372fff 66px,#402cff 72px,#492aff 78px,#5227ff 84px,#5b25ff 90px,#6522ff 96px,#6e1fff 102px,#771dff 108px,#801aff 114px,#8a17ff 120px,#9315ff 126px,#9c12ff 132px,#a60fff 138px,#af0cff 144px,#b909ff 150px,#c206ff 156px,#cc03ff 162px,#d500ff 168px,#df00ff 174px,#e800ff 180px,#f200ff 186px,#fc00ff 192px,#ff00f9 198px,#ff00f0 204px,#ff00e7 210px,#ff00e0 216px,#ff00d8 222px,#ff00d1 228px,#ff00cb 234px,#ff00c5 240px,#ff00bf 246px,#ff00b9 252px,#ff00b4 258px,#ff00af 264px,#ff00aa 270px,#ff00a6 276px,#ff00a1 282px,#ff009d 288px,#ff0099 294px,#ff0096 300px,#ff0092 306px,#ff008f 312px,#ff008b 318px,#ff0088 324px,#ff0085 330px)"></div><div style="height:2px;background:linear-gradient(90deg,#0048ff 0px,#0045ff 6px,#0043ff 12px,#0041ff 18px,#003fff 24px,#003cff 30px,#073aff 36px,#1137ff 42px,#1a35ff 48px,#2333ff 54px,#2c30ff 60px,#362eff 66px,#3f2bff 72px,#4829ff 78px,#5126ff 84px,#5a23ff 90px,#6321ff 96px,#6c1eff 102px,#751cff 108px,#7f19ff 114px,#8816ff 120px,#9113ff 126px,#9a11ff 132px,#a40eff 138px,#ad0bff 144px,#b608ff 150px,#bf05ff 156px,#c902ff 162px,#d200ff 168px,#dc00ff 174px,#e500ff 180px,#ef00ff 186px,#f800ff 192px,#ff00fc 198px,#ff00f3 204px,#ff00ea 210px,#ff00e2 216px,#ff00db 222px,#ff00d4 228px,#ff00cd 234px,#ff00c7 240px,#ff00c1 246px,#ff00bc 252px,#ff00b6 258px,#ff00b1 264px,#ff00ac 270px,#ff00a8 276px,#ff00a4 282px,#ff009f 288px,#ff009b 294px,#ff0098 300px,#ff0094 306px,#ff0091 312px,#ff008d 318px,#ff008a 324px,#ff0087 330px)"></div><div style="height:2px;background:linear-gradient(90deg,#0046ff 0px,#0044ff 6px,#0042ff 12px,#003fff 18px,#003dff 24px,#003bff 30px,#0638ff 36px,#1036ff 42px,#1934ff 48px,#2231ff 54px,#2c2fff 60px,#352cff 66px,#3e2aff 72px,#4727ff 78px,#5025ff 84px,#5922ff 90px,#6220ff 96px,#6b1dff 102px,#741aff 108px,#7d18ff 114px,#8615ff 120px,#8f12ff 126px,#9810ff 132px,#a10dff 138px,#ab0aff 144px,#b407ff 150px,#bd04ff 156px,#c601ff 162px,#d000ff 168px,#d900ff 174px,#e200ff 180px,#ec00ff 186px,#f500ff 192px,#ff00ff 198px,#ff00f6 204px,#ff00ed 210px,#ff00e5 216px,#ff00de 222px,#ff00d7 228px,#ff00d0 234px,#ff00ca 240px,#ff00c4 246px,#ff00be 252px,#ff00b9 258px,#ff00b3 264px,#ff00af 270px,#ff00aa 276px,#ff00a6 282px,#ff00a1 288px,#ff009d 294px,#ff009a 300px,#ff0096 306px,#ff0092 312px,#ff008f 318px,#ff008c 324px,#ff0089 330px)"></div><div style="height:2px;background:linear-gradient(90deg,#0045ff 0px,#0043ff 6px,#0040ff 12px,#003eff 18px,#003cff 24px,#0039ff 30px,#0637ff 36px,#0f35ff 42px,#1832ff 48px,#2230ff 54px,#2b2dff 60px,#342bff 66px,#3d29ff 72px,#4526ff 78px,#4e24ff 84px,#5721ff 90px,#601eff 96px,#691cff 102px,#7219ff 108px,#7b17ff 114px,#8414ff 120px,#8d11ff 126px,#960fff 132px,#9f0cff 138px,#a809ff 144px,#b106ff 150px,#bb03ff 156px,#c400ff 162px,#cd00ff 168px,#d600ff 174px,#e000ff 180px,#e900ff 186px,#f200ff 192px,#fc00ff 198px,#ff00f9 204px,#ff00f0 210px,#ff00e8 216px,#ff00e1 222px,#ff00d9 228px,#ff00d3 234px,#ff00cc 240px,#ff00c6 246px,#ff00c0 252px,#ff00bb 258px,#ff00b6 264px,#ff00b1 270px,#ff00ac 276px,#ff00a8 282px,#ff00a3 288px,#ff009f 294px,#ff009b 300px,#ff0098 306px,#ff0094 312px,#ff0091 318px,#ff008d 324px,#ff008a 330px)"></div><div style="height:2px;background:linear-gradient(90deg,#0043ff 0px,#0041ff 6px,#003fff 12px,#003dff 18px,#003aff 24px,#0038ff 30px,#0536ff 36px,#0f33ff 42px,#1831ff 48px,#212fff 54px,#2a2cff 60px,#332aff 66px,#3b27ff 72px,#4425ff 78px,#4d22ff 84px,#5620ff 90px,#5f1dff 96px,#681bff 102px,#7118ff 108px,#7916ff 114px,#8213ff 120px,#8b10ff 126px,#940dff 132px,#9d0bff 138px,#a608ff 144px,#af05ff 150px,#b802ff 156px,#c100ff 162px,#ca00ff 168px,#d400ff 174px,#dd00ff 180px,#e600ff 186px,#ef00ff 192px,#f900ff 198px,#ff00fc 204px,#ff00f3 210px,#ff00eb 216px,#ff00e3 222px,#ff00dc 228px,#ff00d5 234px,#ff00cf 240px,#ff00c8 246px,#ff00c3 252px,#ff00bd 258px,#ff00b8 264px,#ff00b3 270px,#ff00ae 276px,#ff00aa 282px,#ff00a5 288px,#ff00a1 294px,#ff009d 300px,#ff009a 306px,#ff0096 312px,#ff0093 318px,#ff008f 324px,#ff008c 330px)"></div><div style="height:2px;background:linear-gradient(90deg,#0042ff 0px,#0040ff 6px,#003dff 12px,#003bff 18px,#0039ff 24px,#0037ff 30px,#0534ff 36px,#0e32ff 42px,#1730ff 48px,#202dff 54px,#292bff 60px,#3229ff 66px,#3a26ff 72px,#4324ff 78px,#4c21ff 84px,#551fff 90px,#5d1cff 96px,#661aff 102px,#6f17ff 108px,#7814ff 114px,#8112ff 120px,#890fff 126px,#920cff 132px,#9b0aff 138px,#a407ff 144px,#ad04ff 150px,#b601ff 156px,#bf00ff 162px,#c800ff 168px,#d100ff 174px,#da00ff 180px,#e300ff 186px,#ec00ff 192px,#f500ff 198px,#ff00ff 204px,#ff00f6 210px,#ff00ee 216px,#ff00e6 222px,#ff00df 228px,#ff00d8 234px,#ff00d1 240px,#ff00cb 246px,#ff00c5 252px,#ff00bf 258px,#ff00ba 264px,#ff00b5 270px,#ff00b0 276px,#ff00ac 282px,#ff00a7 288px,#ff00a3 294px,#ff009f 300px,#ff009b 306px,#ff0098 312px,#ff0094 318px,#ff0091 324px,#ff008e 330px)"></div><div style="height:2px;background:linear-gradient(90deg,#0041ff 0px,#003eff 6px,#003cff 12px,#003aff 18px,#0038ff 24px,#0035ff 30px,#0433ff 36px,#0d31ff 42px,#162eff 48px,#1f2cff 54px,#282aff 60px,#3127ff 66px,#3925ff 72px,#4223ff 78px,#4b20ff 84px,#531eff 90px,#5c1bff 96px,#6519ff 102px,#6d16ff 108px,#7613ff 114px,#7f11ff 120px,#880eff 126px,#900bff 132px,#9909ff 138px,#a206ff 144px,#ab03ff 150px,#b400ff 156px,#bd00ff 162px,#c500ff 168px,#ce00ff 174px,#d700ff 180px,#e000ff 186px,#e900ff 192px,#f300ff 198px,#fc00ff 204px,#ff00f9 210px,#ff00f1 216px,#ff00e9 222px,#ff00e1 228px,#ff00da 234px,#ff00d4 240px,#ff00cd 246px,#ff00c7 252px,#ff00c2 258px,#ff00bc 264px,#ff00b7 270px,#ff00b2 276px,#ff00ae 282px,#ff00a9 288px,#ff00a5 294px,#ff00a1 300px,#ff009d 306px,#ff009a 312px,#ff0096 318px,#ff0093 324px,#ff008f 330px)"></div><div style="height:2px;background:linear-gradient(90deg,#003fff 0px,#003dff 6px,#003bff 12px,#0039ff 18px,#0036ff 24px,#0034ff 30px,#0332ff 36px,#0d30ff 42px,#162dff 48px,#1e2bff 54px,#2729ff 60px,#3026ff 66px,#3824ff 72px,#4121ff 78px,#4a1fff 84px,#521cff 90px,#5b1aff 96px,#6317ff 102px,#6c15ff 108px,#7512ff 114px,#7d10ff 120px,#860dff 126px,#8e0aff 132px,#9708ff 138px,#a005ff 144px,#a902ff 150px,#b100ff 156px,#ba00ff 162px,#c300ff 168px,#cc00ff 174px,#d500ff 180px,#de00ff 186px,#e700ff 192px,#f000ff 198px,#f900ff 204px,#ff00fc 210px,#ff00f4 216px,#ff00ec 222px,#ff00e4 228px,#ff00dd 234px,#ff00d6 240px,#ff00d0 246px,#ff00ca 252px,#ff00c4 258px,#ff00bf 264px,#ff00ba 270px,#ff00b5 276px,#ff00b0 282px,#ff00ab 288px,#ff00a7 294px,#ff00a3 300px,#ff009f 306px,#ff009c 312px,#ff0098 318px,#ff0094 324px,#ff0091 330px)"></div><div style="height:2px;background:linear-gradient(90deg,#003eff 0px,#003cff 6px,#003aff 12px,#0037ff 18px,#0035ff 24px,#0033ff 30px,#0331ff 36px,#0c2eff 42px,#152cff 48px,#1e2aff 54px,#2627ff 60px,#2f25ff 66px,#3723ff 72px,#4020ff 78px,#481eff 84px,#511bff 90px,#5919ff 96px,#6216ff 102px,#6a14ff 108px,#7311ff 114px,#7c0fff 120px,#840cff 126px,#8d09ff 132px,#9507ff 138px,#9e04ff 144px,#a701ff 150px,#af00ff 156px,#b800ff 162px,#c100ff 168px,#c900ff 174px,#d200ff 180px,#db00ff 186px,#e400ff 192px,#ed00ff 198px,#f600ff 204px,#ff00ff 210px,#ff00f7 216px,#ff00ee 222px,#ff00e7 228px,#ff00e0 234px,#ff00d9 240px,#ff00d2 246px,#ff00cc 252px,#ff00c6 258px,#ff00c1 264px,#ff00bc 270px,#ff00b7 276px,#ff00b2 282px,#ff00ad 288px,#ff00a9 294px,#ff00a5 300px,#ff00a1 306px,#ff009d 312px,#ff009a 318px,#ff0096 324px,#ff0093 330px)"></div><div style="height:2px;background:linear-gradient(90deg,#003dff 0px,#003aff 6px,#0038ff 12px,#0036ff 18px,#0034ff 24px,#0032ff 30px,#022fff 36px,#0b2dff 42px,#142bff 48px,#1d29ff 54px,#2526ff 60px,#2e24ff 66px,#3621ff 72px,#3f1fff 78px,#471dff 84px,#501aff 90px,#5818ff 96px,#6115ff 102px,#6913ff 108px,#7110ff 114px,#7a0eff 120px,#820bff 126px,#8b08ff 132px,#9306ff 138px,#9c03ff 144px,#a400ff 150px,#ad00ff 156px,#b600ff 162px,#be00ff 168px,#c700ff 174px,#d000ff 180px,#d800ff 186px,#e100ff 192px,#ea00ff 198px,#f300ff 204px,#fc00ff 210px,#ff00fa 216px,#ff00f1 222px,#ff00e9 228px,#ff00e2 234px,#ff00db 240px,#ff00d5 246px,#ff00cf 252px,#ff00c9 258px,#ff00c3 264px,#ff00be 270px,#ff00b9 276px,#ff00b4 282px,#ff00b0 288px,#ff00ab 294px,#ff00a7 300px,#ff00a3 306px,#ff009f 312px,#ff009c 318px,#ff0098 324px,#ff0095 330px)"></div><div style="height:2px;background:linear-gradient(90deg,#003bff 0px,#0039ff 6px,#0037ff 12px,#0035ff 18px,#0033ff 24px,#0030ff 30px,#022eff 36px,#0b2cff 42px,#142aff 48px,#1c27ff 54px,#2525ff 60px,#2d23ff 66px,#3520ff 72px,#3e1eff 78px,#461cff 84px,#4f19ff 90px,#5717ff 96px,#5f14ff 102px,#6812ff 108px,#700fff 114px,#780dff 120px,#810aff 126px,#8907ff 132px,#9205ff 138px,#9a02ff 144px,#a200ff 150px,#ab00ff 156px,#b300ff 162px,#bc00ff 168px,#c500ff 174px,#cd00ff 180px,#d600ff 186px,#df00ff 192px,#e700ff 198px,#f000ff 204px,#f900ff 210px,#ff00fc 216px,#ff00f4 222px,#ff00ec 228px,#ff00e5 234px,#ff00de 240px,#ff00d7 246px,#ff00d1 252px,#ff00cb 258px,#ff00c5 264px,#ff00c0 270px,#ff00bb 276px,#ff00b6 282px,#ff00b2 288px,#ff00ad 294px,#ff00a9 300px,#ff00a5 306px,#ff00a1 312px,#ff009d 318px,#ff009a 324px,#ff0096 330px)"></div><div style="height:2px;background:linear-gradient(90deg,#003aff 0px,#0038ff 6px,#0036ff 12px,#0034ff 18px,#0031ff 24px,#002fff 30px,#012dff 36px,#0a2bff 42px,#1328ff 48px,#1c26ff 54px,#2424ff 60px,#2c22ff 66px,#351fff 72px,#3d1dff 78px,#451bff 84px,#4d18ff 90px,#5616ff 96px,#5e13ff 102px,#6611ff 108px,#6e0eff 114px,#770cff 120px,#7f09ff 126px,#8707ff 132px,#9004ff 138px,#9801ff 144px,#a100ff 150px,#a900ff 156px,#b100ff 162px,#ba00ff 168px,#c200ff 174px,#cb00ff 180px,#d300ff 186px,#dc00ff 192px,#e500ff 198px,#ed00ff 204px,#f600ff 210px,#ff00ff 216px,#ff00f7 222px,#ff00ef 228px,#ff00e7 234px,#ff00e0 240px,#ff00da 246px,#ff00d3 252px,#ff00cd 258px,#ff00c8 264px,#ff00c2 270px,#ff00bd 276px,#ff00b8 282px,#ff00b4 288px,#ff00af 294px,#ff00ab 300px,#ff00a7 306px,#ff00a3 312px,#ff009f 318px,#ff009c 324px,#ff0098 330px)"></div><div style="height:2px;background:linear-gradient(90deg,#0039ff 0px,#0037ff 6px,#0034ff 12px,#0032ff 18px,#0030ff 24px,#002eff 30px,#012cff 36px,#0a2aff 42px,#1227ff 48px,#1b25ff 54px,#2323ff 60px,#2b21ff 66px,#341eff 72px,#3c1cff 78px,#441aff 84px,#4c17ff 90px,#5415ff 96px,#5d12ff 102px,#6510ff 108px,#6d0dff 114px,#750bff 120px,#7d08ff 126px,#8606ff 132px,#8e03ff 138px,#9600ff 144px,#9f00ff 150px,#a700ff 156px,#af00ff 162px,#b800ff 168px,#c000ff 174px,#c800ff 180px,#d100ff 186px,#d900ff 192px,#e200ff 198px,#eb00ff 204px,#f300ff 210px,#fc00ff 216px,#ff00fa 222px,#ff00f2 228px,#ff00ea 234px,#ff00e3 240px,#ff00dc 246px,#ff00d6 252px,#ff00d0 258px,#ff00ca 264px,#ff00c5 270px,#ff00bf 276px,#ff00ba 282px,#ff00b6 288px,#ff00b1 294px,#ff00ad 300px,#ff00a9 306px,#ff00a5 312px,#ff00a1 318px,#ff009d 324px,#ff009a 330px)"></div><div style="height:2px;background:linear-gradient(90deg,#0038ff 0px,#0035ff 6px,#0033ff 12px,#0031ff 18px,#002fff 24px,#002dff 30px,#002bff 36px,#0928ff 42px,#1226ff 48px,#1a24ff 54px,#2222ff 60px,#2b1fff 66px,#331dff 72px,#3b1bff 78px,#4319ff 84px,#4b16ff 90px,#5314ff 96px,#5b11ff 102px,#630fff 108px,#6c0cff 114px,#740aff 120px,#7c07ff 126px,#8405ff 132px,#8c02ff 138px,#9400ff 144px,#9d00ff 150px,#a500ff 156px,#ad00ff 162px,#b500ff 168px,#be00ff 174px,#c600ff 180px,#cf00ff 186px,#d700ff 192px,#df00ff 198px,#e800ff 204px,#f000ff 210px,#f900ff 216px,#ff00fd 222px,#ff00f4 228px,#ff00ed 234px,#ff00e6 240px,#ff00df 246px,#ff00d8 252px,#ff00d2 258px,#ff00cc 264px,#ff00c7 270px,#ff00c1 276px,#ff00bc 282px,#ff00b8 288px,#ff00b3 294px,#ff00af 300px,#ff00ab 306px,#ff00a7 312px,#ff00a3 318px,#ff009f 324px,#ff009c 330px)"></div><div style="height:2px;background:linear-gradient(90deg,#0036ff 0px,#0034ff 6px,#0032ff 12px,#0030ff 18px,#002eff 24px,#002cff 30px,#002aff 36px,#0927ff 42px,#1125ff 48px,#1923ff 54px,#2221ff 60px,#2a1eff 66px,#321cff 72px,#3a1aff 78px,#4218ff 84px,#4a15ff 90px,#5213ff 96px,#5a10ff 102px,#620eff 108px,#6a0bff 114px,#7209ff 120px,#7a06ff 126px,#8204ff 132px,#8b01ff 138px,#9300ff 144px,#9b00ff 150px,#a300ff 156px,#ab00ff 162px,#b300ff 168px,#bc00ff 174px,#c400ff 180px,#cc00ff 186px,#d500ff 192px,#dd00ff 198px,#e500ff 204px,#ee00ff 210px,#f600ff 216px,#ff00ff 222px,#ff00f7 228px,#ff00ef 234px,#ff00e8 240px,#ff00e1 246px,#ff00db 252px,#ff00d4 258px,#ff00cf 264px,#ff00c9 270px,#ff00c4 276px,#ff00bf 282px,#ff00ba 288px,#ff00b5 294px,#ff00b1 300px,#ff00ad 306px,#ff00a8 312px,#ff00a5 318px,#ff00a1 324px,#ff009d 330px)"></div><div style="height:2px;background:linear-gradient(90deg,#0035ff 0px,#0033ff 6px,#0031ff 12px,#002fff 18px,#002dff 24px,#002bff 30px,#0028ff 36px,#0826ff 42px,#1124ff 48px,#1922ff 54px,#2120ff 60px,#291dff 66px,#311bff 72px,#3919ff 78px,#4117ff 84px,#4914ff 90px,#5112ff 96px,#590fff 102px,#610dff 108px,#690bff 114px,#7108ff 120px,#7905ff 126px,#8103ff 132px,#8900ff 138px,#9100ff 144px,#9900ff 150px,#a100ff 156px,#a900ff 162px,#b100ff 168px,#b900ff 174px,#c200ff 180px,#ca00ff 186px,#d200ff 192px,#da00ff 198px,#e300ff 204px,#eb00ff 210px,#f300ff 216px,#fc00ff 222px,#ff00fa 228px,#ff00f2 234px,#ff00eb 240px,#ff00e4 246px,#ff00dd 252px,#ff00d7 258px,#ff00d1 264px,#ff00cb 270px,#ff00c6 276px,#ff00c1 282px,#ff00bc 288px,#ff00b7 294px,#ff00b3 300px,#ff00ae 306px,#ff00aa 312px,#ff00a6 318px,#ff00a3 324px,#ff009f 330px)"></div><div style="height:2px;background:linear-gradient(90deg,#0034ff 0px,#0032ff 6px,#0030ff 12px,#002eff 18px,#002cff 24px,#002aff 30px,#0027ff 36px,#0825ff 42px,#1023ff 48px,#1821ff 54px,#201fff 60px,#281cff 66px,#301aff 72px,#3818ff 78px,#4016ff 84px,#4813ff 90px,#5011ff 96px,#580eff 102px,#600cff 108px,#670aff 114px,#6f07ff 120px,#7705ff 126px,#7f02ff 132px,#8700ff 138px,#8f00ff 144px,#9700ff 150px,#9f00ff 156px,#a700ff 162px,#af00ff 168px,#b700ff 174px,#bf00ff 180px,#c800ff 186px,#d000ff 192px,#d800ff 198px,#e000ff 204px,#e800ff 210px,#f100ff 216px,#f900ff 222px,#ff00fd 228px,#ff00f5 234px,#ff00ed 240px,#ff00e6 246px,#ff00df 252px,#ff00d9 258px,#ff00d3 264px,#ff00cd 270px,#ff00c8 276px,#ff00c3 282px,#ff00be 288px,#ff00b9 294px,#ff00b5 300px,#ff00b0 306px,#ff00ac 312px,#ff00a8 318px,#ff00a4 324px,#ff00a1 330px)"></div><div style="height:2px;background:linear-gradient(90deg,#0033ff 0px,#0031ff 6px,#002fff 12px,#002dff 18px,#002bff 24px,#0028ff 30px,#0026ff 36px,#0724ff 42px,#0f22ff 48px,#1720ff 54px,#1f1eff 60px,#271bff 66px,#2f19ff 72px,#3717ff 78px,#3f15ff 84px,#4712ff 90px,#4f10ff 96px,#560eff 102px,#5e0bff 108px,#6609ff 114px,#6e06ff 120px,#7604ff 126px,#7e01ff 132px,#8600ff 138px,#8e00ff 144px,#9500ff 150px,#9d00ff 156px,#a500ff 162px,#ad00ff 168px,#b500ff 174px,#bd00ff 180px,#c500ff 186px,#cd00ff 192px,#d600ff 198px,#de00ff 204px,#e600ff 210px,#ee00ff 216px,#f600ff 222px,#ff00ff 228px,#ff00f7 234px,#ff00f0 240px,#ff00e9 246px,#ff00e2 252px,#ff00db 258px,#ff00d5 264px,#ff00d0 270px,#ff00ca 276px,#ff00c5 282px,#ff00c0 288px,#ff00bb 294px,#ff00b7 300px,#ff00b2 306px,#ff00ae 312px,#ff00aa 318px,#ff00a6 324px,#ff00a3 330px)"></div><div style="height:2px;background:linear-gradient(90deg,#0032ff 0px,#0030ff 6px,#002eff 12px,#002cff 18px,#0029ff 24px,#0027ff 30px,#0025ff 36px,#0723ff 42px,#0f21ff 48px,#171fff 54px,#1f1dff 60px,#271aff 66px,#2e18ff 72px,#3616ff 78px,#3e14ff 84px,#4611ff 90px,#4e0fff 96px,#550dff 102px,#5d0aff 108px,#6508ff 114px,#6d05ff 120px,#7403ff 126px,#7c00ff 132px,#8400ff 138px,#8c00ff 144px,#9400ff 150px,#9c00ff 156px,#a300ff 162px,#ab00ff 168px,#b300ff 174px,#bb00ff 180px,#c300ff 186px,#cb00ff 192px,#d300ff 198px,#db00ff 204px,#e300ff 210px,#eb00ff 216px,#f400ff 222px,#fc00ff 228px,#ff00fa 234px,#ff00f2 240px,#ff00eb 246px,#ff00e4 252px,#ff00de 258px,#ff00d8 264px,#ff00d2 270px,#ff00cc 276px,#ff00c7 282px,#ff00c2 288px,#ff00bd 294px,#ff00b9 300px,#ff00b4 306px,#ff00b0 312px,#ff00ac 318px,#ff00a8 324px,#ff00a4 330px)"></div><div style="height:2px;background:linear-gradient(90deg,#0031ff 0px,#002fff 6px,#002dff 12px,#002aff 18px,#0028ff 24px,#0026ff 30px,#0024ff 36px,#0622ff 42px,#0e20ff 48px,#161eff 54px,#1e1cff 60px,#2619ff 66px,#2e17ff 72px,#3515ff 78px,#3d13ff 84px,#4510ff 90px,#4d0eff 96px,#540cff 102px,#5c09ff 108px,#6407ff 114px,#6b04ff 120px,#7302ff 126px,#7b00ff 132px,#8200ff 138px,#8a00ff 144px,#9200ff 150px,#9a00ff 156px,#a200ff 162px,#a900ff 168px,#b100ff 174px,#b900ff 180px,#c100ff 186px,#c900ff 192px,#d100ff 198px,#d900ff 204px,#e100ff 210px,#e900ff 216px,#f100ff 222px,#f900ff 228px,#ff00fd 234px,#ff00f5 240px,#ff00ee 246px,#ff00e7 252px,#ff00e0 258px,#ff00da 264px,#ff00d4 270px,#ff00ce 276px,#ff00c9 282px,#ff00c4 288px,#ff00bf 294px,#ff00bb 300px,#ff00b6 306px,#ff00b2 312px,#ff00ae 318px,#ff00aa 324px,#ff00a6 330px)"></div><div style="height:2px;background:linear-gradient(90deg,#0030ff 0px,#002dff 6px,#002bff 12px,#0029ff 18px,#0027ff 24px,#0025ff 30px,#0023ff 36px,#0621ff 42px,#0e1fff 48px,#161dff 54px,#1d1bff 60px,#2518ff 66px,#2d16ff 72px,#3514ff 78px,#3c12ff 84px,#4410ff 90px,#4b0dff 96px,#530bff 102px,#5b09ff 108px,#6206ff 114px,#6a04ff 120px,#7201ff 126px,#7900ff 132px,#8100ff 138px,#8900ff 144px,#9000ff 150px,#9800ff 156px,#a000ff 162px,#a800ff 168px,#af00ff 174px,#b700ff 180px,#bf00ff 186px,#c700ff 192px,#cf00ff 198px,#d700ff 204px,#de00ff 210px,#e600ff 216px,#ee00ff 222px,#f600ff 228px,#fe00ff 234px,#ff00f8 240px,#ff00f0 246px,#ff00e9 252px,#ff00e3 258px,#ff00dc 264px,#ff00d6 270px,#ff00d1 276px,#ff00cb 282px,#ff00c6 288px,#ff00c1 294px,#ff00bd 300px,#ff00b8 306px,#ff00b4 312px,#ff00b0 318px,#ff00ac 324px,#ff00a8 330px)"></div><div style="height:2px;background:linear-gradient(90deg,#002eff 0px,#002cff 6px,#002aff 12px,#0028ff 18px,#0026ff 24px,#0024ff 30px,#0022ff 36px,#0520ff 42px,#0d1eff 48px,#151cff 54px,#1d1aff 60px,#2418ff 66px,#2c15ff 72px,#3413ff 78px,#3b11ff 84px,#430fff 90px,#4a0cff 96px,#520aff 102px,#5a08ff 108px,#6105ff 114px,#6903ff 120px,#7000ff 126px,#7800ff 132px,#7f00ff 138px,#8700ff 144px,#8f00ff 150px,#9600ff 156px,#9e00ff 162px,#a600ff 168px,#ad00ff 174px,#b500ff 180px,#bd00ff 186px,#c500ff 192px,#cc00ff 198px,#d400ff 204px,#dc00ff 210px,#e400ff 216px,#ec00ff 222px,#f400ff 228px,#fc00ff 234px,#ff00fa 240px,#ff00f3 246px,#ff00ec 252px,#ff00e5 258px,#ff00df 264px,#ff00d9 270px,#ff00d3 276px,#ff00cd 282px,#ff00c8 288px,#ff00c3 294px,#ff00be 300px,#ff00ba 306px,#ff00b6 312px,#ff00b1 318px,#ff00ad 324px,#ff00aa 330px)"></div><div style="height:2px;background:linear-gradient(90deg,#002dff 0px,#002bff 6px,#0029ff 12px,#0027ff 18px,#0025ff 24px,#0023ff 30px,#0021ff 36px,#051fff 42px,#0d1dff 48px,#141bff 54px,#1c19ff 60px,#2417ff 66px,#2b14ff 72px,#3312ff 78px,#3a10ff 84px,#420eff 90px,#490bff 96px,#5109ff 102px,#5807ff 108px,#6004ff 114px,#6702ff 120px,#6f00ff 126px,#7600ff 132px,#7e00ff 138px,#8600ff 144px,#8d00ff 150px,#9500ff 156px,#9c00ff 162px,#a400ff 168px,#ac00ff 174px,#b300ff 180px,#bb00ff 186px,#c300ff 192px,#ca00ff 198px,#d200ff 204px,#da00ff 210px,#e200ff 216px,#e900ff 222px,#f100ff 228px,#f900ff 234px,#ff00fd 240px,#ff00f5 246px,#ff00ee 252px,#ff00e7 258px,#ff00e1 264px,#ff00db 270px,#ff00d5 276px,#ff00d0 282px,#ff00ca 288px,#ff00c5 294px,#ff00c0 300px,#ff00bc 306px,#ff00b7 312px,#ff00b3 318px,#ff00af 324px,#ff00ab 330px)"></div><div style="height:2px;background:linear-gradient(90deg,#002cff 0px,#002aff 6px,#0028ff 12px,#0026ff 18px,#0024ff 24px,#0022ff 30px,#0020ff 36px,#041eff 42px,#0c1cff 48px,#141aff 54px,#1c18ff 60px,#2316ff 66px,#2b14ff 72px,#3211ff 78px,#3a0fff 84px,#410dff 90px,#480bff 96px,#5008ff 102px,#5706ff 108px,#5f04ff 114px,#6601ff 120px,#6e00ff 126px,#7500ff 132px,#7d00ff 138px,#8400ff 144px,#8b00ff 150px,#9300ff 156px,#9b00ff 162px,#a200ff 168px,#aa00ff 174px,#b100ff 180px,#b900ff 186px,#c000ff 192px,#c800ff 198px,#d000ff 204px,#d800ff 210px,#df00ff 216px,#e700ff 222px,#ef00ff 228px,#f700ff 234px,#fe00ff 240px,#ff00f8 246px,#ff00f1 252px,#ff00ea 258px,#ff00e3 264px,#ff00dd 270px,#ff00d7 276px,#ff00d2 282px,#ff00cc 288px,#ff00c7 294px,#ff00c2 300px,#ff00be 306px,#ff00b9 312px,#ff00b5 318px,#ff00b1 324px,#ff00ad 330px)"></div><div style="height:2px;background:linear-gradient(90deg,#002bff 0px,#0029ff 6px,#0027ff 12px,#0025ff 18px,#0023ff 24px,#0021ff 30px,#001fff 36px,#041dff 42px,#0c1bff 48px,#1319ff 54px,#1b17ff 60px,#2215ff 66px,#2a13ff 72px,#3110ff 78px,#390eff 84px,#400cff 90px,#470aff 96px,#4f07ff 102px,#5605ff 108px,#5e03ff 114px,#6500ff 120px,#6c00ff 126px,#7400ff 132px,#7b00ff 138px,#8200ff 144px,#8a00ff 150px,#9100ff 156px,#9900ff 162px,#a000ff 168px,#a800ff 174px,#af00ff 180px,#b700ff 186px,#be00ff 192px,#c600ff 198px,#ce00ff 204px,#d500ff 210px,#dd00ff 216px,#e500ff 222px,#ec00ff 228px,#f400ff 234px,#fc00ff 240px,#ff00fa 246px,#ff00f3 252px,#ff00ec 258px,#ff00e6 264px,#ff00df 270px,#ff00d9 276px,#ff00d4 282px,#ff00ce 288px,#ff00c9 294px,#ff00c4 300px,#ff00c0 306px,#ff00bb 312px,#ff00b7 318px,#ff00b3 324px,#ff00af 330px)"></div><div style="height:2px;background:linear-gradient(90deg,#002aff 0px,#0028ff 6px,#0026ff 12px,#0024ff 18px,#0022ff 24px,#0020ff 30px,#001eff 36px,#031cff 42px,#0b1aff 48px,#1318ff 54px,#1a16ff 60px,#2214ff 66px,#2912ff 72px,#3010ff 78px,#380dff 84px,#3f0bff 90px,#4609ff 96px,#4e07ff 102px,#5504ff 108px,#5c02ff 114px,#6400ff 120px,#6b00ff 126px,#7200ff 132px,#7a00ff 138px,#8100ff 144px,#8800ff 150px,#9000ff 156px,#9700ff 162px,#9f00ff 168px,#a600ff 174px,#ad00ff 180px,#b500ff 186px,#bc00ff 192px,#c400ff 198px,#cc00ff 204px,#d300ff 210px,#db00ff 216px,#e200ff 222px,#ea00ff 228px,#f200ff 234px,#f900ff 240px,#ff00fd 246px,#ff00f6 252px,#ff00ef 258px,#ff00e8 264px,#ff00e2 270px,#ff00dc 276px,#ff00d6 282px,#ff00d1 288px,#ff00cb 294px,#ff00c6 300px,#ff00c2 306px,#ff00bd 312px,#ff00b9 318px,#ff00b5 324px,#ff00b1 330px)"></div><div style="height:2px;background:linear-gradient(90deg,#0029ff 0px,#0027ff 6px,#0025ff 12px,#0023ff 18px,#0021ff 24px,#001fff 30px,#001dff 36px,#031bff 42px,#0b19ff 48px,#1217ff 54px,#1a15ff 60px,#2113ff 66px,#2811ff 72px,#300fff 78px,#370dff 84px,#3e0aff 90px,#4508ff 96px,#4d06ff 102px,#5403ff 108px,#5b01ff 114px,#6200ff 120px,#6a00ff 126px,#7100ff 132px,#7800ff 138px,#8000ff 144px,#8700ff 150px,#8e00ff 156px,#9600ff 162px,#9d00ff 168px,#a400ff 174px,#ac00ff 180px,#b300ff 186px,#ba00ff 192px,#c200ff 198px,#c900ff 204px,#d100ff 210px,#d800ff 216px,#e000ff 222px,#e800ff 228px,#ef00ff 234px,#f700ff 240px,#fe00ff 246px,#ff00f8 252px,#ff00f1 258px,#ff00ea 264px,#ff00e4 270px,#ff00de 276px,#ff00d8 282px,#ff00d3 288px,#ff00cd 294px,#ff00c8 300px,#ff00c4 306px,#ff00bf 312px,#ff00bb 318px,#ff00b6 324px,#ff00b2 330px)"></div><div style="height:2px;background:linear-gradient(90deg,#0028ff 0px,#0026ff 6px,#0024ff 12px,#0023ff 18px,#0021ff 24px,#001fff 30px,#001dff 36px,#021bff 42px,#0a18ff 48px,#1216ff 54px,#1914ff 60px,#2012ff 66px,#2810ff 72px,#2f0eff 78px,#360cff 84px,#3d0aff 90px,#4507ff 96px,#4c05ff 102px,#5303ff 108px,#5a00ff 114px,#6100ff 120px,#6900ff 126px,#7000ff 132px,#7700ff 138px,#7e00ff 144px,#8500ff 150px,#8d00ff 156px,#9400ff 162px,#9b00ff 168px,#a300ff 174px,#aa00ff 180px,#b100ff 186px,#b900ff 192px,#c000ff 198px,#c700ff 204px,#cf00ff 210px,#d600ff 216px,#de00ff 222px,#e500ff 228px,#ed00ff 234px,#f400ff 240px,#fc00ff 246px,#ff00fb 252px,#ff00f3 258px,#ff00ed 264px,#ff00e6 270px,#ff00e0 276px,#ff00da 282px,#ff00d5 288px,#ff00cf 294px,#ff00ca 300px,#ff00c6 306px,#ff00c1 312px,#ff00bd 318px,#ff00b8 324px,#ff00b4 330px)"></div><div style="height:2px;background:linear-gradient(90deg,#0027ff 0px,#0025ff 6px,#0024ff 12px,#0022ff 18px,#0020ff 24px,#001eff 30px,#001cff 36px,#021aff 42px,#0a18ff 48px,#1116ff 54px,#1813ff 60px,#2011ff 66px,#270fff 72px,#2e0dff 78px,#350bff 84px,#3c09ff 90px,#4407ff 96px,#4b04ff 102px,#5202ff 108px,#5900ff 114px,#6000ff 120px,#6700ff 126px,#6e00ff 132px,#7600ff 138px,#7d00ff 144px,#8400ff 150px,#8b00ff 156px,#9200ff 162px,#9a00ff 168px,#a100ff 174px,#a800ff 180px,#af00ff 186px,#b700ff 192px,#be00ff 198px,#c500ff 204px,#cd00ff 210px,#d400ff 216px,#db00ff 222px,#e300ff 228px,#ea00ff 234px,#f200ff 240px,#f900ff 246px,#ff00fd 252px,#ff00f6 258px,#ff00ef 264px,#ff00e9 270px,#ff00e2 276px,#ff00dc 282px,#ff00d7 288px,#ff00d2 294px,#ff00cc 300px,#ff00c8 306px,#ff00c3 312px,#ff00be 318px,#ff00ba 324px,#ff00b6 330px)"></div><div style="height:2px;background:linear-gradient(90deg,#0026ff 0px,#0025ff 6px,#0023ff 12px,#0021ff 18px,#001fff 24px,#001dff 30px,#001bff 36px,#0119ff 42px,#0917ff 48px,#1115ff 54px,#1813ff 60px,#1f11ff 66px,#260eff 72px,#2d0cff 78px,#350aff 84px,#3c08ff 90px,#4306ff 96px,#4a03ff 102px,#5101ff 108px,#5800ff 114px,#5f00ff 120px,#6600ff 126px,#6d00ff 132px,#7400ff 138px,#7b00ff 144px,#8300ff 150px,#8a00ff 156px,#9100ff 162px,#9800ff 168px,#9f00ff 174px,#a600ff 180px,#ae00ff 186px,#b500ff 192px,#bc00ff 198px,#c300ff 204px,#cb00ff 210px,#d200ff 216px,#d900ff 222px,#e100ff 228px,#e800ff 234px,#ef00ff 240px,#f700ff 246px,#fe00ff 252px,#ff00f8 258px,#ff00f1 264px,#ff00eb 270px,#ff00e5 276px,#ff00df 282px,#ff00d9 288px,#ff00d4 294px,#ff00ce 300px,#ff00ca 306px,#ff00c5 312px,#ff00c0 318px,#ff00bc 324px,#ff00b8 330px)"></div><div style="height:2px;background:linear-gradient(90deg,#0025ff 0px,#0024ff 6px,#0022ff 12px,#0020ff 18px,#001eff 24px,#001cff 30px,#001aff 36px,#0118ff 42px,#0916ff 48px,#1014ff 54px,#1712ff 60px,#1e10ff 66px,#260eff 72px,#2d0cff 78px,#3409ff 84px,#3b07ff 90px,#4205ff 96px,#4903ff 102px,#5000ff 108px,#5700ff 114px,#5e00ff 120px,#6500ff 126px,#6c00ff 132px,#7300ff 138px,#7a00ff 144px,#8100ff 150px,#8800ff 156px,#8f00ff 162px,#9600ff 168px,#9e00ff 174px,#a500ff 180px,#ac00ff 186px,#b300ff 192px,#ba00ff 198px,#c100ff 204px,#c900ff 210px,#d000ff 216px,#d700ff 222px,#de00ff 228px,#e600ff 234px,#ed00ff 240px,#f400ff 246px,#fc00ff 252px,#ff00fb 258px,#ff00f4 264px,#ff00ed 270px,#ff00e7 276px,#ff00e1 282px,#ff00db 288px,#ff00d6 294px,#ff00d0 300px,#ff00cb 306px,#ff00c7 312px,#ff00c2 318px,#ff00be 324px,#ff00ba 330px)"></div><div style="height:2px;background:linear-gradient(90deg,#0025ff 0px,#0023ff 6px,#0021ff 12px,#001fff 18px,#001dff 24px,#001bff 30px,#0019ff 36px,#0017ff 42px,#0815ff 48px,#1013ff 54px,#1711ff 60px,#1e0fff 66px,#250dff 72px,#2c0bff 78px,#3309ff 84px,#3a06ff 90px,#4104ff 96px,#4802ff 102px,#4f00ff 108px,#5600ff 114px,#5d00ff 120px,#6400ff 126px,#6b00ff 132px,#7200ff 138px,#7900ff 144px,#8000ff 150px,#8700ff 156px,#8e00ff 162px,#9500ff 168px,#9c00ff 174px,#a300ff 180px,#aa00ff 186px,#b100ff 192px,#b800ff 198px,#bf00ff 204px,#c700ff 210px,#ce00ff 216px,#d500ff 222px,#dc00ff 228px,#e400ff 234px,#eb00ff 240px,#f200ff 246px,#f900ff 252px,#ff00fd 258px,#ff00f6 264px,#ff00ef 270px,#ff00e9 276px,#ff00e3 282px,#ff00dd 288px,#ff00d8 294px,#ff00d2 300px,#ff00cd 306px,#ff00c9 312px,#ff00c4 318px,#ff00c0 324px,#ff00bb 330px)"></div><div style="height:2px;background:linear-gradient(90deg,#0024ff 0px,#0022ff 6px,#0020ff 12px,#001eff 18px,#001cff 24px,#001aff 30px,#0018ff 36px,#0016ff 42px,#0814ff 48px,#0f12ff 54px,#1610ff 60px,#1d0eff 66px,#240cff 72px,#2b0aff 78px,#3208ff 84px,#3906ff 90px,#4003ff 96px,#4701ff 102px,#4e00ff 108px,#5500ff 114px,#5c00ff 120px,#6300ff 126px,#6a00ff 132px,#7000ff 138px,#7700ff 144px,#7e00ff 150px,#8500ff 156px,#8c00ff 162px,#9300ff 168px,#9a00ff 174px,#a100ff 180px,#a800ff 186px,#af00ff 192px,#b600ff 198px,#be00ff 204px,#c500ff 210px,#cc00ff 216px,#d300ff 222px,#da00ff 228px,#e100ff 234px,#e900ff 240px,#f000ff 246px,#f700ff 252px,#fe00ff 258px,#ff00f9 264px,#ff00f2 270px,#ff00eb 276px,#ff00e5 282px,#ff00df 288px,#ff00da 294px,#ff00d4 300px,#ff00cf 306px,#ff00cb 312px,#ff00c6 318px,#ff00c1 324px,#ff00bd 330px)"></div><div style="height:2px;background:linear-gradient(90deg,#0023ff 0px,#0021ff 6px,#001fff 12px,#001dff 18px,#001bff 24px,#0019ff 30px,#0017ff 36px,#0015ff 42px,#0713ff 48px,#0f11ff 54px,#160fff 60px,#1d0dff 66px,#240bff 72px,#2b09ff 78px,#3107ff 84px,#3805ff 90px,#3f03ff 96px,#4600ff 102px,#4d00ff 108px,#5400ff 114px,#5b00ff 120px,#6200ff 126px,#6800ff 132px,#6f00ff 138px,#7600ff 144px,#7d00ff 150px,#8400ff 156px,#8b00ff 162px,#9200ff 168px,#9900ff 174px,#a000ff 180px,#a700ff 186px,#ae00ff 192px,#b500ff 198px,#bc00ff 204px,#c300ff 210px,#ca00ff 216px,#d100ff 222px,#d800ff 228px,#df00ff 234px,#e600ff 240px,#ed00ff 246px,#f500ff 252px,#fc00ff 258px,#ff00fb 264px,#ff00f4 270px,#ff00ee 276px,#ff00e7 282px,#ff00e2 288px,#ff00dc 294px,#ff00d7 300px,#ff00d1 306px,#ff00cc 312px,#ff00c8 318px,#ff00c3 324px,#ff00bf 330px)"></div><div style="height:2px;background:linear-gradient(90deg,#0022ff 0px,#0020ff 6px,#001eff 12px,#001cff 18px,#001aff 24px,#0018ff 30px,#0017ff 36px,#0015ff 42px,#0713ff 48px,#0e11ff 54px,#150fff 60px,#1c0dff 66px,#230bff 72px,#2a08ff 78px,#3106ff 84px,#3804ff 90px,#3e02ff 96px,#4500ff 102px,#4c00ff 108px,#5300ff 114px,#5a00ff 120px,#6000ff 126px,#6700ff 132px,#6e00ff 138px,#7500ff 144px,#7c00ff 150px,#8300ff 156px,#8900ff 162px,#9000ff 168px,#9700ff 174px,#9e00ff 180px,#a500ff 186px,#ac00ff 192px,#b300ff 198px,#ba00ff 204px,#c100ff 210px,#c800ff 216px,#cf00ff 222px,#d600ff 228px,#dd00ff 234px,#e400ff 240px,#eb00ff 246px,#f200ff 252px,#fa00ff 258px,#ff00fd 264px,#ff00f6 270px,#ff00f0 276px,#ff00ea 282px,#ff00e4 288px,#ff00de 294px,#ff00d9 300px,#ff00d3 306px,#ff00ce 312px,#ff00ca 318px,#ff00c5 324px,#ff00c1 330px)"></div><div style="height:2px;background:linear-gradient(90deg,#0021ff 0px,#001fff 6px,#001dff 12px,#001bff 18px,#001aff 24px,#0018ff 30px,#0016ff 36px,#0014ff 42px,#0612ff 48px,#0e10ff 54px,#150eff 60px,#1c0cff 66px,#220aff 72px,#2908ff 78px,#3006ff 84px,#3703ff 90px,#3e01ff 96px,#4400ff 102px,#4b00ff 108px,#5200ff 114px,#5900ff 120px,#5f00ff 126px,#6600ff 132px,#6d00ff 138px,#7400ff 144px,#7a00ff 150px,#8100ff 156px,#8800ff 162px,#8f00ff 168px,#9600ff 174px,#9d00ff 180px,#a300ff 186px,#aa00ff 192px,#b100ff 198px,#b800ff 204px,#bf00ff 210px,#c600ff 216px,#cd00ff 222px,#d400ff 228px,#db00ff 234px,#e200ff 240px,#e900ff 246px,#f000ff 252px,#f700ff 258px,#fe00ff 264px,#ff00f9 270px,#ff00f2 276px,#ff00ec 282px,#ff00e6 288px,#ff00e0 294px,#ff00db 300px,#ff00d5 306px,#ff00d0 312px,#ff00cc 318px,#ff00c7 324px,#ff00c3 330px)"></div><div style="height:2px;background:linear-gradient(90deg,#0020ff 0px,#001eff 6px,#001cff 12px,#001bff 18px,#0019ff 24px,#0017ff 30px,#0015ff 36px,#0013ff 42px,#0611ff 48px,#0d0fff 54px,#140dff 60px,#1b0bff 66px,#2209ff 72px,#2907ff 78px,#2f05ff 84px,#3603ff 90px,#3d00ff 96px,#4300ff 102px,#4a00ff 108px,#5100ff 114px,#5800ff 120px,#5e00ff 126px,#6500ff 132px,#6c00ff 138px,#7200ff 144px,#7900ff 150px,#8000ff 156px,#8700ff 162px,#8d00ff 168px,#9400ff 174px,#9b00ff 180px,#a200ff 186px,#a900ff 192px,#af00ff 198px,#b600ff 204px,#bd00ff 210px,#c400ff 216px,#cb00ff 222px,#d200ff 228px,#d900ff 234px,#e000ff 240px,#e700ff 246px,#ee00ff 252px,#f500ff 258px,#fc00ff 264px,#ff00fb 270px,#ff00f4 276px,#ff00ee 282px,#ff00e8 288px,#ff00e2 294px,#ff00dd 300px,#ff00d7 306px,#ff00d2 312px,#ff00cd 318px,#ff00c9 324px,#ff00c4 330px)"></div><div style="height:2px;background:linear-gradient(90deg,#001fff 0px,#001dff 6px,#001cff 12px,#001aff 18px,#0018ff 24px,#0016ff 30px,#0014ff 36px,#0012ff 42px,#0510ff 48px,#0d0eff 54px,#140cff 60px,#1a0aff 66px,#2108ff 72px,#2806ff 78px,#2f04ff 84px,#3502ff 90px,#3c00ff 96px,#4300ff 102px,#4900ff 108px,#5000ff 114px,#5700ff 120px,#5d00ff 126px,#6400ff 132px,#6b00ff 138px,#7100ff 144px,#7800ff 150px,#7f00ff 156px,#8500ff 162px,#8c00ff 168px,#9300ff 174px,#9900ff 180px,#a000ff 186px,#a700ff 192px,#ae00ff 198px,#b500ff 204px,#bb00ff 210px,#c200ff 216px,#c900ff 222px,#d000ff 228px,#d700ff 234px,#de00ff 240px,#e500ff 246px,#ec00ff 252px,#f300ff 258px,#fa00ff 264px,#ff00fd 270px,#ff00f7 276px,#ff00f0 282px,#ff00ea 288px,#ff00e4 294px,#ff00df 300px,#ff00d9 306px,#ff00d4 312px,#ff00cf 318px,#ff00cb 324px,#ff00c6 330px)"></div><div style="height:2px;background:linear-gradient(90deg,#001eff 0px,#001dff 6px,#001bff 12px,#0019ff 18px,#0017ff 24px,#0015ff 30px,#0013ff 36px,#0011ff 42px,#050fff 48px,#0c0eff 54px,#130cff 60px,#1a0aff 66px,#2108ff 72px,#2705ff 78px,#2e03ff 84px,#3501ff 90px,#3b00ff 96px,#4200ff 102px,#4800ff 108px,#4f00ff 114px,#5600ff 120px,#5c00ff 126px,#6300ff 132px,#6900ff 138px,#7000ff 144px,#7700ff 150px,#7d00ff 156px,#8400ff 162px,#8b00ff 168px,#9100ff 174px,#9800ff 180px,#9f00ff 186px,#a500ff 192px,#ac00ff 198px,#b300ff 204px,#ba00ff 210px,#c000ff 216px,#c700ff 222px,#ce00ff 228px,#d500ff 234px,#dc00ff 240px,#e300ff 246px,#e900ff 252px,#f000ff 258px,#f700ff 264px,#fe00ff 270px,#ff00f9 276px,#ff00f2 282px,#ff00ec 288px,#ff00e6 294px,#ff00e1 300px,#ff00db 306px,#ff00d6 312px,#ff00d1 318px,#ff00cd 324px,#ff00c8 330px)"></div><div style="height:2px;background:linear-gradient(90deg,#001eff 0px,#001cff 6px,#001aff 12px,#0018ff 18px,#0016ff 24px,#0014ff 30px,#0013ff 36px,#0011ff 42px,#050fff 48px,#0c0dff 54px,#130bff 60px,#1909ff 66px,#2007ff 72px,#2705ff 78px,#2d03ff 84px,#3400ff 90px,#3a00ff 96px,#4100ff 102px,#4700ff 108px,#4e00ff 114px,#5500ff 120px,#5b00ff 126px,#6200ff 132px,#6800ff 138px,#6f00ff 144px,#7500ff 150px,#7c00ff 156px,#8300ff 162px,#8900ff 168px,#9000ff 174px,#9600ff 180px,#9d00ff 186px,#a400ff 192px,#aa00ff 198px,#b100ff 204px,#b800ff 210px,#bf00ff 216px,#c500ff 222px,#cc00ff 228px,#d300ff 234px,#da00ff 240px,#e000ff 246px,#e700ff 252px,#ee00ff 258px,#f500ff 264px,#fc00ff 270px,#ff00fb 276px,#ff00f5 282px,#ff00ee 288px,#ff00e8 294px,#ff00e3 300px,#ff00dd 306px,#ff00d8 312px,#ff00d3 318px,#ff00ce 324px,#ff00ca 330px)"></div><div style="height:2px;background:linear-gradient(90deg,#001dff 0px,#001bff 6px,#0019ff 12px,#0017ff 18px,#0016ff 24px,#0014ff 30px,#0012ff 36px,#0010ff 42px,#040eff 48px,#0b0cff 54px,#120aff 60px,#1908ff 66px,#1f06ff 72px,#2604ff 78px,#2d02ff 84px,#3300ff 90px,#3a00ff 96px,#4000ff 102px,#4700ff 108px,#4d00ff 114px,#5400ff 120px,#5a00ff 126px,#6100ff 132px,#6700ff 138px,#6e00ff 144px,#7400ff 150px,#7b00ff 156px,#8100ff 162px,#8800ff 168px,#8e00ff 174px,#9500ff 180px,#9c00ff 186px,#a200ff 192px,#a900ff 198px,#af00ff 204px,#b600ff 210px,#bd00ff 216px,#c300ff 222px,#ca00ff 228px,#d100ff 234px,#d800ff 240px,#de00ff 246px,#e500ff 252px,#ec00ff 258px,#f300ff 264px,#fa00ff 270px,#ff00fd 276px,#ff00f7 282px,#ff00f1 288px,#ff00eb 294px,#ff00e5 300px,#ff00df 306px,#ff00da 312px,#ff00d5 318px,#ff00d0 324px,#ff00cc 330px)"></div><div style="height:2px;background:linear-gradient(90deg,#001cff 0px,#001aff 6px,#0018ff 12px,#0017ff 18px,#0015ff 24px,#0013ff 30px,#0011ff 36px,#000fff 42px,#040dff 48px,#0b0bff 54px,#1209ff 60px,#1807ff 66px,#1f05ff 72px,#2503ff 78px,#2c01ff 84px,#3200ff 90px,#3900ff 96px,#3f00ff 102px,#4600ff 108px,#4c00ff 114px,#5300ff 120px,#5900ff 126px,#6000ff 132px,#6600ff 138px,#6d00ff 144px,#7300ff 150px,#7a00ff 156px,#8000ff 162px,#8700ff 168px,#8d00ff 174px,#9400ff 180px,#9a00ff 186px,#a100ff 192px,#a700ff 198px,#ae00ff 204px,#b400ff 210px,#bb00ff 216px,#c200ff 222px,#c800ff 228px,#cf00ff 234px,#d600ff 240px,#dc00ff 246px,#e300ff 252px,#ea00ff 258px,#f100ff 264px,#f700ff 270px,#fe00ff 276px,#ff00f9 282px,#ff00f3 288px,#ff00ed 294px,#ff00e7 300px,#ff00e1 306px,#ff00dc 312px,#ff00d7 318px,#ff00d2 324px,#ff00cd 330px)"></div><div style="height:2px;background:linear-gradient(90deg,#001bff 0px,#0019ff 6px,#0018ff 12px,#0016ff 18px,#0014ff 24px,#0012ff 30px,#0010ff 36px,#000eff 42px,#030dff 48px,#0a0bff 54px,#1109ff 60px,#1807ff 66px,#1e05ff 72px,#2503ff 78px,#2b00ff 84px,#3200ff 90px,#3800ff 96px,#3f00ff 102px,#4500ff 108px,#4b00ff 114px,#5200ff 120px,#5800ff 126px,#5f00ff 132px,#6500ff 138px,#6b00ff 144px,#7200ff 150px,#7800ff 156px,#7f00ff 162px,#8500ff 168px,#8c00ff 174px,#9200ff 180px,#9900ff 186px,#9f00ff 192px,#a600ff 198px,#ac00ff 204px,#b300ff 210px,#b900ff 216px,#c000ff 222px,#c600ff 228px,#cd00ff 234px,#d400ff 240px,#da00ff 246px,#e100ff 252px,#e800ff 258px,#ee00ff 264px,#f500ff 270px,#fc00ff 276px,#ff00fb 282px,#ff00f5 288px,#ff00ef 294px,#ff00e9 300px,#ff00e3 306px,#ff00de 312px,#ff00d9 318px,#ff00d4 324px,#ff00cf 330px)"></div><div style="height:2px;background:linear-gradient(90deg,#001aff 0px,#0019ff 6px,#0017ff 12px,#0015ff 18px,#0013ff 24px,#0011ff 30px,#0010ff 36px,#000eff 42px,#030cff 48px,#0a0aff 54px,#1108ff 60px,#1706ff 66px,#1e04ff 72px,#2402ff 78px,#2b00ff 84px,#3100ff 90px,#3700ff 96px,#3e00ff 102px,#4400ff 108px,#4a00ff 114px,#5100ff 120px,#5700ff 126px,#5e00ff 132px,#6400ff 138px,#6a00ff 144px,#7100ff 150px,#7700ff 156px,#7d00ff 162px,#8400ff 168px,#8a00ff 174px,#9100ff 180px,#9700ff 186px,#9e00ff 192px,#a400ff 198px,#ab00ff 204px,#b100ff 210px,#b800ff 216px,#be00ff 222px,#c500ff 228px,#cb00ff 234px,#d200ff 240px,#d800ff 246px,#df00ff 252px,#e600ff 258px,#ec00ff 264px,#f300ff 270px,#fa00ff 276px,#ff00fe 282px,#ff00f7 288px,#ff00f1 294px,#ff00eb 300px,#ff00e5 306px,#ff00e0 312px,#ff00db 318px,#ff00d6 324px,#ff00d1 330px)"></div><div style="height:2px;background:linear-gradient(90deg,#001aff 0px,#0018ff 6px,#0016ff 12px,#0014ff 18px,#0013ff 24px,#0011ff 30px,#000fff 36px,#000dff 42px,#030bff 48px,#0909ff 54px,#1007ff 60px,#1705ff 66px,#1d03ff 72px,#2401ff 78px,#2a00ff 84px,#3000ff 90px,#3700ff 96px,#3d00ff 102px,#4300ff 108px,#4a00ff 114px,#5000ff 120px,#5600ff 126px,#5d00ff 132px,#6300ff 138px,#6900ff 144px,#7000ff 150px,#7600ff 156px,#7c00ff 162px,#8300ff 168px,#8900ff 174px,#8f00ff 180px,#9600ff 186px,#9c00ff 192px,#a300ff 198px,#a900ff 204px,#af00ff 210px,#b600ff 216px,#bc00ff 222px,#c300ff 228px,#c900ff 234px,#d000ff 240px,#d700ff 246px,#dd00ff 252px,#e400ff 258px,#ea00ff 264px,#f100ff 270px,#f800ff 276px,#fe00ff 282px,#ff00f9 288px,#ff00f3 294px,#ff00ed 300px,#ff00e7 306px,#ff00e2 312px,#ff00dd 318px,#ff00d8 324px,#ff00d3 330px)"></div><div style="height:2px;background:linear-gradient(90deg,#0019ff 0px,#0017ff 6px,#0015ff 12px,#0014ff 18px,#0012ff 24px,#0010ff 30px,#000eff 36px,#000cff 42px,#020aff 48px,#0908ff 54px,#1007ff 60px,#1605ff 66px,#1d03ff 72px,#2300ff 78px,#2900ff 84px,#3000ff 90px,#3600ff 96px,#3c00ff 102px,#4300ff 108px,#4900ff 114px,#4f00ff 120px,#5500ff 126px,#5c00ff 132px,#6200ff 138px,#6800ff 144px,#6e00ff 150px,#7500ff 156px,#7b00ff 162px,#8100ff 168px,#8800ff 174px,#8e00ff 180px,#9400ff 186px,#9b00ff 192px,#a100ff 198px,#a700ff 204px,#ae00ff 210px,#b400ff 216px,#bb00ff 222px,#c100ff 228px,#c800ff 234px,#ce00ff 240px,#d500ff 246px,#db00ff 252px,#e200ff 258px,#e800ff 264px,#ef00ff 270px,#f500ff 276px,#fc00ff 282px,#ff00fb 288px,#ff00f5 294px,#ff00ef 300px,#ff00e9 306px,#ff00e4 312px,#ff00df 318px,#ff00da 324px,#ff00d5 330px)"></div><div style="height:2px;background:linear-gradient(90deg,#0018ff 0px,#0016ff 6px,#0015ff 12px,#0013ff 18px,#0011ff 24px,#000fff 30px,#000dff 36px,#000cff 42px,#020aff 48px,#0908ff 54px,#0f06ff 60px,#1604ff 66px,#1c02ff 72px,#2200ff 78px,#2900ff 84px,#2f00ff 90px,#3500ff 96px,#3b00ff 102px,#4200ff 108px,#4800ff 114px,#4e00ff 120px,#5400ff 126px,#5b00ff 132px,#6100ff 138px,#6700ff 144px,#6d00ff 150px,#7400ff 156px,#7a00ff 162px,#8000ff 168px,#8600ff 174px,#8d00ff 180px,#9300ff 186px,#9900ff 192px,#a000ff 198px,#a600ff 204px,#ac00ff 210px,#b300ff 216px,#b900ff 222px,#bf00ff 228px,#c600ff 234px,#cc00ff 240px,#d300ff 246px,#d900ff 252px,#e000ff 258px,#e600ff 264px,#ed00ff 270px,#f300ff 276px,#fa00ff 282px,#ff00fe 288px,#ff00f7 294px,#ff00f1 300px,#ff00eb 306px,#ff00e6 312px,#ff00e1 318px,#ff00dc 324px,#ff00d7 330px)"></div><div style="height:2px;background:linear-gradient(90deg,#0017ff 0px,#0016ff 6px,#0014ff 12px,#0012ff 18px,#0010ff 24px,#000fff 30px,#000dff 36px,#000bff 42px,#0109ff 48px,#0807ff 54px,#0f05ff 60px,#1503ff 66px,#1c01ff 72px,#2200ff 78px,#2800ff 84px,#2e00ff 90px,#3500ff 96px,#3b00ff 102px,#4100ff 108px,#4700ff 114px,#4d00ff 120px,#5300ff 126px,#5a00ff 132px,#6000ff 138px,#6600ff 144px,#6c00ff 150px,#7200ff 156px,#7900ff 162px,#7f00ff 168px,#8500ff 174px,#8b00ff 180px,#9200ff 186px,#9800ff 192px,#9e00ff 198px,#a400ff 204px,#ab00ff 210px,#b100ff 216px,#b700ff 222px,#be00ff 228px,#c400ff 234px,#ca00ff 240px,#d100ff 246px,#d700ff 252px,#de00ff 258px,#e400ff 264px,#eb00ff 270px,#f100ff 276px,#f800ff 282px,#fe00ff 288px,#ff00f9 294px,#ff00f3 300px,#ff00ed 306px,#ff00e8 312px,#ff00e3 318px,#ff00dd 324px,#ff00d8 330px)"></div><div style="height:2px;background:linear-gradient(90deg,#0017ff 0px,#0015ff 6px,#0013ff 12px,#0011ff 18px,#0010ff 24px,#000eff 30px,#000cff 36px,#000aff 42px,#0108ff 48px,#0806ff 54px,#0e04ff 60px,#1503ff 66px,#1b00ff 72px,#2100ff 78px,#2700ff 84px,#2e00ff 90px,#3400ff 96px,#3a00ff 102px,#4000ff 108px,#4600ff 114px,#4c00ff 120px,#5300ff 126px,#5900ff 132px,#5f00ff 138px,#6500ff 144px,#6b00ff 150px,#7100ff 156px,#7800ff 162px,#7e00ff 168px,#8400ff 174px,#8a00ff 180px,#9000ff 186px,#9600ff 192px,#9d00ff 198px,#a300ff 204px,#a900ff 210px,#af00ff 216px,#b600ff 222px,#bc00ff 228px,#c200ff 234px,#c900ff 240px,#cf00ff 246px,#d500ff 252px,#dc00ff 258px,#e200ff 264px,#e900ff 270px,#ef00ff 276px,#f600ff 282px,#fc00ff 288px,#ff00fc 294px,#ff00f5 300px,#ff00ef 306px,#ff00ea 312px,#ff00e4 318px,#ff00df 324px,#ff00da 330px)"></div><div style="height:2px;background:linear-gradient(90deg,#0016ff 0px,#0014ff 6px,#0012ff 12px,#0011ff 18px,#000fff 24px,#000dff 30px,#000bff 36px,#000aff 42px,#0008ff 48px,#0706ff 54px,#0e04ff 60px,#1402ff 66px,#1a00ff 72px,#2100ff 78px,#2700ff 84px,#2d00ff 90px,#3300ff 96px,#3900ff 102px,#3f00ff 108px,#4600ff 114px,#4c00ff 120px,#5200ff 126px,#5800ff 132px,#5e00ff 138px,#6400ff 144px,#6a00ff 150px,#7000ff 156px,#7600ff 162px,#7c00ff 168px,#8300ff 174px,#8900ff 180px,#8f00ff 186px,#9500ff 192px,#9b00ff 198px,#a200ff 204px,#a800ff 210px,#ae00ff 216px,#b400ff 222px,#ba00ff 228px,#c100ff 234px,#c700ff 240px,#cd00ff 246px,#d400ff 252px,#da00ff 258px,#e000ff 264px,#e700ff 270px,#ed00ff 276px,#f300ff 282px,#fa00ff 288px,#ff00fe 294px,#ff00f7 300px,#ff00f2 306px,#ff00ec 312px,#ff00e6 318px,#ff00e1 324px,#ff00dc 330px)"></div><div style="height:2px;background:linear-gradient(90deg,#0015ff 0px,#0014ff 6px,#0012ff 12px,#0010ff 18px,#000eff 24px,#000cff 30px,#000bff 36px,#0009ff 42px,#0007ff 48px,#0705ff 54px,#0d03ff 60px,#1401ff 66px,#1a00ff 72px,#2000ff 78px,#2600ff 84px,#2c00ff 90px,#3300ff 96px,#3900ff 102px,#3f00ff 108px,#4500ff 114px,#4b00ff 120px,#5100ff 126px,#5700ff 132px,#5d00ff 138px,#6300ff 144px,#6900ff 150px,#6f00ff 156px,#7500ff 162px,#7b00ff 168px,#8100ff 174px,#8800ff 180px,#8e00ff 186px,#9400ff 192px,#9a00ff 198px,#a000ff 204px,#a600ff 210px,#ac00ff 216px,#b300ff 222px,#b900ff 228px,#bf00ff 234px,#c500ff 240px,#cc00ff 246px,#d200ff 252px,#d800ff 258px,#de00ff 264px,#e500ff 270px,#eb00ff 276px,#f100ff 282px,#f800ff 288px,#fe00ff 294px,#ff00fa 300px,#ff00f4 306px,#ff00ee 312px,#ff00e8 318px,#ff00e3 324px,#ff00de 330px)"></div><div style="height:2px;background:linear-gradient(90deg,#0015ff 0px,#0013ff 6px,#0011ff 12px,#000fff 18px,#000eff 24px,#000cff 30px,#000aff 36px,#0008ff 42px,#0006ff 48px,#0704ff 54px,#0d02ff 60px,#1300ff 66px,#1900ff 72px,#2000ff 78px,#2600ff 84px,#2c00ff 90px,#3200ff 96px,#3800ff 102px,#3e00ff 108px,#4400ff 114px,#4a00ff 120px,#5000ff 126px,#5600ff 132px,#5c00ff 138px,#6200ff 144px,#6800ff 150px,#6e00ff 156px,#7400ff 162px,#7a00ff 168px,#8000ff 174px,#8600ff 180px,#8c00ff 186px,#9200ff 192px,#9900ff 198px,#9f00ff 204px,#a500ff 210px,#ab00ff 216px,#b100ff 222px,#b700ff 228px,#bd00ff 234px,#c400ff 240px,#ca00ff 246px,#d000ff 252px,#d600ff 258px,#dc00ff 264px,#e300ff 270px,#e900ff 276px,#ef00ff 282px,#f600ff 288px,#fc00ff 294px,#ff00fc 300px,#ff00f6 306px,#ff00f0 312px,#ff00ea 318px,#ff00e5 324px,#ff00e0 330px)"></div><div style="height:2px;background:linear-gradient(90deg,#0014ff 0px,#0012ff 6px,#0010ff 12px,#000fff 18px,#000dff 24px,#000bff 30px,#0009ff 36px,#0008ff 42px,#0006ff 48px,#0604ff 54px,#0d02ff 60px,#1300ff 66px,#1900ff 72px,#1f00ff 78px,#2500ff 84px,#2b00ff 90px,#3100ff 96px,#3700ff 102px,#3d00ff 108px,#4300ff 114px,#4900ff 120px,#4f00ff 126px,#5500ff 132px,#5b00ff 138px,#6100ff 144px,#6700ff 150px,#6d00ff 156px,#7300ff 162px,#7900ff 168px,#7f00ff 174px,#8500ff 180px,#8b00ff 186px,#9100ff 192px,#9700ff 198px,#9d00ff 204px,#a300ff 210px,#a900ff 216px,#b000ff 222px,#b600ff 228px,#bc00ff 234px,#c200ff 240px,#c800ff 246px,#ce00ff 252px,#d400ff 258px,#db00ff 264px,#e100ff 270px,#e700ff 276px,#ed00ff 282px,#f400ff 288px,#fa00ff 294px,#ff00fe 300px,#ff00f8 306px,#ff00f2 312px,#ff00ec 318px,#ff00e7 324px,#ff00e2 330px)"></div><div style="height:2px;background:linear-gradient(90deg,#0013ff 0px,#0011ff 6px,#0010ff 12px,#000eff 18px,#000cff 24px,#000aff 30px,#0009ff 36px,#0007ff 42px,#0005ff 48px,#0603ff 54px,#0c01ff 60px,#1200ff 66px,#1800ff 72px,#1f00ff 78px,#2500ff 84px,#2b00ff 90px,#3100ff 96px,#3700ff 102px,#3c00ff 108px,#4200ff 114px,#4800ff 120px,#4e00ff 126px,#5400ff 132px,#5a00ff 138px,#6000ff 144px,#6600ff 150px,#6c00ff 156px,#7200ff 162px,#7800ff 168px,#7e00ff 174px,#8400ff 180px,#8a00ff 186px,#9000ff 192px,#9600ff 198px,#9c00ff 204px,#a200ff 210px,#a800ff 216px,#ae00ff 222px,#b400ff 228px,#ba00ff 234px,#c000ff 240px,#c600ff 246px,#cc00ff 252px,#d300ff 258px,#d900ff 264px,#df00ff 270px,#e500ff 276px,#eb00ff 282px,#f200ff 288px,#f800ff 294px,#fe00ff 300px,#ff00fa 306px,#ff00f4 312px,#ff00ee 318px,#ff00e9 324px,#ff00e4 330px)"></div><div style="height:2px;background:linear-gradient(90deg,#0012ff 0px,#0011ff 6px,#000fff 12px,#000dff 18px,#000cff 24px,#000aff 30px,#0008ff 36px,#0006ff 42px,#0004ff 48px,#0502ff 54px,#0c00ff 60px,#1200ff 66px,#1800ff 72px,#1e00ff 78px,#2400ff 84px,#2a00ff 90px,#3000ff 96px,#3600ff 102px,#3c00ff 108px,#4200ff 114px,#4800ff 120px,#4d00ff 126px,#5300ff 132px,#5900ff 138px,#5f00ff 144px,#6500ff 150px,#6b00ff 156px,#7100ff 162px,#7700ff 168px,#7d00ff 174px,#8300ff 180px,#8900ff 186px,#8f00ff 192px,#9500ff 198px,#9b00ff 204px,#a000ff 210px,#a600ff 216px,#ad00ff 222px,#b300ff 228px,#b900ff 234px,#bf00ff 240px,#c500ff 246px,#cb00ff 252px,#d100ff 258px,#d700ff 264px,#dd00ff 270px,#e300ff 276px,#e900ff 282px,#f000ff 288px,#f600ff 294px,#fc00ff 300px,#ff00fc 306px,#ff00f6 312px,#ff00f0 318px,#ff00eb 324px,#ff00e5 330px)"></div><div style="height:2px;background:linear-gradient(90deg,#0012ff 0px,#0010ff 6px,#000eff 12px,#000dff 18px,#000bff 24px,#0009ff 30px,#0007ff 36px,#0006ff 42px,#0004ff 48px,#0502ff 54px,#0b00ff 60px,#1100ff 66px,#1800ff 72px,#1e00ff 78px,#2300ff 84px,#2900ff 90px,#2f00ff 96px,#3500ff 102px,#3b00ff 108px,#4100ff 114px,#4700ff 120px,#4d00ff 126px,#5200ff 132px,#5800ff 138px,#5e00ff 144px,#6400ff 150px,#6a00ff 156px,#7000ff 162px,#7600ff 168px,#7c00ff 174px,#8100ff 180px,#8700ff 186px,#8d00ff 192px,#9300ff 198px,#9900ff 204px,#9f00ff 210px,#a500ff 216px,#ab00ff 222px,#b100ff 228px,#b700ff 234px,#bd00ff 240px,#c300ff 246px,#c900ff 252px,#cf00ff 258px,#d500ff 264px,#db00ff 270px,#e100ff 276px,#e800ff 282px,#ee00ff 288px,#f400ff 294px,#fa00ff 300px,#ff00fe 306px,#ff00f8 312px,#ff00f2 318px,#ff00ed 324px,#ff00e7 330px)"></div><div style="height:2px;background:linear-gradient(90deg,#0011ff 0px,#000fff 6px,#000eff 12px,#000cff 18px,#000aff 24px,#0009ff 30px,#0007ff 36px,#0005ff 42px,#0003ff 48px,#0501ff 54px,#0b00ff 60px,#1100ff 66px,#1700ff 72px,#1d00ff 78px,#2300ff 84px,#2900ff 90px,#2f00ff 96px,#3500ff 102px,#3a00ff 108px,#4000ff 114px,#4600ff 120px,#4c00ff 126px,#5200ff 132px,#5700ff 138px,#5d00ff 144px,#6300ff 150px,#6900ff 156px,#6f00ff 162px,#7500ff 168px,#7a00ff 174px,#8000ff 180px,#8600ff 186px,#8c00ff 192px,#9200ff 198px,#9800ff 204px,#9e00ff 210px,#a400ff 216px,#aa00ff 222px,#b000ff 228px,#b500ff 234px,#bb00ff 240px,#c100ff 246px,#c700ff 252px,#cd00ff 258px,#d300ff 264px,#da00ff 270px,#e000ff 276px,#e600ff 282px,#ec00ff 288px,#f200ff 294px,#f800ff 300px,#fe00ff 306px,#ff00fa 312px,#ff00f4 318px,#ff00ef 324px,#ff00e9 330px)"></div><div style="height:2px;background:linear-gradient(90deg,#0010ff 0px,#000fff 6px,#000dff 12px,#000bff 18px,#000aff 24px,#0008ff 30px,#0006ff 36px,#0004ff 42px,#0002ff 48px,#0400ff 54px,#0b00ff 60px,#1100ff 66px,#1700ff 72px,#1d00ff 78px,#2200ff 84px,#2800ff 90px,#2e00ff 96px,#3400ff 102px,#3a00ff 108px,#3f00ff 114px,#4500ff 120px,#4b00ff 126px,#5100ff 132px,#5700ff 138px,#5c00ff 144px,#6200ff 150px,#6800ff 156px,#6e00ff 162px,#7400ff 168px,#7900ff 174px,#7f00ff 180px,#8500ff 186px,#8b00ff 192px,#9100ff 198px,#9700ff 204px,#9c00ff 210px,#a200ff 216px,#a800ff 222px,#ae00ff 228px,#b400ff 234px,#ba00ff 240px,#c000ff 246px,#c600ff 252px,#cc00ff 258px,#d200ff 264px,#d800ff 270px,#de00ff 276px,#e400ff 282px,#ea00ff 288px,#f000ff 294px,#f600ff 300px,#fc00ff 306px,#ff00fc 312px,#ff00f6 318px,#ff00f0 324px,#ff00eb 330px)"></div><div style="height:2px;background:linear-gradient(90deg,#0010ff 0px,#000eff 6px,#000cff 12px,#000bff 18px,#0009ff 24px,#0007ff 30px,#0006ff 36px,#0004ff 42px,#0002ff 48px,#0400ff 54px,#0a00ff 60px,#1000ff 66px,#1600ff 72px,#1c00ff 78px,#2200ff 84px,#2800ff 90px,#2d00ff 96px,#3300ff 102px,#3900ff 108px,#3f00ff 114px,#4500ff 120px,#4a00ff 126px,#5000ff 132px,#5600ff 138px,#5b00ff 144px,#6100ff 150px,#6700ff 156px,#6d00ff 162px,#7300ff 168px,#7800ff 174px,#7e00ff 180px,#8400ff 186px,#8a00ff 192px,#8f00ff 198px,#9500ff 204px,#9b00ff 210px,#a100ff 216px,#a700ff 222px,#ad00ff 228px,#b200ff 234px,#b800ff 240px,#be00ff 246px,#c400ff 252px,#ca00ff 258px,#d000ff 264px,#d600ff 270px,#dc00ff 276px,#e200ff 282px,#e800ff 288px,#ee00ff 294px,#f400ff 300px,#fa00ff 306px,#ff00fe 312px,#ff00f8 318px,#ff00f2 324px,#ff00ed 330px)"></div><div style="height:2px;background:linear-gradient(90deg,#000fff 0px,#000eff 6px,#000cff 12px,#000aff 18px,#0008ff 24px,#0007ff 30px,#0005ff 36px,#0003ff 42px,#0001ff 48px,#0400ff 54px,#0a00ff 60px,#1000ff 66px,#1600ff 72px,#1c00ff 78px,#2100ff 84px,#2700ff 90px,#2d00ff 96px,#3300ff 102px,#3800ff 108px,#3e00ff 114px,#4400ff 120px,#4900ff 126px,#4f00ff 132px,#5500ff 138px,#5b00ff 144px,#6000ff 150px,#6600ff 156px,#6c00ff 162px,#7100ff 168px,#7700ff 174px,#7d00ff 180px,#8300ff 186px,#8800ff 192px,#8e00ff 198px,#9400ff 204px,#9a00ff 210px,#a000ff 216px,#a500ff 222px,#ab00ff 228px,#b100ff 234px,#b700ff 240px,#bd00ff 246px,#c300ff 252px,#c800ff 258px,#ce00ff 264px,#d400ff 270px,#da00ff 276px,#e000ff 282px,#e600ff 288px,#ec00ff 294px,#f200ff 300px,#f800ff 306px,#fe00ff 312px,#ff00fa 318px,#ff00f4 324px,#ff00ef 330px)"></div><div style="height:2px;background:linear-gradient(90deg,#000fff 0px,#000dff 6px,#000bff 12px,#0009ff 18px,#0008ff 24px,#0006ff 30px,#0004ff 36px,#0002ff 42px,#0001ff 48px,#0300ff 54px,#0900ff 60px,#0f00ff 66px,#1500ff 72px,#1b00ff 78px,#2100ff 84px,#2700ff 90px,#2c00ff 96px,#3200ff 102px,#3800ff 108px,#3d00ff 114px,#4300ff 120px,#4900ff 126px,#4e00ff 132px,#5400ff 138px,#5a00ff 144px,#5f00ff 150px,#6500ff 156px,#6b00ff 162px,#7000ff 168px,#7600ff 174px,#7c00ff 180px,#8200ff 186px,#8700ff 192px,#8d00ff 198px,#9300ff 204px,#9800ff 210px,#9e00ff 216px,#a400ff 222px,#aa00ff 228px,#b000ff 234px,#b500ff 240px,#bb00ff 246px,#c100ff 252px,#c700ff 258px,#cd00ff 264px,#d300ff 270px,#d800ff 276px,#de00ff 282px,#e400ff 288px,#ea00ff 294px,#f000ff 300px,#f600ff 306px,#fc00ff 312px,#ff00fc 318px,#ff00f6 324px,#ff00f1 330px)"></div></div><div class="a" style="left:952px;top:57px;width:601px;height:1px;background:#9c9c9c;"></div><div class="a" style="left:1552px;top:57px;width:1px;height:462px;background:#9c9c9c;"></div><div class="a" style="left:952px;top:57px;width:1px;height:467px;background:#9c9c9c;"></div><div class="a" style="left:947px;top:518px;width:606px;height:1px;background:#9c9c9c;"></div><div class="t" style="left:939.50px;top:512.82px;font-size:12.50px;color:#d2d2d2;">0</div><div class="a" style="left:952px;top:519px;width:1px;height:5px;background:#d0d0d0;"></div><div class="t" style="left:949.00px;top:528.92px;font-size:12.50px;color:#d2d2d2;">0</div><div class="a" style="left:947px;top:481px;width:5px;height:2px;background:#d0d0d0;"></div><div class="t" style="left:922.19px;top:474.82px;font-size:12.50px;color:#d2d2d2;">0,05</div><div class="a" style="left:1002px;top:519px;width:2px;height:5px;background:#d0d0d0;"></div><div class="t" style="left:990.34px;top:528.92px;font-size:12.50px;color:#d2d2d2;">0,05</div><div class="a" style="left:947px;top:442px;width:5px;height:2px;background:#d0d0d0;"></div><div class="t" style="left:929.19px;top:435.82px;font-size:12.50px;color:#d2d2d2;">0,1</div><div class="a" style="left:1052px;top:519px;width:2px;height:5px;background:#d0d0d0;"></div><div class="t" style="left:1043.84px;top:528.92px;font-size:12.50px;color:#d2d2d2;">0,1</div><div class="a" style="left:947px;top:404px;width:5px;height:2px;background:#d0d0d0;"></div><div class="t" style="left:922.19px;top:397.82px;font-size:12.50px;color:#d2d2d2;">0,15</div><div class="a" style="left:1102px;top:519px;width:2px;height:5px;background:#d0d0d0;"></div><div class="t" style="left:1090.34px;top:528.92px;font-size:12.50px;color:#d2d2d2;">0,15</div><div class="a" style="left:947px;top:366px;width:5px;height:2px;background:#d0d0d0;"></div><div class="t" style="left:929.25px;top:359.82px;font-size:12.50px;color:#d2d2d2;">0,2</div><div class="a" style="left:1152px;top:519px;width:2px;height:5px;background:#d0d0d0;"></div><div class="t" style="left:1143.88px;top:528.92px;font-size:12.50px;color:#d2d2d2;">0,2</div><div class="a" style="left:947px;top:327px;width:5px;height:2px;background:#d0d0d0;"></div><div class="t" style="left:922.19px;top:320.82px;font-size:12.50px;color:#d2d2d2;">0,25</div><div class="a" style="left:1202px;top:519px;width:2px;height:5px;background:#d0d0d0;"></div><div class="t" style="left:1190.34px;top:528.92px;font-size:12.50px;color:#d2d2d2;">0,25</div><div class="a" style="left:947px;top:289px;width:5px;height:2px;background:#d0d0d0;"></div><div class="t" style="left:929.12px;top:282.82px;font-size:12.50px;color:#d2d2d2;">0,3</div><div class="a" style="left:1252px;top:519px;width:2px;height:5px;background:#d0d0d0;"></div><div class="t" style="left:1243.81px;top:528.92px;font-size:12.50px;color:#d2d2d2;">0,3</div><div class="a" style="left:947px;top:251px;width:5px;height:2px;background:#d0d0d0;"></div><div class="t" style="left:922.19px;top:244.82px;font-size:12.50px;color:#d2d2d2;">0,35</div><div class="a" style="left:1302px;top:519px;width:2px;height:5px;background:#d0d0d0;"></div><div class="t" style="left:1290.34px;top:528.92px;font-size:12.50px;color:#d2d2d2;">0,35</div><div class="a" style="left:947px;top:212px;width:5px;height:2px;background:#d0d0d0;"></div><div class="t" style="left:928.94px;top:205.82px;font-size:12.50px;color:#d2d2d2;">0,4</div><div class="a" style="left:1352px;top:519px;width:2px;height:5px;background:#d0d0d0;"></div><div class="t" style="left:1343.72px;top:528.92px;font-size:12.50px;color:#d2d2d2;">0,4</div><div class="a" style="left:947px;top:174px;width:5px;height:2px;background:#d0d0d0;"></div><div class="t" style="left:922.19px;top:167.82px;font-size:12.50px;color:#d2d2d2;">0,45</div><div class="a" style="left:1402px;top:519px;width:2px;height:5px;background:#d0d0d0;"></div><div class="t" style="left:1390.34px;top:528.92px;font-size:12.50px;color:#d2d2d2;">0,45</div><div class="a" style="left:947px;top:136px;width:5px;height:2px;background:#d0d0d0;"></div><div class="t" style="left:929.12px;top:129.82px;font-size:12.50px;color:#d2d2d2;">0,5</div><div class="a" style="left:1452px;top:519px;width:2px;height:5px;background:#d0d0d0;"></div><div class="t" style="left:1443.81px;top:528.92px;font-size:12.50px;color:#d2d2d2;">0,5</div><div class="a" style="left:947px;top:97px;width:5px;height:2px;background:#d0d0d0;"></div><div class="t" style="left:922.19px;top:90.82px;font-size:12.50px;color:#d2d2d2;">0,55</div><div class="a" style="left:1502px;top:519px;width:2px;height:5px;background:#d0d0d0;"></div><div class="t" style="left:1490.34px;top:528.92px;font-size:12.50px;color:#d2d2d2;">0,55</div><div class="a" style="left:1345px;top:374px;width:205px;height:141px;background:#2a2a2a;"></div><div class="a" style="left:1348px;top:377px;width:199px;height:135px;background:#8a8a8a;"></div><div class="a" style="left:1349px;top:378px;width:197px;height:133px;overflow:hidden"><div style="height:3px;background:linear-gradient(90deg,#709900 0px,#729900 8px,#749900 16px,#769900 24px,#789900 32px,#7a9900 40px,#7c9900 48px,#7e9900 56px,#809900 64px,#829900 72px,#849900 80px,#869900 88px,#889900 96px,#8b9900 104px,#8d9900 112px,#8f9900 120px,#919900 128px,#939900 136px,#959900 144px,#989900 152px,#999800 160px,#999600 168px,#999400 176px,#999200 184px,#999000 192px,#998e00 200px)"></div><div style="height:3px;background:linear-gradient(90deg,#709900 0px,#729900 8px,#749900 16px,#769900 24px,#789900 32px,#7a9900 40px,#7d9900 48px,#7f9900 56px,#819900 64px,#839900 72px,#859900 80px,#879900 88px,#899900 96px,#8b9900 104px,#8d9900 112px,#909900 120px,#929900 128px,#949900 136px,#969900 144px,#989900 152px,#999700 160px,#999500 168px,#999300 176px,#999100 184px,#998f00 192px,#998d00 200px)"></div><div style="height:3px;background:linear-gradient(90deg,#719900 0px,#739900 8px,#759900 16px,#779900 24px,#799900 32px,#7b9900 40px,#7d9900 48px,#7f9900 56px,#819900 64px,#839900 72px,#869900 80px,#889900 88px,#8a9900 96px,#8c9900 104px,#8e9900 112px,#909900 120px,#939900 128px,#959900 136px,#979900 144px,#999900 152px,#999700 160px,#999400 168px,#999200 176px,#999000 184px,#998e00 192px,#998c00 200px)"></div><div style="height:3px;background:linear-gradient(90deg,#719900 0px,#739900 8px,#769900 16px,#789900 24px,#7a9900 32px,#7c9900 40px,#7e9900 48px,#809900 56px,#829900 64px,#849900 72px,#869900 80px,#889900 88px,#8b9900 96px,#8d9900 104px,#8f9900 112px,#919900 120px,#939900 128px,#959900 136px,#989900 144px,#999800 152px,#999600 160px,#999400 168px,#999200 176px,#999000 184px,#998e00 192px,#998c00 200px)"></div><div style="height:3px;background:linear-gradient(90deg,#729900 0px,#749900 8px,#769900 16px,#789900 24px,#7a9900 32px,#7c9900 40px,#7e9900 48px,#819900 56px,#839900 64px,#859900 72px,#879900 80px,#899900 88px,#8b9900 96px,#8d9900 104px,#909900 112px,#929900 120px,#949900 128px,#969900 136px,#989900 144px,#999700 152px,#999500 160px,#999300 168px,#999100 176px,#998f00 184px,#998d00 192px,#998b00 200px)"></div><div style="height:3px;background:linear-gradient(90deg,#739900 0px,#759900 8px,#779900 16px,#799900 24px,#7b9900 32px,#7d9900 40px,#7f9900 48px,#819900 56px,#839900 64px,#859900 72px,#889900 80px,#8a9900 88px,#8c9900 96px,#8e9900 104px,#909900 112px,#929900 120px,#959900 128px,#979900 136px,#999900 144px,#999700 152px,#999400 160px,#999200 168px,#999000 176px,#998e00 184px,#998c00 192px,#998a00 200px)"></div><div style="height:3px;background:linear-gradient(90deg,#739901 0px,#759900 8px,#779900 16px,#799900 24px,#7c9900 32px,#7e9900 40px,#809900 48px,#829900 56px,#849900 64px,#869900 72px,#889900 80px,#8a9900 88px,#8d9900 96px,#8f9900 104px,#919900 112px,#939900 120px,#959900 128px,#989900 136px,#999800 144px,#999600 152px,#999400 160px,#999200 168px,#999000 176px,#998e00 184px,#998c00 192px,#998a00 200px)"></div><div style="height:3px;background:linear-gradient(90deg,#749901 0px,#769901 8px,#789900 16px,#7a9900 24px,#7c9900 32px,#7e9900 40px,#809900 48px,#829900 56px,#859900 64px,#879900 72px,#899900 80px,#8b9900 88px,#8d9900 96px,#909900 104px,#929900 112px,#949900 120px,#969900 128px,#989900 136px,#999700 144px,#999500 152px,#999300 160px,#999100 168px,#998f00 176px,#998d00 184px,#998b00 192px,#998900 200px)"></div><div style="height:3px;background:linear-gradient(90deg,#749902 0px,#779901 8px,#799901 16px,#7b9900 24px,#7d9900 32px,#7f9900 40px,#819900 48px,#839900 56px,#859900 64px,#879900 72px,#8a9900 80px,#8c9900 88px,#8e9900 96px,#909900 104px,#929900 112px,#959900 120px,#979900 128px,#999900 136px,#999700 144px,#999400 152px,#999200 160px,#999000 168px,#998e00 176px,#998c00 184px,#998a00 192px,#998800 200px)"></div><div style="height:3px;background:linear-gradient(90deg,#759902 0px,#779902 8px,#799901 16px,#7b9900 24px,#7d9900 32px,#809900 40px,#829900 48px,#849900 56px,#869900 64px,#889900 72px,#8a9900 80px,#8d9900 88px,#8f9900 96px,#919900 104px,#939900 112px,#959900 120px,#989900 128px,#999800 136px,#999600 144px,#999400 152px,#999200 160px,#998f00 168px,#998d00 176px,#998b00 184px,#998a00 192px,#998800 200px)"></div><div style="height:3px;background:linear-gradient(90deg,#769902 0px,#789902 8px,#7a9901 16px,#7c9901 24px,#7e9900 32px,#809900 40px,#829900 48px,#859900 56px,#879900 64px,#899900 72px,#8b9900 80px,#8d9900 88px,#8f9900 96px,#929900 104px,#949900 112px,#969900 120px,#989900 128px,#999700 136px,#999500 144px,#999300 152px,#999100 160px,#998f00 168px,#998d00 176px,#998b00 184px,#998900 192px,#998700 200px)"></div><div style="height:3px;background:linear-gradient(90deg,#769903 0px,#789902 8px,#7b9902 16px,#7d9901 24px,#7f9901 32px,#819900 40px,#839900 48px,#859900 56px,#879900 64px,#8a9900 72px,#8c9900 80px,#8e9900 88px,#909900 96px,#929900 104px,#959900 112px,#979900 120px,#999900 128px,#999700 136px,#999400 144px,#999200 152px,#999000 160px,#998e00 168px,#998c00 176px,#998a00 184px,#998800 192px,#998600 200px)"></div><div style="height:3px;background:linear-gradient(90deg,#779903 0px,#799903 8px,#7b9902 16px,#7d9902 24px,#7f9901 32px,#829900 40px,#849900 48px,#869900 56px,#889900 64px,#8a9900 72px,#8c9900 80px,#8f9900 88px,#919900 96px,#939900 104px,#959900 112px,#989900 120px,#999800 128px,#999600 136px,#999400 144px,#999100 152px,#998f00 160px,#998d00 168px,#998b00 176px,#998900 184px,#998800 192px,#998600 200px)"></div><div style="height:3px;background:linear-gradient(90deg,#789904 0px,#7a9903 8px,#7c9903 16px,#7e9902 24px,#809901 32px,#829901 40px,#849900 48px,#879900 56px,#899900 64px,#8b9900 72px,#8d9900 80px,#8f9900 88px,#929900 96px,#949900 104px,#969900 112px,#989900 120px,#999700 128px,#999500 136px,#999300 144px,#999100 152px,#998f00 160px,#998d00 168px,#998b00 176px,#998900 184px,#998700 192px,#998500 200px)"></div><div style="height:3px;background:linear-gradient(90deg,#789904 0px,#7a9904 8px,#7c9903 16px,#7f9902 24px,#819902 32px,#839901 40px,#859901 48px,#879900 56px,#899900 64px,#8c9900 72px,#8e9900 80px,#909900 88px,#929900 96px,#959900 104px,#979900 112px,#999900 120px,#999700 128px,#999400 136px,#999200 144px,#999000 152px,#998e00 160px,#998c00 168px,#998a00 176px,#998800 184px,#998600 192px,#998400 200px)"></div><div style="height:3px;background:linear-gradient(90deg,#799904 0px,#7b9904 8px,#7d9903 16px,#7f9903 24px,#819902 32px,#849902 40px,#869901 48px,#889900 56px,#8a9900 64px,#8c9900 72px,#8f9900 80px,#919900 88px,#939900 96px,#959900 104px,#989900 112px,#999800 120px,#999600 128px,#999400 136px,#999100 144px,#998f00 152px,#998d00 160px,#998b00 168px,#998900 176px,#998700 184px,#998600 192px,#998400 200px)"></div><div style="height:3px;background:linear-gradient(90deg,#799905 0px,#7c9904 8px,#7e9904 16px,#809903 24px,#829903 32px,#849902 40px,#869901 48px,#899901 56px,#8b9900 64px,#8d9900 72px,#8f9900 80px,#929900 88px,#949900 96px,#969900 104px,#989900 112px,#999700 120px,#999500 128px,#999300 136px,#999100 144px,#998f00 152px,#998d00 160px,#998b00 168px,#998900 176px,#998700 184px,#998500 192px,#998300 200px)"></div><div style="height:3px;background:linear-gradient(90deg,#7a9905 0px,#7c9905 8px,#7e9904 16px,#819904 24px,#839903 32px,#859903 40px,#879902 48px,#899901 56px,#8c9901 64px,#8e9900 72px,#909900 80px,#929900 88px,#959900 96px,#979900 104px,#999900 112px,#999600 120px,#999400 128px,#999200 136px,#999000 144px,#998e00 152px,#998c00 160px,#998a00 168px,#998800 176px,#998600 184px,#998400 192px,#998200 200px)"></div><div style="height:3px;background:linear-gradient(90deg,#7b9906 0px,#7d9905 8px,#7f9905 16px,#819904 24px,#839903 32px,#869903 40px,#889902 48px,#8a9902 56px,#8c9901 64px,#8f9901 72px,#919900 80px,#939900 88px,#959900 96px,#989900 104px,#999800 112px,#999600 120px,#999400 128px,#999100 136px,#998f00 144px,#998d00 152px,#998b00 160px,#998900 168px,#998700 176px,#998500 184px,#998400 192px,#998200 200px)"></div><div style="height:3px;background:linear-gradient(90deg,#7b9906 0px,#7e9906 8px,#809905 16px,#829904 24px,#849904 32px,#869903 40px,#899903 48px,#8b9902 56px,#8d9902 64px,#8f9901 72px,#929900 80px,#949900 88px,#969900 96px,#989900 104px,#999700 112px,#999500 120px,#999300 128px,#999100 136px,#998f00 144px,#998c00 152px,#998a00 160px,#998900 168px,#998700 176px,#998500 184px,#998300 192px,#998100 200px)"></div><div style="height:3px;background:linear-gradient(90deg,#7c9907 0px,#7e9906 8px,#809905 16px,#839905 24px,#859904 32px,#879904 40px,#899903 48px,#8c9903 56px,#8e9902 64px,#909901 72px,#929901 80px,#959900 88px,#979900 96px,#999900 104px,#999600 112px,#999400 120px,#999200 128px,#999000 136px,#998e00 144px,#998c00 152px,#998a00 160px,#998800 168px,#998600 176px,#998400 184px,#998200 192px,#998000 200px)"></div><div style="height:3px;background:linear-gradient(90deg,#7d9907 0px,#7f9906 8px,#819906 16px,#839905 24px,#869905 32px,#889904 40px,#8a9904 48px,#8c9903 56px,#8e9902 64px,#919902 72px,#939901 80px,#959901 88px,#989900 96px,#999800 104px,#999600 112px,#999300 120px,#999100 128px,#998f00 136px,#998d00 144px,#998b00 152px,#998900 160px,#998700 168px,#998500 176px,#998300 184px,#998200 192px,#998000 200px)"></div><div style="height:3px;background:linear-gradient(90deg,#7d9907 0px,#809907 8px,#829906 16px,#849906 24px,#869905 32px,#889905 40px,#8b9904 48px,#8d9903 56px,#8f9903 64px,#929902 72px,#949902 80px,#969901 88px,#989900 96px,#999700 104px,#999500 112px,#999300 120px,#999100 128px,#998e00 136px,#998c00 144px,#998a00 152px,#998800 160px,#998600 168px,#998500 176px,#998300 184px,#998100 192px,#997f00 200px)"></div><div style="height:3px;background:linear-gradient(90deg,#7e9908 0px,#809907 8px,#829907 16px,#859906 24px,#879906 32px,#899905 40px,#8b9904 48px,#8e9904 56px,#909903 64px,#929903 72px,#959902 80px,#979901 88px,#999901 96px,#999600 104px,#999400 112px,#999200 120px,#999000 128px,#998e00 136px,#998c00 144px,#998a00 152px,#998800 160px,#998600 168px,#998400 176px,#998200 184px,#998000 192px,#997f00 200px)"></div><div style="height:3px;background:linear-gradient(90deg,#7f9908 0px,#819908 8px,#839907 16px,#859907 24px,#889906 32px,#8a9905 40px,#8c9905 48px,#8e9904 56px,#919904 64px,#939903 72px,#959903 80px,#989902 88px,#999801 96px,#999601 104px,#999300 112px,#999100 120px,#998f00 128px,#998d00 136px,#998b00 144px,#998900 152px,#998700 160px,#998500 168px,#998300 176px,#998100 184px,#998000 192px,#997e00 200px)"></div><div style="height:3px;background:linear-gradient(90deg,#7f9909 0px,#829908 8px,#849907 16px,#869907 24px,#889906 32px,#8b9906 40px,#8d9905 48px,#8f9905 56px,#919904 64px,#949904 72px,#969903 80px,#989902 88px,#999702 96px,#999501 104px,#999300 112px,#999100 120px,#998e00 128px,#998c00 136px,#998a00 144px,#998800 152px,#998600 160px,#998400 168px,#998300 176px,#998100 184px,#997f00 192px,#997d00 200px)"></div><div style="height:3px;background:linear-gradient(90deg,#809909 0px,#829908 8px,#859908 16px,#879907 24px,#899907 32px,#8b9906 40px,#8e9906 48px,#909905 56px,#929905 64px,#959904 72px,#979903 80px,#999903 88px,#999602 96px,#999402 104px,#999201 112px,#999000 120px,#998e00 128px,#998c00 136px,#998a00 144px,#998800 152px,#998600 160px,#998400 168px,#998200 176px,#998000 184px,#997e00 192px,#997d00 200px)"></div><div style="height:3px;background:linear-gradient(90deg,#819909 0px,#839909 8px,#859908 16px,#889908 24px,#8a9907 32px,#8c9907 40px,#8e9906 48px,#919906 56px,#939905 64px,#959904 72px,#989904 80px,#999803 88px,#999603 96px,#999302 104px,#999101 112px,#998f01 120px,#998d00 128px,#998b00 136px,#998900 144px,#998700 152px,#998500 160px,#998300 168px,#998100 176px,#997f00 184px,#997e00 192px,#997c00 200px)"></div><div style="height:3px;background:linear-gradient(90deg,#81990a 0px,#849909 8px,#869909 16px,#889908 24px,#8b9908 32px,#8d9907 40px,#8f9907 48px,#919906 56px,#949905 64px,#969905 72px,#989904 80px,#999704 88px,#999503 96px,#999302 104px,#999002 112px,#998e01 120px,#998c00 128px,#998a00 136px,#998800 144px,#998600 152px,#998400 160px,#998200 168px,#998100 176px,#997f00 184px,#997d00 192px,#997b00 200px)"></div><div style="height:3px;background:linear-gradient(90deg,#82990a 0px,#84990a 8px,#879909 16px,#899909 24px,#8b9908 32px,#8e9908 40px,#909907 48px,#929906 56px,#959906 64px,#979905 72px,#999905 80px,#999604 88px,#999403 96px,#999203 104px,#999002 112px,#998e02 120px,#998c01 128px,#998900 136px,#998700 144px,#998600 152px,#998400 160px,#998200 168px,#998000 176px,#997e00 184px,#997c00 192px,#997b00 200px)"></div><div style="height:3px;background:linear-gradient(90deg,#83990b 0px,#85990a 8px,#87990a 16px,#8a9909 24px,#8c9909 32px,#8e9908 40px,#919907 48px,#939907 56px,#959906 64px,#989906 72px,#999805 80px,#999604 88px,#999304 96px,#999103 104px,#998f03 112px,#998d02 120px,#998b01 128px,#998901 136px,#998700 144px,#998500 152px,#998300 160px,#998100 168px,#997f00 176px,#997e00 184px,#997c00 192px,#997a00 200px)"></div><div style="height:3px;background:linear-gradient(90deg,#84990b 0px,#86990b 8px,#88990a 16px,#8a9909 24px,#8d9909 32px,#8f9908 40px,#919908 48px,#949907 56px,#969907 64px,#989906 72px,#999705 80px,#999505 88px,#999304 96px,#999004 104px,#998e03 112px,#998c02 120px,#998a02 128px,#998801 136px,#998601 144px,#998400 152px,#998200 160px,#998000 168px,#997f00 176px,#997d00 184px,#997b00 192px,#997a00 200px)"></div><div style="height:3px;background:linear-gradient(90deg,#84990c 0px,#87990b 8px,#89990a 16px,#8b990a 24px,#8d9909 32px,#909909 40px,#929908 48px,#959908 56px,#979907 64px,#999907 72px,#999606 80px,#999405 88px,#999205 96px,#999004 104px,#998d03 112px,#998b03 120px,#998902 128px,#998702 136px,#998501 144px,#998400 152px,#998200 160px,#998000 168px,#997e00 176px,#997c00 184px,#997b00 192px,#997900 200px)"></div><div style="height:3px;background:linear-gradient(90deg,#85990c 0px,#87990b 8px,#8a990b 16px,#8c990a 24px,#8e990a 32px,#919909 40px,#939909 48px,#959908 56px,#989908 64px,#999807 72px,#999606 80px,#999306 88px,#999105 96px,#998f04 104px,#998d04 112px,#998b03 120px,#998903 128px,#998702 136px,#998501 144px,#998301 152px,#998100 160px,#997f00 168px,#997d00 176px,#997c00 184px,#997a00 192px,#997800 200px)"></div><div style="height:3px;background:linear-gradient(90deg,#86990c 0px,#88990c 8px,#8a990b 16px,#8d990b 24px,#8f990a 32px,#91990a 40px,#949909 48px,#969909 56px,#989908 64px,#999707 72px,#999507 80px,#999306 88px,#999005 96px,#998e05 104px,#998c04 112px,#998a04 120px,#998803 128px,#998602 136px,#998402 144px,#998201 152px,#998001 160px,#997f00 168px,#997d00 176px,#997b00 184px,#997900 192px,#997800 200px)"></div><div style="height:3px;background:linear-gradient(90deg,#86990d 0px,#89990c 8px,#8b990c 16px,#8d990b 24px,#90990b 32px,#92990a 40px,#94990a 48px,#979909 56px,#999908 64px,#999608 72px,#999407 80px,#999206 88px,#999006 96px,#998d05 104px,#998b05 112px,#998904 120px,#998703 128px,#998503 136px,#998302 144px,#998202 152px,#998001 160px,#997e00 168px,#997c00 176px,#997a00 184px,#997900 192px,#997700 200px)"></div><div style="height:3px;background:linear-gradient(90deg,#87990d 0px,#89990d 8px,#8c990c 16px,#8e990c 24px,#91990b 32px,#93990b 40px,#95990a 48px,#989909 56px,#999809 64px,#999608 72px,#999307 80px,#999107 88px,#998f06 96px,#998d06 104px,#998b05 112px,#998904 120px,#998704 128px,#998503 136px,#998303 144px,#998102 152px,#997f01 160px,#997d01 168px,#997b00 176px,#997a00 184px,#997800 192px,#997600 200px)"></div><div style="height:3px;background:linear-gradient(90deg,#88990e 0px,#8a990d 8px,#8d990d 16px,#8f990c 24px,#91990c 32px,#94990b 40px,#96990a 48px,#98990a 56px,#999709 64px,#999509 72px,#999208 80px,#999007 88px,#998e07 96px,#998c06 104px,#998a05 112px,#998805 120px,#998604 128px,#998403 136px,#998203 144px,#998002 152px,#997e02 160px,#997d01 168px,#997b01 176px,#997900 184px,#997700 192px,#997600 200px)"></div><div style="height:3px;background:linear-gradient(90deg,#89990e 0px,#8b990e 8px,#8d990d 16px,#90990d 24px,#92990c 32px,#94990b 40px,#97990b 48px,#99990a 56px,#99960a 64px,#999409 72px,#999208 80px,#998f08 88px,#998d07 96px,#998b06 104px,#998906 112px,#998705 120px,#998504 128px,#998304 136px,#998103 144px,#998003 152px,#997e02 160px,#997c02 168px,#997a01 176px,#997900 184px,#997700 192px,#997500 200px)"></div><div style="height:3px;background:linear-gradient(90deg,#89990f 0px,#8c990e 8px,#8e990e 16px,#90990d 24px,#93990c 32px,#95990c 40px,#98990b 48px,#99980b 56px,#99960a 64px,#999309 72px,#999109 80px,#998f08 88px,#998d07 96px,#998a07 104px,#998806 112px,#998605 120px,#998405 128px,#998304 136px,#998104 144px,#997f03 152px,#997d02 160px,#997b02 168px,#997a01 176px,#997801 184px,#997600 192px,#997500 200px)"></div><div style="height:3px;background:linear-gradient(90deg,#8a990f 0px,#8c990e 8px,#8f990e 16px,#91990d 24px,#94990d 32px,#96990c 40px,#98990c 48px,#99970b 56px,#99950a 64px,#99920a 72px,#999009 80px,#998e08 88px,#998c08 96px,#998a07 104px,#998806 112px,#998606 120px,#998405 128px,#998205 136px,#998004 144px,#997e03 152px,#997c03 160px,#997b02 168px,#997902 176px,#997701 184px,#997601 192px,#997400 200px)"></div><div style="height:3px;background:linear-gradient(90deg,#8b990f 0px,#8d990f 8px,#90990e 16px,#92990e 24px,#94990d 32px,#97990d 40px,#99990c 48px,#99960b 56px,#99940b 64px,#99920a 72px,#998f09 80px,#998d09 88px,#998b08 96px,#998907 104px,#998707 112px,#998506 120px,#998306 128px,#998105 136px,#997f04 144px,#997e04 152px,#997c03 160px,#997a03 168px,#997802 176px,#997702 184px,#997501 192px,#997300 200px)"></div><div style="height:3px;background:linear-gradient(90deg,#8c9910 0px,#8e990f 8px,#90990f 16px,#93990e 24px,#95990e 32px,#98990d 40px,#99980d 48px,#99950c 56px,#99930b 64px,#99910a 72px,#998f0a 80px,#998c09 88px,#998a08 96px,#998808 104px,#998607 112px,#998407 120px,#998206 128px,#998105 136px,#997f05 144px,#997d04 152px,#997b04 160px,#997903 168px,#997802 176px,#997602 184px,#997401 192px,#997301 200px)"></div><div style="height:3px;background:linear-gradient(90deg,#8c9910 0px,#8f9910 8px,#91990f 16px,#94990f 24px,#96990e 32px,#98990e 40px,#99970d 48px,#99950c 56px,#99920c 64px,#99900b 72px,#998e0a 80px,#998c09 88px,#998a09 96px,#998808 104px,#998608 112px,#998407 120px,#998206 128px,#998006 136px,#997e05 144px,#997c05 152px,#997a04 160px,#997903 168px,#997703 176px,#997502 184px,#997402 192px,#997201 200px)"></div><div style="height:3px;background:linear-gradient(90deg,#8d9911 0px,#909910 8px,#929910 16px,#94990f 24px,#97990f 32px,#99990e 40px,#99960d 48px,#99940d 56px,#99920c 64px,#998f0b 72px,#998d0b 80px,#998b0a 88px,#998909 96px,#998709 104px,#998508 112px,#998307 120px,#998107 128px,#997f06 136px,#997d05 144px,#997c05 152px,#997a04 160px,#997804 168px,#997603 176px,#997503 184px,#997302 192px,#997202 200px)"></div></div><div class="a" style="left:1349px;top:378px;width:197px;height:133px;overflow:hidden;clip-path:polygon(0px 13.57px,197px 119.65px,197px 133px,0px 133px)"><div style="height:3px;background:linear-gradient(90deg,#baff00 0px,#bdff00 8px,#c1ff00 16px,#c4ff00 24px,#c8ff00 32px,#cbff00 40px,#ceff00 48px,#d2ff00 56px,#d5ff00 64px,#d9ff00 72px,#dcff00 80px,#e0ff00 88px,#e3ff00 96px,#e7ff00 104px,#ebff00 112px,#eeff00 120px,#f2ff00 128px,#f5ff00 136px,#f9ff00 144px,#fdff00 152px,#fffd00 160px,#fffa00 168px,#fff600 176px,#fff300 184px,#ffef00 192px,#ffec00 200px)"></div><div style="height:3px;background:linear-gradient(90deg,#bbff00 0px,#beff00 8px,#c2ff00 16px,#c5ff00 24px,#c9ff00 32px,#ccff00 40px,#d0ff00 48px,#d3ff00 56px,#d6ff00 64px,#daff00 72px,#ddff00 80px,#e1ff00 88px,#e5ff00 96px,#e8ff00 104px,#ecff00 112px,#efff00 120px,#f3ff00 128px,#f7ff00 136px,#faff00 144px,#feff00 152px,#fffc00 160px,#fff900 168px,#fff500 176px,#fff200 184px,#ffee00 192px,#ffeb00 200px)"></div><div style="height:3px;background:linear-gradient(90deg,#bcff00 0px,#bfff00 8px,#c3ff00 16px,#c6ff00 24px,#caff00 32px,#cdff00 40px,#d1ff00 48px,#d4ff00 56px,#d8ff00 64px,#dbff00 72px,#dfff00 80px,#e2ff00 88px,#e6ff00 96px,#e9ff00 104px,#edff00 112px,#f1ff00 120px,#f4ff00 128px,#f8ff00 136px,#fcff00 144px,#ffff00 152px,#fffb00 160px,#fff700 168px,#fff400 176px,#fff000 184px,#ffed00 192px,#ffea00 200px)"></div><div style="height:3px;background:linear-gradient(90deg,#bdff00 0px,#c0ff00 8px,#c4ff00 16px,#c7ff00 24px,#cbff00 32px,#ceff00 40px,#d2ff00 48px,#d5ff00 56px,#d9ff00 64px,#dcff00 72px,#e0ff00 80px,#e3ff00 88px,#e7ff00 96px,#eaff00 104px,#eeff00 112px,#f2ff00 120px,#f5ff00 128px,#f9ff00 136px,#fdff00 144px,#fffd00 152px,#fffa00 160px,#fff600 168px,#fff300 176px,#ffef00 184px,#ffec00 192px,#ffe900 200px)"></div><div style="height:3px;background:linear-gradient(90deg,#beff00 0px,#c1ff00 8px,#c5ff00 16px,#c8ff00 24px,#ccff00 32px,#cfff00 40px,#d3ff00 48px,#d6ff00 56px,#daff00 64px,#ddff00 72px,#e1ff00 80px,#e4ff00 88px,#e8ff00 96px,#ecff00 104px,#efff00 112px,#f3ff00 120px,#f7ff00 128px,#faff00 136px,#feff00 144px,#fffc00 152px,#fff900 160px,#fff500 168px,#fff200 176px,#ffee00 184px,#ffeb00 192px,#ffe800 200px)"></div><div style="height:3px;background:linear-gradient(90deg,#bfff01 0px,#c2ff00 8px,#c6ff00 16px,#c9ff00 24px,#cdff00 32px,#d0ff00 40px,#d4ff00 48px,#d7ff00 56px,#dbff00 64px,#deff00 72px,#e2ff00 80px,#e6ff00 88px,#e9ff00 96px,#edff00 104px,#f0ff00 112px,#f4ff00 120px,#f8ff00 128px,#fcff00 136px,#ffff00 144px,#fffb00 152px,#fff700 160px,#fff400 168px,#fff000 176px,#ffed00 184px,#ffea00 192px,#ffe600 200px)"></div><div style="height:3px;background:linear-gradient(90deg,#c0ff01 0px,#c3ff00 8px,#c7ff00 16px,#caff00 24px,#ceff00 32px,#d1ff00 40px,#d5ff00 48px,#d8ff00 56px,#dcff00 64px,#e0ff00 72px,#e3ff00 80px,#e7ff00 88px,#eaff00 96px,#eeff00 104px,#f2ff00 112px,#f5ff00 120px,#f9ff00 128px,#fdff00 136px,#fffd00 144px,#fffa00 152px,#fff600 160px,#fff300 168px,#ffef00 176px,#ffec00 184px,#ffe900 192px,#ffe500 200px)"></div><div style="height:3px;background:linear-gradient(90deg,#c1ff02 0px,#c5ff01 8px,#c8ff00 16px,#cbff00 24px,#cfff00 32px,#d2ff00 40px,#d6ff00 48px,#d9ff00 56px,#ddff00 64px,#e1ff00 72px,#e4ff00 80px,#e8ff00 88px,#ecff00 96px,#efff00 104px,#f3ff00 112px,#f7ff00 120px,#faff00 128px,#feff00 136px,#fffc00 144px,#fff900 152px,#fff500 160px,#fff100 168px,#ffee00 176px,#ffeb00 184px,#ffe700 192px,#ffe400 200px)"></div><div style="height:3px;background:linear-gradient(90deg,#c2ff03 0px,#c6ff02 8px,#c9ff01 16px,#ccff00 24px,#d0ff00 32px,#d4ff00 40px,#d7ff00 48px,#dbff00 56px,#deff00 64px,#e2ff00 72px,#e5ff00 80px,#e9ff00 88px,#edff00 96px,#f0ff00 104px,#f4ff00 112px,#f8ff00 120px,#fcff00 128px,#ffff00 136px,#fffb00 144px,#fff700 152px,#fff400 160px,#fff000 168px,#ffed00 176px,#ffea00 184px,#ffe600 192px,#ffe300 200px)"></div><div style="height:3px;background:linear-gradient(90deg,#c3ff03 0px,#c7ff03 8px,#caff02 16px,#ceff01 24px,#d1ff00 32px,#d5ff00 40px,#d8ff00 48px,#dcff00 56px,#dfff00 64px,#e3ff00 72px,#e7ff00 80px,#eaff00 88px,#eeff00 96px,#f2ff00 104px,#f5ff00 112px,#f9ff00 120px,#fdff00 128px,#fffd00 136px,#fffa00 144px,#fff600 152px,#fff300 160px,#ffef00 168px,#ffec00 176px,#ffe800 184px,#ffe500 192px,#ffe200 200px)"></div><div style="height:3px;background:linear-gradient(90deg,#c4ff04 0px,#c8ff03 8px,#cbff02 16px,#cfff01 24px,#d2ff00 32px,#d6ff00 40px,#d9ff00 48px,#ddff00 56px,#e0ff00 64px,#e4ff00 72px,#e8ff00 80px,#ebff00 88px,#efff00 96px,#f3ff00 104px,#f7ff00 112px,#faff00 120px,#feff00 128px,#fffc00 136px,#fff800 144px,#fff500 152px,#fff100 160px,#ffee00 168px,#ffeb00 176px,#ffe700 184px,#ffe400 192px,#ffe100 200px)"></div><div style="height:3px;background:linear-gradient(90deg,#c5ff05 0px,#c9ff04 8px,#ccff03 16px,#d0ff02 24px,#d3ff01 32px,#d7ff00 40px,#daff00 48px,#deff00 56px,#e2ff00 64px,#e5ff00 72px,#e9ff00 80px,#edff00 88px,#f0ff00 96px,#f4ff00 104px,#f8ff00 112px,#fcff00 120px,#ffff00 128px,#fffb00 136px,#fff700 144px,#fff400 152px,#fff000 160px,#ffed00 168px,#ffe900 176px,#ffe600 184px,#ffe300 192px,#ffe000 200px)"></div><div style="height:3px;background:linear-gradient(90deg,#c6ff05 0px,#caff05 8px,#cdff04 16px,#d1ff03 24px,#d4ff02 32px,#d8ff01 40px,#dcff00 48px,#dfff00 56px,#e3ff00 64px,#e6ff00 72px,#eaff00 80px,#eeff00 88px,#f2ff00 96px,#f5ff00 104px,#f9ff00 112px,#fdff00 120px,#fffd00 128px,#fffa00 136px,#fff600 144px,#fff200 152px,#ffef00 160px,#ffec00 168px,#ffe800 176px,#ffe500 184px,#ffe200 192px,#ffdf00 200px)"></div><div style="height:3px;background:linear-gradient(90deg,#c7ff06 0px,#cbff05 8px,#ceff04 16px,#d2ff03 24px,#d5ff02 32px,#d9ff01 40px,#ddff00 48px,#e0ff00 56px,#e4ff00 64px,#e8ff00 72px,#ebff00 80px,#efff00 88px,#f3ff00 96px,#f6ff00 104px,#faff00 112px,#feff00 120px,#fffc00 128px,#fff800 136px,#fff500 144px,#fff100 152px,#ffee00 160px,#ffea00 168px,#ffe700 176px,#ffe400 184px,#ffe100 192px,#ffde00 200px)"></div><div style="height:3px;background:linear-gradient(90deg,#c8ff07 0px,#ccff06 8px,#cfff05 16px,#d3ff04 24px,#d7ff03 32px,#daff02 40px,#deff01 48px,#e1ff00 56px,#e5ff00 64px,#e9ff00 72px,#ecff00 80px,#f0ff00 88px,#f4ff00 96px,#f8ff00 104px,#fcff00 112px,#ffff00 120px,#fffb00 128px,#fff700 136px,#fff400 144px,#fff000 152px,#ffed00 160px,#ffe900 168px,#ffe600 176px,#ffe300 184px,#ffe000 192px,#ffdd00 200px)"></div><div style="height:3px;background:linear-gradient(90deg,#c9ff07 0px,#cdff07 8px,#d0ff06 16px,#d4ff05 24px,#d8ff04 32px,#dbff03 40px,#dfff02 48px,#e3ff01 56px,#e6ff00 64px,#eaff00 72px,#eeff00 80px,#f1ff00 88px,#f5ff00 96px,#f9ff00 104px,#fdff00 112px,#fffd00 120px,#fffa00 128px,#fff600 136px,#fff200 144px,#ffef00 152px,#ffeb00 160px,#ffe800 168px,#ffe500 176px,#ffe200 184px,#ffdf00 192px,#ffdb00 200px)"></div><div style="height:3px;background:linear-gradient(90deg,#caff08 0px,#ceff07 8px,#d2ff06 16px,#d5ff05 24px,#d9ff04 32px,#dcff03 40px,#e0ff02 48px,#e4ff01 56px,#e7ff00 64px,#ebff00 72px,#efff00 80px,#f3ff00 88px,#f6ff00 96px,#faff00 104px,#feff00 112px,#fffc00 120px,#fff800 128px,#fff500 136px,#fff100 144px,#ffee00 152px,#ffea00 160px,#ffe700 168px,#ffe400 176px,#ffe100 184px,#ffdd00 192px,#ffda00 200px)"></div><div style="height:3px;background:linear-gradient(90deg,#ccff09 0px,#cfff08 8px,#d3ff07 16px,#d6ff06 24px,#daff05 32px,#deff04 40px,#e1ff03 48px,#e5ff02 56px,#e9ff01 64px,#ecff00 72px,#f0ff00 80px,#f4ff00 88px,#f8ff00 96px,#fcff00 104px,#ffff00 112px,#fffb00 120px,#fff700 128px,#fff400 136px,#fff000 144px,#ffed00 152px,#ffe900 160px,#ffe600 168px,#ffe300 176px,#ffdf00 184px,#ffdc00 192px,#ffd900 200px)"></div><div style="height:3px;background:linear-gradient(90deg,#cdff09 0px,#d0ff09 8px,#d4ff08 16px,#d7ff07 24px,#dbff06 32px,#dfff05 40px,#e2ff04 48px,#e6ff03 56px,#eaff02 64px,#eeff01 72px,#f1ff00 80px,#f5ff00 88px,#f9ff00 96px,#fdff00 104px,#fffd00 112px,#fffa00 120px,#fff600 128px,#fff200 136px,#ffef00 144px,#ffeb00 152px,#ffe800 160px,#ffe500 168px,#ffe100 176px,#ffde00 184px,#ffdb00 192px,#ffd800 200px)"></div><div style="height:3px;background:linear-gradient(90deg,#ceff0a 0px,#d1ff09 8px,#d5ff08 16px,#d9ff07 24px,#dcff07 32px,#e0ff06 40px,#e4ff05 48px,#e7ff04 56px,#ebff03 64px,#efff02 72px,#f3ff01 80px,#f6ff00 88px,#faff00 96px,#feff00 104px,#fffc00 112px,#fff800 120px,#fff500 128px,#fff100 136px,#ffee00 144px,#ffea00 152px,#ffe700 160px,#ffe400 168px,#ffe000 176px,#ffdd00 184px,#ffda00 192px,#ffd700 200px)"></div><div style="height:3px;background:linear-gradient(90deg,#cfff0b 0px,#d2ff0a 8px,#d6ff09 16px,#daff08 24px,#ddff07 32px,#e1ff06 40px,#e5ff05 48px,#e9ff04 56px,#ecff03 64px,#f0ff02 72px,#f4ff01 80px,#f8ff00 88px,#fcff00 96px,#ffff00 104px,#fffb00 112px,#fff700 120px,#fff300 128px,#fff000 136px,#ffec00 144px,#ffe900 152px,#ffe600 160px,#ffe200 168px,#ffdf00 176px,#ffdc00 184px,#ffd900 192px,#ffd600 200px)"></div><div style="height:3px;background:linear-gradient(90deg,#d0ff0c 0px,#d4ff0b 8px,#d7ff0a 16px,#dbff09 24px,#dfff08 32px,#e2ff07 40px,#e6ff06 48px,#eaff05 56px,#edff04 64px,#f1ff03 72px,#f5ff02 80px,#f9ff01 88px,#fdff00 96px,#fffd00 104px,#fffa00 112px,#fff600 120px,#fff200 128px,#ffef00 136px,#ffeb00 144px,#ffe800 152px,#ffe400 160px,#ffe100 168px,#ffde00 176px,#ffdb00 184px,#ffd800 192px,#ffd500 200px)"></div><div style="height:3px;background:linear-gradient(90deg,#d1ff0c 0px,#d5ff0b 8px,#d8ff0a 16px,#dcff0a 24px,#e0ff09 32px,#e3ff08 40px,#e7ff07 48px,#ebff06 56px,#efff05 64px,#f3ff04 72px,#f6ff03 80px,#faff02 88px,#feff01 96px,#fffc00 104px,#fff800 112px,#fff500 120px,#fff100 128px,#ffed00 136px,#ffea00 144px,#ffe700 152px,#ffe300 160px,#ffe000 168px,#ffdd00 176px,#ffda00 184px,#ffd700 192px,#ffd400 200px)"></div><div style="height:3px;background:linear-gradient(90deg,#d2ff0d 0px,#d6ff0c 8px,#d9ff0b 16px,#ddff0a 24px,#e1ff09 32px,#e5ff08 40px,#e8ff07 48px,#ecff06 56px,#f0ff05 64px,#f4ff04 72px,#f8ff03 80px,#fcff02 88px,#ffff01 96px,#fffb00 104px,#fff700 112px,#fff300 120px,#fff000 128px,#ffec00 136px,#ffe900 144px,#ffe500 152px,#ffe200 160px,#ffdf00 168px,#ffdc00 176px,#ffd900 184px,#ffd600 192px,#ffd300 200px)"></div><div style="height:3px;background:linear-gradient(90deg,#d3ff0e 0px,#d7ff0d 8px,#dbff0c 16px,#deff0b 24px,#e2ff0a 32px,#e6ff09 40px,#eaff08 48px,#edff07 56px,#f1ff06 64px,#f5ff05 72px,#f9ff04 80px,#fdff03 88px,#fffd02 96px,#fff901 104px,#fff600 112px,#fff200 120px,#ffef00 128px,#ffeb00 136px,#ffe800 144px,#ffe400 152px,#ffe100 160px,#ffde00 168px,#ffdb00 176px,#ffd800 184px,#ffd500 192px,#ffd200 200px)"></div><div style="height:3px;background:linear-gradient(90deg,#d4ff0e 0px,#d8ff0d 8px,#dcff0c 16px,#dfff0c 24px,#e3ff0b 32px,#e7ff0a 40px,#ebff09 48px,#efff08 56px,#f2ff07 64px,#f6ff06 72px,#faff05 80px,#feff04 88px,#fffc03 96px,#fff802 104px,#fff401 112px,#fff100 120px,#ffed00 128px,#ffea00 136px,#ffe600 144px,#ffe300 152px,#ffe000 160px,#ffdd00 168px,#ffda00 176px,#ffd700 184px,#ffd400 192px,#ffd100 200px)"></div><div style="height:3px;background:linear-gradient(90deg,#d6ff0f 0px,#d9ff0e 8px,#ddff0d 16px,#e1ff0c 24px,#e4ff0b 32px,#e8ff0a 40px,#ecff0a 48px,#f0ff09 56px,#f4ff08 64px,#f8ff07 72px,#fbff06 80px,#ffff05 88px,#fffb04 96px,#fff703 104px,#fff301 112px,#fff000 120px,#ffec00 128px,#ffe900 136px,#ffe500 144px,#ffe200 152px,#ffdf00 160px,#ffdc00 168px,#ffd900 176px,#ffd600 184px,#ffd300 192px,#ffd000 200px)"></div><div style="height:3px;background:linear-gradient(90deg,#d7ff10 0px,#daff0f 8px,#deff0e 16px,#e2ff0d 24px,#e6ff0c 32px,#e9ff0b 40px,#edff0a 48px,#f1ff09 56px,#f5ff08 64px,#f9ff07 72px,#fdff06 80px,#fffd05 88px,#fff904 96px,#fff603 104px,#fff202 112px,#ffee01 120px,#ffeb00 128px,#ffe700 136px,#ffe400 144px,#ffe100 152px,#ffde00 160px,#ffdb00 168px,#ffd700 176px,#ffd400 184px,#ffd200 192px,#ffcf00 200px)"></div><div style="height:3px;background:linear-gradient(90deg,#d8ff10 0px,#dcff0f 8px,#dfff0f 16px,#e3ff0e 24px,#e7ff0d 32px,#ebff0c 40px,#efff0b 48px,#f2ff0a 56px,#f6ff09 64px,#faff08 72px,#feff07 80px,#fffc06 88px,#fff805 96px,#fff404 104px,#fff103 112px,#ffed02 120px,#ffea01 128px,#ffe600 136px,#ffe300 144px,#ffe000 152px,#ffdd00 160px,#ffd900 168px,#ffd600 176px,#ffd300 184px,#ffd100 192px,#ffce00 200px)"></div><div style="height:3px;background:linear-gradient(90deg,#d9ff11 0px,#ddff10 8px,#e0ff0f 16px,#e4ff0e 24px,#e8ff0d 32px,#ecff0d 40px,#f0ff0c 48px,#f4ff0b 56px,#f8ff0a 64px,#fbff09 72px,#ffff08 80px,#fffb07 88px,#fff706 96px,#fff305 104px,#fff004 112px,#ffec03 120px,#ffe901 128px,#ffe500 136px,#ffe200 144px,#ffdf00 152px,#ffdb00 160px,#ffd800 168px,#ffd500 176px,#ffd200 184px,#ffcf00 192px,#ffcd00 200px)"></div><div style="height:3px;background:linear-gradient(90deg,#daff12 0px,#deff11 8px,#e2ff10 16px,#e5ff0f 24px,#e9ff0e 32px,#edff0d 40px,#f1ff0c 48px,#f5ff0b 56px,#f9ff0a 64px,#fdff0a 72px,#fffd08 80px,#fff907 88px,#fff606 96px,#fff205 104px,#ffee04 112px,#ffeb03 120px,#ffe702 128px,#ffe401 136px,#ffe100 144px,#ffdd00 152px,#ffda00 160px,#ffd700 168px,#ffd400 176px,#ffd100 184px,#ffce00 192px,#ffcc00 200px)"></div><div style="height:3px;background:linear-gradient(90deg,#dbff12 0px,#dfff12 8px,#e3ff11 16px,#e7ff10 24px,#ebff0f 32px,#eeff0e 40px,#f2ff0d 48px,#f6ff0c 56px,#faff0b 64px,#feff0a 72px,#fffc09 80px,#fff808 88px,#fff407 96px,#fff106 104px,#ffed05 112px,#ffea04 120px,#ffe603 128px,#ffe302 136px,#ffe001 144px,#ffdc00 152px,#ffd900 160px,#ffd600 168px,#ffd300 176px,#ffd000 184px,#ffcd00 192px,#ffcb00 200px)"></div><div style="height:3px;background:linear-gradient(90deg,#dcff13 0px,#e0ff12 8px,#e4ff11 16px,#e8ff11 24px,#ecff10 32px,#f0ff0f 40px,#f4ff0e 48px,#f8ff0d 56px,#fbff0c 64px,#ffff0b 72px,#fffb0a 80px,#fff709 88px,#fff308 96px,#ffef07 104px,#ffec06 112px,#ffe805 120px,#ffe504 128px,#ffe203 136px,#ffde02 144px,#ffdb01 152px,#ffd800 160px,#ffd500 168px,#ffd200 176px,#ffcf00 184px,#ffcc00 192px,#ffca00 200px)"></div><div style="height:3px;background:linear-gradient(90deg,#deff14 0px,#e1ff13 8px,#e5ff12 16px,#e9ff11 24px,#edff10 32px,#f1ff0f 40px,#f5ff0f 48px,#f9ff0e 56px,#fdff0d 64px,#fffd0c 72px,#fff90a 80px,#fff609 88px,#fff208 96px,#ffee07 104px,#ffeb06 112px,#ffe705 120px,#ffe404 128px,#ffe003 136px,#ffdd02 144px,#ffda01 152px,#ffd700 160px,#ffd400 168px,#ffd100 176px,#ffce00 184px,#ffcb00 192px,#ffc800 200px)"></div><div style="height:3px;background:linear-gradient(90deg,#dfff15 0px,#e3ff14 8px,#e7ff13 16px,#eaff12 24px,#eeff11 32px,#f2ff10 40px,#f6ff0f 48px,#faff0e 56px,#feff0d 64px,#fffc0c 72px,#fff80b 80px,#fff40a 88px,#fff109 96px,#ffed08 104px,#ffe907 112px,#ffe606 120px,#ffe305 128px,#ffdf04 136px,#ffdc03 144px,#ffd902 152px,#ffd601 160px,#ffd300 168px,#ffd000 176px,#ffcd00 184px,#ffca00 192px,#ffc700 200px)"></div><div style="height:3px;background:linear-gradient(90deg,#e0ff15 0px,#e4ff14 8px,#e8ff14 16px,#ecff13 24px,#f0ff12 32px,#f4ff11 40px,#f7ff10 48px,#fbff0f 56px,#ffff0e 64px,#fffb0d 72px,#fff70c 80px,#fff30b 88px,#ffef0a 96px,#ffec09 104px,#ffe808 112px,#ffe507 120px,#ffe106 128px,#ffde05 136px,#ffdb04 144px,#ffd803 152px,#ffd502 160px,#ffd201 168px,#ffcf00 176px,#ffcc00 184px,#ffc900 192px,#ffc600 200px)"></div><div style="height:3px;background:linear-gradient(90deg,#e1ff16 0px,#e5ff15 8px,#e9ff14 16px,#edff13 24px,#f1ff13 32px,#f5ff12 40px,#f9ff11 48px,#fdff10 56px,#fffd0f 64px,#fff90e 72px,#fff50c 80px,#fff20b 88px,#ffee0a 96px,#ffea09 104px,#ffe708 112px,#ffe407 120px,#ffe006 128px,#ffdd05 136px,#ffda04 144px,#ffd703 152px,#ffd402 160px,#ffd101 168px,#ffce00 176px,#ffcb00 184px,#ffc800 192px,#ffc500 200px)"></div><div style="height:3px;background:linear-gradient(90deg,#e3ff17 0px,#e6ff16 8px,#eaff15 16px,#eeff14 24px,#f2ff13 32px,#f6ff12 40px,#faff11 48px,#feff11 56px,#fffc0f 64px,#fff80e 72px,#fff40d 80px,#fff00c 88px,#ffed0b 96px,#ffe90a 104px,#ffe609 112px,#ffe208 120px,#ffdf07 128px,#ffdc06 136px,#ffd905 144px,#ffd604 152px,#ffd303 160px,#ffd002 168px,#ffcd01 176px,#ffca00 184px,#ffc700 192px,#ffc400 200px)"></div><div style="height:3px;background:linear-gradient(90deg,#e4ff18 0px,#e8ff17 8px,#ecff16 16px,#efff15 24px,#f3ff14 32px,#f7ff13 40px,#fbff12 48px,#ffff11 56px,#fffb10 64px,#fff70f 72px,#fff30e 80px,#ffef0d 88px,#ffec0c 96px,#ffe80a 104px,#ffe509 112px,#ffe108 120px,#ffde07 128px,#ffdb06 136px,#ffd805 144px,#ffd504 152px,#ffd104 160px,#ffcf03 168px,#ffcc02 176px,#ffc901 184px,#ffc600 192px,#ffc300 200px)"></div><div style="height:3px;background:linear-gradient(90deg,#e5ff18 0px,#e9ff17 8px,#edff17 16px,#f1ff16 24px,#f5ff15 32px,#f9ff14 40px,#fdff13 48px,#fffd12 56px,#fff911 64px,#fff510 72px,#fff20e 80px,#ffee0d 88px,#ffea0c 96px,#ffe70b 104px,#ffe30a 112px,#ffe009 120px,#ffdd08 128px,#ffda07 136px,#ffd606 144px,#ffd305 152px,#ffd004 160px,#ffcd03 168px,#ffcb02 176px,#ffc801 184px,#ffc500 192px,#ffc200 200px)"></div><div style="height:3px;background:linear-gradient(90deg,#e6ff19 0px,#eaff18 8px,#eeff17 16px,#f2ff16 24px,#f6ff15 32px,#faff15 40px,#feff14 48px,#fffc13 56px,#fff811 64px,#fff410 72px,#fff00f 80px,#ffed0e 88px,#ffe90d 96px,#ffe60c 104px,#ffe20b 112px,#ffdf0a 120px,#ffdc09 128px,#ffd808 136px,#ffd507 144px,#ffd206 152px,#ffcf05 160px,#ffcc04 168px,#ffca03 176px,#ffc702 184px,#ffc401 192px,#ffc100 200px)"></div><div style="height:3px;background:linear-gradient(90deg,#e7ff1a 0px,#ebff19 8px,#efff18 16px,#f3ff17 24px,#f7ff16 32px,#fbff15 40px,#fffe14 48px,#fffa13 56px,#fff712 64px,#fff311 72px,#ffef10 80px,#ffeb0f 88px,#ffe80d 96px,#ffe40c 104px,#ffe10b 112px,#ffde0a 120px,#ffda09 128px,#ffd708 136px,#ffd407 144px,#ffd106 152px,#ffce05 160px,#ffcb04 168px,#ffc904 176px,#ffc603 184px,#ffc302 192px,#ffc001 200px)"></div><div style="height:3px;background:linear-gradient(90deg,#e9ff1a 0px,#edff1a 8px,#f1ff19 16px,#f5ff18 24px,#f9ff17 32px,#fdff16 40px,#fffd15 48px,#fff914 56px,#fff513 64px,#fff111 72px,#ffee10 80px,#ffea0f 88px,#ffe70e 96px,#ffe30d 104px,#ffe00c 112px,#ffdd0b 120px,#ffd90a 128px,#ffd609 136px,#ffd308 144px,#ffd007 152px,#ffcd06 160px,#ffca05 168px,#ffc704 176px,#ffc503 184px,#ffc202 192px,#ffbf01 200px)"></div><div style="height:3px;background:linear-gradient(90deg,#eaff1b 0px,#eeff1a 8px,#f2ff1a 16px,#f6ff19 24px,#faff18 32px,#feff17 40px,#fffc16 48px,#fff814 56px,#fff413 64px,#fff012 72px,#ffed11 80px,#ffe910 88px,#ffe50f 96px,#ffe20e 104px,#ffdf0d 112px,#ffdb0c 120px,#ffd80a 128px,#ffd509 136px,#ffd209 144px,#ffcf08 152px,#ffcc07 160px,#ffc906 168px,#ffc605 176px,#ffc404 184px,#ffc103 192px,#ffbe02 200px)"></div><div style="height:3px;background:linear-gradient(90deg,#ebff1c 0px,#efff1b 8px,#f3ff1a 16px,#f7ff19 24px,#fbff18 32px,#fffe18 40px,#fffa16 48px,#fff715 56px,#fff314 64px,#ffef13 72px,#ffeb12 80px,#ffe810 88px,#ffe40f 96px,#ffe10e 104px,#ffdd0d 112px,#ffda0c 120px,#ffd70b 128px,#ffd40a 136px,#ffd109 144px,#ffce08 152px,#ffcb07 160px,#ffc806 168px,#ffc505 176px,#ffc304 184px,#ffc004 192px,#ffbd03 200px)"></div></div><svg class="a" style="left:0;top:0" width="1558" height="862" viewBox="0 0 1558 862"><rect x="1071.0" y="79.5" width="12.3" height="12.3" fill="rgba(255,255,255,0.18)" stroke="#f4f4f4" stroke-width="1.4"/><rect x="1082.4" y="90.5" width="12.3" height="12.3" fill="rgba(255,255,255,0.18)" stroke="#f4f4f4" stroke-width="1.4"/><rect x="1094.0" y="102.8" width="12.3" height="12.3" fill="rgba(255,255,255,0.18)" stroke="#f4f4f4" stroke-width="1.4"/><rect x="1108.6" y="116.8" width="12.3" height="12.3" fill="rgba(255,255,255,0.18)" stroke="#f4f4f4" stroke-width="1.4"/><rect x="1124.2" y="131.7" width="12.3" height="12.3" fill="rgba(255,255,255,0.18)" stroke="#f4f4f4" stroke-width="1.4"/><circle cx="1075.3" cy="85.3" r="3.7" fill="#14b414" stroke="#111" stroke-width="1.2"/><circle cx="1085.5" cy="95.5" r="3.7" fill="#58a858" stroke="#111" stroke-width="1.2"/><circle cx="1098.3" cy="108.3" r="3.7" fill="#6aa86a" stroke="#111" stroke-width="1.2"/><circle cx="1112.5" cy="121.2" r="3.7" fill="#80ae80" stroke="#111" stroke-width="1.2"/><circle cx="1127.5" cy="137.5" r="3.7" fill="#9cb49c" stroke="#111" stroke-width="1.2"/><rect x="1085.5" y="162.7" width="12.3" height="12.3" fill="rgba(255,255,255,0.18)" stroke="#f4f4f4" stroke-width="1.4"/><rect x="1096.4" y="159.7" width="12.3" height="12.3" fill="rgba(255,255,255,0.18)" stroke="#f4f4f4" stroke-width="1.4"/><rect x="1107.5" y="158.5" width="12.3" height="12.3" fill="rgba(255,255,255,0.18)" stroke="#f4f4f4" stroke-width="1.4"/><rect x="1120.0" y="156.8" width="12.3" height="12.3" fill="rgba(255,255,255,0.18)" stroke="#f4f4f4" stroke-width="1.4"/><rect x="1132.6" y="155.0" width="12.3" height="12.3" fill="rgba(255,255,255,0.18)" stroke="#f4f4f4" stroke-width="1.4"/><circle cx="1086.5" cy="168.2" r="3.7" fill="#20b4c4" stroke="#111" stroke-width="1.2"/><circle cx="1098.3" cy="166.0" r="3.7" fill="#58b0b8" stroke="#111" stroke-width="1.2"/><circle cx="1110.8" cy="163.0" r="3.7" fill="#78b0b0" stroke="#111" stroke-width="1.2"/><circle cx="1122.4" cy="162.2" r="3.7" fill="#90b4b4" stroke="#111" stroke-width="1.2"/><circle cx="1133.5" cy="159.1" r="3.7" fill="#a4b8b8" stroke="#111" stroke-width="1.2"/><rect x="1395.8" y="109.9" width="12.3" height="12.3" fill="rgba(255,255,255,0.18)" stroke="#f4f4f4" stroke-width="1.4"/><rect x="1336.2" y="119.1" width="12.3" height="12.3" fill="rgba(255,255,255,0.18)" stroke="#f4f4f4" stroke-width="1.4"/><rect x="1285.1" y="128.2" width="12.3" height="12.3" fill="rgba(255,255,255,0.18)" stroke="#f4f4f4" stroke-width="1.4"/><rect x="1238.3" y="135.5" width="12.3" height="12.3" fill="rgba(255,255,255,0.18)" stroke="#f4f4f4" stroke-width="1.4"/><rect x="1188.5" y="144.7" width="12.3" height="12.3" fill="rgba(255,255,255,0.18)" stroke="#f4f4f4" stroke-width="1.4"/><circle cx="1398.0" cy="115.0" r="3.7" fill="#c83040" stroke="#111" stroke-width="1.2"/><circle cx="1345.3" cy="123.4" r="3.7" fill="#b85868" stroke="#111" stroke-width="1.2"/><circle cx="1290.5" cy="134.4" r="3.7" fill="#b07078" stroke="#111" stroke-width="1.2"/><circle cx="1241.9" cy="141.0" r="3.7" fill="#b08488" stroke="#111" stroke-width="1.2"/><circle cx="1192.0" cy="150.2" r="3.7" fill="#b09898" stroke="#111" stroke-width="1.2"/><rect x="1251.1" y="257.8" width="12.3" height="12.3" fill="rgba(255,255,255,0.18)" stroke="#f4f4f4" stroke-width="1.4"/><rect x="1219.5" y="228.5" width="12.3" height="12.3" fill="rgba(255,255,255,0.18)" stroke="#f4f4f4" stroke-width="1.4"/><rect x="1195.8" y="204.2" width="12.3" height="12.3" fill="rgba(255,255,255,0.18)" stroke="#f4f4f4" stroke-width="1.4"/><rect x="1177.6" y="184.8" width="12.3" height="12.3" fill="rgba(255,255,255,0.18)" stroke="#f4f4f4" stroke-width="1.4"/><rect x="1160.4" y="167.5" width="12.3" height="12.3" fill="rgba(255,255,255,0.18)" stroke="#f4f4f4" stroke-width="1.4"/><circle cx="1254.0" cy="263.9" r="3.7" fill="#b830b0" stroke="#111" stroke-width="1.2"/><circle cx="1223.0" cy="234.7" r="3.7" fill="#b468b4" stroke="#111" stroke-width="1.2"/><circle cx="1199.4" cy="209.2" r="3.7" fill="#b080b4" stroke="#111" stroke-width="1.2"/><circle cx="1181.1" cy="190.9" r="3.7" fill="#b090b4" stroke="#111" stroke-width="1.2"/><circle cx="1163.3" cy="173.3" r="3.7" fill="#b0a0b4" stroke="#111" stroke-width="1.2"/><rect x="1122.2" y="390.2" width="12.3" height="12.3" fill="rgba(255,255,255,0.18)" stroke="#f4f4f4" stroke-width="1.4"/><rect x="1129.5" y="310.7" width="12.3" height="12.3" fill="rgba(255,255,255,0.18)" stroke="#f4f4f4" stroke-width="1.4"/><rect x="1133.8" y="256.5" width="12.3" height="12.3" fill="rgba(255,255,255,0.18)" stroke="#f4f4f4" stroke-width="1.4"/><rect x="1138.0" y="215.2" width="12.3" height="12.3" fill="rgba(255,255,255,0.18)" stroke="#f4f4f4" stroke-width="1.4"/><rect x="1141.2" y="178.8" width="12.3" height="12.3" fill="rgba(255,255,255,0.18)" stroke="#f4f4f4" stroke-width="1.4"/><circle cx="1116.7" cy="401.9" r="3.7" fill="#3030c0" stroke="#111" stroke-width="1.2"/><circle cx="1127.0" cy="324.0" r="3.7" fill="#5858b8" stroke="#111" stroke-width="1.2"/><circle cx="1134.9" cy="263.9" r="3.7" fill="#7070b8" stroke="#111" stroke-width="1.2"/><circle cx="1141.0" cy="220.7" r="3.7" fill="#8888bc" stroke="#111" stroke-width="1.2"/><circle cx="1144.2" cy="185.6" r="3.7" fill="#a0a0c0" stroke="#111" stroke-width="1.2"/><rect x="1149.5" y="86.9" width="12.3" height="12.3" fill="rgba(255,255,255,0.18)" stroke="#f4f4f4" stroke-width="1.4"/><rect x="1148.4" y="97.9" width="12.3" height="12.3" fill="rgba(255,255,255,0.18)" stroke="#f4f4f4" stroke-width="1.4"/><rect x="1147.4" y="108.5" width="12.3" height="12.3" fill="rgba(255,255,255,0.18)" stroke="#f4f4f4" stroke-width="1.4"/><rect x="1146.3" y="121.0" width="12.3" height="12.3" fill="rgba(255,255,255,0.18)" stroke="#f4f4f4" stroke-width="1.4"/><rect x="1144.9" y="135.7" width="12.3" height="12.3" fill="rgba(255,255,255,0.18)" stroke="#f4f4f4" stroke-width="1.4"/><circle cx="1154.2" cy="92.3" r="3.7" fill="#c4bc30" stroke="#111" stroke-width="1.2"/><circle cx="1152.9" cy="103.2" r="3.7" fill="#bcb454" stroke="#111" stroke-width="1.2"/><circle cx="1151.6" cy="114.4" r="3.7" fill="#bcb470" stroke="#111" stroke-width="1.2"/><circle cx="1150.2" cy="126.9" r="3.7" fill="#bcbc8c" stroke="#111" stroke-width="1.2"/><circle cx="1148.4" cy="141.0" r="3.7" fill="#bcbca4" stroke="#111" stroke-width="1.2"/><rect x="1143.6" y="151.8" width="12.3" height="12.3" fill="rgba(255,255,255,0.6)" stroke="#111" stroke-width="1.4"/><circle cx="1145.5" cy="158.4" r="4.1" fill="#ffffff" stroke="#111" stroke-width="1.2"/><circle cx="1446.5" cy="434.5" r="4.6" fill="#a8a400" stroke="#111" stroke-width="1.2"/><rect x="1440.5" y="437.8" width="12.5" height="12.5" fill="rgba(255,255,255,0.15)" stroke="#f4f4f4" stroke-width="1.4"/></svg></body></html>
